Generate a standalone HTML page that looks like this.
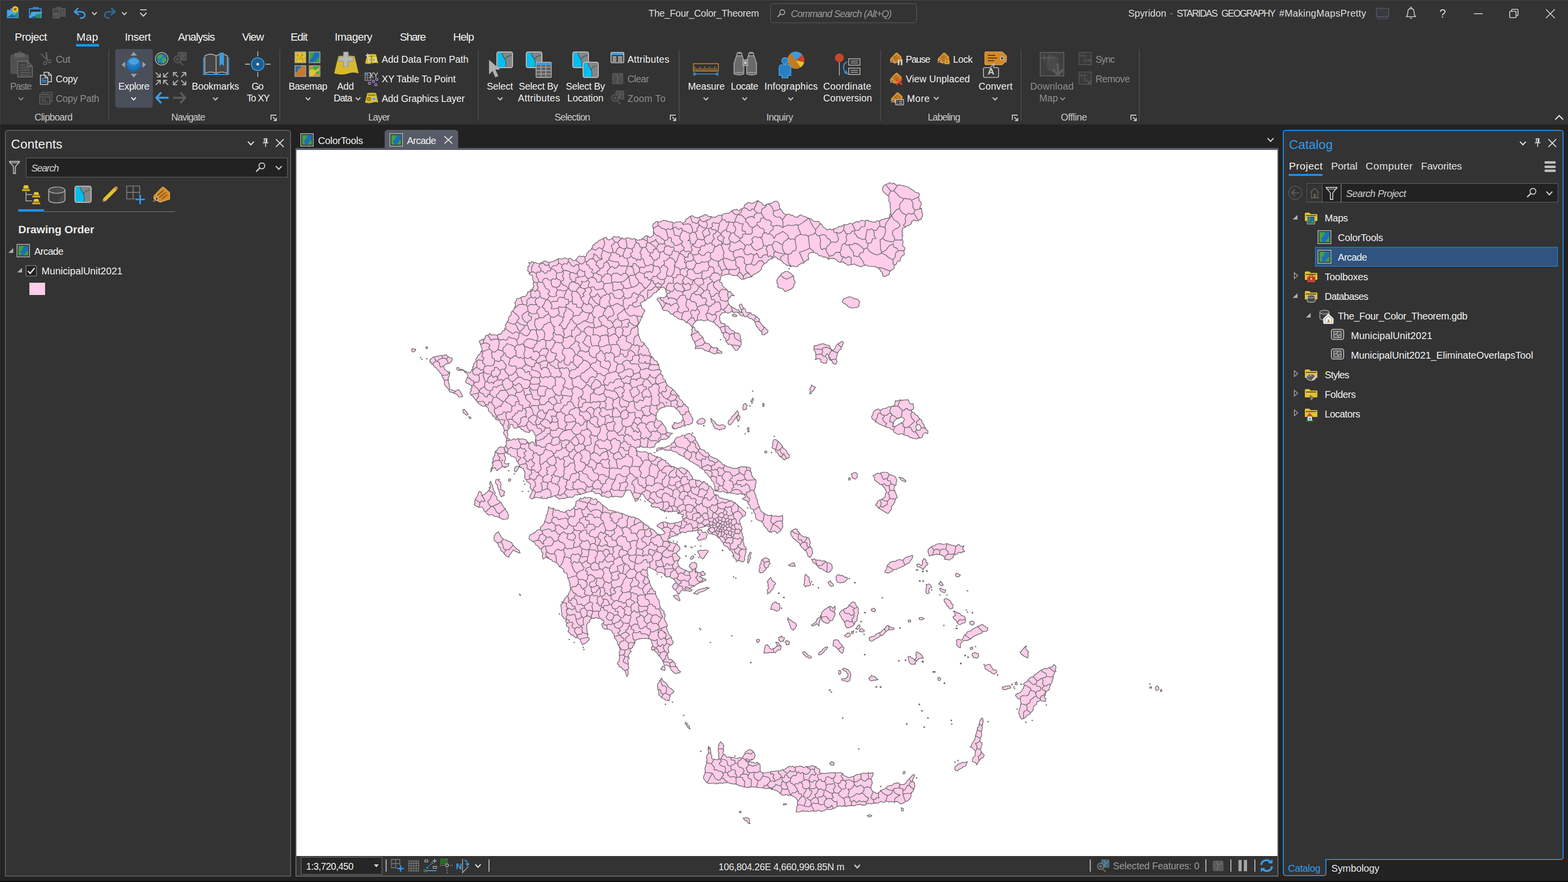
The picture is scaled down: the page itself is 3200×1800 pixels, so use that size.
<!DOCTYPE html>
<html lang="en">
<head>
<meta charset="utf-8">
<title>The_Four_Color_Theorem - ArcGIS Pro</title>
<style>
html,body{margin:0;padding:0;}
body{width:3200px;height:1800px;position:relative;overflow:hidden;background:#222;font-family:"Liberation Sans",sans-serif;}
div,span.t,svg.i{position:absolute;}
span.t{white-space:nowrap;line-height:1;}
svg.i{overflow:visible;}
</style>
</head>
<body>
<div class="ribbon" style="left:0px;top:0px;width:3200px;height:254px;background:#333333;"></div>
<div style="left:0px;top:0px;width:3200px;height:1px;background:#454545;"></div>
<div style="left:0px;top:0px;width:1px;height:254px;background:#444444;"></div>
<div style="left:0px;top:254px;width:1px;height:1546px;background:#2a2a2a;"></div>
<span class="t" style="left:1323.5px;top:18.1px;font-size:19.5px;color:#dedede;letter-spacing:-0.26px;">The_Four_Color_Theorem</span>
<div style="left:1572px;top:7px;width:299px;height:39.5px;border:1.5px solid #606060;border-radius:6px;box-sizing:border-box;"></div>
<span class="t" style="left:1614.0px;top:18.5px;font-size:19.5px;color:#9a9a9a;letter-spacing:-0.90px;font-style:italic;">Command Search (Alt+Q)</span>
<span id="user-label">
<span class="t" style="left:2302.5px;top:18.1px;font-size:19.5px;color:#dedede;letter-spacing:0.08px;">Spyridon</span>
<span class="t" style="left:2387.5px;top:18.1px;font-size:19.5px;color:#8c8c8c;">-</span>
<span class="t" style="left:2401.5px;top:18.1px;font-size:19.5px;color:#dedede;letter-spacing:-1.74px;">STARIDAS</span>
<span class="t" style="left:2492.5px;top:18.1px;font-size:19.5px;color:#dedede;letter-spacing:-1.85px;">GEOGRAPHY</span>
<span class="t" style="left:2610.6px;top:18.1px;font-size:19.5px;color:#dedede;letter-spacing:0.32px;">#MakingMapsPretty</span>
</span>
<span class="t" style="left:2937.5px;top:16.2px;font-size:24px;color:#d6d6d6;">?</span>
<span class="t" style="left:30.0px;top:65.0px;font-size:22.5px;color:#f2f2f2;letter-spacing:-0.62px;">Project</span>
<span class="t" style="left:156.0px;top:65.0px;font-size:22.5px;color:#f2f2f2;letter-spacing:0.27px;">Map</span>
<span class="t" style="left:254.7px;top:65.0px;font-size:22.5px;color:#f2f2f2;letter-spacing:-0.59px;">Insert</span>
<span class="t" style="left:363.0px;top:65.0px;font-size:22.5px;color:#f2f2f2;letter-spacing:-1.11px;">Analysis</span>
<span class="t" style="left:494.0px;top:65.0px;font-size:22.5px;color:#f2f2f2;letter-spacing:-1.12px;">View</span>
<span class="t" style="left:593.0px;top:65.0px;font-size:22.5px;color:#f2f2f2;letter-spacing:-1.26px;">Edit</span>
<span class="t" style="left:683.0px;top:65.0px;font-size:22.5px;color:#f2f2f2;letter-spacing:-0.71px;">Imagery</span>
<span class="t" style="left:816.0px;top:65.0px;font-size:22.5px;color:#f2f2f2;letter-spacing:-1.61px;">Share</span>
<span class="t" style="left:924.8px;top:65.0px;font-size:22.5px;color:#f2f2f2;letter-spacing:-1.12px;">Help</span>
<div style="left:155px;top:90px;width:47px;height:5px;background:#0f9bf5;"></div>
<div style="left:221px;top:101px;width:2px;height:146px;background:#484848;"></div>
<div style="left:570px;top:101px;width:2px;height:146px;background:#484848;"></div>
<div style="left:975px;top:101px;width:2px;height:146px;background:#484848;"></div>
<div style="left:1385px;top:101px;width:2px;height:146px;background:#484848;"></div>
<div style="left:1796px;top:101px;width:2px;height:146px;background:#484848;"></div>
<div style="left:2083px;top:101px;width:2px;height:146px;background:#484848;"></div>
<div style="left:2324px;top:101px;width:2px;height:146px;background:#484848;"></div>
<span class="t" style="left:70.6px;top:229.5px;font-size:19.5px;color:#c8c8c8;letter-spacing:-0.72px;">Clipboard</span>
<span class="t" style="left:349.4px;top:229.5px;font-size:19.5px;color:#c8c8c8;letter-spacing:-1.05px;">Navigate</span>
<span class="t" style="left:751.5px;top:229.5px;font-size:19.5px;color:#c8c8c8;letter-spacing:-1.07px;">Layer</span>
<span class="t" style="left:1131.7px;top:229.5px;font-size:19.5px;color:#c8c8c8;letter-spacing:-0.90px;">Selection</span>
<span class="t" style="left:1564.0px;top:229.5px;font-size:19.5px;color:#c8c8c8;letter-spacing:-0.65px;">Inquiry</span>
<span class="t" style="left:1893.5px;top:229.5px;font-size:19.5px;color:#c8c8c8;letter-spacing:-1.03px;">Labeling</span>
<span class="t" style="left:2165.0px;top:229.5px;font-size:19.5px;color:#c8c8c8;letter-spacing:-0.40px;">Offline</span>
<svg class="i" style="left:552px;top:234px;" width="14" height="13" viewBox="0 0 14 13"><path d="M1 11 V1 H12" fill="none" stroke="#d0d0d0" stroke-width="1.8"/><path d="M5 5 L12 12 M12 6.5 V12 H6.5" fill="none" stroke="#d0d0d0" stroke-width="1.8"/></svg>
<svg class="i" style="left:1367px;top:234px;" width="14" height="13" viewBox="0 0 14 13"><path d="M1 11 V1 H12" fill="none" stroke="#d0d0d0" stroke-width="1.8"/><path d="M5 5 L12 12 M12 6.5 V12 H6.5" fill="none" stroke="#d0d0d0" stroke-width="1.8"/></svg>
<svg class="i" style="left:2065px;top:234px;" width="14" height="13" viewBox="0 0 14 13"><path d="M1 11 V1 H12" fill="none" stroke="#d0d0d0" stroke-width="1.8"/><path d="M5 5 L12 12 M12 6.5 V12 H6.5" fill="none" stroke="#d0d0d0" stroke-width="1.8"/></svg>
<svg class="i" style="left:2306.5px;top:234px;" width="14" height="13" viewBox="0 0 14 13"><path d="M1 11 V1 H12" fill="none" stroke="#d0d0d0" stroke-width="1.8"/><path d="M5 5 L12 12 M12 6.5 V12 H6.5" fill="none" stroke="#d0d0d0" stroke-width="1.8"/></svg>
<div style="left:235px;top:100px;width:77px;height:120px;background:#4a4e59;border-radius:5px;"></div>
<span class="t" style="left:20.7px;top:166.5px;font-size:19.5px;color:#8e8e8e;letter-spacing:-1.34px;">Paste</span>
<span class="t" style="left:241.5px;top:166.5px;font-size:19.5px;color:#f2f2f2;letter-spacing:-0.44px;">Explore</span>
<span class="t" style="left:391.6px;top:166.5px;font-size:19.5px;color:#f2f2f2;letter-spacing:-0.14px;">Bookmarks</span>
<span class="t" style="left:513.5px;top:166.5px;font-size:19.5px;color:#f2f2f2;letter-spacing:-1.51px;">Go</span>
<span class="t" style="left:503.4px;top:190.5px;font-size:19.5px;color:#f2f2f2;letter-spacing:-1.16px;">To XY</span>
<span class="t" style="left:589.0px;top:166.5px;font-size:19.5px;color:#f2f2f2;letter-spacing:-0.56px;">Basemap</span>
<span class="t" style="left:688.0px;top:166.5px;font-size:19.5px;color:#f2f2f2;letter-spacing:-0.15px;">Add</span>
<span class="t" style="left:681.0px;top:190.5px;font-size:19.5px;color:#f2f2f2;letter-spacing:-1.06px;">Data</span>
<span class="t" style="left:993.5px;top:166.5px;font-size:19.5px;color:#f2f2f2;letter-spacing:-0.14px;">Select</span>
<span class="t" style="left:1058.7px;top:166.5px;font-size:19.5px;color:#f2f2f2;letter-spacing:-0.26px;">Select By</span>
<span class="t" style="left:1057.0px;top:190.5px;font-size:19.5px;color:#f2f2f2;letter-spacing:0.40px;">Attributes</span>
<span class="t" style="left:1154.7px;top:166.5px;font-size:19.5px;color:#f2f2f2;letter-spacing:-0.28px;">Select By</span>
<span class="t" style="left:1157.8px;top:190.5px;font-size:19.5px;color:#f2f2f2;letter-spacing:0.02px;">Location</span>
<span class="t" style="left:1404.0px;top:166.5px;font-size:19.5px;color:#f2f2f2;letter-spacing:-0.14px;">Measure</span>
<span class="t" style="left:1491.6px;top:166.5px;font-size:19.5px;color:#f2f2f2;letter-spacing:-0.53px;">Locate</span>
<span class="t" style="left:1560.0px;top:166.5px;font-size:19.5px;color:#f2f2f2;letter-spacing:0.25px;">Infographics</span>
<span class="t" style="left:1680.0px;top:166.5px;font-size:19.5px;color:#f2f2f2;letter-spacing:0.29px;">Coordinate</span>
<span class="t" style="left:1680.0px;top:190.5px;font-size:19.5px;color:#f2f2f2;letter-spacing:0.10px;">Conversion</span>
<span class="t" style="left:1997.0px;top:166.5px;font-size:19.5px;color:#f2f2f2;letter-spacing:0.20px;">Convert</span>
<span class="t" style="left:2102.5px;top:166.5px;font-size:19.5px;color:#8e8e8e;letter-spacing:0.25px;">Download</span>
<span class="t" style="left:2121.0px;top:190.5px;font-size:19.5px;color:#8e8e8e;letter-spacing:0.03px;">Map</span>
<span class="t" style="left:113.8px;top:111.9px;font-size:19.5px;color:#8e8e8e;letter-spacing:-0.27px;">Cut</span>
<span class="t" style="left:113.8px;top:151.5px;font-size:19.5px;color:#f2f2f2;letter-spacing:-0.21px;">Copy</span>
<span class="t" style="left:113.8px;top:191.5px;font-size:19.5px;color:#8e8e8e;letter-spacing:-0.28px;">Copy Path</span>
<span class="t" style="left:779.0px;top:111.9px;font-size:19.5px;color:#f2f2f2;letter-spacing:-0.04px;">Add Data From Path</span>
<span class="t" style="left:779.0px;top:151.5px;font-size:19.5px;color:#f2f2f2;letter-spacing:-0.12px;">XY Table To Point</span>
<span class="t" style="left:779.0px;top:191.5px;font-size:19.5px;color:#f2f2f2;letter-spacing:-0.17px;">Add Graphics Layer</span>
<span class="t" style="left:1280.4px;top:111.9px;font-size:19.5px;color:#f2f2f2;letter-spacing:0.36px;">Attributes</span>
<span class="t" style="left:1280.4px;top:151.5px;font-size:19.5px;color:#8e8e8e;letter-spacing:-0.55px;">Clear</span>
<span class="t" style="left:1280.4px;top:191.5px;font-size:19.5px;color:#8e8e8e;letter-spacing:0.35px;">Zoom To</span>
<span class="t" style="left:1848.4px;top:111.9px;font-size:19.5px;color:#f2f2f2;letter-spacing:-1.22px;">Pause</span>
<span class="t" style="left:1945.0px;top:111.9px;font-size:19.5px;color:#f2f2f2;letter-spacing:-0.40px;">Lock</span>
<span class="t" style="left:1848.4px;top:151.5px;font-size:19.5px;color:#f2f2f2;letter-spacing:0.11px;">View Unplaced</span>
<span class="t" style="left:1851.0px;top:191.5px;font-size:19.5px;color:#f2f2f2;letter-spacing:0.52px;">More</span>
<span class="t" style="left:2235.7px;top:111.9px;font-size:19.5px;color:#8e8e8e;letter-spacing:-1.18px;">Sync</span>
<span class="t" style="left:2235.7px;top:151.5px;font-size:19.5px;color:#8e8e8e;letter-spacing:-0.46px;">Remove</span>
<svg class="i" style="left:36.25px;top:196.5px;" width="13.5" height="9" viewBox="0 0 13.5 9"><path d="M2 2 L6.75 7 L11.5 2" fill="none" stroke="#8e8e8e" stroke-width="2.2"/></svg>
<svg class="i" style="left:266.25px;top:196.5px;" width="13.5" height="9" viewBox="0 0 13.5 9"><path d="M2 2 L6.75 7 L11.5 2" fill="none" stroke="#f2f2f2" stroke-width="2.2"/></svg>
<svg class="i" style="left:433.25px;top:196.5px;" width="13.5" height="9" viewBox="0 0 13.5 9"><path d="M2 2 L6.75 7 L11.5 2" fill="none" stroke="#d0d0d0" stroke-width="2.2"/></svg>
<svg class="i" style="left:622.25px;top:196.5px;" width="13.5" height="9" viewBox="0 0 13.5 9"><path d="M2 2 L6.75 7 L11.5 2" fill="none" stroke="#d0d0d0" stroke-width="2.2"/></svg>
<svg class="i" style="left:723.75px;top:196.5px;" width="13.5" height="9" viewBox="0 0 13.5 9"><path d="M2 2 L6.75 7 L11.5 2" fill="none" stroke="#d0d0d0" stroke-width="2.2"/></svg>
<svg class="i" style="left:1013.75px;top:196.5px;" width="13.5" height="9" viewBox="0 0 13.5 9"><path d="M2 2 L6.75 7 L11.5 2" fill="none" stroke="#d0d0d0" stroke-width="2.2"/></svg>
<svg class="i" style="left:1434.25px;top:196.5px;" width="13.5" height="9" viewBox="0 0 13.5 9"><path d="M2 2 L6.75 7 L11.5 2" fill="none" stroke="#d0d0d0" stroke-width="2.2"/></svg>
<svg class="i" style="left:1513.25px;top:196.5px;" width="13.5" height="9" viewBox="0 0 13.5 9"><path d="M2 2 L6.75 7 L11.5 2" fill="none" stroke="#d0d0d0" stroke-width="2.2"/></svg>
<svg class="i" style="left:1607.25px;top:196.5px;" width="13.5" height="9" viewBox="0 0 13.5 9"><path d="M2 2 L6.75 7 L11.5 2" fill="none" stroke="#d0d0d0" stroke-width="2.2"/></svg>
<svg class="i" style="left:1903.75px;top:195.5px;" width="13.5" height="9" viewBox="0 0 13.5 9"><path d="M2 2 L6.75 7 L11.5 2" fill="none" stroke="#d0d0d0" stroke-width="2.2"/></svg>
<svg class="i" style="left:2023.95px;top:196.5px;" width="13.5" height="9" viewBox="0 0 13.5 9"><path d="M2 2 L6.75 7 L11.5 2" fill="none" stroke="#d0d0d0" stroke-width="2.2"/></svg>
<svg class="i" style="left:2162.25px;top:196.5px;" width="13.5" height="9" viewBox="0 0 13.5 9"><path d="M2 2 L6.75 7 L11.5 2" fill="none" stroke="#8e8e8e" stroke-width="2.2"/></svg>
<svg class="i" style="left:185.75px;top:23.0px;" width="13.5" height="9" viewBox="0 0 13.5 9"><path d="M2 2 L6.75 7 L11.5 2" fill="none" stroke="#d0d0d0" stroke-width="2.2"/></svg>
<svg class="i" style="left:247.45px;top:23.0px;" width="13.5" height="9" viewBox="0 0 13.5 9"><path d="M2 2 L6.75 7 L11.5 2" fill="none" stroke="#d0d0d0" stroke-width="2.2"/></svg>
<svg class="i" style="left:3170px;top:232px;" width="24" height="16" viewBox="0 0 24 16"><path d="M4 12 L12 4 L20 12" fill="none" stroke="#e6e6e6" stroke-width="2.4"/></svg>
<svg class="i" style="left:3006px;top:20px;" width="22" height="16" viewBox="0 0 22 16"><path d="M2 8 H20" stroke="#e0e0e0" stroke-width="1.6"/></svg>
<svg class="i" style="left:3078px;top:16px;" width="24" height="24" viewBox="0 0 24 24"><rect x="3" y="7" width="13" height="13" fill="none" stroke="#e0e0e0" stroke-width="1.6" rx="1.5"/><path d="M7 7 V4.5 Q7 3 8.5 3 H18.5 Q20 3 20 4.5 V14.5 Q20 16 18.5 16 H16" fill="none" stroke="#e0e0e0" stroke-width="1.6"/></svg>
<svg class="i" style="left:3152px;top:16px;" width="24" height="24" viewBox="0 0 24 24"><path d="M3 3 L21 21 M21 3 L3 21" stroke="#e0e0e0" stroke-width="1.7"/></svg>
<div class="pane" style="left:10px;top:265px;width:583.5px;height:1523.5px;background:#333333;border:2px solid #5b5d61;border-radius:6px 6px 0 0;box-sizing:border-box;"></div>
<span class="t" style="left:22.5px;top:280.6px;font-size:26px;color:#f2f2f2;letter-spacing:0.11px;">Contents</span>
<svg class="i" style="left:503.5px;top:286.75px;" width="16" height="10.5" viewBox="0 0 16 10.5"><path d="M2 2 L8.0 8.5 L14 2" fill="none" stroke="#e0e0e0" stroke-width="2.4"/></svg>
<svg class="i" style="left:560px;top:281px;" width="22" height="22" viewBox="0 0 22 22"><path d="M3 3 L19 19 M19 3 L3 19" stroke="#e0e0e0" stroke-width="1.8"/></svg>
<div style="left:53px;top:322px;width:534px;height:40px;background:#222222;border:1.5px solid #6a6a6a;box-sizing:border-box;"></div>
<span class="t" style="left:63.7px;top:332.7px;font-size:20px;color:#cfcfcf;letter-spacing:-1.31px;font-style:italic;">Search</span>
<svg class="i" style="left:561.0px;top:336.75px;" width="16" height="10.5" viewBox="0 0 16 10.5"><path d="M2 2 L8.0 8.5 L14 2" fill="none" stroke="#d0d0d0" stroke-width="2.4"/></svg>
<div style="left:37px;top:427px;width:53px;height:5px;background:#1e90f0;"></div>
<div style="left:90px;top:431px;width:267px;height:1.5px;background:#5c5c5c;"></div>
<span class="t" style="left:37.3px;top:457.6px;font-size:22.5px;color:#e8e8e8;letter-spacing:-0.09px;font-weight:bold;">Drawing Order</span>
<span class="t" style="left:70.0px;top:502.6px;font-size:20px;color:#f2f2f2;letter-spacing:-0.77px;">Arcade</span>
<span class="t" style="left:84.8px;top:543.1px;font-size:20px;color:#f2f2f2;letter-spacing:0.04px;">MunicipalUnit2021</span>
<div style="left:59.5px;top:576.5px;width:32.5px;height:25.5px;background:#ffcce9;border:1px solid #e0e0e0;box-sizing:border-box;"></div>
<div class="mapview" style="left:603px;top:302px;width:2005.5px;height:1486.5px;background:#333;border:2px solid #66686e;box-sizing:border-box;border-top:none;"></div>
<div style="left:785px;top:265px;width:150px;height:40px;background:#585c68;border-radius:6px 6px 0 0;"></div>
<div style="left:604px;top:302px;width:2004px;height:5px;background:#585c68;"></div>
<span class="t" style="left:649.0px;top:276.5px;font-size:20px;color:#f2f2f2;letter-spacing:-0.28px;">ColorTools</span>
<span class="t" style="left:830.4px;top:276.5px;font-size:20px;color:#f2f2f2;letter-spacing:-0.75px;">Arcade</span>
<svg class="i" style="left:904px;top:275px;" width="22" height="22" viewBox="0 0 22 22"><path d="M3 3 L19 18 M19 3 L3 18" stroke="#e8e8e8" stroke-width="1.8"/></svg>
<svg class="i" style="left:2585.0px;top:279.75px;" width="16" height="10.5" viewBox="0 0 16 10.5"><path d="M2 2 L8.0 8.5 L14 2" fill="none" stroke="#d0d0d0" stroke-width="2.4"/></svg>
<div style="left:613.5px;top:1749px;width:166px;height:35.5px;background:#262626;border:1.5px solid #7a7a7a;box-sizing:border-box;"></div>
<span class="t" style="left:624.7px;top:1758.5px;font-size:19.5px;color:#f2f2f2;letter-spacing:-0.61px;">1:3,720,450</span>
<svg class="i" style="left:762px;top:1763px;" width="12" height="8" viewBox="0 0 12 8"><path d="M1 1 H11 L6 7 Z" fill="#d8d8d8"/></svg>
<div style="left:787.25px;top:1754px;width:1.5px;height:25px;background:#b8b8b8;"></div>
<div style="left:997.25px;top:1754px;width:1.5px;height:25px;background:#b8b8b8;"></div>
<div style="left:2224.25px;top:1754px;width:1.5px;height:25px;background:#b8b8b8;"></div>
<div style="left:2460.25px;top:1754px;width:1.5px;height:25px;background:#b8b8b8;"></div>
<div style="left:2511.25px;top:1754px;width:1.5px;height:25px;background:#b8b8b8;"></div>
<div style="left:2560.25px;top:1754px;width:1.5px;height:25px;background:#b8b8b8;"></div>
<svg class="i" style="left:968.2px;top:1762.0px;" width="15" height="10" viewBox="0 0 15 10"><path d="M2 2 L7.5 8 L13 2" fill="none" stroke="#e0e0e0" stroke-width="2.4"/></svg>
<span class="t" style="left:1466.4px;top:1760.1px;font-size:19.5px;color:#e8e8e8;letter-spacing:-0.33px;">106,804.26E 4,660,996.85N m</span>
<svg class="i" style="left:1741.5px;top:1763.0px;" width="15" height="10" viewBox="0 0 15 10"><path d="M2 2 L7.5 8 L13 2" fill="none" stroke="#c0c0c0" stroke-width="3"/></svg>
<div style="left:2232px;top:1750px;width:222px;height:34px;background:#2f2f2f;"></div>
<span class="t" style="left:2271.6px;top:1758.3px;font-size:19.5px;color:#9a9a9a;letter-spacing:-0.19px;">Selected Features: 0</span>
<div class="pane" style="left:2618px;top:265px;width:573px;height:1490px;background:#333333;border:2px solid #2391ee;border-radius:6px;box-sizing:border-box;"></div>
<div style="left:2618px;top:1753px;width:89px;height:35px;background:#333333;border:2px solid #2391ee;border-radius:0 0 6px 6px;box-sizing:border-box;border-top:none;"></div>
<div style="left:2620px;top:1745px;width:85px;height:12px;background:#333333;"></div>
<div style="left:2618px;top:1740px;width:2px;height:16px;background:#2391ee;"></div>
<span class="t" style="left:2628.6px;top:1761.9px;font-size:20px;color:#2d9cf4;letter-spacing:-0.46px;">Catalog</span>
<span class="t" style="left:2717.0px;top:1761.9px;font-size:20px;color:#e8e8e8;letter-spacing:-0.12px;">Symbology</span>
<span class="t" style="left:2630.4px;top:282.0px;font-size:26px;color:#2d9cf4;">Catalog</span>
<svg class="i" style="left:3100.0px;top:286.75px;" width="16" height="10.5" viewBox="0 0 16 10.5"><path d="M2 2 L8.0 8.5 L14 2" fill="none" stroke="#e0e0e0" stroke-width="2.4"/></svg>
<svg class="i" style="left:3157px;top:281px;" width="22" height="22" viewBox="0 0 22 22"><path d="M3 3 L19 19 M19 3 L3 19" stroke="#e0e0e0" stroke-width="1.8"/></svg>
<span class="t" style="left:2630.4px;top:327.7px;font-size:21px;color:#f2f2f2;letter-spacing:0.54px;">Project</span>
<div style="left:2630px;top:355px;width:69px;height:4px;background:#1e90f0;"></div>
<span class="t" style="left:2716.5px;top:327.7px;font-size:21px;color:#e0e0e0;letter-spacing:-0.19px;">Portal</span>
<span class="t" style="left:2787.0px;top:327.7px;font-size:21px;color:#e0e0e0;letter-spacing:0.54px;">Computer</span>
<span class="t" style="left:2900.0px;top:327.7px;font-size:21px;color:#e0e0e0;letter-spacing:-0.32px;">Favorites</span>
<div style="left:3152px;top:329.0px;width:23px;height:5px;background:#bdbdbd;border-radius:2px;"></div>
<div style="left:3152px;top:337.5px;width:23px;height:5px;background:#bdbdbd;border-radius:2px;"></div>
<div style="left:3152px;top:346.0px;width:23px;height:5px;background:#bdbdbd;border-radius:2px;"></div>
<div style="left:2667px;top:374px;width:513px;height:39px;background:#222222;border:1.5px solid #6a6a6a;box-sizing:border-box;"></div>
<div style="left:2668.5px;top:375.5px;width:29px;height:36px;background:#333;"></div>
<div style="left:2697.5px;top:375.5px;width:1.5px;height:36px;background:#6a6a6a;"></div>
<div style="left:2736px;top:375.5px;width:1.5px;height:36px;background:#6a6a6a;"></div>
<span class="t" style="left:2747.0px;top:384.6px;font-size:20px;color:#cfcfcf;letter-spacing:-0.64px;font-style:italic;">Search Project</span>
<svg class="i" style="left:3154.0px;top:388.75px;" width="16" height="10.5" viewBox="0 0 16 10.5"><path d="M2 2 L8.0 8.5 L14 2" fill="none" stroke="#d0d0d0" stroke-width="2.4"/></svg>
<div style="left:2683.5px;top:504px;width:495px;height:39.5px;background:#2f5480;border:1.5px solid #2391ee;box-sizing:border-box;"></div>
<span class="t" style="left:2703.6px;top:435.1px;font-size:20px;color:#f2f2f2;letter-spacing:-0.50px;">Maps</span>
<span class="t" style="left:2730.3px;top:474.9px;font-size:20px;color:#f2f2f2;letter-spacing:-0.22px;">ColorTools</span>
<span class="t" style="left:2730.3px;top:514.9px;font-size:20px;color:#f2f2f2;letter-spacing:-0.73px;">Arcade</span>
<span class="t" style="left:2703.6px;top:554.6px;font-size:20px;color:#f2f2f2;letter-spacing:-0.21px;">Toolboxes</span>
<span class="t" style="left:2703.6px;top:594.6px;font-size:20px;color:#f2f2f2;letter-spacing:-0.81px;">Databases</span>
<span class="t" style="left:2730.3px;top:634.7px;font-size:20px;color:#f2f2f2;letter-spacing:-0.45px;">The_Four_Color_Theorem.gdb</span>
<span class="t" style="left:2756.9px;top:674.8px;font-size:20px;color:#f2f2f2;letter-spacing:0.10px;">MunicipalUnit2021</span>
<span class="t" style="left:2756.9px;top:714.8px;font-size:20px;color:#f2f2f2;letter-spacing:-0.07px;">MunicipalUnit2021_EliminateOverlapsTool</span>
<span class="t" style="left:2703.6px;top:754.8px;font-size:20px;color:#f2f2f2;letter-spacing:-0.85px;">Styles</span>
<span class="t" style="left:2703.6px;top:794.8px;font-size:20px;color:#f2f2f2;letter-spacing:-0.55px;">Folders</span>
<span class="t" style="left:2703.6px;top:834.8px;font-size:20px;color:#f2f2f2;letter-spacing:-0.62px;">Locators</span>
<div style="left:0px;top:1798px;width:3200px;height:2px;background:#050505;"></div>
<svg class="i" style="left:13px;top:13px;" width="27" height="26" viewBox="0 0 27 26"><path d="M1 7 H8 V4 H13 V7 H25 V24 H1 Z" fill="#3a96dd"/><path d="M3 9 H23 V22 H3 Z" fill="#49a7e6"/><path d="M3 22 L12 15 L16 18 L23 12 V22 Z" fill="#2e8b57"/><path d="M3 22 Q10 14 18 22 Z" fill="#1d5f9c"/><circle cx="18" cy="6" r="6.2" fill="#e6c220"/><circle cx="18" cy="6" r="2.8" fill="#8a6a14"/><path d="M18 -1 V13 M11 6 H25 M13 1 L23 11 M23 1 L13 11" stroke="#e6c220" stroke-width="1.6"/><circle cx="18" cy="6" r="2.8" fill="#8a6a14"/></svg>
<svg class="i" style="left:59px;top:14px;" width="28" height="24" viewBox="0 0 28 24"><path d="M9 4 V1.5 H19 V4" fill="none" stroke="#3a96dd" stroke-width="2"/><path d="M1 4 H25 V22 H1 Z" fill="none" stroke="#3a96dd" stroke-width="2"/><path d="M5 10 H27 L23 23 H1 Z" fill="#49a7e6"/><path d="M8 23 Q15 12 25 15 L23 23 Z" fill="#2e8b57"/><path d="M4 23 Q10 15 17 23 Z" fill="#1d5f9c"/></svg>
<svg class="i" style="left:107px;top:14px;" width="28" height="25" viewBox="0 0 28 25"><path d="M8 4 V1.5 H18 V4" fill="none" stroke="#5a5a5a" stroke-width="1.8"/><rect x="1" y="4" width="13" height="19" fill="#444" stroke="#5e5e5e" stroke-width="1.6"/><rect x="14" y="4" width="12" height="15" fill="#4a4a4a" stroke="#5e5e5e" stroke-width="1.6"/><rect x="3" y="12" width="9" height="6" fill="#5a5a5a"/><rect x="5" y="19" width="8" height="4" fill="#555"/><path d="M18 8 L22 12 L20 17" fill="none" stroke="#5e5e5e" stroke-width="1.4"/></svg>
<svg class="i" style="left:149px;top:15px;" width="28" height="25" viewBox="0 0 28 25"><path d="M10 2 L3 9 L11 15" fill="none" stroke="#3d9fe3" stroke-width="3" stroke-linejoin="round" stroke-linecap="round"/><path d="M4 9 H16 Q25 10 24 17 Q23 22 15 22" fill="none" stroke="#3d9fe3" stroke-width="3" stroke-linecap="round"/></svg>
<svg class="i" style="left:210px;top:15px;" width="28" height="25" viewBox="0 0 28 25"><path d="M18 2 L25 9 L17 15" fill="none" stroke="#2f6b98" stroke-width="3" stroke-linejoin="round" stroke-linecap="round"/><path d="M24 9 H12 Q3 10 4 17 Q5 22 13 22" fill="none" stroke="#2f6b98" stroke-width="3" stroke-linecap="round"/></svg>
<svg class="i" style="left:284px;top:18px;" width="18" height="18" viewBox="0 0 18 18"><path d="M2 2 H15" stroke="#d8d8d8" stroke-width="1.8"/><path d="M2 8 L8.5 15 L15 8" fill="none" stroke="#d8d8d8" stroke-width="2.2"/></svg>
<svg class="i" style="left:1586px;top:18px;" width="18" height="18" viewBox="0 0 18 18"><circle cx="10.5" cy="7" r="5" fill="none" stroke="#b0b0b0" stroke-width="1.8"/><path d="M7 10.5 L1.5 16" stroke="#b0b0b0" stroke-width="2.2" stroke-linecap="round"/></svg>
<svg class="i" style="left:2808px;top:16px;" width="28" height="24" viewBox="0 0 28 24"><rect x="1" y="1" width="25" height="17" rx="2" fill="#383a41" stroke="#555a64" stroke-width="1.6"/><rect x="3" y="19" width="21" height="4" rx="1.5" fill="#36383f" stroke="#50545e" stroke-width="1.2"/></svg>
<svg class="i" style="left:2867px;top:13px;" width="26" height="28" viewBox="0 0 26 28"><path d="M3 21 Q6 18 6 12 Q6 4.5 12.5 4.5 Q19 4.5 19 12 Q19 18 22 21 Z" fill="none" stroke="#dcdcdc" stroke-width="1.6" stroke-linejoin="round"/><circle cx="12.5" cy="3" r="1.6" fill="none" stroke="#dcdcdc" stroke-width="1.3"/><path d="M10.5 23.5 Q12.5 25.5 14.5 23.5" fill="none" stroke="#dcdcdc" stroke-width="1.6"/></svg>
<svg class="i" style="left:20px;top:105px;" width="48" height="56" viewBox="0 0 48 56"><rect x="1" y="6" width="38" height="40" rx="4" fill="#515151"/><rect x="9" y="3" width="22" height="9" rx="3" fill="#626262"/><circle cx="20" cy="4" r="3.2" fill="none" stroke="#626262" stroke-width="1.8"/><path d="M16 20 H36 L46 30 V52 H16 Z" fill="#424242" stroke="#6c6c6c" stroke-width="1.8"/><path d="M36 20 V30 H46" fill="none" stroke="#6c6c6c" stroke-width="1.8"/><path d="M21 28 H32 M21 33 H41 M21 38 H41 M21 43 H41 M21 48 H41" stroke="#666" stroke-width="1.5"/></svg>
<svg class="i" style="left:83px;top:106px;" width="24" height="28" viewBox="0 0 24 28"><path d="M11 1 L13 17 M1 4 L14 17" stroke="#606060" stroke-width="2.4" stroke-linecap="round"/><path d="M11 1 Q13 8 13 17" stroke="#606060" stroke-width="3"/><circle cx="9" cy="23" r="3.2" fill="none" stroke="#606060" stroke-width="1.8"/><circle cx="18" cy="19" r="3.2" fill="none" stroke="#606060" stroke-width="1.8"/></svg>
<svg class="i" style="left:81px;top:146px;" width="26" height="28" viewBox="0 0 26 28"><path d="M9 1.5 H18 L24 7.5 V21 H9 Z" fill="#3a3a3a" stroke="#e0e0e0" stroke-width="1.6"/><path d="M18 1.5 V7.5 H24" fill="none" stroke="#e0e0e0" stroke-width="1.4"/><path d="M1.5 7.5 H11 L16.5 13 V26.5 H1.5 Z" fill="#3a3a3a" stroke="#e0e0e0" stroke-width="1.6"/><path d="M11 7.5 V13 H16.5" fill="none" stroke="#e0e0e0" stroke-width="1.4"/><path d="M4 14.5 H9 M4 18 H14 M4 21.5 H14" stroke="#2f9be6" stroke-width="2"/></svg>
<svg class="i" style="left:80px;top:187px;" width="28" height="27" viewBox="0 0 28 27"><path d="M5 6 V1.5 H26 V20 H22" fill="none" stroke="#626262" stroke-width="1.7"/><rect x="1" y="6" width="21" height="19.5" fill="#3a3a3a" stroke="#626262" stroke-width="1.7"/><path d="M1 11 H22" stroke="#626262" stroke-width="1.4"/><path d="M5 14 L8 22 M10 14 L13 22 M16.5 21 V22.5" stroke="#626262" stroke-width="1.8"/><path d="M9 4 H11 M14 4 H16" stroke="#626262" stroke-width="1.4"/></svg>
<svg class="i" style="left:245px;top:104px;" width="56" height="56" viewBox="0 0 56 56"><defs><radialGradient id="gb" cx="0.45" cy="0.3" r="0.75"><stop offset="0" stop-color="#3f97dc"/><stop offset="0.6" stop-color="#1e75bb"/><stop offset="1" stop-color="#155d98"/></radialGradient></defs><circle cx="28" cy="28" r="15" fill="url(#gb)"/><ellipse cx="28" cy="21.5" rx="10.5" ry="6.5" fill="#4da3e4" opacity="0.85"/><path d="M28 1.5 L34.5 9.5 H21.5 Z M28 54.5 L34.5 46.5 H21.5 Z M3 28 L10.5 21.5 V34.5 Z M53 28 L45.5 21.5 V34.5 Z" fill="#9c9c9c"/></svg>
<svg class="i" style="left:316px;top:106px;" width="28" height="28" viewBox="0 0 28 28"><circle cx="14" cy="14" r="12.8" fill="#2a2a2a" stroke="#c6c6c6" stroke-width="1.6"/><circle cx="14" cy="14" r="10.5" fill="#2478c0"/><path d="M8 6 Q12 4 15 6 Q17 9 14 11 Q11 12 10 15 Q7 14 5 11 Q5 8 8 6 Z M15 13 Q20 11 23 14 Q24 18 21 21 Q17 24 15 21 Q16 18 14 16 Z M6 17 Q9 17 10 20 Q9 23 7 21 Z" fill="#45a845"/></svg>
<svg class="i" style="left:353px;top:106px;" width="29" height="30" viewBox="0 0 29 30"><rect x="11" y="1" width="16" height="16" fill="#4a4a4a" stroke="#5e5e5e" stroke-width="1.5"/><path d="M17 2 L20 9 L18 16 M20 9 L26 6" fill="none" stroke="#666" stroke-width="1.2"/><circle cx="9" cy="15" r="7" fill="#3a3a3a" stroke="#5e5e5e" stroke-width="1.7"/><path d="M5.5 15 H12.5 M9 11.5 V18.5" stroke="#5e5e5e" stroke-width="1.6"/><path d="M14 20.5 L20 27" stroke="#555" stroke-width="2.6" stroke-linecap="round"/></svg>
<svg class="i" style="left:317px;top:147px;" width="27" height="27" viewBox="0 0 27 27"><path d="M0.8 0.8 L10 10 M2.5 10 H10 V2.5" fill="none" stroke="#b2b2b2" stroke-width="2.2"/><path d="M26.2 0.8 L17 10 M24.5 10 H17 V2.5" fill="none" stroke="#b2b2b2" stroke-width="2.2"/><path d="M0.8 26.2 L10 17 M2.5 17 H10 V24.5" fill="none" stroke="#b2b2b2" stroke-width="2.2"/><path d="M26.2 26.2 L17 17 M24.5 17 H17 V24.5" fill="none" stroke="#b2b2b2" stroke-width="2.2"/></svg>
<svg class="i" style="left:353px;top:147px;" width="27" height="27" viewBox="0 0 27 27"><path d="M10.2 10.2 L1 1 M8.5 1 H1 V8.5" fill="none" stroke="#b2b2b2" stroke-width="2.2"/><path d="M16.8 10.2 L26 1 M18.5 1 H26 V8.5" fill="none" stroke="#b2b2b2" stroke-width="2.2"/><path d="M10.2 16.8 L1 26 M8.5 26 H1 V18.5" fill="none" stroke="#b2b2b2" stroke-width="2.2"/><path d="M16.8 16.8 L26 26 M18.5 26 H26 V18.5" fill="none" stroke="#b2b2b2" stroke-width="2.2"/></svg>
<svg class="i" style="left:316px;top:186px;" width="29" height="27" viewBox="0 0 29 27"><path d="M13 2.5 L3 13.5 L13 24.5 M4 13.5 H28" fill="none" stroke="#3d9fe3" stroke-width="4"/></svg>
<svg class="i" style="left:352px;top:186px;" width="29" height="27" viewBox="0 0 29 27"><path d="M16 2.5 L26 13.5 L16 24.5 M25 13.5 H1" fill="none" stroke="#5c5c5c" stroke-width="4"/></svg>
<svg class="i" style="left:414px;top:106px;" width="54" height="48" viewBox="0 0 54 48"><path d="M1.5 11 V46 H52.5 V11" fill="none" stroke="#3a9ce0" stroke-width="2"/><path d="M4 8 Q16 1 27 8 V44 Q16 38 4 44 Z" fill="#454545" stroke="#a8a8a8" stroke-width="1.8"/><path d="M50 8 Q38 1 27 8 V44 Q38 38 50 44 Z" fill="#454545" stroke="#a8a8a8" stroke-width="1.8"/><path d="M34 1.5 H43 V29 L38.5 24.5 L34 29 Z" fill="#3a9ce0"/></svg>
<svg class="i" style="left:499px;top:104px;" width="54" height="54" viewBox="0 0 54 54"><path d="M27 1 V11 M27 43 V53 M1 27 H11 M43 27 H53" stroke="#b4b4b4" stroke-width="1.8"/><circle cx="27" cy="27" r="13" fill="#1b5e8f" stroke="#3a9ce0" stroke-width="2"/><circle cx="27" cy="27" r="2.8" fill="#e0e0e0"/></svg>
<svg class="i" style="left:601px;top:105px;" width="54" height="52" viewBox="0 0 54 52"><rect x="1" y="1" width="22" height="22" fill="#e3c330" stroke="#a4a4a4" stroke-width="1.6"/><rect x="30" y="1" width="22" height="22" fill="#3fa046" stroke="#a4a4a4" stroke-width="1.6"/><rect x="1" y="29" width="22" height="22" fill="#c47a2c" stroke="#a4a4a4" stroke-width="1.6"/><rect x="30" y="29" width="22" height="22" fill="#45a845" stroke="#a4a4a4" stroke-width="1.6"/><path d="M2 8 Q8 6 12 12 T22 14 M6 2 Q8 10 4 20 M14 2 Q12 8 18 22" fill="none" stroke="#c8862a" stroke-width="1.2"/><path d="M14 6 l4 1 l-2 3 z M8 15 l4 0 l-1 3 z" fill="#45a845"/><path d="M41 2 L51 2 L51 12 L46 14 L44 19 L38 22 L31 22 L31 17 L36 13 L38 8 Z" fill="#1d6fb5"/><path d="M2 30 H14 L12 34 L7 37 L5 42 L2 43 Z" fill="#1d6fb5"/><path d="M31 38 Q36 33 40 37 T50 32 V40 Q44 40 42 46 T34 50 H31 Z" fill="#e3c330"/><path d="M38 50 Q42 44 50 45 V50 Z" fill="#e08a30"/><path d="M31 30 H40 Q38 34 31 34 Z" fill="#e08a30"/></svg>
<svg class="i" style="left:682px;top:105px;" width="52" height="50" viewBox="0 0 52 50"><path transform="translate(0 8)" d="M8.5 1.6 Q25.0 -0.8 41.5 1.6 L50 36.800000000000004 Q39.0 32.8 27.500000000000004 37.2 Q15.0 41.2 0 36.800000000000004 Z" fill="#d6ba2e"/><path d="M19 1 H29 V11 H39 V20 H29 V31 H19 V20 H9 V11 H19 Z" fill="#b8b8b8" stroke="#8a8a8a" stroke-width="1.2"/></svg>
<svg class="i" style="left:744px;top:107px;" width="29" height="25" viewBox="0 0 29 25"><path transform="translate(1 3)" d="M4.590000000000001 0.84 Q13.5 -0.42 22.41 0.84 L27 19.32 Q21.060000000000002 17.22 14.850000000000001 19.53 Q8.1 21.63 0 19.32 Z" fill="#d6ba2e"/><path d="M6 2 V10 M2 6 H10" stroke="#e0e0e0" stroke-width="1.6"/><rect x="8" y="11" width="6" height="8" fill="none" stroke="#e8e8e8" stroke-width="1.5"/><path d="M17 11 H23 V19 H17" fill="none" stroke="#e8e8e8" stroke-width="1.5"/><path d="M14 8 V22 M12 8 H16 M12 22 H16" stroke="#333" stroke-width="1.2" stroke-dasharray="2 1"/></svg>
<svg class="i" style="left:744px;top:146px;" width="29" height="29" viewBox="0 0 29 29"><rect x="1" y="3" width="12" height="15" fill="none" stroke="#9a9a9a" stroke-width="1.5"/><path d="M1 8 H13 M1 13 H13 M6 3 V18" stroke="#9a9a9a" stroke-width="1.2"/><rect x="1" y="3" width="5" height="3" fill="#3a9ce0"/><path d="M10 2 L18 13 M18 2 L10 13 M19 2 L23 8 L27 2 M23 8 V13" fill="none" stroke="#bcbcbc" stroke-width="1.6"/><circle cx="10" cy="24" r="2.3" fill="none" stroke="#a98be0" stroke-width="1.5"/><circle cx="18" cy="20" r="2.3" fill="none" stroke="#a98be0" stroke-width="1.5"/><circle cx="23" cy="27" r="2.3" fill="none" stroke="#a98be0" stroke-width="1.5"/><circle cx="25" cy="16" r="2.3" fill="none" stroke="#a98be0" stroke-width="1.5"/></svg>
<svg class="i" style="left:744px;top:187px;" width="29" height="25" viewBox="0 0 29 25"><path transform="translate(1 2)" d="M4.590000000000001 0.88 Q13.5 -0.44 22.41 0.88 L27 20.240000000000002 Q21.060000000000002 18.04 14.850000000000001 20.46 Q8.1 22.66 0 20.240000000000002 Z" fill="#d6ba2e"/><path d="M7 7 H22" stroke="#6a5a14" stroke-width="1.6"/><circle cx="9" cy="15" r="3.2" fill="#c89a18" stroke="#6a5a14" stroke-width="1.3"/><rect x="16" y="12" width="6" height="6" fill="#3a9ce0" stroke="#d8d8d8" stroke-width="1"/></svg>
<svg class="i" style="left:996px;top:104px;" width="52" height="56" viewBox="0 0 52 56"><g transform="translate(17 1) scale(1.0)"><rect x="1" y="1" width="32" height="32" rx="3.5" fill="#858585" stroke="#bdbdbd" stroke-width="2"/><path d="M2.5 4 Q2.5 2.5 4 2.5 H11 Q13 10 17 15 Q21 22 19 31.5 H4 Q2.5 31.5 2.5 30 Z" fill="#00bff0"/><path d="M11 2.5 Q13 10 17 15 Q21 22 19 31.5 M17.5 16 Q22 9 31 8" fill="none" stroke="#2c5a62" stroke-width="1.3"/></g><path d="M2 18 L2 48 L9 41 L15 54 L21 51 L15 38 L25 38 Z" fill="#b0b0b0"/></svg>
<svg class="i" style="left:1073px;top:104px;" width="54" height="56" viewBox="0 0 54 56"><g transform="translate(0 1) scale(1.0)"><rect x="1" y="1" width="32" height="32" rx="3.5" fill="#858585" stroke="#bdbdbd" stroke-width="2"/><path d="M2.5 4 Q2.5 2.5 4 2.5 H11 Q13 10 17 15 Q21 22 19 31.5 H4 Q2.5 31.5 2.5 30 Z" fill="#00bff0"/><path d="M11 2.5 Q13 10 17 15 Q21 22 19 31.5 M17.5 16 Q22 9 31 8" fill="none" stroke="#2c5a62" stroke-width="1.3"/></g><rect x="21" y="23" width="31" height="31" rx="2" fill="#606060" stroke="#a8a8a8" stroke-width="1.8"/><rect x="22" y="24" width="29" height="5" fill="#3a9ce0"/><path d="M21 33 H52 M21 40 H52 M21 47 H52 M31 29 V54 M41 29 V54" stroke="#a8a8a8" stroke-width="1.6"/></svg>
<svg class="i" style="left:1168px;top:104px;" width="56" height="56" viewBox="0 0 56 56"><g transform="translate(0 1) scale(1.0)"><rect x="1" y="1" width="32" height="32" rx="3.5" fill="#858585" stroke="#bdbdbd" stroke-width="2"/><path d="M2.5 4 Q2.5 2.5 4 2.5 H11 Q13 10 17 15 Q21 22 19 31.5 H4 Q2.5 31.5 2.5 30 Z" fill="#00bff0"/><path d="M11 2.5 Q13 10 17 15 Q21 22 19 31.5 M17.5 16 Q22 9 31 8" fill="none" stroke="#2c5a62" stroke-width="1.3"/></g><g transform="translate(21 22) scale(0.9705882352941176)"><rect x="1" y="1" width="32" height="32" rx="3.5" fill="#858585" stroke="#bdbdbd" stroke-width="2"/><path d="M2.5 4 Q2.5 2.5 4 2.5 H11 Q13 10 17 15 Q21 22 19 31.5 H4 Q2.5 31.5 2.5 30 Z" fill="#00bff0"/><path d="M11 2.5 Q13 10 17 15 Q21 22 19 31.5 M17.5 16 Q22 9 31 8" fill="none" stroke="#2c5a62" stroke-width="1.3"/></g></svg>
<svg class="i" style="left:1246px;top:106px;" width="28" height="24" viewBox="0 0 28 24"><rect x="1" y="1" width="26" height="21" rx="2" fill="#3a3a3a" stroke="#e0e0e0" stroke-width="1.6"/><rect x="2" y="2" width="24" height="4.5" fill="#3a9ce0"/><path d="M4 10.5 H12 M15 10.5 H24 M4 14.5 H12 M15 14.5 H24 M4 18.5 H12 M15 18.5 H24" stroke="#e0e0e0" stroke-width="1.8"/></svg>
<svg class="i" style="left:1249px;top:149px;" width="24" height="23" viewBox="0 0 24 23"><rect x="1" y="1" width="21" height="21" rx="2" fill="#4c4c4c" stroke="#5c5c5c" stroke-width="1.4"/><path d="M8 2 L12 9 L10 21 M12 9 L20 5" fill="none" stroke="#6a6a6a" stroke-width="1.3"/></svg>
<svg class="i" style="left:1246px;top:185px;" width="29" height="30" viewBox="0 0 29 30"><rect x="11" y="1" width="16" height="16" fill="#4a4a4a" stroke="#5e5e5e" stroke-width="1.5"/><path d="M17 2 L20 9 L18 16 M20 9 L26 6" fill="none" stroke="#666" stroke-width="1.2"/><circle cx="9" cy="15" r="7" fill="#3a3a3a" stroke="#5e5e5e" stroke-width="1.7"/><path d="M5.5 15 H12.5 M9 11.5 V18.5" stroke="#5e5e5e" stroke-width="1.6"/><path d="M14 20.5 L20 27" stroke="#555" stroke-width="2.6" stroke-linecap="round"/></svg>
<svg class="i" style="left:1414px;top:129px;" width="54" height="27" viewBox="0 0 54 27"><rect x="1" y="1" width="51" height="15" fill="none" stroke="#d18a2a" stroke-width="1.6"/><path d="M4.0 15 V7" stroke="#d18a2a" stroke-width="1.4"/><path d="M7.4 15 V10" stroke="#d18a2a" stroke-width="1.4"/><path d="M10.8 15 V10" stroke="#d18a2a" stroke-width="1.4"/><path d="M14.2 15 V7" stroke="#d18a2a" stroke-width="1.4"/><path d="M17.6 15 V10" stroke="#d18a2a" stroke-width="1.4"/><path d="M21.0 15 V10" stroke="#d18a2a" stroke-width="1.4"/><path d="M24.4 15 V7" stroke="#d18a2a" stroke-width="1.4"/><path d="M27.8 15 V10" stroke="#d18a2a" stroke-width="1.4"/><path d="M31.2 15 V10" stroke="#d18a2a" stroke-width="1.4"/><path d="M34.6 15 V7" stroke="#d18a2a" stroke-width="1.4"/><path d="M38.0 15 V10" stroke="#d18a2a" stroke-width="1.4"/><path d="M41.4 15 V10" stroke="#d18a2a" stroke-width="1.4"/><path d="M44.8 15 V7" stroke="#d18a2a" stroke-width="1.4"/><path d="M48.2 15 V10" stroke="#d18a2a" stroke-width="1.4"/><path d="M2 22 H51 M2 18 V26 M51 18 V26 M6 19.5 L2.5 22 L6 24.5 M47 19.5 L50.5 22 L47 24.5" fill="none" stroke="#3a9ce0" stroke-width="1.5"/></svg>
<svg class="i" style="left:1496px;top:105px;" width="50" height="52" viewBox="0 0 50 52"><path d="M8 4 H18 V9 H8 Z M32 4 H42 V9 H32 Z" fill="none" stroke="#b0b0b0" stroke-width="1.6"/><path d="M9 1 H17 V4 H9 Z M33 1 H41 V4 H33 Z" fill="#9a9a9a"/><path d="M7 9 H19 L22 20 V46 Q12 50 2 46 V24 Z" fill="#6a6a6a" stroke="#b0b0b0" stroke-width="1.6"/><path d="M43 9 H31 L28 20 V46 Q38 50 48 46 V24 Z" fill="#6a6a6a" stroke="#b0b0b0" stroke-width="1.6"/><rect x="20" y="17" width="10" height="12" fill="#8a8a8a" stroke="#b0b0b0" stroke-width="1.4"/><rect x="23" y="21" width="4" height="4" fill="#d8d8d8"/><path d="M2 42 Q12 45 22 42 M28 42 Q38 45 48 42" fill="none" stroke="#b0b0b0" stroke-width="1.3"/></svg>
<svg class="i" style="left:1588px;top:104px;" width="56" height="56" viewBox="0 0 56 56"><circle cx="36" cy="19" r="17.5" fill="#c27a22"/><path d="M36 19 L26 4.5 A17.5 17.5 0 0 1 49 7.5 Z" fill="#3a9ce0"/><path d="M36 19 L49 7.5 A17.5 17.5 0 0 1 53 23 Z" fill="#c8452a"/><path d="M36 19 L53 23 A17.5 17.5 0 0 1 46 33.5 Z" fill="#e3c330"/><circle cx="14" cy="20" r="6.5" fill="#2a7fc4" stroke="#4aa8ea" stroke-width="1.5"/><path d="M2 34 Q2 28 8 28 H20 Q26 28 26 34 V50 H20 V55 H8 V50 H2 Z" fill="#2a7fc4" stroke="#4aa8ea" stroke-width="1.5"/></svg>
<svg class="i" style="left:1703px;top:108px;" width="54" height="50" viewBox="0 0 54 50"><path d="M10 14 V46" stroke="#a8a8a8" stroke-width="1.8"/><circle cx="10" cy="10" r="9" fill="#c8452a"/><rect x="29" y="12" width="23" height="13" fill="none" stroke="#b4b4b4" stroke-width="1.7"/><path d="M33 16.5 H48 M33 20.5 H48" stroke="#b4b4b4" stroke-width="1.5"/><rect x="29" y="31" width="23" height="13" fill="none" stroke="#b4b4b4" stroke-width="1.7"/><path d="M33 35.5 H48 M33 39.5 H48" stroke="#b4b4b4" stroke-width="1.5"/><path d="M26 18 Q17 22 19 33 Q21 41 26 42 M20 40 L26.5 42.5 L23 36" fill="none" stroke="#3a9ce0" stroke-width="2"/></svg>
<svg class="i" style="left:1815px;top:105px;" width="30" height="30" viewBox="0 0 30 30"><g transform="translate(0 1) scale(1.1)"><path d="M2 13 L12 2.5 Q13.5 1.3 15 2.5 L22 9 L22 17 L10 21 L2 17 Z" fill="#d18a2a" stroke="#e8a84a" stroke-width="1"/><path d="M7 12 L14 6 M9 15 L17 8.5 M12 17 L19 11.5" stroke="#7a4a10" stroke-width="1.1"/><circle cx="5.5" cy="16.5" r="1.8" fill="#333" stroke="#ddd" stroke-width="0.8"/><path d="M5 18 Q2 21 1 19" fill="none" stroke="#9a9a9a" stroke-width="1"/></g><path d="M19 16 V28 M25 16 V28" stroke="#d0d0d0" stroke-width="3.2"/></svg>
<svg class="i" style="left:1912px;top:105px;" width="30" height="30" viewBox="0 0 30 30"><g transform="translate(0 1) scale(1.1)"><path d="M2 13 L12 2.5 Q13.5 1.3 15 2.5 L22 9 L22 17 L10 21 L2 17 Z" fill="#d18a2a" stroke="#e8a84a" stroke-width="1"/><path d="M7 12 L14 6 M9 15 L17 8.5 M12 17 L19 11.5" stroke="#7a4a10" stroke-width="1.1"/><circle cx="5.5" cy="16.5" r="1.8" fill="#333" stroke="#ddd" stroke-width="0.8"/><path d="M5 18 Q2 21 1 19" fill="none" stroke="#9a9a9a" stroke-width="1"/></g><rect x="15" y="17" width="11" height="9" rx="1" fill="#e0a83a" stroke="#7a5a10" stroke-width="0.8"/><path d="M17.5 17 V14 Q20.5 10 23.5 14 V17" fill="none" stroke="#e0a83a" stroke-width="1.8"/><circle cx="20.5" cy="21.5" r="1.3" fill="#5a3a08"/></svg>
<svg class="i" style="left:1815px;top:146px;" width="30" height="30" viewBox="0 0 30 30"><g transform="translate(0 1) scale(1.1)"><path d="M2 13 L12 2.5 Q13.5 1.3 15 2.5 L22 9 L22 17 L10 21 L2 17 Z" fill="#d18a2a" stroke="#e8a84a" stroke-width="1"/><path d="M7 12 L14 6 M9 15 L17 8.5 M12 17 L19 11.5" stroke="#7a4a10" stroke-width="1.1"/><circle cx="5.5" cy="16.5" r="1.8" fill="#333" stroke="#ddd" stroke-width="0.8"/><path d="M5 18 Q2 21 1 19" fill="none" stroke="#9a9a9a" stroke-width="1"/></g><path d="M14 15 L26 27 M26 15 L14 27" stroke="#e8452a" stroke-width="3"/></svg>
<svg class="i" style="left:1817px;top:186px;" width="30" height="30" viewBox="0 0 30 30"><g transform="translate(0 1) scale(1.1)"><path d="M2 13 L12 2.5 Q13.5 1.3 15 2.5 L22 9 L22 17 L10 21 L2 17 Z" fill="#d18a2a" stroke="#e8a84a" stroke-width="1"/><path d="M7 12 L14 6 M9 15 L17 8.5 M12 17 L19 11.5" stroke="#7a4a10" stroke-width="1.1"/><circle cx="5.5" cy="16.5" r="1.8" fill="#333" stroke="#ddd" stroke-width="0.8"/><path d="M5 18 Q2 21 1 19" fill="none" stroke="#9a9a9a" stroke-width="1"/></g><rect x="11" y="17" width="16" height="11" fill="#3a3a3a" stroke="#d0d0d0" stroke-width="1.4"/><path d="M14 20.5 H15.5 M18 20.5 H24 M14 24.5 H15.5 M18 24.5 H24" stroke="#d0d0d0" stroke-width="1.5"/></svg>
<svg class="i" style="left:2005px;top:104px;" width="54" height="56" viewBox="0 0 54 56"><path d="M7 2 H40 L49 10 V20 L40 28 H7 Q5 28 5 26 V4 Q5 2 7 2 Z" fill="#d18a2a" stroke="#e8a84a" stroke-width="1.4"/><path d="M11 9 H26 M11 14.5 H30 M11 20 H24" stroke="#5a3a08" stroke-width="2"/><circle cx="40" cy="15" r="3" fill="#333" stroke="#e8e8e8" stroke-width="1.2"/><path d="M43 17 Q50 19 48 24" fill="none" stroke="#a0a0a0" stroke-width="1.4"/><path d="M5 34 H16 L24 26 L23 34 H30 Q33 34 33 37 V51 Q33 54 30 54 H5 Q2 54 2 51 V37 Q2 34 5 34 Z" fill="#3a3a3a" stroke="#c0c0c0" stroke-width="1.7"/></svg>
<span class="t" style="left:2015.5px;top:136.4px;font-size:19px;color:#d0d0d0;font-weight:bold;">A</span>
<svg class="i" style="left:2121px;top:105px;" width="54" height="54" viewBox="0 0 54 54"><rect x="2" y="2" width="48" height="48" fill="#3f3f3f" stroke="#5c5c5c" stroke-width="2"/><path d="M16 10 L30 8 L40 14 L36 24 L40 32 L30 42 L18 38 L14 26 Z" fill="#4a4a4a"/><path d="M2 13 H10 M20 13 H30 M10 7 V19 M20 7 V19 M10 13 H20" stroke="#5c5c5c" stroke-width="2"/><path d="M38 24 V46 M28 37 L38 48 L48 37" fill="none" stroke="#5c5c5c" stroke-width="4.5"/></svg>
<svg class="i" style="left:2201px;top:106px;" width="30" height="30" viewBox="0 0 30 30"><rect x="1" y="1" width="25" height="25" fill="#3a3a3a" stroke="#565656" stroke-width="1.6"/><path d="M1 8 H6 M12 8 H18 M6 4 V12 M12 4 V12 M6 8 H12" stroke="#565656" stroke-width="1.5"/><path d="M10 14 l6 -1 l3 4 l-3 5 l-5 -1 z" fill="#484848"/><path d="M19 17 A5 5 0 1 1 17 24 M24 14 V18 H20" fill="none" stroke="#565656" stroke-width="1.8"/></svg>
<svg class="i" style="left:2201px;top:146px;" width="30" height="30" viewBox="0 0 30 30"><rect x="1" y="1" width="25" height="25" fill="#3a3a3a" stroke="#565656" stroke-width="1.6"/><path d="M1 8 H6 M12 8 H18 M6 4 V12 M12 4 V12 M6 8 H12" stroke="#565656" stroke-width="1.5"/><path d="M10 14 l6 -1 l3 4 l-3 5 l-5 -1 z" fill="#484848"/><path d="M18 18 L27 27 M27 18 L18 27" stroke="#565656" stroke-width="2.4"/></svg>
<svg class="i" style="left:534px;top:281px;" width="16" height="22" viewBox="0 0 16 22"><path d="M4 2 H12 M5.5 2 V10 M10.5 2 V10 M2 10.5 H14 M8 11 V19" fill="none" stroke="#e0e0e0" stroke-width="1.7"/><rect x="8" y="3" width="2.5" height="7" fill="#e0e0e0"/></svg>
<svg class="i" style="left:3130px;top:281px;" width="16" height="22" viewBox="0 0 16 22"><path d="M4 2 H12 M5.5 2 V10 M10.5 2 V10 M2 10.5 H14 M8 11 V19" fill="none" stroke="#e0e0e0" stroke-width="1.7"/><rect x="8" y="3" width="2.5" height="7" fill="#e0e0e0"/></svg>
<svg class="i" style="left:17px;top:327px;" width="26" height="30" viewBox="0 0 26 30"><path d="M2 2.5 H23 L14.5 13 V27 H10.5 V13 Z" fill="#3a3a3a" stroke="#c8c8c8" stroke-width="1.8" stroke-linejoin="round"/><path d="M2 5.5 H23" stroke="#c8c8c8" stroke-width="1.2"/></svg>
<svg class="i" style="left:521px;top:330px;" width="22" height="22" viewBox="0 0 22 22"><circle cx="13.5" cy="8.5" r="6" fill="none" stroke="#d0d0d0" stroke-width="1.8"/><path d="M9 13 L2.5 19.5" stroke="#d0d0d0" stroke-width="2.6" stroke-linecap="round"/></svg>
<svg class="i" style="left:44px;top:377px;" width="40" height="40" viewBox="0 0 40 40"><path d="M5 1 H13 L15 8 H3 Z" fill="#e3c330"/><path d="M1 9 H17 V13 H1 Z" fill="#c8a820"/><path d="M9 14 V33 H22 M9 20 H22" fill="none" stroke="#c0c0c0" stroke-width="1.6"/><path d="M26 15 H34 L36 21 H24 Z" fill="#e3c330"/><path d="M22 22 H38 V26 H22 Z" fill="#c8a820"/><path d="M26 29 H34 L36 35 H24 Z" fill="#e3c330"/><path d="M22 36 H38 V40 H22 Z" fill="#c8a820"/></svg>
<svg class="i" style="left:98px;top:380px;" width="37" height="36" viewBox="0 0 37 36"><path d="M1.5 8 V27 Q1.5 34 18 34 Q34.5 34 34.5 27 V8" fill="#3c3c3c" stroke="#a8a8a8" stroke-width="1.7"/><path d="M18 15 V34 M18 34 Q34.5 34 34.5 27 V9" fill="#484848" stroke="none"/><ellipse cx="18" cy="8" rx="16.5" ry="6.5" fill="#4a4a4a" stroke="#a8a8a8" stroke-width="1.7"/><path d="M1.5 8 V27 Q1.5 34 18 34 Q34.5 34 34.5 27 V8" fill="none" stroke="#a8a8a8" stroke-width="1.7"/></svg>
<svg class="i" style="left:152px;top:379px;" width="36" height="36" viewBox="0 0 36 36"><g transform="translate(0 0) scale(1.0294117647058822)"><rect x="1" y="1" width="32" height="32" rx="3.5" fill="#858585" stroke="#bdbdbd" stroke-width="2"/><path d="M2.5 4 Q2.5 2.5 4 2.5 H11 Q13 10 17 15 Q21 22 19 31.5 H4 Q2.5 31.5 2.5 30 Z" fill="#00bff0"/><path d="M11 2.5 Q13 10 17 15 Q21 22 19 31.5 M17.5 16 Q22 9 31 8" fill="none" stroke="#2c5a62" stroke-width="1.3"/></g></svg>
<svg class="i" style="left:206px;top:379px;" width="36" height="36" viewBox="0 0 36 36"><path d="M3 33 L5 26 L27 4 L32 9 L10 31 Z" fill="#e3c330" stroke="#a88a18" stroke-width="1"/><path d="M27 4 L29.5 1.5 Q31 0.5 32.5 2 L34 3.5 Q35 5 34 6.5 L32 9 Z" fill="#e0785a"/><path d="M3 33 L5 26 L10 31 Z" fill="#c8a070"/><path d="M3 33 L4 29.8 L6.2 32 Z" fill="#444"/></svg>
<svg class="i" style="left:257px;top:378px;" width="42" height="40" viewBox="0 0 42 40"><path d="M1.5 1.5 H28 V28 H1.5 Z M14.7 1.5 V28 M1.5 14.7 H28" fill="none" stroke="#808080" stroke-width="1.7"/><rect x="18" y="18" width="22" height="22" fill="#333"/><path d="M29 19 V39 M19 29 H39" stroke="#1b6fc0" stroke-width="4.2"/><path d="M29 20 V38 M20 29 H38" stroke="#4aa8ea" stroke-width="1.6"/></svg>
<svg class="i" style="left:311px;top:377px;" width="40" height="40" viewBox="0 0 40 40"><g transform="translate(0 2) scale(1.6)"><path d="M2 13 L12 2.5 Q13.5 1.3 15 2.5 L22 9 L22 17 L10 21 L2 17 Z" fill="#d18a2a" stroke="#e8a84a" stroke-width="1"/><path d="M7 12 L14 6 M9 15 L17 8.5 M12 17 L19 11.5" stroke="#7a4a10" stroke-width="1.1"/><circle cx="5.5" cy="16.5" r="1.8" fill="#333" stroke="#ddd" stroke-width="0.8"/><path d="M5 18 Q2 21 1 19" fill="none" stroke="#9a9a9a" stroke-width="1"/></g></svg>
<svg class="i" style="left:16px;top:506px;" width="12" height="11" viewBox="0 0 12 11"><path d="M11 0.5 V10 H1 Z" fill="#b0b0b0"/></svg>
<svg class="i" style="left:34px;top:498px;" width="27" height="27" viewBox="0 0 27 27"><rect x="0.75" y="0.75" width="25.5" height="25.5" fill="#2f2f2f" stroke="#c4c4c4" stroke-width="1.5"/><rect x="3.5" y="3.5" width="20" height="20" fill="#42a046"/><path d="M14.53846153846154 3.5 L23.365384615384617 3.5 L23.365384615384617 13.500000000000002 L19.730769230769234 15.576923076923078 L17.653846153846157 19.730769230769234 L13.500000000000002 23.365384615384617 L8.307692307692308 23.365384615384617 L9.346153846153847 18.692307692307693 L6.230769230769232 15.576923076923078 L10.384615384615385 13.500000000000002 L12.461538461538463 9.346153846153847 Z" fill="#1d6fb5"/></svg>
<svg class="i" style="left:34px;top:546px;" width="12" height="11" viewBox="0 0 12 11"><path d="M11 0.5 V10 H1 Z" fill="#b0b0b0"/></svg>
<svg class="i" style="left:52px;top:541px;" width="24" height="24" viewBox="0 0 24 24"><rect x="1" y="1" width="21.5" height="21.5" rx="2.5" fill="#222" stroke="#7a7a7a" stroke-width="1.6"/><path d="M5 12 L9.5 17 L18.5 6" fill="none" stroke="#f2f2f2" stroke-width="2.6"/></svg>
<svg class="i" style="left:613px;top:272px;" width="27" height="27" viewBox="0 0 27 27"><rect x="0.75" y="0.75" width="25.5" height="25.5" fill="#2f2f2f" stroke="#c4c4c4" stroke-width="1.5"/><rect x="3.5" y="3.5" width="20" height="20" fill="#42a046"/><path d="M14.53846153846154 3.5 L23.365384615384617 3.5 L23.365384615384617 13.500000000000002 L19.730769230769234 15.576923076923078 L17.653846153846157 19.730769230769234 L13.500000000000002 23.365384615384617 L8.307692307692308 23.365384615384617 L9.346153846153847 18.692307692307693 L6.230769230769232 15.576923076923078 L10.384615384615385 13.500000000000002 L12.461538461538463 9.346153846153847 Z" fill="#1d6fb5"/></svg>
<svg class="i" style="left:795px;top:272px;" width="27" height="27" viewBox="0 0 27 27"><rect x="0.75" y="0.75" width="25.5" height="25.5" fill="#2f2f2f" stroke="#c4c4c4" stroke-width="1.5"/><rect x="3.5" y="3.5" width="20" height="20" fill="#42a046"/><path d="M14.53846153846154 3.5 L23.365384615384617 3.5 L23.365384615384617 13.500000000000002 L19.730769230769234 15.576923076923078 L17.653846153846157 19.730769230769234 L13.500000000000002 23.365384615384617 L8.307692307692308 23.365384615384617 L9.346153846153847 18.692307692307693 L6.230769230769232 15.576923076923078 L10.384615384615385 13.500000000000002 L12.461538461538463 9.346153846153847 Z" fill="#1d6fb5"/></svg>
<svg class="i" style="left:798px;top:1753px;" width="28" height="28" viewBox="0 0 28 28"><path d="M1 1 H18 V18 H1 Z M9.5 1 V18 M1 9.5 H18" fill="none" stroke="#808080" stroke-width="1.4"/><rect x="12" y="12" width="15" height="15" fill="#333"/><path d="M19.5 12.5 V26.5 M12.5 19.5 H26.5" stroke="#1b6fc0" stroke-width="3.4"/><path d="M19.5 13.5 V25.5 M13.5 19.5 H25.5" stroke="#4aa8ea" stroke-width="1.3"/></svg>
<svg class="i" style="left:833px;top:1756px;" width="23" height="23" viewBox="0 0 23 23"><path d="M1 1 H21.5 V21.5 H1 Z M6 1 V21.5 M11.2 1 V21.5 M16.4 1 V21.5 M1 6 H21.5 M1 11.2 H21.5 M1 16.4 H21.5" fill="none" stroke="#808080" stroke-width="1.3"/></svg>
<svg class="i" style="left:864px;top:1751px;" width="30" height="30" viewBox="0 0 30 30"><path d="M4 26 H27" stroke="#3a9ce0" stroke-width="2"/><rect x="1.5" y="24" width="4" height="4" fill="#333" stroke="#45a845" stroke-width="1.2"/><rect x="20" y="17" width="7" height="4" fill="#333" stroke="#c0c0c0" stroke-width="1.2"/><rect x="3" y="4" width="6" height="4" fill="#333" stroke="#c0c0c0" stroke-width="1.2"/><path d="M7 21 L19 9 M7 21 V16 M7 21 H12 M19 9 V14 M19 9 H14" fill="none" stroke="#3a9ce0" stroke-width="1.5" stroke-dasharray="3 2"/><path d="M23 2 V10 M19 6 H27" stroke="#c0c0c0" stroke-width="1.5"/></svg>
<svg class="i" style="left:897px;top:1751px;" width="30" height="32" viewBox="0 0 30 32"><rect x="1" y="1" width="14" height="12" fill="#2a6a2a"/><path d="M15.5 1 V31 M1 15 H29" stroke="#a0a0a0" stroke-width="1.4" stroke-dasharray="2 2"/><rect x="13" y="12.5" width="5" height="5" fill="#333" stroke="#c0c0c0" stroke-width="1.2"/></svg>
<svg class="i" style="left:930px;top:1752px;" width="30" height="32" viewBox="0 0 30 32"><path d="M14 1 V29 L26 16" fill="none" stroke="#b0b0b0" stroke-width="1.5"/><path d="M18 3 Q25 5 24 13 M20.5 10 L24 14 L27.5 10" fill="none" stroke="#3a9ce0" stroke-width="1.9"/></svg>
<span class="t" style="left:930.5px;top:1760.1px;font-size:17px;color:#3a9ce0;font-weight:bold;">N</span>
<svg class="i" style="left:2237px;top:1754px;" width="28" height="28" viewBox="0 0 28 28"><rect x="11" y="1" width="15" height="15" fill="#3a6a86" stroke="#6a7a84" stroke-width="1.2"/><path d="M16 2 L19 8 L17 15 M19 8 L25 5" fill="none" stroke="#8a9aa4" stroke-width="1.1"/><circle cx="9" cy="14" r="6.5" fill="#3a3a3a" stroke="#7a8a94" stroke-width="1.5"/><path d="M5.5 14 H12.5 M9 10.5 V17.5" stroke="#7a8a94" stroke-width="1.4"/><path d="M13.5 19 L19 25" stroke="#8a6a3a" stroke-width="2.4" stroke-linecap="round"/></svg>
<svg class="i" style="left:2475px;top:1756px;" width="24" height="24" viewBox="0 0 24 24"><rect x="1" y="1" width="20" height="20" rx="2" fill="#5a5a5a" stroke="#666" stroke-width="1.2"/><path d="M7 2 L11 9 L9 20 M11 9 L19 5" fill="none" stroke="#7a7a7a" stroke-width="1.2"/></svg>
<svg class="i" style="left:2527px;top:1755px;" width="19" height="24" viewBox="0 0 19 24"><rect x="0.5" y="0" width="6.5" height="23" fill="#a6a6a6"/><rect x="11.5" y="0" width="6.5" height="23" fill="#a6a6a6"/></svg>
<svg class="i" style="left:2571px;top:1753px;" width="29" height="28" viewBox="0 0 29 28"><path d="M3 12 A10.5 10.5 0 0 1 22 7" fill="none" stroke="#3a9ce0" stroke-width="4"/><path d="M25 15 A10.5 10.5 0 0 1 6 20" fill="none" stroke="#3a9ce0" stroke-width="4"/><path d="M17 9 H26 V0.5 Z M11 18.5 H2 V27 Z" fill="#3a9ce0"/></svg>
<svg class="i" style="left:2629px;top:379px;" width="30" height="30" viewBox="0 0 30 30"><circle cx="14.5" cy="14.5" r="13.5" fill="none" stroke="#5c5c5c" stroke-width="1.5"/><path d="M14 7.5 L7 14.5 L14 21.5 M7.5 14.5 H23" fill="none" stroke="#5c5c5c" stroke-width="2.2"/></svg>
<svg class="i" style="left:2672px;top:382px;" width="22" height="24" viewBox="0 0 22 24"><path d="M2 11 L11 2.5 L20 11 M4.5 9 V21 H17.5 V9" fill="none" stroke="#6a6a6a" stroke-width="1.5"/><rect x="9" y="13" width="4" height="8" fill="#7a5a3a"/><path d="M1 22.5 H21" stroke="#3a6a3a" stroke-width="1.2"/></svg>
<svg class="i" style="left:2704px;top:380px;" width="28" height="30" viewBox="0 0 28 30"><path d="M2 2.5 H25 L16 13.5 V27 H11 V13.5 Z" fill="none" stroke="#d0d0d0" stroke-width="1.8" stroke-linejoin="round"/><path d="M3 6 H24" stroke="#d0d0d0" stroke-width="1.2"/></svg>
<svg class="i" style="left:3115px;top:382px;" width="22" height="22" viewBox="0 0 22 22"><circle cx="13.5" cy="8.5" r="6" fill="none" stroke="#d0d0d0" stroke-width="1.8"/><path d="M9 13 L2.5 19.5" stroke="#d0d0d0" stroke-width="2.6" stroke-linecap="round"/></svg>
<svg class="i" style="left:2637px;top:438px;" width="12" height="11" viewBox="0 0 12 11"><path d="M11 0.5 V10 H1 Z" fill="#b0b0b0"/></svg>
<svg class="i" style="left:2662px;top:431px;" width="28" height="28" viewBox="0 0 28 28"><path d="M1 5 Q1 3 3 3 H10 L13 6 H25 Q26.5 6 26.5 8 V20 H1 Z" fill="#e3c330"/><path d="M3 9 H24" stroke="#333" stroke-width="1.6"/><rect x="6" y="11" width="15" height="15" fill="#2f2f2f" stroke="#c4c4c4" stroke-width="1.3"/><rect x="8" y="13" width="11" height="11" fill="#42a046"/><path d="M13 13 H19 V18 L15 21 L11 24 H9 L10 20 Z" fill="#1d6fb5"/></svg>
<svg class="i" style="left:2689px;top:470px;" width="28" height="28" viewBox="0 0 28 28"><rect x="0.75" y="0.75" width="26.5" height="26.5" fill="#2f2f2f" stroke="#c4c4c4" stroke-width="1.5"/><rect x="3.5" y="3.5" width="21" height="21" fill="#42a046"/><path d="M15.076923076923077 3.5 L24.23076923076923 3.5 L24.23076923076923 14.0 L20.46153846153846 16.153846153846153 L18.307692307692307 20.46153846153846 L14.0 24.23076923076923 L8.615384615384615 24.23076923076923 L9.692307692307692 19.384615384615383 L6.461538461538462 16.153846153846153 L10.769230769230768 14.0 L12.923076923076923 9.692307692307692 Z" fill="#1d6fb5"/></svg>
<svg class="i" style="left:2689px;top:510px;" width="28" height="28" viewBox="0 0 28 28"><rect x="0.75" y="0.75" width="26.5" height="26.5" fill="#2f2f2f" stroke="#c4c4c4" stroke-width="1.5"/><rect x="3.5" y="3.5" width="21" height="21" fill="#42a046"/><path d="M15.076923076923077 3.5 L24.23076923076923 3.5 L24.23076923076923 14.0 L20.46153846153846 16.153846153846153 L18.307692307692307 20.46153846153846 L14.0 24.23076923076923 L8.615384615384615 24.23076923076923 L9.692307692307692 19.384615384615383 L6.461538461538462 16.153846153846153 L10.769230769230768 14.0 L12.923076923076923 9.692307692307692 Z" fill="#1d6fb5"/></svg>
<svg class="i" style="left:2640px;top:555px;" width="10" height="15" viewBox="0 0 10 15"><path d="M1.5 1.5 L8.5 7.5 L1.5 13.5 Z" fill="none" stroke="#b0b0b0" stroke-width="1.4"/></svg>
<svg class="i" style="left:2662px;top:551px;" width="28" height="28" viewBox="0 0 28 28"><path d="M1 5 Q1 3 3 3 H10 L13 6 H25 Q26.5 6 26.5 8 V20 H1 Z" fill="#e3c330"/><path d="M3 9 H24" stroke="#333" stroke-width="1.6"/><rect x="6" y="13" width="16" height="12" rx="1" fill="#c8452a"/><path d="M11 13 V10.5 H17 V13" fill="none" stroke="#c8452a" stroke-width="1.6"/><path d="M6 18 H22" stroke="#7a2a18" stroke-width="1.2"/><rect x="12.5" y="16.5" width="3" height="3" fill="#e8e8e8"/></svg>
<svg class="i" style="left:2637px;top:598px;" width="12" height="11" viewBox="0 0 12 11"><path d="M11 0.5 V10 H1 Z" fill="#b0b0b0"/></svg>
<svg class="i" style="left:2662px;top:591px;" width="28" height="28" viewBox="0 0 28 28"><path d="M1 5 Q1 3 3 3 H10 L13 6 H25 Q26.5 6 26.5 8 V20 H1 Z" fill="#e3c330"/><path d="M3 9 H24" stroke="#333" stroke-width="1.6"/><path d="M6 14 V23 Q6 26 14 26 Q22 26 22 23 V14" fill="#4a4a4a" stroke="#c0c0c0" stroke-width="1.3"/><ellipse cx="14" cy="14" rx="8" ry="3.2" fill="#5a5a5a" stroke="#c0c0c0" stroke-width="1.3"/></svg>
<svg class="i" style="left:2664px;top:638px;" width="12" height="11" viewBox="0 0 12 11"><path d="M11 0.5 V10 H1 Z" fill="#b0b0b0"/></svg>
<svg class="i" style="left:2692px;top:631px;" width="32" height="32" viewBox="0 0 32 32"><path d="M1.5 6 V18 Q1.5 22 11 22 Q20.5 22 20.5 18 V6" fill="#3c3c3c" stroke="#a8a8a8" stroke-width="1.5"/><ellipse cx="11" cy="6" rx="9.5" ry="4" fill="#484848" stroke="#a8a8a8" stroke-width="1.5"/><path d="M9 19 L19 9.5 L29 19 V28 Q29 29.5 27.5 29.5 H10.5 Q9 29.5 9 28 Z" fill="#ffffff" stroke="#f0f0f0" stroke-width="1"/><path d="M12 20 L19 13.5 L26 20 V27 H12 Z" fill="none" stroke="#8a8a8a" stroke-width="1.2"/><rect x="17.5" y="21" width="3.5" height="6" fill="#d18a2a"/></svg>
<svg class="i" style="left:2716px;top:671px;" width="28" height="24" viewBox="0 0 28 24"><rect x="1.2" y="1.2" width="25" height="20.5" rx="4" fill="#3a3a3a" stroke="#c8c8c8" stroke-width="1.7"/><rect x="6" y="5" width="15" height="13" fill="#5a5a5a" stroke="#c8c8c8" stroke-width="1.3"/><path d="M6 12 L12 10 L15 5 M12 10 L16 18 M14 14 L21 12" fill="none" stroke="#c8c8c8" stroke-width="1.1"/></svg>
<svg class="i" style="left:2716px;top:711px;" width="28" height="24" viewBox="0 0 28 24"><rect x="1.2" y="1.2" width="25" height="20.5" rx="4" fill="#3a3a3a" stroke="#c8c8c8" stroke-width="1.7"/><rect x="6" y="5" width="15" height="13" fill="#5a5a5a" stroke="#c8c8c8" stroke-width="1.3"/><path d="M6 12 L12 10 L15 5 M12 10 L16 18 M14 14 L21 12" fill="none" stroke="#c8c8c8" stroke-width="1.1"/></svg>
<svg class="i" style="left:2640px;top:755px;" width="10" height="15" viewBox="0 0 10 15"><path d="M1.5 1.5 L8.5 7.5 L1.5 13.5 Z" fill="none" stroke="#b0b0b0" stroke-width="1.4"/></svg>
<svg class="i" style="left:2662px;top:751px;" width="28" height="28" viewBox="0 0 28 28"><path d="M1 5 Q1 3 3 3 H10 L13 6 H25 Q26.5 6 26.5 8 V20 H1 Z" fill="#e3c330"/><path d="M3 9 H24" stroke="#333" stroke-width="1.6"/><ellipse cx="14" cy="19" rx="9.5" ry="6.5" fill="#5a5a5a" stroke="#d0d0d0" stroke-width="1.2"/><circle cx="9.5" cy="18" r="1.6" fill="#3a9ce0"/><circle cx="13" cy="15.5" r="1.6" fill="#e3c330"/><circle cx="17.5" cy="16.5" r="1.6" fill="#c8452a"/><path d="M14 25 L24 14 L26 16 L17 26 Z" fill="#d0d0d0"/><path d="M13 27 L15 23.5 L17 25.5 Z" fill="#e08a30"/></svg>
<svg class="i" style="left:2640px;top:795px;" width="10" height="15" viewBox="0 0 10 15"><path d="M1.5 1.5 L8.5 7.5 L1.5 13.5 Z" fill="none" stroke="#b0b0b0" stroke-width="1.4"/></svg>
<svg class="i" style="left:2662px;top:791px;" width="28" height="28" viewBox="0 0 28 28"><path d="M1 5 Q1 3 3 3 H10 L13 6 H25 Q26.5 6 26.5 8 V20 H1 Z" fill="#e3c330"/><path d="M3 9 H24" stroke="#333" stroke-width="1.6"/><path d="M12 16 V27 L20 21.5 Z" fill="#8a8a8a" stroke="#333" stroke-width="1"/></svg>
<svg class="i" style="left:2640px;top:835px;" width="10" height="15" viewBox="0 0 10 15"><path d="M1.5 1.5 L8.5 7.5 L1.5 13.5 Z" fill="none" stroke="#b0b0b0" stroke-width="1.4"/></svg>
<svg class="i" style="left:2662px;top:831px;" width="28" height="28" viewBox="0 0 28 28"><path d="M1 5 Q1 3 3 3 H10 L13 6 H25 Q26.5 6 26.5 8 V20 H1 Z" fill="#e3c330"/><path d="M3 9 H24" stroke="#333" stroke-width="1.6"/><path d="M4 20 L11 11 L18 20 Z" fill="#d8452a"/><rect x="6.5" y="19" width="9" height="8" fill="#e8e8e8"/><rect x="9" y="21.5" width="4" height="4" fill="#3a9ce0"/><path d="M4 28 H18" stroke="#45a845" stroke-width="1.6"/></svg>
<svg class="i" id="map" style="left:605px;top:306px;overflow:hidden" width="2002" height="1441" viewBox="605 306 2002 1441"><rect x="605" y="306" width="2002" height="1441" fill="#ffffff"/><path id="land" d="M981.0 694.7l2.7 -1.9l2.3 -0.5l2.3 1.7l-0.1 -2.5l2.1 -2.4l0 -2.7l2.2 -2.1l2 0.5l2.7 -1l2.2 -3.6l1.6 1.7l1.2 1.8l4.1 -0.7l2 0.3l2.8 0.3l2 0.3l2.8 -0.1l1.9 -2.1l2.7 0.6l2.4 -1.5l1.3 -2l1.7 -3.3l3.8 -0.8l0.6 -4.4l2.6 -2.7l-1.8 -2.6l0.8 -2.2l1.4 -2.3l2 -3.8l1.7 -2.3l1.2 -1.8l-0.6 -3.5l1.8 -3.4l3.6 -2.3l-0.3 -2.7l0.8 -3.3l1.8 -2.4l2.8 -1.7l1 -4.2l1.9 -2.4l1 -3.5l-0.3 -3.2l-1.3 -1.9l1.6 -1.5l1.3 -2.8l1.3 -4l3.6 -0.5l2.5 -1l2.2 -1.3l2.1 -0.5l2.3 -1.7l2.9 1l2.3 -1.5l2.9 -3.2l1.2 -2.1l0.1 -3l2.6 -0.7l2 -0.1l1.5 -2.6l0.8 -2.1l3.2 0.1l1 -3.6l1.9 -1.8l-0.6 -3l-0.9 -2l0.5 -3.1l0.6 -2.8l-1.6 -3.1l-0.8 -3.1l0.5 -2.3l-0.6 -2.4l-1.8 -1.9l-2.7 -0.4l-2.6 -2.4l0.4 -3.9l-2 -0.7l-1.4 -2.3l1 -3.7l-0.7 -3.4l2.4 -1.2l1.2 -3.7l-1.2 -4l3.3 1.2l2.5 -3.2l2.2 0.9l1.9 1l3.9 0.1l2.4 1.6l4 0.4l3.9 0.6l0.9 -2.7l2.6 -0.4l2.8 -2.1l4.1 -0.7l1.9 1.9l3.7 1.4l4.3 -1.4l2.3 -0.5l3 0l2.3 -1.7l3.1 -1.1l3.2 -2.3l2.5 -1.3l3.2 0.6l2.9 1l2.1 -1l2.8 -1.7l2.4 -0.1l3.2 1.6l4.1 0.5l2.4 -1.4l2.9 1.3l1.7 2.3l1.3 1.4l3.9 -0.4l2.5 -1.4l1.7 -2.6l1.5 -2l2.1 -2.5l2.3 -0.7l3.9 1.3l3.6 -1.1l2.4 1.7l2.3 -0.9l1.4 -1.9l0.1 -2.6l1.1 -2.1l2.4 -1.6l0.5 -2l3 -2.2l2.7 -1.7l0.6 -2.7l2 -1.7l0.8 -2.5l-0.3 -2.2l3.2 -0.7l1.8 -2.9l2.6 -1.7l2.6 -0.9l2.6 -3.6l3.2 -0.7l2.4 -1.3l2.1 -1.2l3.1 -1.6l2.1 -1.4l2.6 0.7l0.6 2.9l3.7 1.9l3.5 -1.1l2.5 -1.4l2.9 -2l0.8 -2.4l2.4 -0l2.6 1.1l2.7 -0.1l1.9 -1l3 1.5l2.6 2.9l2.6 -1.8l2.9 2.4l3 -0.7l3 -1.3l3.8 -0.5l4 1.7l3.4 1.3l1.8 -0.7l2.8 -0.9l2.9 1.8l2.6 1.2l1.1 0.7l4.2 -0.9l4.1 -0.4l2.1 -3.5l2.9 -0.2l1.9 -3.2l4.1 -1.4l3.3 2.1l2.2 2l3.1 -1.8l3.8 -2.3l0.8 -2.8l0.3 -3l-0.7 -3l1 -2.3l-1.4 -3.9l-0.8 -4.3l0.4 -2.6l1.8 -3l2.8 -1.1l1.3 -2.2l2.6 -0.2l2.2 -0l3.3 0.6l3 -1.2l2.6 -1.2l1.5 -1.2l3.9 0.6l2.4 1.1l2.3 -0l3.8 1.5l2.7 0.7l2.2 -0.7l3.1 2.1l3.3 0.2l2.5 -1.7l2.6 -0.3l2.4 0.2l3.7 -0.9l2.4 2.4l3.4 1.1l1.8 -2.1l3.1 -1.8l0.2 -2.7l0.6 -1.9l2.2 -0.5l2.5 -1.8l2.2 -2.6l3.3 -1.5l4.1 -0.5l2.8 3.2l2.9 -0l4 1.4l1.9 -1.2l2.8 -0.9l3.6 -2l2.4 0.3l2.2 -2.3l3.9 -1l2.5 2.1l3.3 2l2.8 -0.4l2.2 0.5l2.8 1.5l3.9 -0.4l2.6 0.3l1.8 -1.3l1.8 -2l2.5 -0.6l3.9 -0.1l4 -0.9l2.1 -2.1l3 -0.3l2 -0.9l2.5 -0.1l2.4 0.8l1.5 -1.9l1.9 -1.5l2.3 -1.6l2.4 -1.4l3.5 -1.7l2.5 0.3l2.2 -1.3l1.9 1.4l1.7 1.5l2.9 0.4l1.6 -2.9l2.4 -1.3l2.8 -0.3l2.4 -3.6l0.4 -3.3l3.8 -2.1l1.7 -2.6l4.4 -0.8l2.7 1.1l2.5 0.8l3.3 -0.6l2.3 -1.3l2.6 -2l2.4 -1l1.9 -1.2l2.1 2.5l3.4 1.7l3.1 1.6l0.6 2.5l1.8 1.4l2.1 0.7l2.6 -0.6l1.9 -2.2l3.1 -0.7l3.9 -0.9l4.3 -0.5l3.3 -2.6l2.6 -0.9l2.4 -0.6l2.4 0.7l1.4 1.7l1.7 3.1l1 3l-0.2 2.5l0.5 2.2l1.5 2l1.7 3l2.2 1.4l1.6 3.9l1.8 1.6l2.4 1.7l3.1 1.5l3.8 -2.1l2.9 0.5l2.9 2.8l2.3 -0.7l2.9 1.6l3.3 2.3l3 -0.5l2 0.9l2.6 -3.5l2.9 -1.6l2.8 1.5l3 1.2l4.3 1.4l2.4 1.3l3.8 1.1l1.1 1.4l2.2 -0.1l2.8 0.7l1.7 2.1l1.6 1.4l1.9 1l2.9 0.6l3.4 -0.2l3.2 0l1.9 3l3.2 2.5l2.3 1.9l0.6 2.6l1.7 1.5l2.3 2.3l2.8 1.3l2.7 2.8l1.7 -1.1l2.2 -1.3l2.2 0.1l2.2 1.8l3.9 -1.5l3 -0.7l3.9 -1.6l3 -1.2l1.3 -2.3l2.8 0.1l4.2 -0.5l2.7 -2.4l2.7 -0.8l4.3 0.4l3.7 -1.9l3.2 -1.4l2.7 1.3l2.1 0.4l3.4 -2.5l2.8 -1.7l2.6 -0.6l4.3 0.9l1.9 -1.7l2.2 -1.8l2.8 0l2.8 0.7l3.9 0.3l3 -1.7l2.9 1.5l2.6 1.3l3.6 1l3.3 0.4l2.4 -0.1l2.2 0.9l1.1 -2.4l2.6 -1.2l2.8 0.4l2.2 0.3l3.3 -2.9l4.4 -0.7l3.8 -1.2l3.8 -0.8l3.1 -0.6l1.5 -1.7l0.1 -2.8l0.9 -3.1l1.7 -3.4l-1.3 -3.8l1.1 -2.7l-0.9 -2.3l-0.3 -2.3l0.2 -3.4l-0.9 -2.1l1.3 -2.7l-2.9 -2.8l-0.5 -2.8l0.4 -4.3l-0.1 -2.9l-1.6 -2.4l-2.2 -1.3l-2.1 -1.7l-2.6 -2.6l-2 -1.5l-2 -2.2l-0.8 -2.7l0.6 -3.2l0.5 -2l0.6 -2.5l3.1 -2.4l4 -1.7l3.1 -0.6l2.5 -2.4l3.2 1.7l2.2 1.1l2.4 -1.2l1.9 -0.5l1.3 2.5l2.6 1.3l2.9 0.6l2.8 -0.8l4 0.6l2.6 0.8l2.8 -0.1l1.7 1.4l2.6 0.2l2.6 0.7l2.2 1l2.2 0.9l2.7 2.7l2.7 0.4l1.5 2.4l3.8 1.6l1.9 2.7l4.4 0.6l3.8 2l-0.3 4.2l-1.5 2.8l1.1 2.4l0.5 2.4l-0.3 2.1l3.2 2.7l1.2 2l0.2 2.9l-1.9 3.8l-1.1 3.3l2.7 1.2l1.1 3.3l0.1 2.2l0.3 2.3l1.1 2.6l0.5 2.6l-0.7 4.2l-2.2 2.3l0.1 3.2l-4 0.6l-2.9 2.1l-3.8 0.4l-1.9 -1.4l-2.6 -0.4l-2.2 1.8l-3.3 2.4l0.5 3.2l-3.3 2.3l-1.8 1.7l-3.1 -0.1l-3.4 2.5l-3.6 2.3l-3.3 0.5l1 3.1l-2.3 2.7l2.2 3.4l-2.2 3.2l2.8 3.1l-1.7 1.4l0.3 2.9l-0.9 3.5l1.9 1.9l0.3 2.4l-0.1 3.3l-1.3 3.6l2.4 3.1l1.9 1.8l1.3 2l-1.6 3.4l-0.6 3.2l0.5 2.7l0.3 3.1l-2.2 1.6l-2 0.9l-2.7 3.1l-1.1 3.5l-0.3 3.4l-2.4 1.2l-2.7 -0.7l-1.8 3.6l-0.9 2.4l-2.1 1.9l-2.8 1.6l0.3 3.8l-0.7 2.2l-1.6 2l-2.5 0.8l-2.1 1.9l-2.3 1.6l-0.6 2.7l-1.3 3.9l-3.9 0.6l-1.9 2.3l-2.4 0.5l-4.2 -0.6l0.2 -3.5l-1.2 -2.3l-0.4 -2.5l-3.5 -2.4l-0.6 -3.1l-3.1 -1.9l-2.4 -2.2l-4.2 -1.2l-4.1 -0.8l-3.4 -0.3l-2.8 0.5l-2.7 -0.8l-2.1 -0.2l-2.4 -1.7l-2.4 -0.5l-2.6 1.4l-3.7 0.8l-2.9 1.8l-3.3 -1.5l-2.3 -0.6l-2.5 -1.1l-2.8 -1.2l-2.5 -1.7l-3.3 1.1l-2.5 0.4l-3.4 0.1l-2.3 1.2l-3.6 -0.7l-1.7 -2.5l-3.3 -0.6l-1 -2.9l-4 -0.1l-2.9 0.5l-3.1 0.1l-2.3 -1.5l-1.4 -1.8l-1.9 -1l-2 -1.8l-3 -1.4l-3.3 -0.7l-3.6 0.2l-2.1 1.4l-3.4 0.5l-1.3 -2.8l-2.3 -1.1l-2.6 -1l-3.4 0.8l-2 -1.9l-1.8 -0.9l-4.5 0l-2 -2.8l-3.5 -2.7l-3.7 -0.8l-2.4 -0.4l-2.2 -0.2l-2.2 0l-2.7 0.6l-2.5 2.3l-0.9 2.6l-0.6 2.9l1.5 2.5l-0.6 4.3l-2.7 -0.7l-1.9 2.4l-3.4 1l-0.7 2.4l-2.2 2.2l-3.4 -1.4l-2 2.4l-3.9 1.5l-0.7 2.1l-2.3 1.3l-2.4 0.3l-3.4 -0.5l-3.9 -0.6l-2.9 1.3l-2.7 -0.9l-2.4 -2.1l-3 0.3l-3 -2.3l-3.9 -1.8l-2.6 -3.7l-1.8 -2.2l-2.5 -1l-2.1 -0.6l-2.6 -0.9l-2.2 -2.7l-2.9 -2.3l-2.8 1.2l-2.2 1.4l-1.8 1.1l-2.1 0.3l-2.8 1.1l-3.3 2.8l-1.7 2.2l-1.4 2.3l-3.8 1l-1.4 2l-2.3 1.4l-1.9 3.5l-1.1 3l-0.2 2.5l-2.9 2.7l-1.2 2l-2.8 0.8l-2 1.8l-3.2 1.8l-2.3 0.3l-2.2 1.6l-1.7 2.3l-1 2.2l-2.9 -0.2l-2.7 1.3l-2.2 -0.3l-3 1.1l-3.1 1.9l-2.9 0.6l-2.9 0.3l-2.9 -1.2l-2.3 -2.4l-2.3 -2.1l-3.1 -2.3l-2.7 0.6l-3 -0.4l-2.5 -0l-2.6 -0.5l-2.1 -1.8l-2.4 -0.4l-2.5 -0.2l-2.8 1l-4.4 0.5l-2.5 1.1l-3.1 0.3l-1.3 1.7l-1.4 2.5l-0.6 3.6l-0.4 2.2l-1.7 2.4l1.5 1.3l2.7 0.8l1.5 1.9l-0.2 2.9l1 1.7l2 1.9l1.5 2.3l2.4 1l1.6 1.6l1.9 1.6l2 3.7l4.2 -0.3l1.4 1.8l1.3 2.1l2.9 2.6l2.6 2.1l-2.7 -0.1l-2.4 -0.5l-1.9 1.2l-1.2 2.2l-2.3 2.8l-1.9 2.7l-0.3 4.3l1.7 4l2.5 3.6l3 1.9l2.6 2.5l2.7 0.1l1.6 1.6l3.5 2.6l2.4 -0.5l2.4 0.6l1.6 3.9l2.5 1.6l1 -4.4l-2.3 -3.8l-1.2 -3.6l-1.5 -2.7l1.3 -2l2.7 -1.4l2.4 3.1l1.2 2.2l0.6 3l2.6 0.7l1.5 1.3l1.1 1.9l0.3 3l2.1 2.7l3.3 0.2l4.3 -0.2l1.9 2l0.5 2l4.5 0.2l1.6 1.7l2.8 1.3l2.5 2.5l2.6 1.6l2.4 2.8l-1.5 2.9l2 2.4l2 1.9l1.8 3.4l2.2 3l2.3 1.3l2.9 2.3l1.8 2.7l2.4 1.4l1.2 1.9l-1.4 4.1l-2.8 0.6l-2.9 3.1l-2.3 -0.5l-3.1 0.2l-0 -4l-2.7 -3.5l-1.7 -1.2l-1.7 -1.8l-2.1 -3.9l-2.9 -2.4l-1.3 -3.1l-1.6 -3.2l-0.9 -3l-0.2 -2.1l-3.2 -1.7l-2.4 -2.4l-2.7 -0.6l-2.3 -0.3l-1.5 -1.7l-1.7 -1.6l-2.8 -0.7l-2.9 1.2l-2.6 -3.2l-2.7 1.5l-2.9 -1.5l-2.7 -1.3l0 -2.9l-3.2 -0.6l-2.3 -2.1l-2.4 -0.1l-3 1.6l-3.3 -1.3l-2.4 -1.6l-2.7 1.7l-2.6 1.6l-2.5 0.3l-3.2 -1.4l-2.6 -0.4l-2.7 0.9l-2.9 0.4l-1.5 2.4l-2.3 2.1l-1.8 3.4l1.1 3.6l-0.6 2l0.9 2.7l1.8 2.3l-0.4 2.2l4.1 1l4.4 0.7l0.7 3l1.8 1.8l2.7 -0.4l2 0.9l1.4 3.5l2.2 1.6l2.2 2.6l2.2 0.7l2.5 0.8l2.8 2.8l2.3 1.9l3.1 -0.6l1.8 0.9l2.2 1.8l1.1 2.9l0.5 2.2l-0.2 3.8l1.6 2.1l-0.1 4.3l0.7 3.9l-0.8 2.5l-0.4 1.9l-1.4 1.9l-2 1.6l-1.6 3.4l-2.9 2.1l-2.6 0.6l-2.4 -3.4l-1.7 -2.1l-1.5 -2.7l-2.7 -2.8l-3.7 -2.3l-3.2 0.9l-1.8 -3.3l-2.3 -2.2l-1.1 -3.9l0.2 -2.8l-1.9 -1.6l-2.7 -3l-0.7 -2.6l0.7 -2.7l-2.2 -1.3l-2 -0.9l0.2 -2.9l-1.6 -3.2l-1 -2.5l-1.6 -1.4l-2.9 -3l-1.7 -1.9l-2.4 -0.4l-1.4 -3.2l-1.8 -1.9l-2.2 -0.6l-2.9 -1.6l-4.2 -0.8l-2.8 -2.4l-2.7 0.4l-2.4 0.3l-3.3 1.5l-2.6 -0.5l-2.7 -1.8l-2.6 -0l-2 0.9l-3.7 -0.4l-3.5 2l-1.3 1.7l-2.1 1.8l-1.8 2l-1.4 2.3l0.5 4l3.2 1.2l0.6 3.3l0.4 2.4l2.7 1.4l2.8 0.9l2.1 1.6l0.8 3l1.2 2.8l3.7 2l2 2.2l1.5 2.1l-0.3 3.3l1.6 1.4l1.1 2.3l2.8 3.2l3.5 1.3l3 -0.1l1.3 2l1.8 2.4l2.4 1.8l1.8 2.1l3 0.1l2.5 0.1l2.2 -0.4l2.6 1l0.8 3l2.7 1.9l2.6 1.5l2.9 1.3l-1.4 2.8l-4 0.2l-3.2 -1.7l-2.4 1.5l-2.8 1.1l-3.7 0.1l-1.6 -1.4l-3 -1.2l-3.5 -2.2l-2.3 0.4l-2.5 -1l-1.8 -1.7l-3 0.7l-1 -1.9l-2.4 -1.2l-2.1 -2l-2.4 0.1l-3.8 0.5l-4 -1l-2 0.4l-2.3 1.1l1 -2.9l0.4 -3.1l-0.4 -2.4l-1.2 -2.2l-1.2 -3.7l-2.3 -3.8l-1.8 -3.1l-0.8 -4.3l-2 -2.6l1.4 -2.9l1.4 -4l-0.3 -2l-1.4 -2.6l2.4 -2.7l-2.1 -2.4l-1.7 -3.5l-2.5 -2l-1.5 -1.8l-2.6 -1.1l-2.9 0.2l-1.2 -2.8l-3.6 -2.3l-1.7 -1.4l-3 0.4l-4.1 -1.5l-2 -0.9l-2.2 -1.2l-2.3 -2.6l-2.5 -0.7l-2.3 -1.2l-1.2 -2.4l-2.7 -1.4l-2.5 0.6l-1.2 -2.1l-1.9 -2.6l-2.1 -1.6l-3.1 -1.4l-2.9 -0.4l-2.9 0.6l-2.8 -3l-1.3 -2.5l-0.4 -4.2l-2.4 -2.7l-1.5 -3.6l-2.6 -3.3l-1.8 -1.5l-1.6 -2.7l2 -1.5l2.7 -1.2l3.4 -1.2l2.3 0.8l2.6 0.4l3.5 -1l2 -1.8l1.2 -2.7l1.6 -2.8l-2.1 -2.6l-0.7 -4.3l-1.4 -2.4l-0.7 -2.2l-3.4 -2.3l-2.6 0.5l-2.9 0.9l-1.9 2.7l-2.2 2.8l-3.1 0.7l-1.1 3.4l-4.3 0.4l-2.6 2.4l-1.7 2.9l-2.4 2.6l-2.8 2.8l-4.1 0.8l-1.8 2.1l-2.4 2.6l-3.8 0.8l-3.1 2l-1.7 1l-2.4 1.7l1.9 3.3l0.9 3.6l1.1 2.5l0.6 2.1l3.2 1.4l2 2.3l-2.5 3.5l-1.3 2.5l-0.4 2.3l-1 2.2l-0.3 3.1l-2.8 3l-0.9 3.7l-1.4 1.6l-0.5 2.9l-2.2 2.8l-1.4 2.4l-0.3 3.2l1.1 2.7l-0.2 3.4l0.4 3l-1.2 2.7l1 1.9l0.4 -0.1l0.7 2.1l-0 3.2l1.4 1.5l0.6 2.8l1.3 1.8l0.7 2.5l0.9 2.3l2.6 1.7l4 2l1 2.9l1.9 2l2.6 3.3l1.2 1.9l1.8 1.7l0.6 4.1l2.1 2.8l0.9 3.2l0.8 3.6l2.6 1.9l2.6 2.4l0.8 2.5l1.4 2.2l3.4 0.7l2.7 2.9l1 3.1l1.9 1.5l0.5 3.3l0.7 3.1l-0.4 2.7l1.8 2.1l2.5 2.5l-1.1 3.7l0.9 3.7l3.3 1.3l0.5 3.2l-0.6 2.9l2.7 2.6l2.6 1.2l0.9 1.8l0 2.7l2.1 2.7l0.6 2.7l2.2 2.2l2.1 2l3.4 1.4l2 1.5l2.5 2.7l3.2 2.2l2 3.3l2 2.9l2.5 1.9l2.5 2.7l-0.1 3.5l1.8 3.1l3.5 1.8l1.9 2.7l1.1 2.1l2 3.2l3.2 0.5l-0 2.8l3 1.8l2.5 2l0.4 3.5l0.5 2.5l0.8 3l1.8 3.7l2 1.6l0.3 3l2.4 3.3l1.8 3.6l-1.2 2.8l-0.2 4.1l-3.1 1.3l-2.1 1.4l-1.7 1.4l-2.9 -0.5l-2.9 0.8l-2.6 0.8l-1.3 1.7l-4.1 -1l-2.3 2.1l-1.9 1.6l-4.5 -0.2l-1.9 1.7l-1.8 1.3l-3.4 0.2l-3.5 -1.6l-1.5 -2.9l0.1 -2.6l3.6 -2.2l0.5 -3.3l3.9 -0.3l3 1.7l2.1 -0.3l2.1 -1.7l4.1 -0.8l0.6 -3.6l3.5 -1.9l-1.7 -4.1l-1 -2.1l0 -3.5l-2.7 -0.2l-2.3 -2.5l-0.5 -4.2l-2.3 -0.6l-1.7 -1.9l-2.9 -3l-2.4 -1.4l-0.7 -2.3l-3 -0.4l-3.6 0l-2.7 -1l-3.3 -0.1l-2 -0.1l-3 -0.2l-3.5 2.8l-2.2 0.2l-2.6 -0.3l-1.6 2.1l-2.7 -0.3l-1.6 3.1l-2.4 0.7l-0.7 4.1l-3.5 2.8l1.1 1.9l-0.5 2.7l-0.6 3.6l0.7 2l1.5 2.2l2 2.7l3.3 0.1l3.6 1.3l1.6 2.8l1.7 2l0.8 2.1l2.8 2.9l1.2 2l1.6 2l-0.3 4.2l1.5 2.6l1.5 1.5l2.4 1.1l2.7 0.1l3.5 0.9l2.5 0.1l-2.7 -0.1l-1.3 2.5l-1.4 1.3l-1.5 2.4l-1.6 2.6l-3.2 1.9l-3.5 1.7l-2.8 -0.7l-3 1.4l-1.8 -2.1l-1.3 1.5l-2.2 2l-3.1 3.2l-2.5 0.8l-2.7 1.5l-1.8 3.7l-0.9 3.2l-3.1 1.7l-2.5 -0.4l-2.7 1.5l-3.1 -0.5l-2.4 -0.5l-2.6 -0.5l-2.9 0.1l-3.3 -0.4l-2.1 0.9l-2.9 -3.3l-2.8 3.2l-2.9 -1.1l-2.6 0.7l-2.7 3.2l1.9 2.1l1.8 2.9l2 0.3l2.4 0.6l4.3 0.3l3.1 0.3l2.3 -0.8l2.4 0.2l2.1 1.6l3.2 1.8l4.3 -0.6l2.4 1.8l1.9 2.7l2.5 0.3l2 1.3l3.6 1.3l2.5 0.2l2.9 1.4l3.2 0.7l1.5 1.9l2.3 0.8l1.7 1.5l2.4 0.8l3.2 0.7l-1.1 2.7l2.3 1.9l3.9 1.1l0.8 2.1l2.4 1.5l3.1 2.7l3.7 0.5l2.5 0.7l3.1 2l2.4 0.7l3.2 0.3l3.7 -1.8l2.7 0l3.1 1.6l3.2 0.9l0.9 2.5l3.6 0.1l1.9 2l1.3 1.5l2.1 3.2l1.1 3.1l2.3 1.4l1.5 2l0.2 2.8l0.9 2.5l2.7 0.7l2.7 0.8l3.1 0.5l1.5 1.7l2.4 -2.3l2.2 2.2l2.2 1.7l3.1 0.9l3.2 -1.7l1.7 2.5l2 2.6l3.1 -0.9l0.4 3.1l1.3 1.8l3.8 0.4l1.9 2.2l1.9 3.1l1.8 1.8l1.5 2.2l-0.4 3.7l1.4 3.1l3.6 1.8l2.8 0.1l1.6 1.6l1.8 3.3l3.7 1.6l2.1 0.2l2.9 0.7l2.9 2l3.3 -0.8l2.7 1.4l3.5 1.1l2.4 1.2l2.5 -0.5l2.6 3l2.1 0.5l2.3 0.4l1.8 2.9l3 1.5l1.4 2.4l1.8 1l1.4 1.7l1.9 1.3l2.9 2l2.5 3.2l2.5 1.8l2.4 2.1l-0.5 4.1l-1 2.9l-2.1 0.8l-3 1.1l-2 1.4l-2.5 3.7l-1.7 2.5l0.5 2.5l0.5 2.6l1.3 2.4l-0.3 2.4l2.2 2.5l1.1 3.2l0.1 3l-1.3 2.7l0.1 3.6l2 2.3l-0.1 3.9l1.7 2.4l0.1 3.8l-0.1 2.7l-1.1 3.5l2.1 2.2l0.4 4l0.4 3l2.7 2l1.2 2l0.6 2.9l-1.6 2.6l1 2.4l-0.9 2.4l-1 2.6l-0.2 2.2l-1 2.7l-0.4 2.7l1 2.3l-1.8 3.7l-2.2 1.7l-2.8 -1l-3.7 -1.9l-3.8 0.6l-3.7 -1.8l-0.7 -2.2l-1.8 -1.6l-2.7 -1.6l0.9 -3.3l-1.1 -2.7l-0.8 -2.3l-2.5 -3.7l-3.7 -2.5l-1.3 -1.8l-1.8 -1.9l-1 -2.8l-2.1 -1l-3.7 -1.2l-2.3 -1.7l-1.5 -2l0.3 -3.2l-2.8 -1.8l-2.4 -3.7l-1.5 -2.6l-2.3 -1.2l-2.2 -1.7l-1.5 -2l-3.7 -2.5l-3.8 -1.2l-2.4 -0.4l-2.5 -0.9l-3.7 0l-2.5 -2.4l-1.3 -3.8l2.5 -3.7l1.8 -1.6l1.9 -2.1l-1.2 -2.5l-2.3 1.9l-2.7 -1.9l-2.8 -0.1l-2.1 1.3l-2.3 0.9l-2.7 0.4l-2 1l-3 0.2l-3.7 2.5l-2.5 2.5l-3.7 1.2l-2.5 -0.1l-2.5 0.8l-2.9 0.7l-3.3 -0.1l-3.3 -0.5l-2.9 1.1l-2.8 2.4l-3.4 -1.2l-3.1 -0.9l-3.1 2.8l-2.9 0.2l-2.1 2.3l-2.2 2.2l-2.8 0.3l-2.6 -0l-2.3 1.8l-2.4 -1l-2.6 2.3l-2.2 2.1l-2.8 -0.3l-1.8 2.5l1.8 3.7l2.2 0.7l1.6 1.8l2.2 0.7l2.7 0.6l3.1 0.2l1.9 1l3.5 0.5l1.5 2l1.5 2.7l2.2 1l0.7 2.6l0.5 2.4l-2.5 3.7l-3.7 2.5l-1.2 3.7l1.7 1.1l0.8 2.7l3.7 2.4l1.5 3l-2.8 2l-0.1 2.7l-2.3 2.3l0 3.2l1.2 1.8l0.9 2.2l1.6 2.7l1.8 2.5l3.2 1.2l2.1 1.1l2.8 1.4l2.8 1l2.2 1.5l2.7 0.2l2.3 2.3l2.6 -1.2l2.3 0.6l1.9 -3.1l-1.4 -1.5l-1.7 -2.3l-1.1 -3l-2.5 -0.2l0.4 -2.7l0.1 -2.1l2.7 -1.3l1.6 -2.5l3.2 -0.5l3 -0.7l1.4 2.4l3 0.7l-0.8 3.2l1.4 3l-1.8 1.8l-0.7 3.2l-2.5 3.7l2.5 3.7l0 -4.3l2.4 3.2l3.1 0.3l2 1.5l3.3 -1.8l1.7 -1.1l2.4 -0.9l2.3 3.2l2.7 3l-1.5 1.4l-2.4 1.3l-3.6 -0.2l-3 1.2l-1.9 1.3l4 1.3l3.4 2.4l4.2 1l2 2.8l-4 0.7l-2.2 1.8l-3.1 1.2l-4.3 1.2l-1.8 1l-2.5 1.1l-3.2 1.7l-1.6 1.5l-1.2 2.2l-2.7 -0l-1.9 0l-2.6 2.5l-2.4 1.2l-2.5 -1.2l-3 -1.4l-4.4 0.1l2.6 2.5l2.3 1.3l3.2 0.7l2.2 -0.9l2 1.6l2.6 -0.2l-2.5 3.7l-4.4 -0.2l-3.1 -1l-2.5 -0.3l-3.1 0.6l-2.3 -0.3l-2 -1.3l-3 1.7l-2 3.3l-0.9 2.1l-2.8 1.6l-1.6 -3.8l-2.1 -2.4l-2.3 -3.6l-3.9 -1.3l-0.8 -2.6l-1.7 -2.4l1.8 -2.3l1.9 -2.7l2.6 -1.4l2.4 -2.3l-2.7 -2.3l-1.1 -2.7l-3 -1.9l-3.2 -1.8l-1.6 -1.1l-2.4 -1.6l-3.4 0.2l-2.6 0.8l-2.2 -1.3l-1.8 -2.1l-0.9 -2.4l-3.5 -2.7l-3.9 -1l-3.9 -0l-3.6 -1.2l-2.1 -2.9l-2.8 -0.8l-3.1 -2.2l-2 -0.8l-2.4 -0.8l-3.4 -1.7l-2.8 -0.8l-0.1 2.7l-1.7 2.3l1.3 4l-1.1 3.7l1.6 2.2l0.5 2.7l-0.6 2l0.2 2.3l1.1 3l0.8 2.5l2.2 1l-0.5 3.9l1.5 3.6l0.8 2.6l1.6 2l1.1 1.8l1.1 1.9l1 2.1l1.6 3.4l3 0l0.6 3.6l0.1 3.9l1.6 1.7l0.2 2.5l2 3.2l2.8 2.6l0.1 2.3l0.8 2.6l0.6 4.2l0.7 3.2l-0.1 2.5l2.1 1.7l1.7 3.3l2.9 1.3l2 3.7l-0.6 3.6l2.7 1.3l-0.6 2.5l-0.2 2.5l-1.5 2.9l1.3 3.1l0.2 2.2l2.5 1.7l0.9 3.2l1.2 2l0.7 2.5l-1.6 2.3l-0.6 2.7l1.9 2.8l-0.1 2.5l1.3 1.9l1.3 3.4l0.5 2.3l1.9 1.8l3 2.9l0.8 2.3l-0.1 2.2l1.5 3.5l2.3 2.7l-1.1 3.6l-2.7 2.6l-3 0.7l-1.9 1.8l-1 2.3l-1.5 2.7l1.4 3.8l1.1 3.7l-3 2.7l-1.1 2.4l1.6 2.3l0.5 4.4l2 3.1l4.3 -0.3l3.1 2.7l2.5 3.4l2.5 1.6l0.1 4.1l2.4 3.4l2.2 2.4l1.5 3.8l2.3 1.7l2.7 2l-2.5 2.5l-2.8 -0.5l-2.1 1.8l-3.8 -0.1l-2.4 -2.2l-2.6 -1.5l-2.4 -2.8l-1.3 -2.2l-1.6 -3.7l-2.1 -2.5l-2.7 -1.5l-2.3 -1l-3.7 1.3l-2.2 -3.1l-0.6 -2.4l-1 -2l-0.1 -2.5l-2.3 -2.4l-2.1 -3.7l-1.7 -2.5l-3.2 -2.1l-0.5 -2.9l-3.2 -2.7l-1.8 -2.3l-2.7 -2.2l-1 -2.8l-3.7 2.5l-1.2 -3.3l-0.1 -2.9l2.7 -1.5l-0.2 -3.5l-1.3 -3.8l-1.2 -3.6l-0.9 -2.3l-1.5 -2.7l-3.7 0.1l-2.4 -0.9l-2.6 0.3l-2.3 -0.5l-2.3 0.7l-3.1 -0.5l-2.3 0.3l-4.2 1.1l-3.2 -0.1l-2.4 1.9l-2.6 0.1l0.3 4l-1.5 3.5l-1.2 3.5l-2.6 1.4l-0.2 3.4l-3.5 1.6l-1.6 3.3l2.8 2.9l-2.5 1.6l-1.2 2.1l-1.3 2.3l-1.2 2.7l0.5 3.2l2 1.8l-2.8 1.9l-0.9 3l1.1 3.4l0.1 4.1l0.2 3.2l1.1 4.3l-1.6 2.4l-1.3 1.6l1.6 3.4l-0.1 3.2l-1.1 4.3l-1.2 2.4l-1.1 -1.9l-0.9 -2.3l-0.5 -3.2l-1.1 -2.8l-1.4 -2.2l-2.2 -1.3l-2.8 -2.4l-1.4 -2l-1.5 -1.5l-3.3 -0.2l-0.8 -3.8l-2.9 -2.4l0.4 -2.9l3.3 -2.1l-0.1 -3.9l1.3 -3.6l-0.7 -3.5l-0.5 -3.9l0.2 -2.4l0.2 -2.6l2.1 -3.7l-1.7 -3.6l-0.8 -3.9l-1.9 -2.5l-1.8 -2.4l0.5 -3.7l-1.5 -1.6l-1.5 -2.2l-1 -3l-2.1 -0.9l-0.6 -3.5l-0.7 -3.1l0.5 -2.2l-3.6 -2.2l-1.4 -4.1l-3.5 -2.1l-3.3 -0.8l-2.9 -0.4l-3.9 0.3l-2.4 -1.6l-2.3 -1.6l-1.4 -3.4l-1 -3.3l1.3 -1.4l2.2 -1.5l1.7 -2.5l-1.7 -3.7l-3.6 0.3l-0.8 -2.3l-1.8 -1.7l-4.1 0.9l-3.4 -2.2l-3 0.4l-1.6 1.7l-2.8 -0.8l-4 1.4l-2.2 2.3l-0.7 4.4l-1.6 1l-2.7 0.8l-1.6 4l0.4 3.5l-1 2.4l1.2 2.6l0.3 2.2l-0.5 2.7l0.8 2.6l1.5 3l-0.9 2.1l-0.2 2.3l1.5 2.3l2.2 2.6l-1.3 3.2l-2.4 1.8l-2.2 2.3l-2.8 2.7l-3.3 0.4l-1.6 2l-1.5 -3l-2.3 -3.2l-0.5 -3.1l-1.9 -3.1l-2.9 -1.2l-2.1 -1.3l-3.7 0.3l-2.5 -2.7l-2.2 -2.6l-4 0.1l-1 -2.7l-2.8 -2.3l-2.7 -3.2l1.7 -1.6l-0.2 -2.6l0.8 -3.4l-3.3 -1.6l-2.5 -2.9l0.9 -2.1l0.4 -2.5l-2.4 -3.1l1.1 -3.1l-1.9 -1.8l-1.9 -0.8l-2.4 -3.6l-3.1 -2.3l0.5 -2.5l0.1 -2.6l-1 -4.3l-0.2 -3.2l-0.2 -3.8l-0.2 -3l-0.9 -1.9l0.8 -2.3l2.8 -1.3l-1.1 -3.8l2.1 -0.4l2.3 -1.7l0.6 -4.2l2.9 -1.4l0.9 -2.2l1.4 -1.9l2.3 -0.7l1.2 -4.2l1.7 -2.5l0.8 -2l0.8 -1.8l0.7 -2.7l-0.3 -2.3l0 -3.1l-1.2 -2.8l0.9 -2.4l-1.4 -2.3l-0.8 -2.4l-0.5 -1.9l-0.5 -2.8l-2.1 -2.8l-0.6 -2.5l0.1 -2.8l-0.7 -2.7l-1.6 -2l-2.8 -1.2l-3.1 -1.8l1 -3.2l-1.4 -2l-2.7 -1.7l-2.9 -2l-2.5 -1.3l-1 -1.9l-1 -2.2l-1.7 -2l-1.5 -1.5l-2.4 -1.2l-3.1 -1.5l-3 -0.4l-1.7 -2.7l-4 -1.9l-3.3 -1.6l-1.4 -1.4l-2.8 -0.7l-2.9 1.6l-3.3 2.1l-1.2 -3.7l-0.3 -3.8l1.5 -3.7l-2.7 -3.5l-1 -3.9l-1.5 -2.6l-2.5 -1.3l-2.2 -3.6l-2.1 -1.6l-2.9 -0.7l-1 -3.3l-1.5 -1.8l-2.1 -1.5l-2.4 -0.9l-2.9 -2.6l-3.7 -2.5l0.2 -3.9l1.2 -3.1l1.3 -1.8l2.3 -0.6l2.4 -1.6l4 -1.5l1.6 -2.2l2.3 -2.1l3.5 -2l2.8 -0.3l2.2 -1.7l-0.7 -3.6l3.2 -1.8l2.4 -3.5l1.9 -1.4l0.7 -2.6l0.2 -2.4l1.7 -2.7l0.3 -2.6l1.5 -2.2l0 -2.3l-0.2 -2.7l2.7 -2.5l0.2 -4.2l1 -3.2l0.8 -3.3l0.5 -4.2l1.7 2.4l3.2 1.4l3 -0.9l2.9 1l1.7 2.1l1.1 1.5l2.9 -0.3l2.1 -0.4l2.7 0.7l2.3 2.5l4.4 0.5l3.2 1.2l2.3 -0.5l2.4 -2.5l2.8 -1.1l2.9 -0.6l1.8 1.7l1.7 -1.9l2.7 -1.4l3.1 -2.9l1.6 -2.9l2.7 -1.5l-0.6 -3l1.5 -2.4l-0.7 -2.1l2.9 -3l3.6 -0.8l1 -2.5l1.6 -1.7l2.4 2l3.2 -1.3l3.1 -3.1l2.9 2.2l2.5 -0.6l2.5 -0.5l2.1 0.1l4.3 1l2.6 2.5l3 0.2l3.3 -1.1l2 2.5l2.2 3.6l2 0l2.5 1.3l0.9 1.9l2 1.8l2.5 1.5l1.3 2l1.9 1l1.8 1.7l3 1.2l1.7 3.3l3.9 1.6l3.6 0.2l2.8 0.6l1.3 1.7l3.3 -1l2.3 2.8l3.9 -1l3.1 2.8l3.1 -0.3l3.6 1l2.6 1.5l3.4 1.2l2.9 1.9l3 1l3.2 -0.4l2.7 2.6l3.5 -1.3l2.9 1.6l3.3 0.8l2.7 1.6l3.5 2.2l3 1.3l2 2.4l2 1.6l2.9 2.1l1.5 2.2l3.5 1.5l3.4 1.6l1.6 2.2l2 2.7l2.9 1l2.7 0.7l2.3 2.4l1.6 1.8l2.1 1.3l1.6 2.1l2.2 1.6l2.7 0.9l2.2 1l2.7 -0.2l2.3 -0.4l4.3 -1.3l1.3 -2.4l-1.9 -2.5l-2.9 -1.5l-0.8 -2.3l-3.7 -2.4l-1.7 -1.6l-2.1 -0.9l-3.7 -1.9l1.3 -1.9l2.7 -2.6l2.2 -1.1l2.5 -1.9l2.5 -0.6l2.5 -0.4l3.7 -0.2l2.6 1.6l3.6 0.3l3.2 1.7l3 -0.5l3.4 -0.5l2.8 -0.1l3.2 -1.5l3.1 0.3l2.9 -1.2l3.3 -0.7l3.7 -2.5l1.2 -3.7l-2.4 -3.7l3.7 -2.5l-1.3 -2.5l-2.9 0.3l-3.3 -2.2l-3.5 0.9l-1.4 -2.7l-0.8 -1.7l-1.7 -2.1l-3.8 1.3l-3.5 -0.1l-2.7 1.3l-3 -0.9l-3.2 -0.3l-3.2 -0.7l-3 0.7l-3.2 -1.5l-3 0.2l-3.7 -2.4l-2.1 -1.6l-0.4 -2.2l-3.9 -1l-3.6 1l-2.3 -2l-3.9 0.8l-3.7 -2.5l1.4 -1.9l1.1 -3.1l-3.7 -2.5l-2.2 -1.4l-2.8 -2.3l-2.4 -2.4l-2.6 -2.6l-1.8 -2.7l-0.7 -2.2l-2.1 -2.2l-1.6 -1.5l-3.7 2.4l-0.1 2.8l-2.4 2.2l-1.6 2.9l-0.9 2.1l-2.6 1.1l-2.4 2.6l-1.5 -2.3l0.2 -3l-2.4 -3.4l-1.2 -2.3l-1 -1.9l-1.5 -3.2l-1.2 -2.2l-0.2 -2.6l-2 -1.6l-2.8 -0.5l-3.7 -0.6l-2.5 1.2l-0.8 2.7l-2.3 2.3l-0.7 3.7l-1.8 2.5l-3.6 2.3l-3.3 -0.4l-4.2 -1.1l-4.5 -0.2l-3.4 -0.3l-1.9 2l-3.3 -2.3l-2 1l-1.5 2.2l-4 -0.1l-4.1 -1.6l-3.1 -2.2l-1.9 1.3l-2.8 -0.5l-2.8 -3.3l-2.5 -1.8l-2.4 -0.7l-4.2 0.9l-2.2 -1.5l-1.1 -1.9l-3.9 -1.9l-3.5 0.7l-3.4 0.4l-4.1 0.8l-3.3 1.8l-4.1 0.7l-3.6 2l-2.7 0.5l-2.7 -0.2l-3.5 1.4l-2.1 -1l-2.4 0.2l-2.9 3.3l-3.5 2.7l-4 -1.4l-4 1.1l-3.4 0.1l-3.6 2.6l-3.9 -1.4l-3.8 1.3l-3.6 1.2l-1.6 -3.1l-3.4 -0.6l-2.5 -2.5l-2.5 -1.2l-2.3 1.2l-2.6 1.3l-3.3 1l-4.2 0.2l-3.4 2.8l-4 -1.6l-3.3 1.2l-4.2 -1.7l-4 -0.1l-3.5 -0.6l-3.1 -0.6l-3.1 1.8l-3.3 1.6l-2.9 -0.3l-2.5 -3.7l1.4 -4.2l2.4 -3.3l0.9 -3.6l0.3 -3.8l-2.6 -1.3l-1.3 -1.6l-0.7 -1.9l0.9 -2.7l-0.1 -4.2l-2.3 -1.6l-1.3 -1.7l-3.5 -1.2l-1.5 -3.7l-2 -2.5l-1.7 -2.5l1.6 -2.8l-0.9 -1.9l0.5 -2.7l0.1 -3.9l-2.6 -3.6l-0.9 -3.5l-4 -1.5l-4 -2l-0.3 -3.1l-0.7 -2.3l-1.4 -2.3l-1 -2l-2.6 -3.2l-0.7 -3.9l-1.4 -2.1l-2.9 -1.4l-3.1 -0.3l-2.1 -0.6l-1.6 -1.5l-0.6 -2.6l-4 -0.2l-3.5 -2.3l-2.4 -2l-0.2 -2.3l-2.3 -3.1l0.4 -3.6l2.1 -3.9l2 -2.6l-0.4 -2.4l-0.2 -3.5l1.2 -3.4l-0.7 -4.2l-2.3 -2.5l-0.3 -3.5l-3.4 -2.7l0.4 -3.2l2 -3l-1.4 -2.3l-0.2 -2l-0.8 -3.2l-2.6 -3.4l-1.4 -2.7l-2.3 -1.3l-0.5 -3.8l-2.3 -1.7l-2.1 -0.8l-3.9 -1.3l-1.2 -1.9l-1.1 -3l-2.1 -2.7l-2.7 1l-0.2 -1.9l-1.2 -2.6l-1.5 -2.1l-1.7 -1.4l-3.1 -2.7l-0.9 -2.3l-0.1 -2.8l-2.7 -3.6l-3.6 -1.8l-3.8 0.6l-3.7 -1l-1.4 -1.7l-2.4 -1.1l-2.3 -2.3l-2.7 -2.6l-2.4 -3.4l-2.5 -2.8l-1.2 -1.9l-1.7 -1.6l-2.1 -2.7l-2.1 -1.6l-1.7 -1.3l-1.2 -3.4l1.2 -3.3l2.6 -1.6l-1.9 -1.5l-0.6 -2.3l3.7 -2.4l-1.8 -1.6l-0.7 -2.2l-2.8 -2.3l-3.4 -1.4l-3.5 -1.1l-1.5 -2.6l0.6 -2.9l0.7 -2.1l1.7 -3.4l2 -4l-1.3 -2.7l-2.4 -3.6l-2.5 -0.4l-1.8 -2.5l-2.6 -2.2l-3.1 0.2l-2.9 0l-3.2 0l-2.6 -1.3l-1.2 -2.5l1.2 -2.4l3.8 1l0.4 3.2l2.7 0.2l1.8 -0.7l3.2 1.1l1.6 2l2.6 0.9l2.6 1l1.7 0.8l2.6 1.1l3.1 0.5l2.6 -2.9l1.2 -3.3l2.5 -2.7l-1.1 -2.7l2.3 -2l-0.6 -2.5l1.4 -2.8l2.9 -3.4l1.3 -1.9l-0.5 -2.8l0.9 -2.4l2 -1.6l0.6 -2.5l0.9 -2.1l2.2 -1.1l1.3 -1.8l2.1 -1.4l0.2 -2.9l2.3 -3l0.4 -2.6l-1.8 -3.8l-0.7 -3.7l-1.9 -3.8l-0.5 -2.9l-1.3 -2l0.3 -0.2zM1586.4 575.2l-1.4 -2.7l1.7 -2.5l1.5 -3.6l2.5 -2l1.6 -1.5l1.4 -2.9l1.4 -1.9l2.2 -1.1l1.8 0.1l1.3 -1.9l2.9 -1.3l2.3 -0l2.7 0.5l3.3 2.3l2.8 1.6l1.5 1.7l2.3 2.1l1.7 1.5l-0.4 2.8l0.7 3.4l0.9 2.3l1.6 2.5l-0.5 3.9l-2.5 2.4l0.6 2.6l-0.4 2.2l-2.3 1.2l-1.3 2.4l-2.5 0.7l-2.2 1.2l-2.8 1l-3.1 1.1l-1.8 1.2l-1.9 0.8l-1.5 -2.5l-2 -2l-1.5 -1.8l-1.9 -0.6l-3.9 -0.4l-2.5 -1.1l-1.9 -1.2l1 -3.6l-0.4 -2.4l-2 -2.3zM1720.8 612.2l1.2 -2.3l2.1 -0.8l2.9 -1.3l2.6 -0.7l3.4 -1.7l2 0.8l3 0.2l1.7 0.7l2 1.8l3.4 1.3l2.6 -0.2l1.5 0.9l2.3 0.5l0.9 2.2l2.2 2.5l-1.1 3.5l-1 2l0.7 2.7l-1.5 1.4l-1.6 1.1l-2.5 1.1l-2.7 -0.3l-3.4 0.4l-2.2 0.6l-2.7 -0.1l-1.5 -1.3l-2.1 -0.4l-2.8 -1.4l-1.8 -2.4l-3 -2.5l-2.2 -0.8l-1.7 -0.9l-2.3 -2l-0.5 -2.1zM1496.2 642.4l2.2 -1.5l3.2 1.4l2.4 1.4l-1.4 2.7l-3 -0.9l-2.5 0.4l-1.6 -1.3l-1.2 -2.3zM1342.8 920.4l1.5 -2.3l1.9 -0.6l3.9 -0.3l2.2 -1.3l2.1 1.2l2.2 1.6l2.3 -0.9l3 1.6l2.3 0l2.1 -0.6l3 -0.4l2 1.5l1.8 1.2l2.9 0.2l3.3 0.8l2 2.1l3 0.4l1.1 3.4l2.3 -0.5l1.5 2.1l2.8 0.6l3 1.9l1.9 0.5l2.2 1.9l1.7 1.7l2.6 0.9l2 1.5l1.4 1.4l2.3 2l3 0l1.6 1.8l3 2l2.3 1.2l2.4 1.5l3.1 1l2.4 2.6l2 2.3l2.2 1.8l3.2 1.3l1.8 1.4l1.9 1.3l0.3 1.8l0.6 2.3l1.6 1.1l2.6 0.9l1.3 3.1l2.1 2.5l2.3 2.4l2.7 2.7l0.2 3.1l2.6 1.9l2 2.2l0.6 3.2l0.8 1.8l1.1 2.5l0.1 2.2l-0.4 1.9l0.2 3.3l0.1 2.5l3.6 0.9l3.1 -0.1l2.7 1.7l3 0l3.4 -1.3l2.6 -0.7l1.4 2l2.3 0.5l2.7 2l3.1 -0.8l3 -0.6l2.9 1.9l3.4 -0.5l3.4 1l3 0.5l2.8 1.3l3.2 -1.6l2.5 -1l2.4 1.5l3 0.4l2.1 0.4l2.1 2.7l0.4 3.5l-3 1.1l-3.2 1.4l1.7 0.9l2.3 1.3l2.1 0.5l2.6 1l1.8 1.2l0.5 2.1l1.2 1.7l0.2 2.4l2.6 1.5l1.1 3.5l0.9 3.1l1.5 1.3l2.6 0.6l2.4 2.8l-0.3 2.1l1.6 2.5l1.3 2.7l1.5 2.3l-0.9 2l0.6 3l1 2.5l2.7 2.4l2.2 0.7l2.1 0.3l3.2 1.5l2.3 2.6l2.6 2.4l0.7 1.6l-0.4 2.4l2 1.1l1.5 2.3l1.6 1.8l2.7 2l0.4 2.5l1.5 1.2l1.8 2.1l3.1 0.4l2 0.1l1.9 -1.9l3.6 -0.7l3.2 1.8l1.8 3.2l3.3 -1.7l1.6 -2.1l1.7 -1.3l2 -1.6l1.3 -3.3l1.2 -1.8l1.4 -2.1l-1.4 -2.9l1.3 -3.1l-1.4 -1.8l0.4 -3l0.6 -2.9l-0.1 -2.2l-0 -3.8l-0.8 -3.7l-1.5 1.5l-2.2 1l-2 -0.6l-2.4 1.1l-3 -0.8l-2.5 -1l-2.9 1.1l-2.8 -0.2l-1.5 -2.1l-2.8 0l-2.5 1l-2.9 -0l-2.2 -1.6l-2.3 -0.6l-1.9 -1.7l-2 -0.7l-2.3 -2.6l-2.5 -0.3l-1.2 -1.9l-1.1 -1.7l-1.4 -2.3l0.2 -2.2l-0.7 -2.3l-2 -3l-1.5 -3l-0 -2.7l-1 -1.7l0.1 -3.5l-1.2 -1.8l-1.4 -2.2l-0.4 -2.1l0.5 -2.7l-2.6 -2.6l-0.1 -3.7l-1.7 -1.9l-0.6 -1.9l1.9 -2.8l0.1 -2.4l1.7 -2.2l-0.4 -2.6l-0.7 -2l1.4 -2.7l0.9 -2.7l-0.3 -2.1l-0.5 -2.3l-0.9 -1.8l-2 -1.2l-2.9 -2l-0.5 -2.7l-2.8 -2.8l0.9 -1.8l-0.7 -2.5l-0.8 -2.1l-1.9 -1l0.9 -2.9l0.3 -3.3l-3.6 -1.4l-2.7 -1.5l-2.3 0.4l-2.9 -0.4l-3 -0.3l-2.4 0.5l-1.7 -1.1l-3.6 1.6l-3.8 0.9l-2.2 1.8l-2.5 -0.5l-2.7 0.1l-2.6 -0.1l-2.1 0.3l-1.9 -2l-3.4 -0.9l-2.5 0.1l-2.7 -0.7l-1.8 -1.9l-2.4 -1.4l-3.1 -1l-2.7 -1.6l-1.4 -2.1l-0.9 -1.6l-2.4 -0.9l-1.3 -1.9l-1.6 -1l-2.1 -2.1l-2.7 -0.8l-2.3 -1.6l-2.3 0.1l-2.6 -1.4l-1.9 -1.2l-2.8 -1.3l-1.2 -2.1l-1.6 -1.6l-0.9 -3l-2.6 -0.1l-1.8 -0.9l-2.1 -1l-0.7 -2.6l-3.1 -1.4l-3.7 -1l-2.9 -1.4l-0.7 -3.8l-0.9 -1.7l-1.7 -1.8l-0.1 -2.1l-1.6 -2.4l-2 -2.9l-1.3 -2.1l-1.2 -1.7l0.3 -3l-1.5 -1.9l-1.7 -1.3l-2.2 -0.9l-2.1 -1.7l-0.2 -2.3l-3.4 -1l-1.7 0.1l-2.4 -0.4l-1.4 0.9l-2.1 1.2l-2 0.7l-2 1l-3.9 -0.5l-1.9 1.8l-2.8 1.2l-2.6 1l-3.7 0.2l-2.4 2.3l-1.3 2.7l-2.1 2.4l-0.2 1.8l-1.4 2l-3.4 1l-0.9 2.1l-0.7 1.8l-1.9 1l-2.5 0.5l-2.6 0.9l-2.9 1.4l-2.4 1.7l-2.3 0.5l-2.3 -1.1l-3 0.1l-2.8 1.6l-2 -1.3l-2.5 1l-1.4 1.2l-0.4 2.2l-0.8 2.8zM1423.9 1100.5l2.4 2.6l3.5 -1.4l4 -0.5l2.2 -1.3l1.9 0.3l2 -0.9l2 -2.4l0.2 -2.5l1.6 -2.5l-0.8 -2.2l-1.6 -1.3l-1.3 -2.7l-2.8 0.4l-3.4 0.9l-1.7 -3.3l-0.8 -3l-3 0.9l-1.8 -0.2l-2.6 0.6l0.7 2.4l-0.7 2.6l2.2 2.3l2.7 1.4l-1.8 1.8l-1.8 2.2l-1 2l-2.2 1.4zM1426.9 1123.8l1.9 -0.5l2.5 -0.3l3.1 0.6l2.5 -0.8l1.9 -0.4l2.9 0.6l3.3 0.6l0.2 2l-1.5 2.4l-1.3 1.4l-1.2 2.3l-2 2.3l-1.7 2.6l-1.1 2.4l-2.6 1.4l-2.1 -1.4l-1.6 -1.1l-2.2 -2.4l-0.3 -2.6l-0.4 -2.3l-1.5 -1.4l-1.6 -2.2l-0.2 -2.8zM1409.4 1137.7l2 -1.7l2.1 -1.2l1.7 -0.6l1.2 2.4l-1.5 2l-1 1.8l-3.1 1.2l-1.9 -1.2zM1526.2 1142.0l0.8 -2.9l-0.5 -3.5l0.7 -2.5l2.2 -1.4l-0.1 -2.8l2.6 -2.2l1.9 2.5l-1.7 1.3l-0.8 2.1l-0.4 2.3l1 1.7l-0.2 3.3l-2.2 1.2l-0.1 3l-1.2 2.8l-1.2 2.2l-1.7 -1.4l0.4 -2.4zM1350.8 1385.8l1.9 3.1l1.2 1.9l2.9 1.1l2.2 1.8l1.4 1.5l1.3 2.6l1.3 1.6l1.1 2.2l1.6 1.4l2 1.7l2.7 0.9l2.1 2.9l2.9 2.1l-1.5 2l-0.6 1.7l-2.9 1.2l-1 1.6l-2.1 1l0.6 2.7l-1.2 2.2l-0.9 3.4l-0.3 4l-2.9 -1.4l-1.9 0.1l-2.7 0.1l-0.9 -2.2l-3 -1.1l-3.5 -1.7l-1.6 -2.4l-1.9 -1.1l-2.8 -2.7l0.3 -3.1l-0.3 -2.1l0 -3.5l-1.9 -3.1l0.2 -3l-0.9 -2.5l0.2 -2.6l0.4 -2.2l1.5 -2.5l1.8 -2l0 -2l2.2 -1.8l0.9 -1.8l1.9 -2.6zM1351.4 1362.6l0.4 -3l3 0.1l2 1.2l0.3 2.3l0.1 1.7l-0.4 3.4l-2.5 -0.6l-3.7 -0.6l-2.5 -2.5zM1377.5 1214.6l2.9 -0.3l2 1l2.1 0.9l0.8 3.1l1.9 3.1l0.6 3.1l-2.6 0.3l-2.3 -1.6l-3 -2l-2 -1.7l-2.2 -2.6l-1.5 -2.4zM1418.7 1208.8l1.5 -2.2l2.4 -1l1.2 -1.5l2.7 -0.8l2.6 -1.1l3.4 -0.3l2.5 -1.5l2.2 0.4l3.1 -0.8l2.2 -1.9l2.2 2.1l2.8 -0.8l-1.8 1.5l-2.5 0.9l-1.1 1.3l-2.1 1.2l-2.9 1.5l-2.3 0.8l-2.5 1.3l-2.2 0.2l-3.2 0.9l-2.2 2.8l-1.8 1.6l-2.8 -1.6l-3 0l-1.9 -1.2zM1558.8 1139.7l1.5 -1l3.9 -0.2l3.2 2l3 1.7l-0.3 2.5l-0.4 2l2 3l-1.5 1.8l-1.8 1.9l-0.4 3.7l-2.3 1.3l-1.4 0.9l-1.1 2.4l-1.5 1.7l-2.4 1.7l-0.9 1.5l-1.6 1.7l-2.8 0l-2.2 1.3l-1.2 -2.1l-1.5 -0.9l0.4 -2l-0.2 -2.5l1.9 -3.3l-0.8 -2.4l0.2 -3l1 -1.9l1.7 -1.3l-0.2 -1.7l-0.1 -2.5l1.8 -3.1l2 -1.9zM1573.9 1180.8l0.4 1.9l2.3 3l2.4 1.6l2.2 0.7l0.9 2.2l0.8 1.7l-3 1.8l-0.3 2.3l-0.5 2.1l-1.3 3.3l-1.7 2.2l-1.9 0.7l-1.1 2.1l-1.2 2.2l-2.7 2l-3.7 1.2l1.1 -1.6l0.5 -2.3l-1 -2.1l-0.6 -2.7l3 -1.5l-0.1 -2.7l-1.3 -2.5l0.9 -2l-1.1 -3.1l0.4 -2.6l-1.8 -1.7l2.5 -2.7l1.2 -2.3l1.7 -1.5l2 -2.2zM1579.5 1230.2l2.3 -1.6l2.3 0.1l1.1 1.9l1.7 1.2l3.4 -0.1l0.3 1.6l0.6 2.4l0.4 3.4l-0 2l-0.6 2.7l-1.4 1.5l-1.8 1.3l-3.7 0.6l-2.5 -1.9l-2.8 -0.6l-2.2 -1.8l-3.7 1.2l0.2 -2.9l1.1 -3.3l0.7 -3.1l1.7 -3.1zM1608.9 1261.7l1.2 2.5l3.8 1l1.7 1.8l1.6 1.6l2.9 1.6l3.5 1.5l1.1 2.5l1.1 2.2l-1.9 3.1l-1.3 3.1l-2.1 1.2l-1.6 2.5l-2.4 -2l-2.6 -2.9l-1.1 -3.8l-1.4 -3.7l-1 -3.1l-1.5 -3.1l-2.1 -3.2l1.6 -2.2l-0.7 -2.1zM1559.2 1331.4l-0 -2l0.9 -3.1l0.4 -2.7l0.9 -3.4l0.4 -2.4l1.2 -1.7l3.4 -0.4l1 2.3l1.8 0.6l1 2.1l0.7 2.5l3.3 1.6l1.9 -0.1l2.4 -1.4l3.1 -0.9l1.4 -1.7l1.8 -1.7l1.8 -2.9l-1.4 -2.3l-2.3 -2.6l3.5 -0.5l2.7 1.7l1.6 3l1.7 1.4l1.6 1.8l-0.2 1.9l-0.4 2.3l-0.6 3.3l-2.4 0.1l-2.4 0.2l-1.9 1.8l-2 1.6l-1.7 2.4l-3.4 -0.3l-2.2 -0.1l-2.6 0.5l-1.8 -1.1l-2.1 0.3l-3.6 1.5l-3.1 -0.6l-2.7 -0.4l-1.6 1.5zM1590.8 1299.5l2.7 0.9l1.8 -2.9l0.6 1.5l1.6 1.9l3.5 0.3l-0.6 3.3l-1.7 1.9l0.3 2.3l-3.2 -0.2l-3 1.4l-1 -2.1l-2.7 -1.6l0.7 -2.1l-0.7 -2.9zM1604.1 1307.8l2.4 -0.3l3.2 1.5l1.7 2.2l-0.9 1.8l-0.3 2.7l-2.8 -0.5l-2.9 0.5l0.1 -3.7l-2.6 -2.1zM1546.3 1305.1l1.8 -0.9l2.3 2l-0.6 2.5l-1.8 1.6l-1.2 1.4l-2.5 -1.8l-0 -2l-0.4 -2.2zM1646.2 1173.6l1.5 2.1l1 1.3l2.4 1l0.5 1.9l-0.1 2.6l0.9 2l-0.3 3.4l2.8 2.8l-1.5 3.7l-3.5 1.3l-2.1 -0.2l-2 0.4l-2.1 2.2l-1 -2.4l-2.7 -2.5l1.7 -3.5l0.2 -2.3l-0.7 -1.7l1 -1.8l0.2 -2.2l0.1 -3.4l-0.3 -2.7l1.5 -3.6zM1610.3 1152.1l2.4 -0.2l1.4 -1.1l2.3 -1.1l1.9 -0.5l2.6 -0.8l0.6 2.4l0.9 2.1l0.2 3.7l-2.5 -1.3l-3.7 -0.1l-3.7 0.2l-1.8 -1.5l-2 -0.5zM1026.6 912.6l2.5 2.2l0.6 3.8l1 2.1l0.9 1.5l-2.4 3l0.2 1.8l-0.3 2.7l1.3 1.6l1.2 2.4l0 3.4l-1.1 3l-0.9 2.5l-0.5 2l1.8 1.3l3.1 1.2l2.5 -1l2.5 -0.3l-1.5 3.6l-1 2.6l-3.2 0.4l-1.7 2.1l-2.4 -1l-2.6 -1.5l-2.5 0.7l-1.2 1.8l-2 1.4l-1.8 1.1l-3.2 1.1l-0.5 2.6l-2.6 -1.2l-1.1 -2.5l-1 -2.2l-2.7 -0.3l-1.4 1.3l-2.4 1.2l-0.6 2.8l-0.8 1.6l-1.6 1.8l0.9 -2.2l-0.5 -2.8l1.4 -3.7l2.5 -3l1.1 -2.5l-1.1 -1.9l-1.2 -2.4l1.1 -2.2l1.3 -2.9l-0.7 -2l-0.1 -2.1l2.1 -3.3l2 -3.1l-0.6 -2.5l1 -1.9l0.3 -3.6l2.1 -0.8l1.4 -1.8l2.2 -2.8l1.5 -2.2l2.4 -1.4l2.6 0.2zM981.9 1004.2l1 3.8l0.2 3.7l3 -1.8l3.2 -0.7l1.4 -3l2.3 -0.8l1.3 -1.2l1.7 -2.1l2 -1.7l1.3 -3.6l1.1 -1.9l0.3 -3.1l0.2 -2.6l-2.1 -2.4l1.2 -2.2l1.7 -2.7l0.4 3.3l1.4 2l0.7 2.1l1.3 2.5l0.1 2.7l1.1 2.1l0 2.7l1.3 2.3l1.4 1.7l1.5 3.1l-1.7 2.8l1.8 2.1l2.2 2.2l1.1 2.6l-0.1 3l2.2 1.6l2.7 2.2l2.1 2.3l2.1 0.4l0.8 3.5l1.3 1.4l1.5 2.4l1 1.9l1.2 1.7l2.2 1.4l0.8 2.6l1.9 3.5l1.8 1.6l0.3 2.3l1.7 3.5l-0.4 3.4l-0.5 2.5l-1.6 1.6l-3.6 1l-2.6 0.2l-1.9 -0.4l-2.2 0.2l-1.1 -1.5l-2.3 -0.8l-1.8 -0.9l-2 -1.6l-3.6 -1.2l-3.6 0.5l-2.4 -1.5l-1.5 -1.5l-2.1 -0.8l-2.2 -0.8l-3.1 1.6l-2.4 -0.6l-2.6 -1.9l-2.3 -1.9l-1.4 -3l-2.9 -1.1l-0.9 -3.9l-2 -3l-2.9 -2l-2.6 1.6l-2.4 -0.3l-2.5 -1.5l-2.5 -1l-2.9 -1.2l-1.5 -2.5l2.4 -3l-1.4 -1.7l0.9 -2.8l0.1 -2l1.3 -2.2l2.4 -3.2l1.2 -2.7l1.3 -3.5l0.6 -2.9l1.8 -2.1zM1016.9 980.0l2.2 1.9l2.1 1.8l0.9 1.9l0.8 3.7l-0.9 3.1l-0.4 3.1l0.4 3.3l3.3 1.7l2.5 1.8l2.5 1.9l-1 1.7l-1.2 2.1l1 3.7l-3.6 0l-1.4 2.5l-2.6 -2.1l-1.1 -2.9l-1.2 -2.2l0.3 -1.7l-1.6 -3.6l0.7 -2.2l-2.5 -1.7l-0.7 -3.5l-0.1 -3.8l-1.3 -1.7l-2.3 -2l-0.6 -2.7l0.6 -3.5l0.8 -2l2.9 -0.5zM1018.2 1087.7l0.9 1.7l1.3 1.8l1.8 3.1l1.9 3.1l2 1.7l1.6 1.8l3.9 0.2l2.7 3l2.3 -0.2l2.4 0.9l1.9 0.9l2 0.9l2.3 2l0.2 1.9l1.6 1.8l1.9 2.5l2.5 2l2.5 3l2.9 1.9l2.1 0.7l1.2 2.3l1.3 3.7l-2.7 0.1l-1.4 -1.3l-3.4 -1.2l-2.8 -1.2l-2.2 -2.6l-2.4 1.3l-1.3 2.5l-1.6 2.1l-2.1 2.8l-2.1 2.2l-0.6 1.6l0.2 2.4l-2 -1.3l-3 0.1l-1.8 -2.7l-3.1 -2.3l-1 -2.1l-1.5 -2.8l-3.3 -1.3l-1.7 -2.5l-0.6 -3.8l-3.1 -2.4l-0.7 -3.1l-0.6 -3.1l-3.1 -2.4l-1.8 -2.6l-2.9 -1.3l-0.8 -3.6l0.6 -3.2l0 -2.2l0.6 -2.1l2 -2l1.7 -2.9l2.6 -0.9l1.1 -1.6zM1051.2 953.2l2.7 -1.2l3.2 0.1l3 -1.3l-1.2 3.7l-1.9 2.3l-1.8 2.7l-1 2.2l-2.8 1.5l-1.7 -3.1l0.5 -3.1zM1041.5 976.9l1.1 2.4l-1.6 2.6l-2.5 0.5l-0.9 -2l0.2 -2.3zM880.5 732.5l1.2 -2l2.9 -2.1l2 -0.3l2.3 -0.1l2.4 -1l3.2 0.2l2.4 -1.3l2.8 -0.6l2 0.5l2.8 0.2l2.8 -2l3.4 0.2l1.4 2l2.3 1.2l2.5 2.3l3.3 0.6l2.9 0.6l-0 2.7l-1.2 3.5l-2.1 2l-1.9 1.5l-1 1.5l-3.2 -0.5l-2.3 1.1l-2 0.7l-2.6 2.2l-2.3 1.5l1.3 2.5l1.2 3.7l2.6 2.2l2.3 1.5l2.2 2.6l2 -1.1l2 1l-0.5 3.8l-0.7 3.7l-1.2 2.7l-1.3 3.5l0.7 2.3l-0.5 2.2l1 2l0.1 2.2l1.1 1.9l0.2 2.2l-0.1 3.3l1.1 2.3l-1.2 1.8l2.6 2.1l2.3 0.3l2.6 1l2.5 0.2l2.5 2.3l1.3 -1.6l1.7 -1.1l3.2 -1.8l2 1.6l1.3 2.9l1.8 2l1.1 2.9l1.6 2.1l0.9 2.9l-3.7 1.2l-3.7 -0.3l-1.8 -1.5l-0.7 -1.9l-3.2 -2.3l-3 -1.4l-3.3 -1.5l-2.9 -1l-2.7 -0.2l-2 -1.5l-1.5 -3.3l-2 -3.1l-1.3 -1.8l-1.7 -1.3l-1.3 -1.4l-1.5 -1.9l-0.4 -2l-0.5 -2.1l-0.2 -2.6l-0 -1.8l-1.1 -3.1l-1.3 -3.1l-1.8 -2.2l-0.6 -2.1l-0.9 -2.7l-1.2 -2.2l-2.9 -2.6l-1.4 -3.3l-2.5 -0.6l-1.1 -2.3l-1.2 -2l-1.3 -1.2l-1.7 -0.6l-2 -1.2l-1.2 -3.2l-1.6 -1.5l-2.1 -0.2l-1 -2.9l-1.5 -2.1l-1.4 -2.7l1.4 -2.3zM948.0 835.3l1.1 3.1l2.6 1.8l1.4 2.5l2.3 2.5l-2.5 2.5l-2.7 -1.6l-2.2 -2.1l-2.4 -1.3l-0.1 -2.5l-1.3 -3.7zM960.4 851.4l0.7 3l-3.2 -0.5l-1.3 -3.7zM841.1 712.0l2.5 -0.2l2.1 1.2l2.9 -0.2l-1.1 2.6l-1.4 1.9l-2 1.1l-2.2 -0.6l-1.8 -1.5l-0.2 -2.8zM872.2 707.8l0.5 3.3l-3 0.5l-0.5 -3.8zM1582.4 896.9l3.1 1.6l1.1 1.4l2 1.4l3.1 2.2l1 2.8l2 1l0.7 2.4l1.6 1.2l0.8 2.3l1.3 2.7l2.2 0.3l2 1.8l2 2.9l1.1 2.5l0.6 2.2l3.3 1.5l0.7 2.6l-0.2 3.6l-2.3 1.7l-3.2 0.8l-2.6 1.1l-2.3 2.1l-1.8 -2.3l-3.2 -2.2l-1.6 -2.5l-2.1 -1.2l-2.5 -1.9l-1.2 -3.1l-2.3 -3.1l-2.7 -0.6l-0.4 -3.9l-2.1 -2.3l-3.3 -0.7l-1.7 -1.8l0.5 -1.6l1.1 -2.1l-0.3 -3.7l0.7 -1.9l-0.1 -2.9l0.9 -1.9l1 -2zM1564.3 920.1l0.6 1.9l0.2 2.1l-3.7 0.5l-0.8 -3.7zM1616.4 1083.1l2.6 -2l1.9 -0.8l1.9 -1.1l3.7 0.7l0.9 1.9l0.1 2.5l2.7 1.8l1.6 1.8l1.1 2l2.3 2.4l1.6 1.4l2 1.2l3.8 1.1l2.8 -0.4l2 1.6l1.6 0.6l2.3 0.7l0.5 3.7l0.8 1.7l1.2 2.1l-0.4 3l-0.8 2.2l-0.1 2.2l2.1 3.2l1.9 2.1l1 2.2l0.1 3.8l1.2 3.6l-2 3.3l-1.1 2.1l-0.7 2.1l-2.5 2.5l-1 -2.2l-2.5 -0.6l-0.6 -2.7l-0.8 -2l-0.3 -2l-1.4 -2.3l-1 -2.8l-2.3 -0.3l-2 -1.4l-0.3 -2.3l-2.7 -1.3l-2.8 -2.8l-0.7 -1.8l-1.4 -1.6l-0.2 -2l-1.4 -2.2l-3.4 -2l-2.6 -2.9l-2.4 -2.1l-3.1 -1.5l-1.8 -2.2l-1.8 -3.2l-2 -3l-0.3 -3l0.8 -1.8l-0.5 -2.7zM1659.5 1142.0l2 -2.1l1.5 1.9l2 0.6l1.7 0.2l2.2 1l3.8 -0.8l1.8 1.4l1.9 0.6l2.1 0.5l1.9 -0.9l2.2 -0l2.5 1.7l1.8 1.1l1.8 1.2l3.2 0.4l1.9 1l2.5 1.1l1.1 1.5l0.9 3.6l0.2 3.5l-1 2.7l-2 1.7l-1.7 3.3l-3.1 0.9l-3.1 -0.4l-3.3 -2l-2.9 -1.5l-1.6 -0.9l-1.3 -2.1l-3.3 -1.4l-2.5 0.4l-1.7 -1.9l-1.4 -1.2l-0.7 -2.3l-2.8 -2.1l-1.2 -1.4l-2.2 -1.5l-3.4 -1.8l-1.5 -3.2l-0.4 -1.8l-1.4 -1.9zM1707.7 1175.4l1.3 -1.9l3.2 -0.5l3 1.7l1.9 -0.2l2.5 -0.2l1.7 2l3.3 1.7l2.4 -0l2.6 1.3l-0.7 3.3l-1.8 1.6l-2.4 2.9l-2.6 0.9l-2.1 1.2l-2 -0.7l-3.3 1.4l-2.8 -1.2l-3.5 -0.7l-0.3 -3.2l-2.1 -1.8l0.6 -3.2l-0.6 -3zM1692.6 1187.1l2.4 -2l1.2 3.8l2.6 1.9l1.5 1.2l0.9 2.5l-2 1.9l-2.9 0.6l-1.6 -1.5l-2.2 -2.2l-1.6 -2.8l-0.8 -3.4zM1785.5 969.8l1.1 -1.8l2.6 -1.2l2.5 -1.3l3.2 1.3l1.8 -1.1l2.4 -1.4l2 0l2.6 -0.4l3 -0l2.4 0l2.6 0.9l1.5 1.4l2.2 3l3.6 0.1l2.2 0.9l1.7 0.7l3.3 0.9l1.5 2.5l1.1 2.3l1.1 2.4l0.3 2.8l-1.3 2.4l-0.1 3.7l-0.6 2.7l-2.4 0.8l-0.6 2.8l-0.7 3.2l-0.2 2.2l2.2 2l0 2.5l1.5 2.1l1.1 3l1.5 3.2l0.4 2.1l-0.8 2l-2.3 0.9l-0.7 1.9l-0.8 2.6l0.1 2.1l-1 1.8l-1.4 1.5l-0.8 2l-1.8 2.1l-2.5 2.5l0.2 2l-0.2 3l-0.8 2.3l-2.6 2.2l-1 2.4l-1.8 1.8l-3.1 -0.4l-3.1 -2.1l-3.3 -2l-2.6 -1l-1.6 -2l-1.8 -0.8l-2.1 -1.3l-3.5 -1.6l-0.8 -2.1l-1 -1.6l-3.2 -1.3l1 -3.1l2.4 -0.4l0.3 -3.9l2.2 -2.1l2.4 -1.2l1.9 -0.4l2.2 -1.3l2.2 -1.2l1.9 -1.9l2.4 -0.8l1 -2.3l-0 -1.8l0.1 -2.6l1.6 -2.4l0.8 -1.9l-1 -2.5l-1.3 -2.7l-1.5 -3.5l-2.1 -1.1l-1.4 -2.7l-2.7 -2.4l-3.9 -0.7l-1.9 -2.6l-1.6 -1.7l-3.7 -1.2l-0.9 -2.2l-2.9 -1.5l0.7 -3.2l-0.6 -2.4l-1.6 -1.6l-1 -1.5zM1837.7 974.8l3.7 0.7l2.1 0.5l1.5 2.4l1.8 1.1l2 1l-1.2 3.2l-3.3 -1.8l-2.3 -1l-1.9 -0.4l-2.7 -2.6l-0.6 -2.5l-2.9 -1.1zM1740.8 966.5l2.4 -2.6l3.3 0.6l2.9 2.3l0.3 3.2l-0.2 2.3l-0.6 2l-2 2.6l-2.4 1.1l-2 -1.8l-3 -0.7l-0.8 -2.5l-0.1 -2.8l-1.6 -3.4zM1735.0 974.8l0.3 1.8l-0.3 2.7l-3 0.5l-0.2 -1.8l0.2 -2.5zM1424.2 858.8l2.8 -2.7l3.3 -2.1l3.6 -0.7l2.6 1.8l2.9 2.4l-0.7 3.1l-0.7 2.4l-3.3 1.6l-3.6 1.1l-3.6 -0.6l-3.3 0.1l-0.8 -1.8l-1.9 -1.8zM1452.1 855.7l2.5 1.8l2.6 2.6l2.6 1l0.3 3.3l1.9 0.5l1.3 2.1l2.4 0.4l2.7 1.1l3.3 -1.2l2.7 -0.4l2.3 0.2l1.9 2.3l2.2 0.5l-0.8 3.2l-1.6 1.4l-1.7 0.9l-2.2 0.5l-2.7 -0.5l-1.3 1.3l-2.1 1.5l-3 -2.6l-3 -0.5l-2.3 0.3l-1.1 -1.8l-0.9 -1.8l-2.1 -1.9l-0.4 -2.1l-0.4 -2.4l-1 -1.9l-2.4 -1.9l-0.6 -2.4l0.3 -1.7l-0.6 -2.4l-0.5 -1.8zM1486.5 860.3l0.7 -2.2l2.7 -1.8l2 -1.6l1 -1.8l0.5 -2.8l2.7 -1.5l1.3 -2.2l2.8 -1.8l1.1 -2.9l2.3 -1.4l0.7 -2.2l2 2l0.7 2.2l0.8 2.9l-2 1.9l-1.1 2.5l-1.8 1l-1.2 1.8l-0.9 2.3l-2.5 1.7l-0.9 2.4l-2.4 3.1l-1.6 2l-1.5 1.8l-1.8 1.4l-2.4 0l-0.4 -2l-1.8 -2.1zM1505.6 848.9l2.8 -1.1l2 3.4l-1.2 3.5l-1 3.3l-2.5 2.2l0.4 -2.8l-2.3 -1.8l0.2 -2.8l0.3 -2.2zM1516.6 826.5l1.9 -1.8l2.3 -1.7l2.3 2.4l1.9 1.7l-1.1 2.7l-0.5 2l0.2 3.6l-3.2 -0.1l-2.3 1.5l-1.7 -1.5l-0.7 -3.1l1 -3.7zM1533.4 817.0l1.4 -1.3l1.2 -3.8l1.3 2.4l0.7 1.8l-1.8 2l-1 2.2l-0.3 2.2l-0.3 1.8l-0 -3.1l-2.7 -2.4zM1558.9 823.0l0.6 2.3l0 3.2l-2.8 1.4l0 -2.9l-0.5 -2.7zM1528.6 872.6l-0.6 3.9l0.5 2.4l0.6 2l-3.3 0.9l0.5 -2.6l-0.6 -1.8l-0.7 -3.4zM1664.6 706.3l1.2 -1.6l2.6 0l2 -0.7l2.2 -1.2l3.3 -0.6l1.9 -0.2l2.7 -0.7l2.2 1.1l1.9 1.1l3.1 1.1l2.1 -0.1l2.2 0.2l1.4 1.4l0.3 2.8l2.1 3.3l1.9 1.6l1.8 0.9l2.2 -0.9l1.7 -1.8l1.5 -2.7l0.8 -3.3l2.8 -2.5l2.2 -2.5l3.1 -1.2l1.9 -1.3l1.2 -1.5l2.5 -0.2l1.7 2.2l-0.1 2.6l-1.7 2l0.1 2.4l-3 2.4l0.5 2.6l-1.2 2.4l-2.4 0.9l-1.6 1.5l-1.3 3l-1 2.1l-1.1 3.7l-0.5 2.1l-0.8 2.9l-0.2 2.3l-0.4 2l1.8 3.1l-0.6 2.8l-1.9 3.4l-2.4 -0.2l-2.6 -1l-1.9 -3l-1.8 -3.2l-3.7 -1.2l-1.3 -2.6l-0.9 -2.8l-0.3 -3.4l-1.6 -1.9l-0.9 -1.8l-1.8 1.5l-1.4 2.2l0.4 2.5l1 1.8l1.9 1.7l-0.1 2.7l-1.2 3.1l0 3.1l-3.4 0.5l-2.8 0.3l-1.8 -1.6l-3.2 -0.4l-1 -2.8l0.3 -3.4l-2.5 -0.8l-3 -0.5l-2.6 0.5l-3.6 1.5l2 -3.5l-0.5 -2.6l-0.3 -2.1l0.3 -2.1l-0.2 -2.7l-0.8 -1.7l-0.5 -2.2l-2.6 -3.1l0.8 -3.1l-0.5 -2.8l-0.2 -2.1zM1653.3 792.3l1 -2l1.3 -1.8l0.4 -3l2.1 1.4l2.9 1.5l1.9 1.6l1.8 0.4l-2.4 2.3l-0.9 1.6l-0.4 2.3l-1.9 1.2l-2.1 1.3l-1 3.8l-3.7 1.2l0.4 -2.4l1.2 -2.8l-0 -2.6l-1.6 -2.1zM1781.4 847.3l0.2 -3.3l0.6 -2.3l0.5 -1.6l3.2 -2.4l2.5 -1.6l1.8 -0.9l2.1 -0.5l2.5 1.7l2.3 0.5l1.8 -0.5l2.4 -2.2l2.5 -0.1l2.8 -0.7l2.2 -0.7l2.3 -0.6l1.7 -2l2.9 -0.1l3.1 0.2l3.2 -1.7l2.9 -0.6l1.3 -2.7l0.2 -3.1l0.4 -2l0.7 -2.3l3.8 1l1.7 -1.7l3.1 -0.6l2.1 -0.6l2 1.3l2.7 -0.8l1.9 0.1l3.1 -0.6l2.7 0.7l1.7 -1.3l1.6 1.8l1 1.4l1.1 3l1.2 2.2l2.7 0.8l3.6 -0.5l0.2 3.9l1 3.5l-0.2 2.3l-0.9 1.7l-2.8 0.4l-1 1.8l0.8 1.8l1.7 1.9l3.7 1.3l1.5 2.7l1.6 2l2.5 0.5l1.8 1l1.1 3.8l2.1 1.7l1.8 2l2.3 0.9l1.3 2.8l0.1 3.7l2.2 1.3l1.5 1.4l0 3.1l1.3 1.7l2.1 2.6l0.4 2.8l1.8 1l1.9 1l0.4 3.1l-0.4 3.1l-3.6 -1.6l-2 -0l-1.9 1.6l-1.9 1.5l-1 1.4l0.1 2.1l-0.9 2.5l-3.4 1.5l-2.7 0.2l-2.6 -0.5l-1.1 2l-3 0.2l-1.9 -1.1l-2.7 0.2l-2.1 -0.2l-1.9 -1.3l-2 -0.1l-2.7 -0.9l-1.8 -1.7l-1.3 -1.6l-2.1 0.3l-2.2 -0.7l-2.2 -0.5l-2 -0.9l-2.1 -0.4l-2.4 -2l-2 0.4l-2.3 1.1l-2.3 0.3l-2.1 -0.5l-2.5 -1.6l-1.8 -1.3l-1.9 -0.8l-1.9 -2.2l-0.2 -2.2l-1.8 -1.1l-2.3 -0.8l-2.5 -2.4l-2.3 -1.3l-2.4 0.5l-2.8 -1.7l-3.6 -0.6l-1.5 -1.3l-2.3 -0.6l-2.4 -1l-1.3 -1.5l-1.7 0.2l-2.1 -1.4l-1.8 -1.7l-1.6 -0.8l-2.4 -0.1l-1.6 -2.4l-2.7 -2.7l-1.9 -1.4l-1.7 -0.9l-1.3 -3.1l0.1 -3.1zM1896.3 1119.6l2.7 -2.5l3.2 -2.4l2.6 -0.8l2.2 -0.6l1.9 -1.1l2.1 -1.8l3 -0.3l2.2 -0.5l2.7 -0.4l3.2 1.2l3.4 0.5l3.5 -0.5l2.3 -0.7l2.7 -0.3l2.6 2.1l2.4 0.2l2.2 0.5l1.9 0.7l2.2 0.3l2.8 1l3.1 0.5l2.1 -1.6l2.8 -2.2l2.7 2.5l2.3 1.3l3 1l3.2 -2.3l-0.9 2.8l-1.6 3.4l1.5 2.7l1.3 1.8l1 1.7l-1.9 0.3l-2.2 -0.4l-2.1 2.6l-3.7 -0.5l-2.6 -0.7l-1.9 3.5l-3 0.2l-3.4 1.9l-2.8 1.8l0.6 2.4l-1.8 1.6l-1.2 1.4l-2.6 0.8l-3 2.3l-3.2 -1l-3 -0.8l-3.2 0.3l0.4 -3.7l-1.9 -1.5l-1 -1.8l-3.6 -1.5l-2.6 -1l-3.7 -0.5l-3.8 -0.7l-3.5 1.1l-1.8 0.7l-2.1 0.7l-2.3 -0.7l-1.9 1.1l-3.3 0.8l-0.6 -3l-1.4 -3.2l-0.5 -3l0 -3.2zM1806.3 1164.6l2.3 -1.5l1 -3.7l0.4 -2.9l1 -2.8l1.6 -2.1l1.9 -0.9l1.7 -3.4l2.9 0.1l1.6 -1.7l3.9 -0.2l2.2 0.3l2.6 -1.3l1.5 -1.4l2.6 -0.7l3.6 -0.5l2.3 1.3l2.4 0.4l2.2 -2.2l2.8 -1.9l1.6 -2l2.6 -0.6l3.3 -1.1l2.3 -0.6l2.5 -1.3l3.9 -0.1l-0.9 3.3l-0.4 2.4l-1.9 2.6l-1.2 1.8l-1.8 1.8l-1.1 2.3l-1.1 1.5l-2 0.5l-2 0.7l-3.3 2.1l-1.8 1.4l-2.4 1.5l-3.6 1.4l-2.3 1.2l-2.8 1.1l-2.6 0.5l-1.9 2.5l-2.3 -0.3l-1.9 -0.2l-2.5 1.2l-1.5 2.6l-2.4 0.2l-2.3 0.9l-1.3 1.6l-1.8 1.1l-1.8 -0.5l-2.5 0.3l-3.8 -1.2zM1872.1 1151.2l3.3 -0.5l1.9 1.6l1.8 2.1l2.5 -0.9l1.1 -2.6l0.2 -3.9l-1 -2.4l2 -1.8l1.4 -3.3l2 1.3l1.8 1.2l1 2.6l0.2 3.6l3.7 1.2l-1.6 3.5l-3.3 1.5l-1.2 3.5l-2.6 1.5l-1.2 3.7l-1.3 -2l-2.4 -1.7l-2.4 -1.2l-1.4 -1.3l-3.7 0.5l-0.9 -2.3l-1.6 -1.9zM1952.3 1169.6l2.6 1l2.6 1.9l2.4 0.5l-0.9 2l-1.6 1.8l-2.1 0.2l-2.9 0.3l-1.9 -2.4l-0.6 -3.1zM1893.2 1192.7l2.1 -1l2.4 1.2l2.5 2.5l1.3 3.7l-2.7 0.8l-2.3 0.5l0.1 2.6l-1.3 2.3l0.7 2.4l0.5 2.6l-1.7 0.9l-2.8 0.4l-2 -2.1l-0.4 -2.9l0.3 -3.7l0.4 -3.8l0.9 -3.5l-1.4 -2.7zM1916.7 1190.3l1.8 -1l0.4 -3.8l1 2.3l2.7 1.4l0.5 2.7l2 2.3l-3.7 1.2l-2.4 -1.1l-1.4 -1.4l-2.4 -1.2zM1920.9 1201.3l3 1.6l3 0.8l3.2 0.4l-0.6 2.3l-0.7 2.7l-3.4 0.4l-2.8 -1.7l-2.8 -1.8l-1.4 -1.9l-0.8 -3.7zM1928.7 1222.0l2.6 -0.5l2.4 1.5l2.6 1l2.4 2l2.5 2.9l0.2 3.4l2.9 0.6l0.7 2.3l-0.3 3.6l-1 2.6l-2.1 1.2l-2.8 0l-2.2 -1.8l-1.6 -3.2l-3.1 -1.6l-0.6 -3.3l-1.9 -2.6l-1.8 -1.2l-0.4 -2.6l-0.9 -2.3zM1948.2 1247.1l3 1.7l2.1 2.5l2.4 -0.6l1.7 0.6l3 2.5l2 2.5l3.3 0.5l2.9 2l1.4 3.1l0.6 3.1l-0.2 3.9l-1.8 2.3l-3.2 0.2l-3 1.8l-2.5 1.4l-2.5 0.3l-2 -1.7l-1.7 -2l-1.4 -2.1l-1.1 -2.9l-2.5 -1.4l-2.5 -2.3l-1.2 -3.7l2 -1.5l2.9 -1l-0.9 -2.8l-0.3 -2.2l-1.3 -2.6l-2.4 -1.1zM1981.1 1267.9l3.6 -0.4l2.7 1.7l1 3.2l-1.9 2l-1.8 1.3l-3 -0.8l-1.9 -1.2l-0.6 -2.3l-0.7 -1.5zM1954.6 1305.2l2.8 -0.5l2.2 1.3l2.8 0l2.3 -1.7l1.4 -3.3l0.4 -2.1l1.3 -1.7l1.4 -1.9l1.9 -0.5l1.6 -2.1l0.7 -2.3l1.4 -1.3l2.5 -0.5l2.2 -0.4l2.4 -1.3l1.8 -1.3l1 -2l2.1 -0.6l2.1 -1.5l2.3 -0.9l2.2 -0.7l2.9 -2.2l2.8 -0.5l1.8 -1.1l2 -1.4l2.9 0.2l2.7 2.5l2.3 1.2l1.8 2l3.7 0.5l-0.9 2.5l0.4 2.5l-2.6 2.2l-3.6 0.3l-2.7 -0l-1.6 0.7l-1.9 3l-3.6 1l-2 0.3l-1.9 1.2l-1.8 1.2l-2.1 0.5l-1.9 0.7l-1.7 1.3l-2.2 0.6l-1.3 1.5l-2.7 2.9l-2.7 1.2l-3.5 1.3l-3.5 1.7l-2.7 -0.5l-2.5 0.1l-2.5 1.1l-2.2 2.1l-1.5 2.9l-1.6 1.7l0.5 2.2l0.2 2.4l-0.3 2.4l-3.8 -1.2l-1.9 -3l-2 -2.2l0.2 -2.3l0.3 -2.4l-0.7 -2l0.4 -3zM1987.3 1332.9l2.4 -1.6l3.3 2.1l2.9 -0.1l0.8 2.5l0.4 3.7l-1.5 2.7l-2.2 1l-3 -1.1l-3.2 0.6l-0.9 -2.6l-2.3 -1.8l-0.5 -2.8l1.2 -2.2zM1982.5 1320.8l2.2 -0.4l0.8 3.5l-2.5 1.1l-2 0.8l-1.2 -3.7zM2012.4 1357.8l2.1 -0.9l2 -0.8l3 -0.4l2.4 2l1.3 2.9l1.8 3l2 3.2l3.6 -0.2l2.6 1.5l1.2 3.7l-2.5 2.2l-2.5 1.5l-2.2 -0.5l-2.7 -0.7l-1.4 -2.1l-2.4 -1.6l-3.1 -0.7l-1.8 -1.8l-2.8 -1.9l-2.2 -0.6l-0.7 -3.8l-0.5 -3.7zM2084.2 1329.4l1.1 -1.9l1.3 -1.7l2.4 -2.7l2.6 -2.2l0.9 -2.3l2.8 -0.2l-2.1 2.2l0.1 2.2l0.7 1.8l1.8 2.3l2 1.4l1.3 3.2l-1.5 1.6l0.2 2.7l0.5 2l-0.1 2.3l-1.7 3.1l-1.6 -1.9l-2.1 -0.6l-3 -1.3l-2 -2.4l-3.7 -1.2l-1.3 -3.1l-1.2 -1.9zM2048.9 1402.2l1.7 -1.3l2.4 -1l2.3 -0l1.9 0.3l3.3 -1.1l1.7 2.7l0.8 2.3l-2.3 0.4l-1.6 0.3l-3.6 1l-1.9 1.3l-2.1 0.8l-2.5 -1.1l-2.2 0.5l-1.2 -2.7l0 -3zM2075.4 1391.7l-0.3 2.7l1.5 2.2l-3.7 1.3l-1.4 -2.1l0.2 -2.9zM1855.5 1339.5l2.5 0l1.1 2.8l3.9 0.9l2.7 2.1l1 2.9l1.5 -3.5l1.8 -2l0.4 -2l-1.2 -3.2l0.6 -2.2l-0.6 -2l0.9 -1.8l1.6 -1.4l1.9 2.4l3 0.8l2.7 2l2.3 3l1.7 2.1l0.8 2.8l-2.8 -0.2l-3.4 0.2l-1.8 0.6l-1.9 1.9l-2.3 1.7l-1.5 2l-2.6 2.3l0.2 4l-2.3 -0.7l-2.7 1.1l-3.7 -0.9l-2.5 -2l-1.4 -2.8l-1.1 -3.4l-0.3 -2.6l-1 -3.7zM1775.6 1300.7l1.7 -0.9l3.9 -1l3.5 -0.3l1.9 -2.9l3.1 -2.1l2.9 -1.9l3.3 -0.5l2.2 -1.5l1.7 -1.9l1.6 -1.8l2 -1.1l1.7 -2.2l1.8 -0.8l1.4 -3.2l2.7 -1.8l2.3 -0.2l2.8 2.8l3.4 1.7l3.5 -0l2 2.5l-2.7 1.3l-2.8 0.7l-3 -0l-3.2 -0.8l-1.7 2l-3.3 1.8l-2.4 2.9l-2.5 2l-1.4 1.7l-1.5 1.9l-3.4 0.2l-2.6 1.1l-0.7 2.2l-2.9 1.6l-3.3 0.5l-1.7 1.6l-1.2 1.7l-2.6 0.1l-2.3 2.8l-3 -0.5l-2 -1.2l-0.7 -2.5l-0.6 -2.5zM1776.0 1382.5l1.5 -2.6l1 -1.9l1.6 1.8l3.4 0.7l3.4 1.5l1.5 2.2l2.2 1.8l1.6 1.5l-2.7 -0.6l-2.3 1.5l-1.7 -0.3l-2.4 0.2l-3.3 0.9l-2.8 0.3l-2.2 -2l-2 -3.3zM1781.0 1243.0l2.5 -2.1l2.1 2.1l1.1 2.1l-0.6 2l-1.4 1.7l-2 -1.1l-2.9 -0.1l-1.8 -2.2l0.5 -2.8zM1878.9 1260.1l2.7 -0.1l2 1.3l2.5 1.2l-2.6 1.6l-1.9 0.9l-3.3 -0.3l-2.2 -0.5l-0.7 -3zM1855.6 1265.4l2.4 -0.4l0.8 3.7l-2.4 0.9l-2.6 0.3l-0.8 -3.7zM2359.5 1401.2l2.5 -1.7l1.6 2.2l1.4 1.5l-0.1 3.1l-1.7 1.9l-1.9 0.9l-2.3 -0.2l-1 -2.9l0.3 -2.8zM2350.1 1401.5l0 3l-3.5 0l0 -2.5zM2370.7 1407.5l0.5 3.2l-2.5 0.5l-0.5 -3zM1915.3 1382.6l2 -0.5l1.1 1.8l1.4 1.9l-0.7 1.7l-1.8 1.6l-3 -1.5l0.1 -1.8l-0.9 -2.4zM2152.5 1357.9l2 1.9l0.8 2.8l-2 3.4l0.5 2.6l1.5 1.1l-2.6 1.6l-0.7 3.4l-2 2.4l-0.4 3.8l-0.3 3.2l-0.6 2l-1.6 2.2l0.6 2.3l-1.4 2.4l-1.7 2.8l-1.4 3.7l-1.1 3.7l-0.9 3.3l-0.5 2l-2.3 0.9l-2.2 0.8l-1.3 1.4l-0.4 2.2l-1.1 1.9l-0.5 3.6l-2 2.6l1.1 2.4l2.7 1.3l-1.1 3.5l-0.2 2.7l-2.7 -0.6l-2.3 -0.6l-3.5 -0.5l-2.7 -0.8l-2.2 2l-1.8 0.8l-2.2 -0.3l-0.1 2.7l-0.5 2.1l-1.1 1.8l-2 0.9l-1.7 1.2l-1.3 2.4l-0.7 3.8l-0.7 3.9l-2.7 1.8l-1.6 1.8l-2.3 3l-2.7 1.9l-2.9 1.4l-2 2.4l-2.3 1.9l-2.7 1.8l-3.7 1.2l-1.8 -3.1l-2 -1.8l0.1 -3.9l-2.5 -2.4l0.5 -1.7l0.1 -2.3l0.6 -3.4l1.3 -1.9l-0.2 -2.5l1.4 -3.1l0 -1.8l0.9 -2.5l0.3 -3.1l-1.1 -3.6l-0.1 -3.9l-3.6 -0.4l-2.6 -2.1l-1.9 -2.4l-1.5 -1.4l-0.4 -2.4l2.4 -0.8l1.4 -2.9l2.3 1.2l2.3 -1.6l2.8 -2.1l1.9 -2.4l0.5 -2.2l2.6 -2.8l0.3 -2.1l1.3 -2.6l-0.6 -2.3l-1 -1.7l2.2 -1.9l2.8 -1.9l3.4 -1.8l1.1 -2.5l0.4 -1.9l2.8 -1.4l2.2 -2.3l2.2 -0.5l1.8 -0.2l2.4 -2l1.1 -2.3l3.7 -1.6l1.6 -1.7l2.1 -1.6l1.8 -0.9l2.1 -2.2l1.5 -1.1l2.1 -0.8l3.3 -1.3l1.9 -1.9l2.2 0.7l3.8 -0.4l1.8 -0.3l1.9 -1.3l3.3 -0.9l2.9 -0.8l2 -2.4l1.7 -2.6zM2005.3 1465.9l0.9 1.9l-0.8 2.6l1.7 1.6l-1.6 3.3l0.2 3.7l-2.7 2.5l2 1.6l-0.7 2.7l-0.1 3.1l-1.5 3.6l0.3 3.9l0.6 2.5l-0.1 2l-1.8 3l-1.1 2.4l-0.1 2.5l-0.8 2.7l1.1 1.6l1.2 2.4l2.2 0.8l-0.2 3.5l-0.4 1.8l-0.6 2.1l-1.5 3.4l-0.2 2l0.4 2.1l1.1 3.1l1.4 1.8l2.1 2.7l2.4 2.3l-1 2.3l-1 2.7l-2.9 0.5l-2.1 2l-2.7 2.5l-1 2.4l-2.4 2.1l-0.1 2.9l-2.5 2.5l-0.6 -3.5l-3.1 -1.5l-2.7 -0.9l-2.3 -1.6l0.2 -2.6l1.1 -3.6l1.4 -2.3l2.3 -1.4l1.2 -2.9l-0.8 -2.6l0.9 -2l-0.1 -3.1l-2.4 -3.1l-1.6 -1.9l-2.2 -1.8l-2.3 -1.2l-2.1 -0.8l2.9 -2.5l0.3 -2.9l1.3 -2.2l2.4 -2.8l1 -2.1l1.5 -2.9l1 -3.3l0.4 -1.8l-0.1 -2.3l1.8 -3.5l-0.1 -2.3l0.7 -1.7l1.1 -3.5l0.9 -2.5l-0.7 -2.7l2.3 -1.1l1.4 -2.6l-0.6 -2.2l0.7 -1.9l1.2 -3.4l0.6 -2.7l0.6 -2.2l2.6 -1.5l-0.1 -2.3zM1948.5 1566.3l1.4 -2.4l3.4 -1.7l1.8 -3.2l1.9 -0l2.5 -1l2.4 -0.9l1.5 -1.1l3.6 0l3.2 -0.3l2.1 -0.8l1.6 -0.9l-0.4 3l-1.6 2.8l-0.5 1.7l-1.2 1.9l-3.2 1.3l-2.7 1.9l-1.9 1.3l-1.7 0.5l-3 1.6l-2.1 1.4l-1.1 2l-2.8 -1l-2.1 -0.2l-0.2 -2l-1.1 -1.8zM1447.5 1524.5l1.9 2.2l0.5 2.2l0.1 3l0.7 3.1l0 1.9l0 2.2l2.1 3.2l-0.3 2.2l-0.6 2.1l2.7 2.6l2.1 0.7l2.7 -0.3l1.6 0.5l2.4 0.4l3.4 -1.4l-0 -2.7l0.3 -3l-0.5 -2.3l-0.3 -2l1.2 -2l-1 -2l-1 -3.5l0.1 -2.4l0.9 -2l-0.7 -3.1l1.4 -2.4l-0.4 -2.4l2.1 -1.8l0.1 -1.8l1.6 -1.9l1.5 1.9l2.7 1.1l1.3 3.3l1.2 2.3l-0.2 1.8l-0.8 2.5l-0.1 2.8l0.9 2.7l-1.8 3l0.4 2.2l1.1 1.7l3.3 1.4l1.6 3.1l1.6 1.2l1.8 1.2l1.6 -1l2.5 0.3l2.7 -0.1l1.5 1.3l2 -1l2.5 1.1l2.5 0.3l1.5 0.7l2.8 -0.2l1.9 0.4l1.8 -1.6l2 -0.1l2.5 0.7l2.4 -0.2l1.2 -3.7l2.5 -2.5l1.1 -2.7l1.4 -3.5l2.7 -1.3l2.3 -1.7l3.4 -1.1l2.1 -0.1l1.9 1.7l2.5 1.3l2.5 2.4l1 3.2l1.5 3l-0.9 2.8l-1.6 3.4l-2.3 1.9l-2.7 1.4l-2.1 0.2l-1.9 0l-3.4 -1l-2.3 -2.2l-2.7 1l1.3 1.3l1.2 2.4l2 0.1l2.9 0.3l2.5 0.9l2.5 1.9l3.7 -0.6l1.6 2l2.2 0.4l2.2 -1.2l2.7 -1.3l1.1 2.6l2.7 1.1l0.7 1.8l0.6 2.3l-0.1 3.2l0 2.6l0.1 3l1.1 3.3l3.6 1.4l2.7 0.3l2.1 0.7l3 -0.5l2.2 -0.8l2.6 -0.4l2.3 0.2l2.3 -1.3l2.4 -0.5l2.9 -0.4l2.5 0.1l2.1 -0.6l2.2 -0.3l3.2 0.3l2.4 -0.4l1.9 -0.1l3.1 -1.5l3.1 -1l2.5 -0.3l3.1 -2.4l3.4 -2.1l2.8 -1.6l2.1 0.3l2.2 0.3l3.2 -1.1l1.1 2.3l3.1 -0.3l2.9 -1.3l2.8 0.3l2.3 -0.3l1.9 -1l3.4 1.3l2.4 0.7l1.6 0.8l2.5 -0.3l3.3 -1.7l3.4 1.3l2.3 -0.3l1.8 0.2l2.1 -2.2l2.1 -0.4l2 0.1l3.2 2l3 -0.2l1.7 3.4l3.3 1l2.4 1.5l-0.1 2.5l-1.1 3.5l3 1.1l2 0.9l3.6 -0.2l3.2 0.6l1.9 -1.2l2.1 0.1l2.8 0.1l2.4 -0.3l2.6 -0.6l2.3 0.6l2 -0.2l2.9 -0.8l2.3 0.4l2.9 0.7l3.3 -0.5l2.5 -0.7l3.6 1.4l3 0.6l0.6 2.3l0.8 1.7l3.6 1.5l2.9 1.6l2.1 0.8l2.4 0.7l1.7 -0.9l3.3 -0.3l3.3 -0.9l2.4 -0.9l1.8 -1.4l2.9 -2.1l2.4 0.6l2.1 -1l3.3 -0.1l1.8 -1.4l2.1 0l2.8 -1l2.5 0.6l1.9 0.7l3.1 -1.5l2.4 -0.5l3 1.6l2.3 -0.8l2.7 -0.7l2 0.6l-0.6 2.9l-0.7 3.4l-2.3 1.9l-1.4 3l1 2.2l0.9 1.9l0.6 3.4l0.2 2.6l-1 2l-1.7 2.8l0.4 1.8l-0.5 2.4l1.3 3.3l1.6 2.9l2.2 2l2.3 0.4l2.6 2.1l3.7 0.7l2.5 -1.9l2.9 -2.3l0.9 -2.7l2.6 0.6l2.3 -1.8l2.3 -0.8l1.4 -0.8l1.6 -1.3l2.2 -2.1l1.7 -1.8l2 -0.3l2.2 -0.7l1.5 -0.9l2.3 1l2.1 -1.4l1.6 -1.2l1.5 -2.1l3.5 0l1.6 -1l2.3 -0.3l3.3 1.3l1.4 2.4l2.8 0l4 -0.2l2 0.1l1.5 -2.3l3.3 -1.8l0.4 -3.2l3 -1.9l2 -3.1l2.6 -2.3l2.3 -2.6l2.5 -2.3l2.5 -1.5l0.8 3.3l-0.9 2.2l-1.2 2l-0.9 1.6l-0.6 2.5l-0.1 1.9l0.4 2.7l2.1 0.1l1.2 2.3l0.4 3.8l0.2 3l-1.4 3.2l-0.5 1.9l-0.8 2.6l-2.4 2.9l-2 3.1l-0.9 2.3l0.4 2.1l-0.8 3.3l-1.7 2.9l-2.4 2.6l-2.6 2.4l-3.9 0.7l-1.6 1.6l-1.9 1.4l-3.2 0.9l-2.3 1.4l-2 -0.3l-2.8 -2.7l-2.2 -1.8l-3.6 -0.3l-2 1.3l-1.8 0.3l-3 -1.3l-2.5 -0.4l-2 0.4l-2.6 1.1l-1.7 -1.5l-2.8 -0.1l-2.8 -0.7l-2.5 2.8l-2.9 -0.5l-2 -0.8l-2.5 -0.3l-3 1.8l-2.4 1.1l-2.2 0.3l-2.4 -0.7l-2.7 0.7l-2.7 -0.4l-2.1 1.7l-2.4 0l-3 -0.6l-2.5 -0.4l-2.7 1l-1.7 1l-2.3 1.7l-3.6 -0.4l-1.9 0.5l-2.2 -1.1l-2.7 -0.9l-3.1 1l-1.8 -0.7l-2.3 1.4l-2.4 0.2l-1.6 1.3l-3.4 -0.3l-2.6 -0.2l-3.3 0.2l-2.4 0.3l-1.6 0.8l-2.6 -0.6l-3.4 1.2l-2.5 -1.9l-1.5 1.7l-2.5 -0.2l-2.9 -1.1l-2.9 0.7l-1.7 0.8l-2.5 0.1l-2.1 1.8l-2.8 1.9l-2.9 0.1l-2.9 1.9l-2.5 0.2l-1.7 0.3l-2 -0.1l-2.7 -0.7l-2.5 0.3l-2.7 2.2l-2.4 0.9l-2 0.5l-3.1 0.7l-2.5 -1.3l-2.4 -1.5l-3 1.7l-2.4 1.1l-2.1 -0.6l-1.9 -0.2l-2.6 -0.3l-3.1 0.3l-2.3 0.7l-3.2 0.5l-2.4 -1.3l-2.3 0.4l-2.1 0.4l-2.1 -0.9l-2.3 -0.2l-2.7 0.2l-2.8 1.4l-2.1 0.5l-2.4 -0l-2.1 0.5l-2.1 -0.3l0.4 -2.6l0.6 -2.4l0.2 -3.7l0.4 -2.2l1.5 -2.9l-0.1 -2.3l-0.5 -2.5l1.1 -2.8l-0.8 -2.6l-1.5 -2.2l-1.3 -2.3l-3 -1.8l-3.2 -2l-2 -0.4l-1.9 -1.7l-3 0l-3.1 0.9l-1.9 -1.7l-2.9 -0.5l-2.3 1.4l-2.8 -0.4l-2.9 0.4l-1.5 -2.1l-3 -2.1l-1.8 -2.4l-1.8 -0.9l-1.9 -1.6l-2 0l-2.7 -1.8l-2.6 -0.5l-2.2 -0.2l-2.2 -0.8l-1.3 -1.7l-3.9 0l-2.4 0.9l-3.2 -1l-1.8 0.7l-2.5 -1.1l-2.8 -0.7l-2.3 -0l-2.7 0.1l-2.2 -0.1l-3.1 -0l-1.9 -2.3l-2.4 1.3l-2.5 -0.3l-2.2 -0.5l-2.5 0l-2.7 0.9l-2.6 -0.9l-2.8 1.9l-2.7 -0.9l-1.9 -0.2l-2.5 -0.3l-3.1 -1.1l-2.2 -0.4l-2.1 -1l-2.3 0.5l-1.8 -1.9l-3.4 -1.1l-3.6 -1.4l-3.9 0.2l-3.8 -0.8l-3.6 -0.9l-3.1 -0.9l-2.4 -0.2l-2 0.3l-2.7 -0l-1.8 0.1l-2.9 1.2l-3.8 -1l-3.7 0.5l-2 1.5l-2.2 -1.7l-3.2 1.9l-2.8 -2.1l-2.7 0.7l-2 0.2l-3.7 0.2l-3.7 -0.7l-2.7 -1.7l-2.3 -2.8l-1.4 -2.2l-2.3 -2.8l-0.2 -2.4l0.1 -2.1l1.8 -2.9l1.4 -3l-0.3 -2l0.9 -2.5l-0.6 -2.5l-0.4 -1.8l0.5 -3.1l1 -1.6l0.3 -2.5l1.7 -3.4l-0 -2.9l-1 -1.9l2.3 -2.1l-0.1 -3l-2 -2.3l1.1 -2.9l0.5 -2.2l1.7 -2.6l0.9 -1.8l0.9 -2.5l-0.8 -2.8l-0.5 -2.8l0.4 -2.5l0.3 -3.7zM1520.1 1669.5l2.6 -1.7l2.3 1.7l3.9 0.8l0 2.3l0.5 3.4l-0 2.7l1.5 2l-2.9 -0.1l-2.8 -2.3l-1.3 -3l-3.7 -0.8l-1.7 -2.6l-2 -2.3zM1512.0 1655.4l0.8 3l-3.2 0.5l-1 -3zM1695.3 1556.0l2.6 -1.5l2.3 1.2l2.2 1.3l-0.7 2l-0.1 3l-2.9 -0.9l-3.3 0.4l-1.1 -1.7l-1.4 -2zM1773.1 1663.2l3 -0.3l3.3 1.7l-1.7 1.9l-2.3 0.6l-2.2 -0.1l-2 -0.7l-1.3 -2.4zM1843.2 1649.7l0.8 3.7l-1.7 2l-2.3 -0.7l-0.6 -3.5l0.1 -2.8zM1400.4 1474.8l1.8 1l0.8 3.3l3 1.6l1.2 2.5l-0.2 2.1l1.4 2.9l-2 -1.8l-1.7 -0.7l-1.7 -2.5l-2 -2.5l-0.9 -2.1l-1.5 -1.2l-0.1 -3.4zM1846.5 1573.9l0.7 2.5l-0.2 2.5l-3.8 0.5l-0.4 -1.9l0.4 -2.3zM1601.3 1640.4l3.4 -0.4l0 2.2l-2.6 0.2l-3.1 0.6l-0.5 -2zM1679.8 1247.0l2.8 -2.8l1.3 -1.4l2.6 -0.2l1.5 -2.1l2.1 -1.2l3.1 -2l3.1 0.7l2.2 2l1.5 1.7l2.3 -2.9l1.9 -2l0.1 3.8l0.7 2.4l-1.3 1.2l-0.9 2.2l-0.3 2.8l2.2 3.3l-1 2.9l-1.7 3.5l-0.8 2.7l-1.7 3.1l-2 1.9l-3 0.3l-2 3.4l-2.4 1.7l-3.8 0l-2.8 -1.5l-3.4 -1.4l-1 -1.7l-1.6 -1.5l-1.1 -3l0.2 -2.1l-1.4 -1.9l0.7 -3.5l0.7 -2.8l1 -3.4zM1659.3 1273.7l2.2 -2.1l3.1 -1.3l1 -1.9l0.9 -1.8l0.6 -2.1l0.7 -2l1.9 -1.1l1.7 -1l2.8 -1.4l0.2 -2.9l1.7 2.2l-0.9 3.3l-0.8 2.3l-1.2 1.1l-0.5 2.8l-0.8 2.5l-0.5 3.7l0.5 3.8l-2.8 -2.8l-2.6 -2.2l-1.7 2.5l-3.3 0.7l-1.9 0.9l-1.8 0.9l-1.8 -2.5zM1714.0 1250.5l1.6 -1.8l1.8 -3.2l2.7 -0.2l1.6 -1.1l1.9 -2.5l3.4 0.3l1.4 -1.8l2.7 -0.9l0.1 -1.8l1.1 -2.3l2.5 -2.2l1.1 -1.3l1.9 -1.6l2.7 -2l2.4 1.1l1.9 0.6l1.2 3.2l1.8 3.4l1.9 2.9l1.9 2l0.1 2.8l-0.2 2.4l-0.1 2.7l0.5 3.7l-1.7 2.2l-0.3 2l-0.2 2l-0.6 1.9l-0.1 2.6l0.5 2.2l-2.3 2l-3.1 2.1l0.8 2.3l-1.4 1.8l-2.1 3.2l-2.9 1.8l-2.9 0.6l-2.1 1.4l-2.5 -0.3l-2.4 0.8l-2.3 -2.7l-1.5 -3.5l-0.3 -2.4l-0.1 -1.6l-2 -2.2l-0.4 -3l-3.4 -2l-1 -3.2l-1.5 -3l-2.1 -3.1l-1.6 -3.1zM1705.8 1305.8l2.9 0l3 2.1l2 3.4l1.4 2.8l1.9 1.1l1.6 1.1l0.7 3.5l3.1 1.4l0.3 2.3l-1.7 1.7l0.1 3.5l-0.5 2.2l-2 2.3l-3 -1.8l-1.9 -1.5l-1.6 -3.2l-2.2 -1.7l-1.9 -2.6l-3 -2.4l-2.1 -1.2l-2.9 -1.3l0.2 -3l0.5 -3.2l0.2 -3.2l1.6 -1.8zM1671.3 1334.5l-0.2 -2.6l2.8 -2l3.6 -1.3l1.4 -3.6l2.7 -2l2.1 -1.3l1.4 -1l2.6 0.1l1.6 -0.8l-1.5 3.2l-1.5 2.5l-3.2 1.5l-0.9 1.8l-0.8 2.2l-2.3 1.8l-2.7 1.9l-1.6 1.1l-2.9 0.6l-1.7 -0.5zM1720.6 1364.7l3 -1.2l2.3 1.7l3.9 0.8l1.4 1.6l1.8 1.8l1.8 2.8l0.4 1.8l0.8 2.3l0.5 3.3l-1.4 2.3l-0.5 1.9l0.2 3.3l-1.3 2.6l-3.7 1.6l-3.5 -1.2l-2.7 -0.5l-3.5 -1l-2.7 -0.8l1.2 -2.5l2.7 -0.4l3.5 0.9l2.1 -2.5l2.9 -1.2l0.4 -2.8l0.4 -3.4l-1.8 -1.7l-1.5 -3.3l-2.1 -0.9l-2.8 -1.6l-1.8 -1.3l-2 -1.1zM1714.9 1368.0l1.4 2.7l-0.2 2.7l-1.1 1.8l-1.3 1.9l-2.5 -2.4l0.8 -3.4l-0.3 -2.9zM1724.5 1295.6l2.2 -1.3l2.3 -1.1l0.8 -1.8l2.5 0.3l2.5 1l0.5 3.4l-1.8 2.8l-3.3 1.3l-2.9 -0.1l-1.8 -1l-1.9 -1.5zM1740.3 1288.9l1.9 -2.4l-1 3.5l0.3 2.7l-3.5 0.7l0.2 -1.9l-0.9 -2.6zM1748.2 1281.5l0.8 -2l1.9 -3.5l3.8 -0.7l0.7 3.7l-1.9 3l-2.6 2l-2.4 0.4l-2.5 -1.7zM1755.5 1284.3l2 -0.9l2.1 -0.7l2.1 3.1l2.9 1.2l-1.9 1.8l-1.8 1.4l-3.6 -1.5l-2.6 0.7l-1.3 -2.9zM1641.6 1329.9l1.9 1.3l1.2 1.6l3.1 2.1l1 2.1l1.8 1.4l3.4 0.2l1.6 1.6l0.4 2.2l-1.7 1l-2.7 0.2l-1.9 -1.3l-1.3 -1.7l-3.1 0.5l-1.6 -2.9l-3.3 -2.1l-1.6 -2.7l-0.9 -2.2z" fill="#ffcce9" stroke="#686868" stroke-width="1.45" stroke-linejoin="round"/><path id="units" d="M1831.6 378.7l-7.6 10.5M1824.0 389.2l-3.1 0.8l-3.2 -0.2M1807.8 377.1l10.0 12.7M1443.5 1597.0l10.1 -18.8M1465.2 1591.8l-5.7 -3.0l-2.6 -5.6l-3.3 -5.0M1583.4 1600.3l-2.3 4.3l-4.6 3.0l0.0 3.0M1575.5 1610.3l-0.9 -2.4l-6.6 -1.6l-1.5 -5.7M1580.8 1595.3l-4.5 -1.9l-4.7 1.1M1571.6 1594.5l-2.5 3.1l-2.6 3.0M1558.5 1607.5l0.9 -4.6M1566.5 1600.6l-3.0 2.9l-4.1 -0.6M1567.3 1586.0l3.9 3.4l0.4 5.1M1567.3 1586.0l-4.7 -0.9l-4.7 -1.4M1550.5 1592.6l2.8 -2.8l1.6 -3.7l3.0 -2.4M1550.5 1592.6l-3.3 0.2M1544.2 1604.8l3.0 -11.9M1999.6 1512.3l-3.7 3.2l-5.5 2.0M2000.8 1528.5l-2.4 0.7l-4.6 -2.4M1993.8 1526.8l-0.3 -5.2l-3.1 -4.1M1996.4 1543.3l5.1 -3.1l1.0 -5.4M1998.0 1551.9l-1.6 -8.6M1990.8 1532.4l1.0 -0.5l2.0 -5.1M2004.7 1479.1l-6.4 -0.5M2002.1 1492.6l-7.3 -2.3M2000.0 1506.3l-8.8 -4.1M1583.4 1600.3l4.0 2.7l4.9 0.4M1593.0 1619.2l2.8 -8.3M1595.7 1610.8l-0.7 -4.2l-2.7 -3.2M1028.7 1128.7l3.9 -5.8M1032.6 1122.9l3.2 -1.6l3.5 0.4M1593.9 1585.7l-3.1 4.1l-4.6 1.9l-4.5 2.0M1581.7 1593.7l-1.5 -4.0l-3.0 -3.7l2.4 -4.7M1593.9 1585.7l-0.2 -4.3l-4.2 -2.0l-1.3 -3.5M1581.7 1593.7l-0.9 1.7M1573.0 1579.8l3.6 -0.6l3.0 2.1M1457.4 1571.3l0.9 -5.3l-3.5 -3.4l-2.6 -3.7M1452.2 1558.9l-9.6 -2.4M1453.5 1577.7l-14.2 -1.3M1452.2 1558.9l2.0 -4.7l2.7 -3.7M1446.1 1537.1l4.0 -0.1M1572.7 1575.8l0.3 4.0M1557.9 1583.7l-1.6 -4.6l0.8 -1.8M1527.2 1560.3l-0.3 -4.5M1527.2 1560.3l4.4 1.4l4.1 2.1M1535.7 1563.8l8.8 -2.4l3.8 -2.5M1535.0 1549.3l-2.1 1.2M1530.2 1554.3l-0.1 0.1l-3.2 1.4M1510.0 1586.0l5.1 0.6l1.5 5.0l3.2 2.8M1519.3 1605.6l0.5 -11.2M1502.4 1599.9l-0.2 -12.3M1510.0 1586.0l-3.4 0.0l-3.3 0.7M1502.3 1587.6l1.0 -0.9M1533.5 1591.7l-2.2 -2.4l-3.3 -0.2M1542.2 1590.0l-3.4 -4.1l-0.7 -4.5l1.9 -5.0M1528.0 1589.1l-1.6 -2.8l0.5 -3.1M1526.9 1583.2l1.5 -3.2l1.8 -3.2M1530.2 1576.8l4.2 0.2l4.0 -1.3M1538.4 1575.7l1.6 0.7M1532.6 1605.6l0.9 -13.9M1547.2 1592.9l-5.0 -2.9M1551.3 1573.5l-0.3 0.3l-4.9 2.7l-6.1 -0.1M1515.6 1580.0l4.1 -0.2l4.2 -0.2l3.0 3.6M1515.6 1580.0l-4.3 1.6l-1.3 4.4M1516.9 1568.9l1.8 4.0l-1.7 3.5l-1.4 3.6M1522.4 1567.2l2.0 3.7l1.2 4.3l4.6 1.6M1522.4 1567.2l3.8 -2.5l1.0 -4.4M1950.8 1115.3l-2.8 15.2M1948.8 1131.4l-0.8 -1.0M1930.1 1120.6l2.2 3.0l2.9 2.7l-0.7 4.3M1918.2 1123.6l3.5 -2.8l4.2 -0.2l4.2 0.0M1918.2 1123.6l-0.8 7.6M1928.4 1137.4l1.1 -3.0l5.0 -3.8M1870.0 1348.9l-2.2 -1.7M1723.7 1644.7l1.2 -3.4l-2.8 -12.0M1731.3 1626.5l-5.0 0.0l-4.2 2.8M1737.2 1643.4l1.3 -7.0M1732.0 1626.8l2.7 2.9l-0.1 4.7l3.9 2.1M1738.5 1636.5l4.3 -3.4l5.0 4.8l4.3 -2.5M1708.8 1645.4l-0.6 -3.0l0.0 -7.2M1701.0 1649.1l-3.6 -5.6M1708.2 1635.2l-4.5 1.3l-4.0 -2.6M1718.0 1627.7l4.1 1.6M1671.9 1641.2l3.6 1.6l3.5 -0.9l3.5 -1.0M1682.5 1640.9l1.4 4.5l4.1 2.3M1688.0 1647.7l-0.3 3.1M1655.5 1642.8l5.1 10.2l0.2 1.5M1670.0 1639.4l-4.9 0.7l-5.3 -1.4l-4.2 3.8M1670.0 1639.4l1.9 1.8M1642.6 1645.5l4.6 0.8l4.6 0.2l3.7 -3.7M1697.4 1643.5l-2.4 3.0l-3.3 1.2l-3.7 0.0M1699.7 1633.9l-2.5 -3.8M1682.5 1640.9l-0.3 -5.3l3.8 -3.7M1697.2 1630.2l-3.9 -0.7l-3.9 -0.1l-3.4 2.5M1717.5 1610.2l4.9 0.2l4.3 -2.1M1717.5 1610.2l-3.4 -3.0l-3.3 -3.2l0.4 -5.2M1726.7 1608.3l-1.6 -4.8l2.3 -5.1l-2.1 -4.7M1711.2 1598.8l3.8 -1.3l1.4 -5.2l4.9 0.4M1725.3 1593.7l-4.0 -1.0M1730.1 1610.2l3.4 5.2l-2.5 5.7l0.3 5.4M1711.6 1618.3l2.1 -2.6l3.0 -2.0l0.8 -3.5M1711.6 1618.3l0.2 4.5l3.5 2.2l2.7 2.7M1732.0 1626.8l6.4 -0.4l5.3 -2.6l4.4 -4.4M1730.1 1610.2l4.5 0.9l3.3 -2.3l3.2 -2.8M1752.1 1635.4l1.2 -1.6M1748.1 1619.4l5.6 1.9M1741.1 1606.0l2.3 -4.7M1743.4 1601.4l5.4 4.7l7.7 -3.9l5.6 4.2M1758.7 1618.4l-4.9 2.9M1758.7 1618.4l3.0 -2.6l1.8 -3.1l-0.2 -4.1M1763.3 1608.6l-1.3 -2.2M1743.4 1601.4l-0.5 -4.7M1725.3 1593.7l2.9 -1.6M1742.9 1596.7l-4.5 -2.8l-4.6 -2.5l-5.6 0.7M1032.6 1122.9l-5.6 -4.4l-0.8 -7.1l-3.5 -5.6M1046.5 1112.6l-0.6 1.4l-6.6 7.7M1022.7 1105.8l3.9 -5.1M1022.7 1105.8l-7.7 2.1M1155.7 1245.7l2.5 -4.6l-2.9 -4.9l1.4 -4.7M1147.8 1229.3l8.9 2.2M1116.0 1125.9l-2.6 4.4M1113.5 1130.3l0.8 4.5l5.1 3.1l-0.3 1.0M1116.0 1125.9l4.6 3.4l5.1 1.4l5.6 -1.2M1131.3 1129.5l0.1 1.0M970.3 1019.4l9.3 6.7M984.6 1011.5l0.7 2.5l4.8 7.9M979.6 1026.1l2.5 -3.8l4.7 1.6l3.3 -2.0M997.5 1001.6l1.9 0.6l7.7 4.0M1007.1 1006.2l-4.3 5.4l-2.4 6.7l-5.1 4.8M1123.1 949.0l-1.8 3.9l-5.1 1.0l-1.3 4.3M1123.1 949.0l3.8 1.0l3.8 -0.4M1134.7 954.0l0.7 5.7l-4.2 3.8l-1.7 4.8M1134.7 954.0l-4.0 -4.4M1125.4 970.1l4.1 -1.8M1118.6 968.2l-3.2 -2.6l2.1 -4.5l-2.6 -2.9M1082.0 977.2l-2.2 -6.1l5.8 -5.3l-1.9 -6.0M1082.0 977.2l-7.6 2.0M1083.7 959.8l-4.3 -1.6M1060.3 950.9l3.5 -3.1l9.0 -1.6M1072.8 946.2l3.5 3.3l-1.2 5.8l4.3 2.9M1103.2 1004.0l-3.6 -0.5l-3.4 1.3l-3.4 0.3M1092.8 1005.1l-3.4 11.1M1086.7 1000.5l1.3 0.0M1088.0 1000.6l3.5 1.2l1.3 3.3M1088.0 1000.6l1.3 -5.0l4.1 -4.1l-1.1 -5.7M1082.0 977.2l3.7 0.1l2.8 2.4M1088.5 979.7l2.8 2.5l1.0 3.6M1088.1 1105.1l3.3 -1.4M1104.1 1120.4l7.3 -6.5M1116.0 1125.9l-0.9 -3.6l-1.5 -3.4l0.2 -3.9M1113.8 1115.0l-2.4 -1.1M1091.5 1103.7l4.3 -0.7M1095.7 1103.0l6.2 -0.1l3.5 4.8l4.3 3.1M1668.9 1580.9l6.9 -1.5l0.4 -0.6M1671.0 1591.6l-1.2 -3.5l-1.6 -3.4l0.7 -3.8M1671.0 1591.6l4.1 -1.2l2.3 4.9l4.0 -0.9M1681.4 1594.4l3.5 -2.5l0.4 -5.1l4.1 -1.9M1705.1 1583.2l-0.7 -5.7M1705.1 1583.2l-3.4 4.6M1689.4 1584.9l3.9 1.6l3.7 2.7l4.6 -1.4M1716.5 1583.8l1.8 2.8l1.9 2.9l1.1 3.2M1711.2 1598.8l-3.9 -0.7l-3.8 -1.0M1703.5 1597.1l-2.9 -4.3l1.0 -5.0M1593.9 1585.7l2.2 0.8M1592.3 1603.4l3.2 -2.1l-0.8 -5.1l4.1 -1.3M1596.1 1586.5l-0.4 4.8l3.1 3.6M1483.5 1594.7l-4.0 -1.7l-2.3 -4.8l-5.1 0.1M1490.5 1586.2l-2.4 -2.5l-3.0 -2.1l0.2 -4.0M1472.1 1588.3l1.4 -3.3l3.2 -2.8l-1.2 -4.2M1485.3 1577.6l-5.3 -1.6M1475.5 1578.0l4.5 -2.0M1483.7 1596.6l-0.1 -1.9M1502.3 1587.6l-3.7 -2.7l-4.0 0.0l-4.1 1.3M1465.2 1591.8l4.3 -0.1l2.6 -3.4M1457.4 1571.3l4.5 -0.5M1461.9 1570.8l4.4 2.6l5.6 0.6l3.6 4.0M1470.7 1562.1l4.3 1.8l4.6 0.8M1470.7 1562.1l-3.1 -3.8l5.0 -5.0l-3.7 -3.6M1471.2 1548.6l-2.3 1.1M1471.2 1548.6l4.1 1.5l4.5 0.3l3.6 2.6M1483.4 1553.0l1.2 3.5l-0.3 3.7M1480.1 1576.0l0.4 -3.8l0.3 -3.8l-1.2 -3.7M1467.4 1549.2l1.5 0.5M1475.6 1529.1l-1.7 -1.1l-6.1 0.9l-1.2 -0.5M1476.8 1539.7l-2.7 3.1l-2.9 5.8M1485.3 1577.6l1.5 -3.5l4.1 -0.5l2.1 -2.8M1503.3 1586.7l0.2 -4.6l-3.7 -4.0l1.9 -4.8M1493.0 1570.8l4.7 0.1l4.0 2.4M1484.3 1560.2l3.1 2.7l4.1 0.2M1493.0 1570.8l-1.7 -3.7l0.2 -4.0M1516.9 1568.9l-3.9 -2.2l-4.4 -1.3M1513.5 1547.4l-1.0 3.1l-5.8 2.3l-0.8 5.6M1505.9 1558.4l-5.9 -1.0M1500.1 1557.4l-0.4 -5.8l-7.5 -0.6l-1.0 -5.2M1532.2 1539.1l-6.2 -2.5l-5.6 2.0M1526.9 1555.8l-4.8 -2.9l-3.6 -4.2l-2.6 -1.9M1508.6 1565.4l-2.9 -2.9l0.2 -4.1M1491.5 1563.1l2.6 -2.2l3.8 -0.5l2.2 -3.0M1532.2 1539.1l5.2 -4.4M1823.1 1162.5l-12.0 -7.4M2142.0 1363.0l4.5 4.2l5.6 4.0M2088.8 1465.8l0.3 -12.6M2103.0 1454.0l-7.2 -4.9M2089.1 1453.1l3.1 -2.4l3.6 -1.6M2098.6 1388.3l10.0 9.2M2090.6 1398.7l2.3 -0.1l10.5 6.2M2136.3 1380.4l9.0 1.5l3.8 -2.0M2143.6 1396.8l-1.4 -0.5M2123.3 1429.0l-0.3 -3.7M2123.0 1425.3l1.9 -4.8l5.2 -1.7l3.0 -3.8M1655.6 1642.5l-0.2 -4.6l-1.1 -4.5M1642.8 1627.6l2.5 5.9l-2.5 5.5l-1.4 5.6M1641.4 1644.6l1.2 0.9M1654.3 1633.4l-4.6 -1.8l-3.1 -4.0M1753.4 1633.8l4.4 2.3l5.1 -0.9l4.6 1.5M1758.7 1618.4l5.1 2.7l3.6 4.9l5.3 2.5M1772.7 1628.5l-1.7 4.7l-3.5 3.5M1767.5 1636.7l0.9 3.5M1847.6 1635.1l-4.9 -13.1M1825.7 1636.5l-0.1 -5.5M1825.7 1631.0l3.2 -3.7l4.3 -2.1l3.9 -2.9M1545.1 453.9l6.1 -1.3l1.9 -7.2l6.2 -1.2M1539.5 445.0l-0.7 -5.0l2.6 -3.2l4.0 -2.4M1559.3 444.2l-2.0 -3.1l-1.8 -3.3l-1.8 -3.2M1553.7 434.6l-4.2 0.4l-4.1 -0.6M1569.8 448.6l-4.4 0.6l-3.4 -1.7l-2.7 -3.3M1579.1 431.1l-1.4 4.0l0.9 4.1M1564.8 417.1l-2.3 5.3l-7.6 4.2l-1.2 8.0M1567.6 416.5l4.8 2.1l4.0 5.7l2.7 6.8M1546.5 409.9l-0.5 1.5l-7.2 15.5M1538.8 426.9l2.7 4.3l3.9 3.2M1539.5 445.0l-4.2 -3.2l-4.6 0.7l-4.6 1.3M1538.8 426.9l-4.1 -0.4l-3.3 3.4l-4.2 -0.8M1527.2 429.1l-3.1 -3.9l-5.6 -1.0l-0.2 -0.4M1428.7 448.7l-2.9 1.9l-0.9 3.4M1428.7 448.7l3.7 2.8l3.9 1.3l4.5 -2.4M1424.9 454.0l1.3 4.0M1440.4 465.6l-5.6 -0.8l-4.3 -3.2l-4.2 -3.6M1441.2 465.4l2.4 -5.1l-0.8 -4.9l-2.0 -5.0M1532.2 478.0l3.5 -4.0l-0.9 -5.1l0.9 -4.6M1537.2 484.3l4.6 -1.9l4.6 2.5l4.6 -0.6M1544.6 458.8l-2.8 2.1l-2.5 2.6l-3.6 0.8M1544.6 458.8l3.7 2.7l3.0 3.9l4.9 0.6M1551.0 484.3l4.7 -0.8l0.1 -5.3l3.3 -2.2M1559.1 476.0l0.7 -3.8l-0.5 -3.4l-3.1 -2.8M1569.8 450.0l-0.1 -1.3M1545.1 453.9l-0.4 4.9M1354.1 1024.5l-0.6 4.8l0.4 4.9M1354.1 1024.5l-1.3 -0.8M1353.9 1034.2l-2.2 4.2l-2.1 1.6M1352.9 1023.8l-4.0 1.2l-4.1 1.1l-3.9 1.6M1538.1 520.2l-0.7 6.4l-2.0 6.0l-2.4 6.0M1538.1 520.2l-5.8 -2.7l-6.2 2.9l-5.9 -1.7M1533.0 538.6l-4.7 0.7l-4.6 1.4M1517.2 525.2l2.2 5.1l-0.6 6.3l4.9 4.1M1322.0 1020.3l0.3 -0.3l4.0 -4.1M1326.3 1015.9l3.7 1.5l3.6 1.7l2.2 3.5M1330.9 1028.4l5.5 -3.0M1335.8 1022.6l0.6 2.8M1309.1 1007.9l0.5 -3.3l6.5 -1.3l1.2 -5.1M1328.3 1007.3l-2.2 -4.7l-5.1 -1.4l-3.7 -3.0M1328.3 1007.3l-2.3 4.0l0.3 4.6M1135.3 1147.6l0.3 -2.0l-1.0 -11.2M1142.6 1156.3l5.5 -7.9l3.4 -10.8M1151.5 1137.6l-0.8 -1.3M991.5 1044.6l11.1 -11.2M1019.7 1055.9l0.0 -0.2l-1.1 -7.1M1018.6 1048.6l-5.6 -4.1l-2.8 -6.4l-5.0 -4.6M1005.2 1033.5l-2.5 -0.1M979.6 1026.1l-2.1 8.7M995.3 1023.1l1.3 4.2l2.2 3.6l3.8 2.5M1030.8 1038.3l-1.0 1.5l-11.2 8.8M1021.1 1025.8l-1.3 1.0l-14.6 6.7M1117.9 987.1l-0.4 3.7l-1.1 3.8l2.4 3.5M1117.9 987.1l-2.2 -3.2l-4.0 0.2l-2.9 -1.8M1108.8 982.3l-2.4 2.4l-2.7 2.1M1103.7 986.8l2.4 4.1l0.3 4.5l0.0 4.6M1106.4 1000.0l4.2 -0.2l3.9 -2.2l4.3 0.5M1125.4 970.1l2.2 4.1l-2.6 4.1l0.2 4.1M1118.6 968.2l-3.6 1.4l-3.7 1.0l-2.3 3.5M1109.0 974.1l-2.2 4.0l2.0 4.2M1125.2 982.4l-4.6 0.8l-2.7 3.9M1088.5 979.7l5.1 -2.3l2.2 -5.5l4.5 -3.0M1109.0 974.1l-3.0 -1.5l-2.8 -1.9l-2.9 -1.8M1103.2 1004.0l3.3 -4.0M1125.2 982.4l2.1 4.2l5.0 0.0l3.1 2.8M1118.8 998.1l3.9 2.8M1122.7 1000.9l2.2 5.6l-1.0 6.8l0.7 0.7M1129.5 968.3l3.7 3.5l5.7 -0.2l3.7 3.6M1135.4 989.4l2.8 -0.1M1142.6 975.2l-0.6 5.0l-3.4 4.1l-0.4 5.0M1138.9 1009.1l-4.1 2.1l-2.0 0.8M1138.9 1009.1l1.2 -5.8l2.4 -5.7l-2.1 -6.2M1140.4 991.4l-2.2 -2.2M1085.0 959.2l5.3 -0.5l3.5 5.0l5.2 -0.2M1085.0 959.2l-0.6 -5.9l4.8 -3.4l2.2 -4.5M1099.0 963.5l2.5 -2.6l2.3 -2.7l1.1 -3.5M1104.9 954.7l-2.3 -3.2l0.4 -4.0M1101.1 946.1l1.9 1.4M1100.3 968.9l-1.3 -5.4M1074.3 940.9l-1.5 5.2M1085.3 938.2l-4.1 -0.7l-2.7 5.0l-4.2 -1.6M1085.3 938.2l1.7 4.8l4.4 2.4M1116.0 941.1l-4.7 1.3l-3.3 4.3l-5.0 0.8M1116.0 941.1l1.7 3.2l2.2 2.8l3.2 1.9M1307.6 1008.9l-2.9 -2.4l-5.6 -0.4l-4.5 -2.8M1302.8 1017.1l-1.4 -0.4l-5.0 1.5M1294.6 1003.3l-2.1 3.5l-1.7 1.7M1142.1 1071.1l-3.7 0.4l-3.4 1.3M1135.0 1072.8l-2.1 3.0l1.7 4.4l-3.2 2.6M1150.7 1079.7l-2.3 -3.4l-4.3 -1.5l-2.0 -3.7M1150.4 1085.5l-4.1 1.9l-3.0 3.4M1131.4 1082.8l4.0 2.6l2.8 4.4l5.1 1.0M1145.8 1058.9l4.6 -0.5l4.7 -1.5l4.0 3.7M1150.7 1079.7l5.8 -0.8l2.2 -5.3l3.6 -3.5M1162.3 1070.1l-2.4 -2.7l-1.1 -3.2l0.3 -3.6M1213.4 1057.5l-2.0 -3.8l-2.1 -3.7l-4.8 -0.7M1204.5 1049.3l-4.2 -0.3l-1.1 5.8l-4.4 -0.5M1194.8 1054.3l-0.2 6.4l8.0 2.4l-0.3 6.4M1208.4 1069.7l-3.1 0.1l-3.0 -0.3M1226.4 1056.4l-0.1 4.3l4.3 2.3l0.4 4.1M1226.4 1056.4l-4.4 -0.2l-4.5 -1.2l-4.1 2.5M1231.0 1067.1l-5.4 3.1l-4.3 5.2l-6.9 0.0M1214.4 1075.4l-2.1 -3.7l-3.9 -2.0M1200.3 1135.4l-1.4 1.4M1200.3 1135.4l1.3 -4.5l-0.0 -4.6l0.3 -4.7M1198.9 1136.8l-4.8 -1.4l-5.5 1.7l-4.3 -3.4M1201.7 1121.3l-4.8 1.1l-4.5 -1.5l-4.6 -0.9M1184.3 1133.7l4.0 -3.8l-1.8 -5.4l1.3 -4.5M1197.4 1102.3l-4.5 2.8l-5.1 -1.4M1187.8 1103.7l-0.8 4.1l-3.9 2.9l0.8 4.6M1204.4 1112.3l-0.1 4.9l-2.6 4.1M1197.4 1102.3l3.8 2.3l2.1 3.5l1.1 4.2M1183.9 1115.3l1.9 2.4l2.0 2.3M1186.4 1085.4l2.8 -2.6l3.5 -1.4M1186.4 1085.4l-4.5 -3.0l-5.9 1.0l-4.4 -3.2M1181.7 1065.4l-3.7 2.9l-2.2 4.9l-5.5 0.6M1181.7 1065.4l5.4 2.6l4.0 4.0l1.8 5.9M1171.6 1080.2l-1.6 -3.0l0.3 -3.4M1004.2 953.9l0.6 0.5l1.0 1.1M1120.1 540.3l-6.2 1.8l-5.9 -5.2l-3.9 1.4M1120.1 540.3l0.7 -4.3M1014.5 684.4l2.3 6.7M1030.8 671.1l1.9 -0.1l7.4 6.3M1016.8 691.1l4.3 3.3l5.5 -2.1l4.7 1.9M1031.3 694.2l3.9 -0.8l1.5 -3.4l2.0 -2.9M1047.3 661.8l-11.6 -4.7M995.9 685.0l0.9 1.0l5.7 9.0M1016.2 691.7l-4.7 0.8l-4.9 -0.3l-4.1 2.8M1551.0 484.3l4.8 4.5l1.0 6.2l1.6 6.0M1532.2 498.3l4.4 -3.7l-2.4 -6.1l3.0 -4.2M1532.2 498.3l2.7 5.6l4.0 4.5l5.4 3.2M1558.4 501.0l-3.2 5.5l-5.7 2.2l-5.2 2.9M1520.8 502.6l3.0 -3.7l4.7 1.2l3.7 -1.8M1520.8 502.6l-0.7 3.9l-2.2 3.3M1517.9 509.8l0.8 4.5l1.5 4.4M1538.1 520.2l3.6 -0.5l2.2 -3.1M1578.1 1324.2l0.8 7.0M1585.7 1318.6l6.7 -0.9M1665.0 1143.0l0.3 4.7l2.5 5.5M1685.4 1147.0l-3.4 1.9l-5.6 5.2l-6.9 0.7M1683.5 1612.6l5.4 2.3l5.1 3.3l6.0 0.5M1683.5 1612.6l2.2 -4.5l0.0 -5.0M1685.7 1603.1l5.1 -2.9l5.8 -0.0l5.5 -1.3M1702.1 1598.9l3.0 6.0l-4.6 6.3l2.2 6.1M1702.7 1617.3l-2.7 1.4M1681.4 1594.4l4.2 3.3l0.1 5.4M1711.6 1618.3l-4.6 0.6l-4.3 -1.6M1697.2 1630.2l3.6 -3.2l-3.0 -4.8l2.2 -3.5M1588.2 1575.9l0.8 -1.9M1637.5 1575.9l-3.2 3.4l-4.8 -4.3l-3.2 3.3M1623.4 1565.9l-0.6 7.5M1626.3 1578.3l-1.2 -3.0l-2.4 -2.0M1622.7 1573.3l-3.5 1.4l-3.4 0.6l-3.2 -2.7M1598.0 1571.4l1.5 1.6l6.7 6.1M1612.6 1572.6l-3.3 3.1l-3.1 3.4M1596.1 1586.5l4.6 0.4l1.3 -5.3l4.0 -0.6M1667.6 1594.8l-2.6 3.7l-0.5 3.8l1.9 4.1M1667.6 1594.8l-5.1 -2.4l-5.4 4.4l-5.1 -2.8M1666.4 1606.4l-4.7 2.8l-4.9 1.1l-5.2 -1.8M1651.2 1594.5l1.2 4.6l1.0 4.5l-2.4 4.5M1641.4 1644.6l-10.7 -2.5l-2.4 0.8M1958.0 1264.9l9.0 0.2l2.7 -1.6M2005.0 1288.8l-9.5 -9.8M1980.2 1303.7l-4.5 -3.2l-6.3 -4.5M1953.7 1270.2l4.2 -5.2M1549.8 1035.0l-3.2 0.5l-6.9 5.2l-1.4 0.2M1529.4 1021.8l-2.8 2.6l-0.1 0.5M1530.9 1000.2l7.3 0.5M1523.4 1008.7l0.4 -4.7l5.7 0.1l1.4 -3.9M1523.4 1008.7l1.0 4.8l4.8 3.2l0.2 5.1M1511.9 1046.8l2.8 4.1l0.9 2.9M1651.8 1117.2l-4.9 -2.1l0.1 -7.1l-5.6 -1.4M1653.7 1116.3l-1.9 0.9M1641.4 1106.6l5.7 -8.9M1842.9 1143.4l3.4 9.5M1796.7 1033.1l5.1 2.2l4.0 -3.5l4.4 -1.4M1793.6 1036.6l3.1 -3.5M1934.5 1130.6l4.5 0.7l4.5 -0.5l4.5 -0.3M1903.4 1132.5l2.6 -10.1M1901.1 1116.3l4.9 6.1M1918.2 1123.6l-5.0 -2.9M1913.2 1120.8l-3.7 0.7l-3.6 0.9M1930.1 1120.6l2.7 -10.5M2095.8 1449.1l0.6 -4.7l-1.1 -4.7M2102.4 1432.4l-1.9 2.9l-3.8 1.1l-1.4 3.3M2095.3 1439.7l-5.2 -2.2l-5.8 -0.6l-0.3 -0.3M2081.6 1426.1l0.4 -3.2l4.9 -3.4M2104.0 1408.7l-3.3 3.5l-1.0 5.3l-4.5 2.6M2104.0 1408.7l3.6 1.5l4.0 0.9l1.9 4.1M2115.0 1420.3l-1.5 -5.1M2115.0 1420.3l-4.9 2.1l-3.6 3.8l-4.3 3.0M2086.9 1419.5l4.2 0.4l4.1 0.2M2103.4 1404.8l0.6 3.9M2102.4 1432.4l-0.2 -3.2M2123.0 1425.3l-5.2 -0.7l-2.8 -4.3M1662.6 1621.6l1.6 2.6l0.6 3.0M1662.6 1621.6l4.2 -2.2l1.8 -3.9l1.4 -4.2M1670.0 1611.3l4.4 -1.3l3.9 1.1l3.6 2.6M1668.5 1629.8l3.0 -3.7l5.3 0.3l3.4 -3.0M1668.5 1629.8l-3.7 -2.6M1680.2 1623.4l1.3 -4.7l0.4 -5.0M1656.2 1619.3l-2.3 3.8l-2.4 3.8l-4.9 0.7M1654.3 1633.4l3.6 -2.0l2.7 -3.4l4.2 -0.8M1656.2 1619.3l1.1 -4.8l-5.5 -1.9l-0.2 -4.1M1666.4 1606.4l2.3 2.1l1.3 2.8M1671.0 1591.6l-3.4 3.2M1686.0 1631.9l-0.1 -4.1l-2.3 -2.6l-3.4 -1.8M1670.0 1639.4l0.5 -5.0l-2.0 -4.6M1783.5 1638.4l-1.4 -7.0M1777.1 1627.2l1.7 3.0l3.3 1.2M1763.3 1608.6l6.6 -3.1l6.7 2.7l0.1 0.0M1777.1 1627.2l2.6 -6.1l2.5 -4.4M1782.1 1631.4l4.1 0.0l3.4 -3.8l4.4 1.3M1862.3 1594.7l-2.3 0.8M1859.9 1595.4l-4.4 -5.3M1842.7 1622.0l0.5 -1.0M1843.2 1621.0l7.2 -1.9l7.7 -0.0l2.2 -1.7M1859.9 1595.4l-3.5 2.9l-0.4 4.5M1864.0 1612.2l-0.6 -3.1l-4.6 -2.6l-2.8 -3.7M1743.3 1596.1l-1.3 -11.0M1743.3 1596.1l5.3 -0.9l4.3 -3.2l4.7 -2.3M1757.6 1589.7l-0.6 -9.9M1762.2 1593.4l-4.6 -3.6M1772.9 1589.3l-1.2 -11.6M1772.9 1589.3l-3.7 1.0l-2.7 3.7l-4.3 -0.6M1716.5 1583.8l3.1 -4.9M1440.4 465.6l-1.7 3.3l-3.4 1.9l-2.1 3.1M1426.3 458.0l-0.3 4.6l-3.8 3.8l0.9 4.9M1505.6 438.1l1.0 -0.3M1505.6 438.1l-2.8 4.7l-1.9 5.1l-1.6 5.2M1506.6 437.8l6.5 1.2l4.8 3.9l4.1 4.9M1499.3 453.1l6.1 0.3l5.5 3.2l6.2 -0.2M1521.4 452.4l0.6 -4.6M1526.1 443.8l-4.1 4.0M1514.6 426.4l-2.1 6.6l-5.9 4.8M1535.7 464.3l-6.1 -2.4l-2.8 -6.3l-5.4 -3.2M1505.6 438.1l-6.3 -0.8l-4.4 -5.2l-2.5 -0.4M1428.7 448.7l-0.8 -5.1M1440.8 450.4l3.8 -1.4l3.7 -1.4l2.8 -3.1M1451.1 444.5l0.5 -1.7M1441.2 465.4l5.1 1.5M1456.4 453.7l-3.5 2.8l1.5 5.3l-3.3 3.0M1446.4 466.9l4.8 -2.1M1433.2 473.9l1.3 4.2l2.1 4.0l0.8 4.4M1437.4 486.5l2.5 -3.8l3.6 -2.3l4.4 -0.9M1446.4 466.9l0.1 4.3l2.4 3.9l-1.0 4.4M1497.4 454.3l-0.5 5.4l4.3 4.1l0.2 5.2M1497.4 454.3l1.9 -1.2M1517.1 456.4l-1.9 4.6l-0.8 4.9M1532.2 478.0l-3.5 -0.1l-3.5 -0.0l-3.5 -0.7M1521.7 477.2l-0.7 -4.9l-6.3 -1.3l-0.3 -5.1M1352.9 1023.8l-1.2 -3.4l-1.2 -3.5M1340.9 1027.7l-4.5 -2.3M1350.5 1016.9l-4.6 -1.9l-4.7 -1.6M1328.3 1007.3l3.0 -2.5l3.2 -1.1l3.8 1.5M1341.2 1013.4l-1.9 -4.0l-1.0 -4.2M1362.4 1023.5l3.1 2.9l0.0 5.2l4.5 1.9M1354.1 1024.5l4.1 -0.4l4.2 -0.6M1359.2 1038.3l4.2 -0.2l2.0 -5.4l4.6 0.8M1359.2 1038.3l-2.7 3.9M1370.2 1033.5l3.1 6.8l-1.7 3.2M1594.6 932.1l5.0 -5.3M1599.6 926.8l-4.6 -1.3l-1.9 -3.9l-2.0 -3.7M1583.2 917.2l3.8 2.1l4.1 -1.4M1600.2 926.9l5.0 8.4M1596.9 912.4l-5.8 5.5M1587.7 901.4l-4.5 15.8M1517.9 509.8l-5.6 -2.9l-5.3 3.0l-5.5 0.4M1501.5 510.3l-4.5 3.9M1517.2 525.2l-5.8 -1.5l-5.4 0.8l-5.2 2.9M1500.8 527.4l-3.0 -3.9l-1.5 -4.3l0.7 -5.0M1539.3 653.7l3.5 -7.7M1524.4 645.3l6.1 -6.6M1559.3 667.9l-2.1 4.0l-3.2 4.7M1549.5 656.7l-2.8 -0.7l-6.0 0.7M1513.1 632.5l5.1 -2.9M1513.4 635.5l1.7 2.8l2.9 4.8M1506.4 638.2l2.1 -3.0M1496.1 636.7l-3.4 -7.4l0.1 -2.9M1168.6 1086.6l2.9 3.2l2.9 3.1l0.3 4.7M1168.6 1086.6l-3.1 2.5l-3.8 0.1l-3.6 0.6M1158.1 1089.8l0.7 3.6l-2.2 4.1l3.3 3.2M1159.9 1100.7l3.4 0.6l3.3 1.6l3.6 -0.8M1174.7 1097.6l-2.6 1.9l-1.9 2.6M1182.3 1097.6l-0.2 -4.6l0.3 -4.4l4.0 -3.2M1171.6 1080.2l-0.7 3.6l-2.3 2.8M1162.3 1070.1l3.3 3.5l4.7 0.2M1150.4 1085.5l3.5 2.7l4.2 1.6M1183.9 1115.3l-4.2 -0.5l-3.9 2.7l-4.3 -1.0M1182.3 1097.6l1.6 4.1l3.9 2.0M1171.5 1116.5l-1.1 -4.7l2.8 -5.1l-3.0 -4.6M1171.5 1116.5l-4.3 3.7M1184.0 1133.9l-4.1 -4.1l-5.8 2.6l-4.6 -2.0M1164.2 1139.8l1.2 -3.4l0.7 -3.8l3.4 -2.2M1164.2 1139.8l1.7 3.2l-1.3 4.4l3.6 2.4M1184.0 1133.9l0.1 4.4l-2.0 4.0l-0.2 4.4M1168.2 1149.8l3.9 -4.1l5.6 3.4l4.2 -2.4M1159.5 1179.6l1.6 -0.2l14.9 -4.5M1166.9 1153.4l2.6 6.2l2.7 6.2l6.0 3.9M1176.0 1174.9l2.2 -5.3M1131.4 1130.5l3.2 3.9M1168.2 1149.8l-1.3 3.6M1151.5 1137.6l4.6 -1.2l4.0 1.8l4.1 1.6M1074.3 940.9l-2.6 -4.2l-4.2 -2.7M1057.1 942.5l1.4 -3.5l4.8 -5.1M1172.4 998.3l-4.1 -4.2l2.1 -5.8l-1.6 -4.8M1171.6 998.8l-5.9 0.9l-5.6 -0.3l-5.3 -3.1M1154.8 996.3l-1.7 -3.0M1153.1 993.3l3.4 -3.8l-0.9 -5.8l3.5 -3.7M1162.2 979.6l-3.1 0.4M1178.5 998.5l-3.1 0.3l-3.0 -0.5M1188.1 983.9l-3.9 -1.9l-2.5 -3.4M1181.7 978.6l-4.9 0.1l-2.8 5.6l-5.2 -0.8M1184.6 1008.5l0.0 -0.6l-6.1 -3.5l-0.0 -5.9M1152.3 1007.6l4.4 3.6l1.2 3.6M1152.3 1007.6l-0.5 -4.1l4.0 -3.0l-1.0 -4.2M1138.9 1009.1l4.8 2.5l4.1 -4.1l4.5 0.1M1142.6 975.2l3.0 -1.7l3.5 -0.9M1149.1 972.6l1.6 4.8l4.7 0.6l3.7 2.0M1205.9 1045.1l3.6 -3.8l5.1 -1.0M1205.9 1045.1l-2.5 -4.2l-4.1 -3.2l-1.2 -4.9M1201.3 1025.3l-2.3 2.1M1201.3 1025.3l4.3 2.9l4.9 1.3l5.0 0.9M1198.1 1032.8l0.9 -5.4M1211.2 996.5l-4.1 4.1l0.4 1.4M1211.2 996.5l-1.5 -2.9M1209.7 993.6l-3.7 -0.9l-4.3 2.2l-3.3 -3.3M1198.4 991.6l-1.9 3.1l-0.7 3.7l-2.2 3.1M1193.6 1001.5l2.1 3.3M1228.7 1004.0l-2.4 -4.6M1228.7 1004.0l-0.4 4.6l-1.7 1.2M1226.3 999.3l-4.8 -2.0l-5.4 1.1l-4.9 -1.9M1219.3 979.4l-3.2 0.5l-2.0 2.5M1230.2 988.2l-4.4 -1.9l-1.7 -5.4l-4.8 -1.5M1230.2 988.2l-0.2 4.1l-3.5 3.0l-0.2 4.0M1214.1 982.4l-2.7 3.2l-2.7 3.3l1.0 4.7M1214.1 982.4l-5.8 -0.8l-4.2 -3.6l-4.2 -3.8M1192.2 983.9l3.0 3.9l3.2 3.8M1188.1 983.9l4.1 -0.0M1179.2 998.1l5.3 -1.2l4.9 1.0l4.2 3.6M1184.0 1022.6l5.0 1.4l5.3 0.8l4.7 2.5M1201.3 1025.3l3.7 -3.6l0.6 -4.2l-0.3 -1.0M1182.5 1020.5l1.5 2.1M1219.9 1024.5l-1.5 1.7l-2.9 4.2M1230.2 988.2l2.7 -1.6l3.2 -0.3M1228.7 1004.0l5.4 2.1l5.0 -3.7l5.3 0.3M1244.4 1002.7l2.1 -4.6M1264.1 985.6l2.4 4.8l-1.8 4.6l-0.9 4.7M1264.1 985.6l4.9 0.5l4.5 -2.5l4.8 -0.4M1278.3 983.2l3.1 3.9M1281.4 987.1l-1.0 4.6l-3.8 3.7l0.5 5.1M1277.1 1000.5l-3.9 0.7l-4.0 -0.1l-3.9 0.5M1265.3 1001.6l-1.4 -1.9M1255.6 979.0l-3.6 5.6l-3.4 5.7l-0.4 7.0M1248.2 997.3l4.8 3.4l5.4 -0.3l5.4 -0.7M1511.9 1046.8l-2.7 -2.4l-3.6 -0.9M1505.6 1043.5l1.3 -5.8l-1.1 -5.2M1523.4 1008.7l-3.4 -0.2l-1.8 -0.0M1173.4 1240.7l0.7 -2.7M1155.7 1245.7l5.0 -4.6l7.5 3.6l5.2 -4.0M1174.1 1238.0l-5.9 -1.2l-2.8 -6.3l-5.7 -1.6M1159.7 1228.9l1.6 -4.2M1158.7 1216.3l2.6 8.4M1246.3 1170.5l3.1 3.8l-2.3 5.8l4.1 3.4M1229.1 1178.4l2.5 -5.4M1229.1 1178.4l2.6 2.5l-0.1 4.1l3.1 2.2M1251.2 1183.5l-2.5 2.0l-1.9 2.7M1234.7 1187.2l4.0 0.6l3.9 2.6l4.2 -2.2M1270.4 1056.6l-1.3 -8.3M1283.4 1054.3l-3.0 6.9M1279.5 1061.8l1.0 -0.6M1297.4 1057.5l0.1 0.2l-3.5 7.4M1309.8 1065.5l-3.2 0.0l-5.0 2.1l-4.4 3.4M1296.7 1070.9l-2.6 -2.3l-0.1 -3.5M1299.3 1091.4l1.8 -4.1l2.0 -4.1M1299.3 1091.4l1.6 4.3l2.6 3.7M1308.7 1099.6l4.0 -3.0l3.8 -3.2M1316.5 1093.4l-1.1 -3.8l0.7 -4.0l-1.0 -3.8M1303.1 1083.2l3.1 -2.0l3.7 0.1l3.4 -0.9M1313.3 1080.4l1.8 1.4M1312.4 1067.5l0.3 2.9l0.4 5.0l0.2 5.0M1145.7 1058.7l-5.8 2.0l-4.6 -5.2l-5.5 0.6M1128.5 1037.8l0.6 6.1l-2.0 6.8M1127.1 1050.7l2.2 2.3l0.5 3.1M1135.0 1072.8l-3.1 -1.9l-1.8 -3.4l-3.5 -1.4M1126.6 1066.1l-0.7 -3.9l0.7 -3.4l3.2 -2.7M1159.1 1060.6l3.1 -4.4M1155.3 1043.9l1.9 5.2l5.0 7.1M1112.0 1063.9l0.5 0.4l8.0 4.2M1120.5 1068.5l2.6 -2.4l3.5 0.0M1119.5 1079.4l4.2 1.4l2.3 3.8M1119.5 1079.4l-4.7 1.1l-4.7 1.1l-4.5 2.0M1123.0 1095.5l-4.1 1.3l-4.2 -0.9M1114.7 1095.9l-3.5 -3.6l-4.3 -2.4M1105.6 1083.6l2.1 2.9l-0.8 3.4M1131.4 1082.8l-5.4 1.9M1102.6 1080.8l3.0 2.9M1095.7 1103.0l4.3 -3.8l1.0 -6.7l5.9 -2.6M1109.7 1110.8l-1.0 -5.9l5.0 -3.9l1.0 -5.1M1140.1 1101.9l-4.2 2.4l-4.7 0.4M1140.1 1101.9l2.8 4.1l4.8 1.2l3.7 2.9M1133.6 1124.0l5.1 -3.5l6.4 3.3l5.2 -3.0M1128.0 1111.0l0.8 -3.5l2.4 -2.8M1151.4 1110.1l1.5 3.2l0.5 3.5M1150.3 1120.8l3.0 -4.0M1143.3 1090.8l-1.9 3.5l-2.5 3.2l1.2 4.4M1123.0 1095.5l3.3 2.6l2.2 3.5l2.7 3.1M1150.7 1136.3l3.0 -5.2l-3.0 -5.2l-0.4 -5.1M1131.3 1129.5l2.3 -5.4M1113.8 1115.0l4.8 -1.1l5.2 0.1l4.2 -3.0M1167.2 1120.2l-4.6 -1.1l-5.2 1.2l-4.0 -3.5M1246.8 1169.7l4.6 -1.5l4.6 -1.5l4.8 -1.1M1246.8 1169.7l-2.0 -3.1l-1.5 -3.3l1.5 -3.8M1244.8 1159.5l1.4 -4.1l2.9 -2.7l3.7 -2.0M1260.8 1165.6l-0.1 -5.0l-1.2 -4.8M1244.8 1159.5l-4.8 -0.1l-4.2 -2.4M1231.6 1173.0l1.0 -4.0l-1.4 -3.2l-2.5 -3.0M1235.8 1157.0l-3.7 2.7l-3.4 3.1M1252.8 1150.7l-1.3 -4.2M1236.6 1144.5l4.6 3.3l5.4 -2.6l4.9 1.2M1214.3 1080.0l-5.9 0.9l-3.8 3.4l-2.5 5.2M1213.7 1097.7l3.5 -1.2l3.3 -1.8M1213.7 1097.7l-3.4 -2.2l-3.8 -0.8l-3.7 -1.4M1220.5 1094.7l1.0 -3.0l1.4 -2.8M1202.1 1089.5l0.7 3.8M1236.0 1081.5l-1.5 3.9M1236.0 1081.5l-0.9 -4.6l-2.1 -4.4l-0.7 -4.6M1234.5 1085.4l-3.0 4.0l-5.5 -4.2l-3.1 3.7M1232.3 1067.9l-1.2 -0.8M1214.4 1075.4l-0.1 4.6M1202.3 1069.5l-4.2 1.7l-0.7 5.4l-4.5 1.3M1192.7 1081.4l5.0 0.5l-0.4 6.8l4.8 0.8M1204.4 1112.3l4.0 -3.1l5.0 0.2M1213.4 1109.4l2.4 -3.8l-0.7 -3.9l-1.4 -4.0M1214.6 1040.3l5.7 0.0l4.6 2.2l3.3 4.7M1226.4 1056.4l-0.4 -4.6l2.7 -3.7M1228.7 1048.1l-0.5 -0.9M1228.2 1047.2l2.3 -7.5l-0.6 -7.9l0.1 -0.6M1201.9 1121.6l6.1 0.6l6.2 0.3l5.1 4.1M1214.1 1137.9l2.5 -1.8l1.8 -2.5M1219.3 1126.6l-0.3 3.5l-0.6 3.5M1214.1 1137.9l1.9 4.7l-2.0 4.6M1214.0 1147.2l3.7 2.6l4.3 1.3M1222.0 1151.1l1.2 -4.9l7.1 1.4l1.0 -5.1M1236.6 1144.5l-2.3 -2.2M1244.8 1130.4l5.1 0.4M1244.8 1130.4l-4.0 1.1l-1.6 4.2l-3.5 1.8M1249.9 1130.7l-0.2 4.2l4.1 2.6l0.1 4.1M1251.5 1146.4l2.4 -4.9M1235.7 1137.5l-1.4 4.7M1224.1 1160.1l4.7 2.7M1222.0 1151.1l-0.0 4.8l2.1 4.2M1231.3 1142.5l3.1 -0.3M1219.3 1126.6l1.8 -1.9M1213.4 1109.4l3.3 3.1l4.5 0.5M1221.2 1113.0l-2.9 3.9l1.8 3.9l1.1 3.9M1253.3 1125.9l-3.4 4.8M1253.3 1125.9l-2.7 -3.3l1.0 -4.2M1251.6 1118.4l-3.4 -3.0l-4.7 0.6l-3.8 -2.0M1244.8 1130.4l-1.5 -3.9l-1.1 -4.3l-4.8 -1.4M1235.7 1137.5l-1.4 -4.1l-3.6 -3.2l-0.1 -4.6M1237.4 1120.8l-4.2 1.3l-2.6 3.5M1230.6 1125.6l-4.6 -1.6l-4.8 0.7M1016.2 691.7l2.7 7.1l-1.0 7.2l-1.6 7.1M1016.3 713.1l3.0 2.1l3.8 0.1l3.2 1.6M1034.3 701.1l-2.8 5.2l-5.1 4.0l-0.1 6.6M1005.5 718.0l-2.9 -2.8l-2.8 -2.8M1016.3 713.1l-3.2 2.4l-2.9 3.1l-4.7 -0.6M999.8 712.4l-2.6 -3.0l2.8 -3.9l-1.8 -3.1M986.6 693.5l-0.2 7.4M998.2 702.4l-3.8 -1.5l-3.8 -1.5l-4.1 1.6M903.8 731.0l-4.5 1.1l-4.0 1.8l-2.5 4.1M903.8 731.0l-1.8 -4.5M886.0 728.8l3.7 7.8M889.7 736.7l3.1 1.4M899.0 749.2l-1.9 -3.9l-0.1 -4.7l-4.2 -2.6M904.0 747.4l-4.9 1.9M911.1 733.7l2.8 4.1l0.9 3.4M911.1 733.7l-3.1 -2.8l-4.2 0.1M914.2 728.1l-3.1 5.6M882.1 742.9l7.6 -6.2M974.3 819.8l2.8 -0.3l5.0 -0.1l4.9 -0.5M991.2 825.7l-2.7 -3.1l-1.5 -3.7M991.2 825.7l-0.6 2.2M1036.8 771.8l-4.3 -0.0l-2.8 2.8l-2.9 2.5M1037.5 765.5l0.9 3.3l-1.6 3.0M1015.6 771.7l1.3 -5.4l4.5 -4.4l-0.7 -6.1M1030.2 753.5l-5.0 -0.1l-4.5 2.4M1037.5 765.5l-2.8 -3.8l-3.6 -3.3l-0.9 -4.9M1015.7 772.0l2.5 4.4l5.3 -2.0l3.3 2.7M1005.5 718.0l-2.8 3.0l1.7 3.8l-0.6 3.4M1026.3 716.9l2.3 3.4M1022.1 734.8l-0.4 -6.0l5.0 -3.5l1.9 -5.0M1022.1 734.8l-3.9 3.7l-4.6 -2.0l-4.3 0.1M1003.8 728.2l1.7 2.9l3.6 1.6l0.2 3.9M1022.1 734.8l5.2 1.8l2.4 4.9l3.4 3.8M1008.7 749.7l5.2 -0.3l3.1 3.9l3.7 2.5M1030.2 753.5l2.7 -3.7l0.2 -4.5M1006.8 745.3l2.2 -4.1l0.3 -4.6M973.0 737.1l3.8 -2.9l4.2 1.1l4.2 0.3M988.0 730.8l-2.8 4.9M988.0 730.8l-4.9 -3.5l2.5 -7.3l-3.3 -2.4M986.6 753.9l-5.2 1.8l-3.8 -3.5l-4.2 -1.9M973.4 750.3l-0.2 -4.4l0.3 -4.4l-0.5 -4.4M989.7 748.4l-0.3 -4.7l-4.3 -3.3l0.1 -4.8M986.6 753.9l1.1 -3.0l2.0 -2.5M989.7 748.4l5.4 -2.5l6.1 1.2l5.6 -1.8M999.8 712.4l-6.2 1.7l-6.0 2.7l-4.5 -0.2M986.5 701.0l-5.5 1.5M1183.1 537.6l4.7 1.5l3.2 -2.9l3.3 -2.5M1183.1 537.6l-7.7 -6.6M1193.5 524.8l0.9 8.8M1249.8 486.9l5.0 7.3M1231.7 487.0l2.4 10.6M1254.9 494.2l-2.9 4.2l-4.4 2.6M1267.6 576.3l5.7 -2.6l4.7 -4.0l4.2 -4.7M1282.2 565.0l1.0 0.3M1272.6 587.0l-0.4 -4.2l-3.8 -2.5l-0.8 -4.0M1272.6 587.0l5.7 2.0l5.4 -1.0l5.4 -2.2M1283.2 565.4l1.6 6.9l1.3 6.9l3.0 6.6M1159.7 533.9l-0.1 -5.0M1183.1 537.6l-2.2 3.6M1159.7 533.9l3.1 2.3l1.7 3.3l2.4 2.9M1166.9 542.4l4.8 1.6l4.3 -4.4l4.9 1.6M1106.7 575.4l3.1 4.2l1.9 4.9l2.5 4.5M1114.2 589.0l4.9 1.6M1116.5 567.6l3.3 4.0l5.2 0.0M1116.5 567.6l-4.9 0.5l-3.2 2.7l-1.7 4.6M1125.0 571.6l-0.3 5.0l0.7 4.7l3.0 4.2M1144.7 575.0l-1.4 5.5l-2.8 4.5l-5.6 2.1M1128.4 585.5l3.4 0.0l3.1 1.6M1125.0 571.6l3.1 -2.7l4.9 1.5l2.8 -3.6M1144.7 574.4l-2.3 -3.4l-4.3 -0.9l-2.3 -3.3M1106.7 575.4l-3.5 1.2l-3.3 -1.7M1103.2 552.7l4.7 0.4l3.4 5.0l5.2 -1.5M1103.2 552.7l-1.8 3.4l-5.1 -1.4l-1.3 4.0M1099.9 574.9l-1.5 -5.5l-3.8 -4.7l0.4 -6.0M1089.5 536.3l-0.3 0.8l-4.3 8.5l-0.1 9.6M1101.7 539.1l-2.4 4.9l4.7 4.0l-0.8 4.7M1084.8 555.2l4.0 -0.5l3.0 2.3l3.2 1.7M1124.7 658.1l-1.2 -3.8l-0.7 -3.8l1.9 -3.8M1139.2 642.2l-4.3 3.1l-4.6 2.4l-5.6 -1.0M1132.4 666.5l-4.3 -1.2l-1.5 -3.8l-1.9 -3.4M1139.2 642.2l2.8 2.4l3.3 1.6l3.3 1.7M1140.7 664.3l4.0 -4.8l4.1 -4.7l-0.2 -6.9M1155.4 626.6l-0.4 7.1l-4.6 6.3l0.8 7.3M1139.2 642.2l2.6 -4.6l-2.3 -4.9l0.5 -4.8M1140.0 627.9l1.7 -2.1M1155.3 626.5l-4.5 0.6l-4.6 0.1l-4.4 -1.3M1148.6 647.9l2.6 -0.6M1873.7 402.4l-13.5 6.3M1879.4 425.7l-12.0 3.2M1867.4 428.9l-4.6 -5.9l0.5 -7.8l-3.1 -6.5M1860.2 408.7l-3.6 -3.2l-4.9 0.9l-4.0 -1.9M1824.0 389.2l6.4 6.3l6.0 6.7l8.5 3.4M1847.7 404.5l-2.7 1.1M1710.8 1324.9l7.8 -5.6M1654.0 1583.6l3.0 -4.0l5.5 3.0l3.2 -3.3M1649.3 1578.6l3.5 -3.4l1.2 -4.8M1654.0 1570.4l3.8 -1.0l3.5 2.0M1665.7 1579.3l-3.0 -3.5l-1.4 -4.4M1641.4 1592.1l3.7 -1.1l3.3 1.2l2.8 2.3M1640.1 1578.3l4.6 2.4l4.6 -2.1M1640.1 1578.3l-0.2 4.7l0.5 4.6l1.0 4.5M1652.0 1594.0l-1.0 -3.8l0.9 -3.4l2.1 -3.2M1646.8 1565.1l1.2 1.9l6.0 3.4M1640.1 1578.3l-2.6 -2.4M1663.5 1565.2l-2.2 6.2M1651.0 1608.1l-5.0 1.6M1642.8 1627.6l-2.4 -1.8M1646.0 1609.7l-2.0 5.3l-3.5 4.8l-0.1 6.0M1628.5 1634.7l0.5 -0.3l7.0 -9.2M1640.4 1625.8l-4.4 -0.6M2124.7 1368.3l3.9 3.1l6.0 2.7M2135.8 1380.2l-0.5 -3.1l-0.7 -3.0M2113.3 1395.7l2.4 -2.8l0.3 -3.7M2113.3 1395.7l2.7 4.4l5.4 0.7l3.4 3.5M2116.0 1389.2l4.7 -1.1l3.4 -3.4M2131.2 1399.5l-2.1 2.5l-2.1 2.5M2131.2 1399.5l-3.9 -4.1l1.8 -5.8l-2.2 -4.7M2126.9 1384.9l-2.8 -0.3M2108.6 1397.4l4.7 -1.8M2108.7 1381.3l7.3 7.9M2113.5 1415.2l2.9 -4.6l6.1 -1.1l2.3 -5.2M2142.1 1396.3l-3.7 1.1l-3.1 2.7l-4.1 -0.6M2133.1 1415.0l0.6 -5.0l-5.2 -1.6l-1.5 -3.9M2135.8 1380.2l-2.5 2.5l-3.7 0.1l-2.7 2.1M1630.1 1090.6l1.5 -1.8M1641.4 1106.6l-3.9 0.2M1630.1 1090.6l-1.3 5.0M1628.8 1095.6l0.5 5.6l6.6 0.8l1.6 4.7M1794.3 1291.9l3.5 4.7M1805.2 1283.5l2.4 5.0M1814.2 1278.3l-0.4 2.8l0.3 3.3M1811.6 1006.1l3.2 3.1l-0.2 4.5l2.0 3.6M1816.6 1017.3l-2.8 2.4l-2.4 2.8M1811.4 1022.5l-5.8 -0.4l-5.0 -2.3l-0.8 -0.5M1810.2 1030.4l0.9 -3.9l0.3 -4.0M1826.7 1018.8l-10.2 -1.5M1796.7 1033.1l2.2 -5.7l-2.6 -5.4l-0.1 -0.9M1827.0 990.4l-9.0 -3.2M1825.5 1001.6l-9.6 -1.3M1816.0 1000.3l-1.2 -4.5l-0.0 -4.6M1818.0 987.1l-3.2 4.0M1811.6 1006.1l3.3 -2.1l1.1 -3.7M1799.7 989.0l4.5 -1.9l5.1 4.4l5.5 -0.3M1808.0 1634.4l1.2 -4.4l1.9 -6.7M1794.0 1628.9l-1.5 -5.7l0.4 -4.6M1811.1 1623.3l-5.6 -2.3l-4.7 -3.4l-3.3 -3.8M1811.1 1623.3l5.3 -1.4M1772.9 1589.3l4.7 1.1M1835.7 1600.7l0.5 4.1M1852.2 1602.5l-2.5 4.4l-2.7 4.4l-4.4 2.9M1836.2 1604.8l0.2 4.4l6.3 0.3l-0.1 4.7M1856.0 1602.8l-3.8 -0.3M1843.2 1621.0l-0.9 -3.4l0.3 -3.4M1456.4 453.7l3.4 1.9l3.8 -0.2l3.6 1.0M1472.8 439.6l0.9 9.5M1467.2 456.4l2.9 -4.0l3.5 -3.3M1473.6 449.1l5.2 -1.0l3.7 5.6l5.2 -1.4M1497.4 454.3l-4.6 -0.6l-4.6 -0.7M1501.4 469.0l-1.3 3.2l-2.1 2.8M1521.7 477.2l-5.7 0.9l-1.1 6.7l-4.9 1.8M1498.0 475.0l3.1 4.8l4.8 3.1l4.1 3.7M1520.8 502.6l-2.5 -5.1l-5.0 -3.0l-3.7 -4.0M1501.5 495.5l4.0 -2.6l4.1 -2.4M1509.6 490.5l0.4 -3.8M1388.1 1075.3l1.6 2.1M1387.5 1087.7l0.9 -1.0l-2.1 -5.6l3.4 -3.7M1383.6 1090.3l-4.4 -0.0l-4.0 -4.9l-5.4 -1.2M1377.1 1072.6l-2.3 3.1l-2.1 3.6l-4.6 0.2M1377.1 1072.6l4.1 -0.7l3.3 2.3l3.6 1.1M1369.8 1084.2l-1.7 -4.7M1365.9 1097.7l-1.0 -3.5M1369.8 1084.2l-3.8 2.3l2.2 5.2l-3.4 2.4M1377.0 1068.2l0.1 4.4M1362.7 1067.6l-0.5 1.2l0.4 7.3M1368.1 1079.5l-2.3 -2.5l-3.2 -0.9M1367.6 1107.3l-2.1 0.6M1354.1 1104.8l4.2 -0.3l4.0 0.4l3.2 3.0M1354.1 1104.8l-1.9 -3.0l-2.6 -2.7l-0.1 -3.9M1530.9 1000.2l-0.8 -5.7l-2.9 -4.3l-4.5 -3.3M1516.3 1008.1l-2.7 -3.3l-2.9 -3.6M1512.9 993.4l3.5 -1.8l4.1 -0.9l2.2 -3.8M1541.4 979.1l-18.0 1.2M1523.3 980.4l-1.1 -2.1M1510.7 1001.2l-5.6 -2.5l-5.6 0.5l-5.5 2.2M1494.0 1001.4l-3.4 3.6M1422.7 1028.9l-3.7 -3.0l2.2 -5.8l-4.0 -2.9M1417.1 1035.4l3.9 -2.3l1.7 -4.2M1417.1 1035.4l-3.1 -3.4l-4.0 -1.9l-4.5 -0.8M1410.7 1018.2l3.2 -0.8l3.3 -0.2M1422.7 1028.9l3.7 2.3l3.3 -3.9l3.6 1.1M1433.3 1028.4l-0.4 -4.2l0.8 -3.8l3.0 -3.2M1436.7 1017.2l-4.2 -3.1l-5.5 -0.3l-4.3 -2.9M1853.2 871.5l5.7 1.2l2.0 5.0l3.3 3.9M1853.2 871.5l4.6 -3.5l4.3 -4.0l4.4 -3.8M1871.7 866.7l-0.2 -2.0l-1.7 -3.6M1870.2 877.1l-0.4 0.5l-1.1 3.9M1868.7 881.5l-4.5 0.0M1876.7 855.3l-6.8 5.8M1888.7 874.3l-8.6 -1.6M1876.7 893.3l-8.0 -11.8M1861.0 840.7l-1.8 3.9l-0.1 4.7M1859.1 849.3l1.7 4.1l3.3 3.1l2.4 3.7M1797.4 966.0l5.4 12.8M1853.2 871.5l-3.5 1.4l-3.5 -1.3M1839.7 863.7l3.8 1.1l-0.7 5.1l3.4 1.7M1846.2 871.6l-1.5 15.1M1338.3 1005.2l0.8 -1.1M1319.7 991.2l-2.6 3.5M1317.3 998.2l-0.2 -3.5M1319.7 991.2l4.8 -1.5l5.6 2.6l4.4 -3.7M1481.4 678.2l4.3 1.5l3.1 3.4M1481.4 678.2l-1.6 -4.1l-0.1 -4.5l-0.8 -4.2M1480.2 664.8l-1.3 0.6M1499.3 678.5l-1.2 3.5M1488.8 683.1l4.4 -2.8l5.0 1.6M1511.6 697.2l-10.9 -6.0M1498.2 681.9l0.4 4.9l2.1 4.4M1509.7 707.4l-3.2 -2.3l-13.1 -1.1M1478.9 665.4l-9.8 3.3M1455.8 657.0l0.2 -0.7l5.4 -6.4M1487.4 621.3l-1.8 0.3l-4.1 6.0l-5.3 4.5M1481.2 636.9l-5.0 -4.8M1462.6 720.3l1.6 -9.2M1488.8 683.1l-0.7 8.2l-5.8 5.5M1481.4 678.2l-6.4 1.1M1697.6 715.5l-0.7 -1.4M1697.6 715.5l-3.2 3.4l-1.9 4.1l-1.1 2.7M1696.9 714.1l-4.9 -3.9l-5.6 -1.4l-6.2 0.8M1684.6 726.8l-1.3 0.8l-3.6 -1.1M1676.9 722.5l2.1 -4.7l-1.4 -5.0M1676.9 722.5l2.8 4.1M1677.6 712.8l2.6 -3.2M1709.2 720.0l-11.6 -4.5M1716.2 707.8l-2.7 -1.8l-3.2 -3.7M1694.8 734.4l-0.6 -4.3l-2.6 -2.2M1706.0 732.6l-11.1 1.9M1665.6 723.8l11.2 -1.3M1662.0 712.4l15.7 0.4M1472.3 500.5l-5.3 -1.9l-3.7 4.1l-4.3 1.4M1459.0 504.1l-2.3 4.2l-0.7 4.8M1478.1 515.4l-2.4 -4.8l-1.8 -5.0l-1.6 -5.1M1478.1 515.4l-2.3 4.1M1497.0 514.2l-3.8 -1.0l-3.7 -1.3M1475.8 519.5l1.5 4.3l-1.9 4.2M1500.8 527.4l-0.9 1.6M1499.9 529.0l-2.8 2.8l-4.1 -0.1M1493.0 531.7l-5.6 -2.4l-5.7 -2.0l-6.3 0.7M1499.9 529.0l2.0 5.7l-0.4 6.6l5.2 4.4M1506.7 545.7l-5.2 4.3l-6.1 -0.0l-6.2 -0.5M1468.4 532.6l-6.3 0.3l-5.5 -2.3l-5.2 -3.4M1468.4 532.6l2.9 -2.7l3.7 -1.3M1456.0 513.1l-3.0 1.9l-2.9 2.2M1451.4 527.2l-2.3 -3.1l0.9 -3.5l0.1 -3.4M1509.1 547.0l0.4 4.7l-1.4 4.5M1508.1 556.2l4.4 1.0l2.1 3.8l2.5 3.2M1522.1 543.1l-1.0 5.2l1.5 4.3l3.9 3.5M1526.5 556.1l-3.4 2.4l-3.9 1.8l-2.1 3.9M1506.7 545.7l2.4 1.3M1523.7 540.7l-1.6 2.5M1540.2 541.5l-3.8 -0.8l-3.4 -2.1M1534.1 564.6l-0.1 -0.0l-7.5 -8.5M1517.9 569.0l-0.9 -4.9M1485.3 613.1l-3.2 2.1l-5.8 -1.3l-5.8 -1.1M1476.2 632.1l-4.4 -1.6M1467.7 616.3l2.5 4.4l0.8 4.9l0.8 4.9M1459.4 641.3l3.0 3.9l-1.0 4.7M1459.4 641.3l2.2 -5.2M1461.6 636.1l4.4 -0.1l3.4 -2.0l2.4 -3.5M1487.0 609.5l-1.9 -6.1l0.5 -7.6M1470.5 612.8l-0.2 -5.0l-3.2 -4.4l0.6 -5.2M1482.4 591.1l-0.9 1.0l-8.0 -2.2l-4.7 4.8M1468.8 594.7l-1.1 3.5M1186.8 1150.4l1.9 4.2l3.4 3.7l-1.9 5.1M1186.8 1150.4l4.0 -2.0l3.5 -2.9l4.1 -1.8M1198.4 1143.7l0.2 4.9l4.8 1.1l2.5 3.1M1194.5 1164.5l2.0 -4.8l4.3 -1.8l4.4 -1.7M1205.2 1156.2l0.7 -3.4M1178.2 1169.7l3.3 -3.4l4.1 -1.9l4.6 -1.0M1181.9 1146.7l3.3 0.7l1.6 3.0M1198.9 1136.8l-0.0 3.5l-0.5 3.4M1214.0 1147.2l-4.8 1.8l-3.3 3.8M1181.0 1182.8l-2.7 -3.8l-2.3 -4.1M1181.0 1182.8l4.8 -0.4l4.5 0.5l4.1 2.7M1200.5 1174.5l-1.4 4.0l-0.6 4.5l-4.1 2.6M1200.5 1174.5l-3.0 -2.8l1.5 -5.3l-4.5 -1.9M1211.8 1176.2l-3.5 -2.4l-3.6 -1.3l-4.2 2.0M1214.7 1163.5l-5.0 -0.1l-3.1 -2.5l-1.4 -4.7M1214.7 1163.5l5.1 -0.5l4.3 -2.9M1063.3 933.9l-3.7 -1.6l-3.3 -2.0l-0.6 -4.6M1074.1 920.6l-2.7 -4.6l-5.7 -0.1l-3.7 -3.0M1062.0 912.9l-2.4 2.5l-3.3 1.3M1067.5 934.0l4.8 -3.2l-3.1 -7.1l4.9 -3.1M1055.7 925.7l-0.2 -4.5l0.8 -4.5M1162.2 979.6l1.3 -5.0l1.5 -4.9l4.2 -3.5M1149.1 972.6l2.3 -5.1l-0.8 -5.7l1.6 -5.3M1152.2 956.5l-0.7 -2.6M1134.3 934.1l0.4 5.5l0.1 5.5l-4.1 4.5M1134.3 934.1l4.9 -1.3l4.1 5.4l5.1 -2.6M1148.4 935.6l4.2 5.4l-2.5 6.7l1.5 6.0M1199.9 974.2l0.0 -2.5M1219.3 979.4l2.3 -4.3l0.3 -4.9M1221.9 970.2l-2.6 -4.6l-6.1 -0.2l-2.8 -4.4M1173.0 1039.4l4.7 0.8l3.7 -3.0M1173.0 1039.4l0.4 4.4l-0.5 4.3l0.2 4.3M1181.4 1037.2l3.4 0.5l2.5 2.3M1187.3 1040.0l0.2 4.9l2.1 4.5l1.5 4.6M1191.1 1054.0l-3.5 3.6l-4.8 1.4M1170.9 1037.1l2.1 2.2M1162.2 1056.2l3.0 -3.1l4.8 2.1l3.1 -2.8M1198.1 1032.8l-3.2 3.0l-2.4 4.2l-5.2 -0.0M1194.8 1054.3l-3.8 -0.3M1181.7 1065.4l1.2 -3.1l-0.1 -3.3M1294.6 1003.3l0.4 -3.9l0.8 -3.9M1295.8 995.5l-2.3 -2.5l-0.5 -4.0l-3.9 -1.0M1317.1 994.7l-4.4 1.4l-2.2 -5.1l-4.0 0.2M1559.0 1048.3l0.3 3.4l-1.4 10.5M1554.6 1064.4l3.3 -2.2M1574.8 1051.9l-2.2 13.0M1585.6 1063.6l8.7 -0.5l2.0 0.8M1585.6 1063.6l-3.7 3.3l-4.4 2.5M1577.5 1069.4l8.7 4.9l7.2 6.9l0.2 0.3M1572.6 1064.9l2.5 2.1l2.4 2.4M1630.1 1090.6l-8.2 -2.7l-6.0 -4.1M1577.5 1069.4l-5.1 13.6l-1.6 2.2M1223.6 1200.3l2.2 5.4l-1.4 5.6l0.5 5.6M1223.2 1200.2l-4.0 3.9l-3.2 5.0l-6.4 0.5M1220.6 1218.0l4.3 -1.1M1220.6 1218.0l-3.4 -3.0l-5.3 1.4l-3.1 -3.6M1208.8 1212.8l0.8 -3.2M1187.2 1220.9l-2.5 -4.4l-5.3 0.2l-3.5 -2.7M1175.9 1214.0l-3.7 2.4l-0.6 4.5M1171.6 1220.9l4.7 3.1l1.2 4.8l0.7 5.1M1186.6 1232.4l-4.1 1.4l-4.3 0.1M1197.2 1214.9l3.4 -0.2l2.8 2.0M1204.8 1228.9l-2.5 -3.8l1.9 -4.4l-0.8 -4.0M1204.8 1228.9l-4.6 1.8l-4.0 2.8l-3.8 3.0M1192.4 1236.5l-3.8 -0.8l-2.0 -3.3M1197.2 1214.9l-3.0 2.5l-4.0 0.9l-3.0 2.6M1161.3 1224.7l4.3 1.2l2.1 -5.0l3.9 0.0M1165.0 1201.1l3.1 3.8l2.0 5.1l5.4 1.5M1165.0 1201.1l3.8 -3.9l6.3 -0.0l3.4 -4.6M1178.5 1192.6l5.8 0.8l1.9 5.5l3.6 3.3M1175.9 1214.0l-0.4 -2.6M1181.0 1182.8l-1.4 3.1l1.3 3.8l-2.4 2.9M1197.2 1214.9l-4.8 -2.9l2.1 -6.6l-4.2 -3.2M1190.3 1202.2l3.0 -2.3l3.5 -2.1l1.2 -4.0M1194.4 1185.6l3.8 3.2l-0.2 5.0M1173.0 1253.8l1.6 4.7l1.2 4.9M1173.0 1253.8l-4.6 0.7l-4.7 1.3l-4.6 -1.8M1167.5 1269.8l-5.0 0.8l-1.9 -5.3l-4.1 -1.2M1175.3 1264.5l0.5 -1.1M1159.1 1254.0l-2.8 2.9l-0.8 3.4l1.0 3.8M1173.4 1240.7l2.0 3.8l0.8 4.1M1155.7 1245.8l0.4 4.6l3.0 3.6M1168.8 1280.8l-2.4 -3.4l3.4 -4.2l-2.3 -3.4M1300.4 1103.6l-0.4 5.1l-2.0 5.1l3.3 4.9M1303.5 1099.4l-3.2 4.2M1320.3 1113.2l-2.6 -5.6l-6.4 -2.3l-2.6 -5.7M1320.3 1113.2l-3.3 3.0l-3.7 2.4l-3.9 2.1M1309.4 1120.7l-4.3 -0.1l-3.8 -1.9M1260.8 1165.6l3.5 1.0l1.4 3.4M1251.2 1183.5l4.2 0.3l4.0 -0.6M1259.4 1183.2l4.4 -3.3l-3.0 -6.8l4.9 -3.1M1235.1 1210.9l4.2 -0.3l1.8 4.5l3.7 0.7M1235.1 1210.9l-0.9 -4.4l-0.2 -4.5M1245.4 1201.7l0.2 4.7l1.7 4.7l-2.0 4.6M1226.9 1217.4l2.3 2.9l1.9 3.2M1238.8 1223.6l-3.8 -1.1l-3.9 1.0M1226.9 1217.4l3.4 -1.4l3.2 -1.5l1.6 -3.6M1230.5 1198.6l3.6 3.3M1230.5 1198.6l-3.6 0.2l-3.3 1.5M1230.5 1198.6l0.4 -4.1l2.3 -3.5l1.5 -3.8M1249.3 1198.5l-0.7 -3.5l-1.0 -3.4l-0.8 -3.4M1249.3 1198.5l-3.9 3.2M1379.8 1361.1l-1.5 -1.2l-5.7 0.7l-5.4 -0.4M1366.9 1419.2l-8.9 -4.8M1360.6 1403.3l-0.6 3.8l0.4 3.9l-2.4 3.4M1350.5 1423.0l3.3 -6.3M1353.8 1416.8l4.2 -2.4M1330.7 1232.9l2.0 3.6l4.6 1.7l1.0 4.4M1347.4 1240.4l-2.1 2.5M1338.3 1242.6l3.5 0.1l3.5 0.2M1321.4 1212.2l8.6 -0.7l7.5 0.4M1321.4 1212.2l0.1 -4.4l4.1 -2.3l1.0 -4.0M1326.6 1201.5l4.7 0.1M1398.3 1202.0l-4.7 -0.2l-1.9 -5.7l-4.7 -0.2M1398.3 1202.0l0.5 3.0M1384.3 1196.7l-5.5 6.4M1352.4 1259.2l-3.1 -5.1l-1.5 -5.9l-2.5 -5.3M1398.4 1164.0l0.1 2.2l-4.5 4.5M1394.0 1170.7l0.7 0.9M1406.8 1168.2l-0.2 1.3l0.9 4.9M1394.7 1171.6l3.9 2.3l4.4 0.4l4.5 0.1M1383.5 1171.4l-2.3 -2.6l-1.2 -3.3l-2.2 -2.6M1383.5 1171.4l0.8 4.4l-3.0 3.4M1381.3 1179.2l-3.7 0.7l-2.8 1.5M1376.7 1162.5l-7.6 5.7l-1.7 8.5M1385.5 1155.9l-2.8 0.8l-4.9 6.2M1394.0 1170.7l-3.6 -2.0l-3.4 1.8l-3.5 0.9M1389.9 1185.7l4.9 -2.1M1389.9 1185.7l-3.6 -1.2l-3.2 -1.8l-1.8 -3.5M1387.0 1195.9l-1.5 -4.1l5.0 -2.3l-0.6 -3.8M1384.3 1196.7l-2.1 -6.3l-2.7 -0.5M1380.3 1110.3l-1.1 1.9l-4.1 6.1l-1.6 7.2M1365.5 1107.9l1.9 4.9l-4.4 3.1l-1.0 4.1M1362.0 1120.0l2.6 4.3l4.9 -0.3l4.0 1.5M1380.1 1129.3l-5.2 -0.4M1319.0 1193.3l5.4 -4.7l1.0 -1.6M1348.9 1094.9l-1.8 -2.3M1339.9 1111.8l-4.8 0.7l-2.3 -4.6l-3.8 -1.4M1329.0 1106.5l-1.5 -4.6l2.5 -4.1M1330.0 1097.8l5.9 -1.3l4.7 -4.8l6.6 0.9M1320.7 1113.2l4.4 -0.2l0.6 -4.9l3.3 -1.6M1316.5 1093.4l3.3 1.8l3.4 0.4l3.6 -1.3M1315.1 1081.8l4.9 -0.6l4.2 -3.7l1.0 0.2M1326.8 1094.3l3.9 -4.6l-4.6 -6.2l2.7 -3.6M1218.2 1194.6l-4.2 2.4l-4.2 1.7l-5.0 -1.9M1218.2 1194.6l-2.5 -4.5l2.6 -4.9l-0.9 -4.6M1217.4 1180.6l-2.1 -0.8M1215.2 1179.8l-3.1 6.1l-7.6 2.0l-2.5 6.6M1204.8 1196.8l-2.9 -2.3M1209.6 1209.6l-3.3 -3.6l0.5 -5.0l-2.0 -4.2M1223.2 1200.2l-1.1 -4.0l-3.9 -1.6M1229.1 1178.4l-3.5 2.7l-4.5 -2.2l-3.7 1.7M1211.8 1176.2l3.5 3.5M1203.4 1216.7l2.9 -1.8l2.5 -2.1M1246.6 1094.8l2.6 -2.8l3.2 -2.2l2.6 -2.8M1237.3 1091.0l3.6 0.0l1.9 4.2l3.8 -0.4M1237.3 1091.0l-1.4 -2.8l-1.4 -2.8M1236.0 1081.5l6.1 1.6l5.9 0.2l5.6 -3.5M1255.0 1087.0l-1.9 -3.4l0.5 -3.8M1247.1 1062.9l3.9 0.3l2.1 4.4l4.1 -0.1M1257.2 1067.5l1.4 4.3M1253.6 1079.8l4.4 -2.8l0.6 -5.2M1301.3 1118.7l-2.5 1.8M1300.4 1103.6l-5.7 -0.8l-5.3 1.7l-5.2 2.1M1284.2 1106.6l2.7 3.6l-0.5 4.7l2.1 3.8M1246.6 1094.8l2.2 3.6l0.6 4.2M1249.4 1102.6l4.4 -0.7l3.6 2.6M1257.4 1104.5l0.8 -4.1l2.5 -3.1l2.8 -2.9M1246.1 1050.9l2.2 -4.3l4.3 -0.3l3.7 -0.7M1246.1 1050.9l-2.4 -3.7l-4.4 -0.6M1247.1 1062.9l2.2 -4.2l-4.8 -3.6l1.6 -4.2M1257.2 1067.5l4.3 -2.7l0.6 -5.1M1228.7 1048.1l3.2 -2.5l3.6 -0.6l3.8 1.6M1270.4 1056.6l-4.2 1.5l-4.1 1.6M1246.5 998.2l1.7 -0.9M1244.4 1002.7l4.3 6.4l-0.2 3.2M1225.7 1101.8l-0.5 3.6l-1.9 3.2l-0.9 3.5M1222.4 1112.1l5.5 3.2l5.7 -3.0l5.6 0.2M1234.5 1101.2l1.8 2.9l2.6 2.4l0.9 3.4M1239.8 1109.9l-0.5 2.6M1220.5 1094.7l1.1 4.6l4.1 2.5M1221.2 1113.0l1.2 -0.9M1237.3 1091.0l0.1 3.7l-4.4 2.4l1.5 4.1M1239.7 1114.0l-0.5 -1.5M1251.6 1118.4l2.0 -3.5l5.0 -0.5l1.2 -4.4M1259.8 1110.0l-0.9 -2.9l-1.5 -2.6M1053.5 726.5l-0.7 -4.7l0.8 -5.2l-3.7 -3.9M1053.5 726.5l-4.8 -0.3l-3.2 4.0l-4.3 1.0M1041.2 731.2l-4.4 -2.6l-4.4 -2.5l-1.5 -5.3M1037.4 743.3l2.0 -3.8l0.7 -4.2l1.1 -4.1M1037.4 743.3l4.1 3.2l4.6 0.9l5.0 -0.6M1059.0 730.7l-2.8 -2.0l-2.7 -2.2M1034.3 701.1l5.8 2.0l6.0 1.6l4.9 3.9M1028.6 720.3l2.3 0.4M1051.0 708.6l-1.1 4.1M906.9 775.9l7.6 -0.4M902.3 765.8l10.4 -0.4l4.7 -5.1M926.6 801.7l1.7 -2.4M1051.1 746.8l2.8 2.1l0.4 3.5M1069.9 730.8l0.2 4.8l2.0 4.4M1072.1 740.0l0.4 5.5l-4.7 2.7l-2.4 4.0M1059.0 730.7l3.7 -1.7l3.6 2.9l3.6 -1.1M1065.4 752.2l-3.7 -1.4l-3.7 1.0l-3.7 0.6M1037.5 765.5l6.2 0.1l4.5 -3.2l4.0 -4.4M1054.3 752.4l-0.0 3.2l-2.1 2.4M994.5 778.5l-3.1 0.8M994.5 778.5l1.1 -5.7l2.9 -4.4l5.2 -2.8M991.4 779.4l-3.5 -6.6l-1.9 -6.8l1.3 -7.5M987.3 758.5l4.5 3.8l5.5 1.1l5.7 0.3M988.8 788.3l2.2 5.4l4.1 2.7l5.6 1.0M1008.9 788.7l-3.2 2.4l-0.8 4.8l-4.2 1.5M1007.4 783.7l-3.3 -4.3l-6.0 2.7l-3.6 -3.6M989.7 780.8l1.7 -1.4M989.7 780.8l-0.5 3.7l-0.4 3.8M1015.6 771.7l-2.7 -4.6l-6.7 3.3l-2.5 -4.8M1015.7 772.0l-1.7 4.6l-5.4 2.0l-1.2 5.1M986.6 753.9l0.5 4.3M1008.7 749.7l0.4 5.6l-6.7 2.7l0.6 5.7M1011.8 854.3l2.2 -2.6M1014.0 851.7l-1.7 -5.2l-3.0 -4.8l-0.7 -5.6M1051.8 843.2l3.6 0.3M1055.4 843.5l2.2 -5.3l7.4 0.6l2.1 -5.4M1067.1 833.4l-0.4 -6.1l-7.6 -1.9l-0.0 -6.3M1044.7 837.4l-0.5 -4.2l0.7 -4.2M1044.9 829.0l6.3 -1.1l1.5 -7.9l6.4 -0.9M1032.0 796.2l-4.9 0.6l-5.3 -0.3l-3.7 4.3M1032.0 796.2l-2.7 -3.6l-2.0 -3.9l-1.4 -4.3M1025.9 784.4l-4.4 1.5l-4.6 1.1l-3.2 3.8M1026.8 777.1l-2.1 3.4l1.2 3.9M1008.9 788.7l4.8 2.1M1234.1 497.6l-1.3 3.7l-1.4 3.7l-2.4 3.2M1208.0 506.8l1.3 1.7M1209.3 508.5l6.6 2.0l6.5 -5.2l6.6 2.9M1250.6 514.3l-3.6 2.4M1247.0 516.6l-5.9 -1.1l-5.3 -2.6l-5.4 -2.3M1247.6 501.0l1.1 4.4l2.0 4.2l-0.1 4.7M1229.0 508.2l1.4 2.4M1254.9 494.2l5.1 0.7M1250.6 514.3l2.8 1.8l3.2 -1.0M1260.0 494.9l2.2 3.0l0.9 3.5l1.9 3.1M1256.6 515.1l1.9 -4.3l1.9 -4.2l4.6 -2.1M1260.0 494.9l5.4 -5.1l3.3 -2.9M1276.8 487.2l0.1 1.2l2.3 8.4l0.1 8.7M1279.3 505.5l-1.6 0.8M1265.0 504.5l4.1 1.8l4.1 1.8l4.5 -1.8M1342.4 453.0l0.8 7.1M1343.3 460.1l3.7 2.7l3.3 3.4l5.0 0.3M1424.9 454.0l-4.0 2.3l-4.1 -2.2l-4.0 0.1M1409.2 441.8l3.5 12.3M1423.1 471.3l-5.2 2.9M1436.6 488.5l-4.2 1.3l-4.0 -1.5l-4.1 -0.2M1437.4 486.5l-0.8 2.0M1424.3 488.1l-2.6 -4.4l-0.6 -5.3l-3.1 -4.1M1370.3 563.6l4.3 -6.6l2.0 -7.3l-0.3 -7.9M1361.6 562.0l4.1 2.3l4.6 -0.7M1360.0 559.9l1.7 2.1M1360.0 559.9l0.8 -5.2l2.5 -5.1l-2.5 -5.3M1256.6 515.1l2.3 3.4l5.1 1.0l0.6 4.9M1277.7 506.3l-3.1 4.9l-2.0 5.4l-1.1 5.7M1271.5 522.3l-3.8 -0.1l-3.1 2.2M1304.1 576.6l-3.4 5.1l-4.7 3.0l-5.9 1.5M1304.1 576.6l-2.2 -5.5l-4.1 -4.5l-1.4 -5.9M1289.1 585.8l1.0 0.4M1283.2 565.4l3.3 -3.7l4.9 0.4l4.2 -1.6M1347.9 514.6l-1.7 3.7l0.2 4.0l-0.8 3.9M1340.3 507.9l2.3 2.5l1.1 3.8l4.2 0.4M1326.5 516.0l5.7 -0.2l1.6 -6.8l5.1 -1.0M1325.4 522.3l2.0 -2.9l-0.9 -3.4M1325.4 522.3l4.5 1.5l1.8 4.8l4.1 2.1M1335.8 530.7l4.0 0.1l2.2 -3.7l3.6 -0.9M1360.8 544.3l-3.4 -0.9l-2.3 -2.6M1366.6 525.5l-3.7 3.0l-3.4 3.4l-5.1 0.5M1366.6 525.5l5.4 1.7l3.9 3.4l2.3 5.3M1378.2 535.9l-1.5 5.6M1355.1 540.8l1.0 -4.3l-1.7 -4.1M1304.5 554.8l-4.0 3.0l-4.1 2.9M1304.5 554.8l4.4 2.3l4.9 1.3M1313.8 558.4l1.5 4.3l0.3 4.6M1137.7 592.0l-1.7 3.7l-1.7 3.7l2.0 4.2M1137.7 592.0l6.0 -0.1l6.1 2.0l6.0 -1.4M1155.8 592.5l-1.1 4.8l-2.7 4.4l-0.4 5.0M1151.6 606.7l-3.9 0.8l-4.3 -1.4l-3.8 2.1M1121.8 603.6l-3.8 -3.7l4.0 -5.4l-3.0 -3.9M1134.9 587.1l2.9 4.9M1121.8 603.6l4.8 2.0l4.8 -0.5l4.9 -1.5M1159.6 589.3l-4.0 -5.7l-7.3 -2.4l-3.6 -6.2M1159.6 589.3l-3.7 3.3M1155.3 626.5l-0.1 -4.5l5.2 -1.8l0.3 -4.3M1137.8 614.9l0.3 -3.5l1.5 -3.2M1160.7 615.9l-1.0 -5.1l-5.9 -0.3l-2.2 -3.8M1189.9 620.5l-1.4 4.0l-2.4 3.5M1189.9 620.5l3.6 -1.4l3.9 3.6l3.5 -3.0M1200.9 619.7l5.2 1.5l2.6 4.1l2.2 4.5M1188.3 632.9l-2.1 -4.8M1188.3 632.9l5.0 4.5l6.0 1.4l6.6 -0.3M1210.9 629.8l-0.6 4.9l-3.4 3.5M1177.2 626.9l4.4 1.0l4.5 0.1M1183.6 643.1l-4.7 0.6l-4.8 0.3l-4.5 1.9M1168.3 635.7l2.2 3.2l-1.1 3.6l0.2 3.4M1183.6 643.1l0.4 -4.0l4.0 -2.2l0.3 -4.0M1200.9 619.7l0.9 -4.8l1.1 -4.7l2.8 -4.1M1186.2 608.5l0.5 4.2l3.9 3.2l-0.7 4.6M1186.2 608.5l2.3 -3.1l3.6 -1.2M1181.2 566.2l-5.9 0.2l-0.5 8.2l-6.0 0.2M1186.8 574.2l1.2 3.9l-2.3 3.0l-1.7 3.1M1184.0 584.2l-3.8 -5.2l-5.8 -1.8l-5.6 -2.4M1178.4 557.0l1.1 -3.9l3.0 -2.7M1182.5 550.4l3.8 1.0l3.3 2.8l4.2 -0.6M1181.5 565.1l-3.4 -3.4l0.3 -4.7M1181.5 565.1l4.4 -0.2l4.2 -0.8l3.9 -2.0M1194.0 562.1l-0.8 -4.3l0.6 -4.2M1159.7 533.9l-2.3 5.2l-6.5 -1.5l-3.1 3.9M1139.1 528.7l1.0 8.5M1140.1 537.2l4.1 1.8l3.6 2.5M1120.1 540.3l0.6 4.5l3.6 2.8M1140.1 537.2l-4.4 4.8l-7.1 0.6l-4.3 5.0M1135.8 566.8l-0.9 -4.7l1.4 -4.5M1116.5 556.6l1.1 -4.2l6.0 0.6l0.7 -4.6M1136.3 557.6l-2.8 -4.6l-3.7 -3.6l-5.5 -1.0M1163.9 554.9l1.1 1.6M1163.9 554.9l-4.8 -1.7l-4.9 -1.5l-5.3 0.8M1165.0 556.5l-2.9 3.7l1.1 4.3l0.0 4.2M1148.8 552.7l1.2 5.3l-2.6 5.8l3.5 5.0M1180.9 541.2l0.3 4.7l1.3 4.5M1178.4 557.0l-4.6 1.9l-4.3 -2.8l-4.5 0.4M1147.8 541.5l-2.2 3.9l3.2 3.4l0.1 3.7M1181.2 566.2l0.3 -1.1M1167.6 574.9l-1.1 -3.8l-3.3 -2.4M1136.3 557.6l4.3 -1.2l4.7 -0.4l3.5 -3.3M1144.7 574.4l4.2 -1.5l2.0 -4.1M1159.6 589.3l1.1 -0.2M1160.7 589.0l0.1 -5.8l1.9 -4.9l4.9 -3.4M1116.2 611.4l-1.5 0.3M1116.2 611.4l4.9 2.0l2.5 4.6M1114.8 611.7l-2.8 5.0l-2.4 5.3l-3.7 4.5M1123.6 618.0l2.5 3.6l0.3 3.9l-1.7 4.0M1105.9 626.5l4.8 2.8l2.5 6.0l6.0 1.3M1102.1 598.9l-0.1 4.8M1121.8 603.6l-2.6 4.1l-3.0 3.7M1102.0 603.7l3.0 4.6l5.4 0.9l4.4 2.5M1137.8 614.9l-4.9 0.1l-4.9 0.3l-4.4 2.7M1140.0 627.9l-5.0 1.7l-5.1 0.8l-5.2 -0.9M1124.7 646.7l-2.8 -2.8l-2.3 -3.2M1119.6 640.7l-0.5 -4.1M1102.1 598.9l-1.8 -4.9l-4.8 -2.2M1099.9 574.9l-3.2 2.3M1095.5 591.8l3.3 -4.6l-2.9 -5.1l0.8 -4.8M1047.3 661.8l3.7 -0.8M1046.5 634.9l0.7 1.3l5.5 4.4l5.2 4.6M1057.9 645.2l1.8 4.6l-3.3 3.3l-1.3 3.8M1051.0 661.0l4.1 -4.0M1819.6 439.5l-2.6 -2.1M1819.6 439.5l4.8 -5.3l4.6 -5.7l6.6 -3.2M1836.2 417.3l-0.0 4.0l-0.6 4.0M1844.9 405.6l-2.6 4.1l-3.7 3.3l-2.4 4.3M1817.7 389.8l-3.2 6.6l-1.8 2.4M1819.7 439.7l4.1 8.3l8.1 4.8l5.3 7.3M1835.6 425.3l3.2 6.3l4.8 4.4l6.5 2.8M1843.5 460.3l4.8 -6.4l-1.1 -8.1l2.9 -7.0M1867.4 428.9l-1.6 2.9l-0.6 3.2M1865.2 435.0l-4.8 2.3l-5.8 -2.0l-4.5 3.5M1579.1 431.1l13.1 -4.4l0.0 -0.1M1569.8 450.0l4.6 2.6l-1.5 6.7l4.9 2.3M1559.1 476.0l3.8 -1.8l3.1 3.7l3.6 -0.5M1569.6 477.4l2.5 -5.4l5.8 -3.7l-0.1 -6.7M1744.0 1241.6l5.4 -1.7M1744.0 1241.6l-7.2 -4.2l-4.0 -1.9M1688.3 1148.8l-0.7 14.4l0.1 3.9M1727.6 1252.5l5.1 -0.6l4.5 4.4l5.2 -2.1M1743.3 1255.5l-0.9 -1.3M1743.3 1255.5l-1.2 4.3l-3.4 3.6l0.6 4.8M1739.3 1268.2l-4.8 0.9l-5.0 -3.0l-4.7 2.7M1744.0 1241.6l-3.1 3.9l2.9 4.6l-1.4 4.1M1721.4 1245.1l0.2 0.5l1.9 4.2l4.1 2.7M1742.9 1273.8l-3.6 -5.5M1723.7 1269.6l1.1 -0.8M1641.4 1592.1l-3.8 2.4l-3.8 2.2M1646.0 1609.7l-4.4 -0.4l-3.8 -2.4M1633.8 1596.7l3.5 2.6l1.0 3.4l-0.5 4.2M1636.0 1625.2l-0.2 -4.6l-5.8 -1.0l-0.5 -4.5M1823.2 1612.2l-1.9 1.2M1823.2 1612.2l1.5 -3.5M1821.3 1613.4l-10.5 -2.3l-2.3 -3.0M1837.1 1622.3l-6.3 -1.1l-4.7 -3.2l-2.9 -5.8M1816.5 1621.9l3.9 -3.4l0.9 -5.1M1836.2 1604.8l-3.0 3.8l-4.3 -0.0l-4.2 0.1M1451.1 464.8l2.2 4.4l5.9 -1.0l2.6 3.7M1461.8 471.9l-1.1 4.0l-4.6 1.7l-0.9 4.1M1436.6 488.5l1.9 3.9l1.4 4.1M1439.9 496.5l4.5 2.3l4.2 -3.3l4.4 0.4M1453.0 495.9l0.9 -5.2l4.4 -3.0M1455.2 481.7l1.3 3.1l1.8 2.9M1472.3 500.5l0.9 -2.6M1473.2 497.9l-0.7 -5.2l-4.8 -1.6l-3.2 -2.9M1459.0 504.1l-0.6 -3.7l-5.3 -0.4l-0.1 -4.1M1467.2 456.4l1.3 4.0M1488.2 453.0l-1.5 4.8l-1.9 4.7l-2.4 4.5M1461.8 471.9l2.1 -0.4M1468.5 460.4l-3.0 3.1l1.1 4.8l-2.7 3.2M1414.3 530.3l-4.7 3.0l-6.3 -0.3l-4.0 4.3M1414.3 530.3l2.1 -4.2l-2.6 -3.5l-1.2 -3.6M1410.7 517.2l-5.7 0.0l-1.1 7.6l-5.8 0.0M1398.1 524.8l-1.7 3.3l2.5 3.8l-2.0 3.3M1399.3 537.3l-2.4 -2.1M1386.2 518.3l1.9 -0.6M1388.2 517.7l3.9 1.6l2.9 2.8l3.1 2.7M1380.6 534.3l2.1 -5.3l1.7 -5.4l1.8 -5.3M1400.5 544.1l2.5 3.5l3.6 2.2M1400.5 544.1l-2.8 4.8l-6.0 -0.9l-3.6 3.3M1406.6 549.8l-4.7 3.6l1.7 7.2l-4.9 3.4M1388.1 551.3l-0.2 4.9l1.3 4.7M1389.2 560.9l4.2 0.7l2.9 3.3M1399.3 537.3l0.8 3.4l0.4 3.4M1412.9 549.9l-3.2 -0.8l-3.1 0.7M1421.4 537.3l-2.8 4.2l-1.3 5.2l-4.4 3.2M1421.4 537.3l-2.0 -2.7l-1.2 -3.5l-3.9 -0.8M1376.7 541.5l3.1 4.1l5.5 1.2l2.8 4.5M1378.2 535.9l2.5 -1.6M1373.6 566.9l-3.3 -3.3M1373.6 566.9l5.9 -0.3l3.4 -6.5l6.3 0.8M1444.2 514.1l-4.0 2.9l-3.2 4.3l-5.5 0.3M1431.5 521.6l-2.3 -2.8l-3.3 -1.5M1425.9 517.3l-0.8 -4.4l4.4 -3.2l-0.7 -4.4M1438.1 501.9l-5.5 -0.6l-3.8 4.0M1450.1 517.2l-2.5 -2.5l-3.4 -0.6M1439.9 496.5l-1.8 5.4M1498.0 475.0l-3.4 0.1l-3.1 1.3M1491.5 476.4l-2.4 -3.5l-5.5 -0.2l-1.0 -4.9M1463.9 471.5l3.5 2.8l3.7 2.6M1482.6 467.8l-4.3 2.5l-3.9 2.9l-3.3 3.7M1464.5 488.2l-0.1 -4.9l3.7 -2.3l3.2 -2.5M1471.3 478.5l-0.2 -1.6M1396.8 1077.0l1.1 -3.7l3.1 -2.4M1401.0 1070.9l3.3 -0.3l3.0 -2.8l3.6 1.4M1413.2 1083.5l0.9 -1.9l-0.5 -4.8M1410.9 1069.2l1.1 3.9l1.6 3.7M1389.7 1077.4l3.6 0.1l3.5 -0.5M1401.0 1070.9l1.0 -5.1l-6.2 -2.2l0.3 -4.8M1388.1 1075.3l3.4 -5.2l-1.0 -5.6l0.0 -0.1M1394.7 1028.2l1.9 2.7l3.3 0.4M1383.0 1035.5l3.2 -3.6l4.5 -1.5l4.0 -2.2M1399.9 1031.3l-1.0 3.4l-0.0 3.3l0.8 3.4M1383.0 1035.5l-1.4 4.0l5.5 2.6l-1.9 4.1M1399.7 1041.4l-5.5 -0.5l-4.1 4.2l-4.9 1.1M1376.2 1031.9l-3.2 0.3l-2.8 1.3M1383.0 1035.5l-3.9 -0.8l-2.9 -2.8M1384.3 1047.4l0.9 -1.1M1425.0 1067.2l-3.0 -1.9l-1.3 -3.3M1425.0 1067.2l-1.7 4.8l0.5 5.1M1423.8 1077.1l-3.4 -0.8l-3.4 2.1l-3.4 -1.6M1420.7 1062.0l-3.5 1.2l-3.5 -1.4M1488.1 980.7l4.9 1.1l2.7 3.1l0.5 5.0M1488.1 980.7l2.9 -2.9l3.7 -2.3l-0.3 -4.9M1500.3 971.0l-5.9 -0.4M1505.9 980.0l-2.4 2.5l-0.3 3.6M1503.2 986.1l-3.0 2.8l-4.0 1.0M1512.9 993.4l-1.5 -4.8l-5.9 1.2l-2.3 -3.7M1521.7 977.9l-5.2 1.4l-5.1 1.9l-5.5 -1.2M1494.0 1001.4l-0.2 -4.0l4.1 -3.2l-1.7 -4.3M1490.4 1022.8l-5.5 1.3l-5.4 3.3M1486.2 1005.3l-1.2 -0.2M1479.5 1027.4l-4.0 -2.8M1463.5 1028.5l4.2 -0.9l3.7 -2.0l4.2 -1.1M1462.0 1010.7l-1.4 6.1l4.9 5.6l-2.0 6.1M1479.4 981.5l-3.7 2.1l1.7 4.8l-2.6 2.7M1485.0 1005.1l-2.5 -5.3l-6.3 -2.6l-1.4 -6.1M1448.9 1021.2l3.1 -3.3l3.1 -3.3l2.9 -3.4M1448.9 1021.2l-4.2 -0.3l-2.0 -5.3l-4.8 1.0M1437.9 1016.6l-0.7 -5.2l4.5 -3.0l1.6 -4.2M1452.9 1029.4l3.6 2.3l3.5 -1.0l3.3 -2.0M1462.0 1010.7l-4.0 0.5M1448.4 1035.0l3.2 -2.1l1.3 -3.5M1442.7 1036.3l5.7 -1.3M1442.7 1036.3l-2.7 -2.5l-3.6 0.1M1436.4 1033.9l-2.2 -2.4l-0.9 -3.1M1436.7 1017.2l1.2 -0.7M1422.9 922.2l-3.5 2.9l-4.5 -4.2l-3.5 2.8M1425.5 918.0l-0.8 2.6M1425.5 918.0l-5.4 -4.5l-1.1 -8.2l-6.8 -3.3M1411.4 923.7l-4.8 -1.6l-3.9 -3.4M1402.7 918.7l0.2 -6.2l5.2 -4.4l0.9 -6.0M1412.2 902.0l-3.2 0.1M1447.5 929.2l-2.6 3.6M1428.1 916.1l-2.6 1.9M1444.9 932.8l-3.9 0.1M1441.0 932.9l-6.4 -2.8l-5.0 -4.6l-4.9 -4.9M1418.8 898.0l-6.6 4.0M1443.3 1004.2l-0.5 -3.2M1422.7 1010.4l3.3 -2.9l-0.3 -4.7l2.5 -3.3M1442.8 1001.0l-4.9 -0.3l-4.5 -3.8l-5.2 2.6M1489.3 963.4l2.4 3.7l2.7 3.5M1489.3 963.4l-4.5 -0.4l-4.5 -0.1M1479.4 981.5l-2.9 -2.6l-2.2 -2.9l-0.7 -3.9M1473.6 972.1l1.4 -3.7l2.9 -2.5l2.4 -3.0M1476.4 954.7l-4.5 1.4l-3.9 -2.6M1479.0 949.8l-2.6 5.0M1466.0 939.9l-2.9 4.1M1473.6 972.1l-3.7 -1.8l-4.0 0.9M1465.9 971.2l-0.1 -3.9l0.8 -4.2l-3.1 -3.4M1480.3 962.9l-3.9 -3.2l-0.0 -5.0M1468.0 953.5l-3.0 2.6l-1.5 3.6M1406.2 938.6l-0.0 -0.6l5.2 -6.7l-0.0 -7.6M1422.9 922.2l-2.5 5.0l-1.0 5.1l2.6 5.3M1441.0 932.9l-1.4 4.7l-6.6 -1.7l-1.5 4.6M1422.0 937.6l4.8 1.3l4.7 1.6M1522.8 953.7l1.9 6.2M1507.9 954.5l0.7 8.4M1524.8 959.9l-4.1 1.9l0.2 4.6l-2.2 3.1M1508.6 963.0l2.9 2.8l3.3 2.3l3.9 1.4M1532.5 964.1l-0.6 -0.9M1530.4 961.1l-0.9 -1.4l-4.7 0.2M1500.3 971.0l2.7 -2.8l4.7 -0.7l0.9 -4.5M1521.7 977.9l-2.5 -3.9l-0.5 -4.5M1851.3 833.5l-3.5 0.8l-2.5 3.2l-3.8 -0.1M1841.5 837.4l-2.8 -3.2l-3.2 -2.8l-3.4 -2.5M1838.6 816.9l-2.3 1.6l-4.2 10.4M1838.8 850.2l1.5 -2.2l0.3 -5.4l0.9 -5.2M1859.7 838.8l-1.3 -1.5l-4.5 -0.5l-2.6 -3.3M1820.5 846.7l-2.2 -3.3M1835.0 852.9l-3.0 0.4M1830.1 853.2l-4.5 -3.5l-5.1 -3.0M1832.1 828.9l-4.5 -0.4l-4.5 0.9l-1.8 0.1M1818.3 830.8l-0.9 3.4l-1.8 4.5l2.6 4.7M1814.3 968.7l-3.4 8.2M1818.0 984.9l-1.1 -3.8l-5.2 -0.1l-0.8 -4.1M1818.0 987.1l-0.0 -2.2M1802.8 978.8l3.8 -1.8l4.3 -0.1M1826.7 870.6l-3.3 7.1M1822.4 865.7l-1.3 -4.1l-5.6 -0.6M1809.7 863.8l-2.8 6.4M1820.5 846.7l-3.3 4.2l-0.6 5.2l-1.1 4.9M1818.2 843.4l-4.9 0.5l-3.9 4.0l-5.2 -0.8M1802.3 857.3l-1.3 -3.7l3.7 -2.9l-0.5 -3.6M1802.3 857.3l2.7 4.4l4.7 2.1M1361.8 992.6l-2.8 1.7l-3.2 0.2M1361.8 992.6l3.2 4.1l5.4 1.8l3.1 4.2M1355.8 994.5l-2.1 5.3M1356.0 1005.8l5.0 1.2l4.5 2.1l3.0 4.4M1373.5 1002.7l0.1 3.5l-0.9 3.3l-1.4 3.1M1368.5 1013.5l2.8 -0.9M1350.5 1016.9l1.3 -4.0l0.7 -4.2l3.5 -2.9M1339.1 1004.1l4.5 -2.9l4.4 -2.9l5.8 1.5M1376.2 1031.9l-0.3 -5.3l1.3 -4.8l2.8 -4.5M1380.0 1017.3l-5.0 -1.0l-3.7 -3.7M1334.5 988.6l1.1 -1.2M1355.8 994.5l-3.7 -4.5M1352.1 990.0l-5.1 -3.6l-5.4 -1.3l-6.0 2.2M1352.1 990.0l-1.2 -3.6l1.0 -3.8l-0.4 -3.7M1336.7 977.1l3.7 -1.9M1335.6 987.3l0.1 -3.4l-0.1 -3.5l1.1 -3.3M1433.4 704.4l5.6 -5.0M1433.4 704.4l-7.9 1.7l-5.2 0.6M1418.0 698.6l3.1 -2.6l12.5 -7.4M1446.1 717.1l1.4 -1.9l3.9 -7.6M1411.0 683.9l4.2 -2.2l9.3 -4.3M1484.7 549.8l3.0 1.0M1484.7 549.8l-4.1 -0.9l-3.5 1.4l-3.5 1.9M1487.7 550.8l0.1 7.0l1.1 1.1M1473.6 552.2l-0.3 3.8l-0.7 3.7l-3.7 2.2M1489.2 549.5l-1.5 1.3M1475.0 528.6l2.2 7.5l2.7 7.3l4.8 6.4M1465.3 542.9l2.2 -3.1l-2.4 -4.5l3.3 -2.7M1465.3 542.9l4.5 1.5l0.7 5.0l3.1 2.8M1508.1 556.2l-3.4 5.5M1456.7 547.4l0.7 4.8l-0.1 5.0M1457.3 557.2l4.7 -0.5l3.9 1.4l3.0 3.8M1459.5 588.4l3.1 2.2l2.2 3.5l4.0 0.6M1457.7 576.4l-2.0 4.4l0.9 4.0l2.9 3.6M1457.7 576.4l4.3 -2.8l4.5 -2.2l2.9 -0.6M1467.7 616.3l-4.2 0.3l-4.2 -0.3M1459.3 616.3l-1.3 3.8l-4.7 0.8l-1.5 3.7M1467.7 598.2l-6.2 0.6l-4.3 5.0l-5.6 1.8M1459.3 616.3l-1.0 -4.7l-6.7 -0.6l-0.0 -5.4M1330.5 729.0l-2.7 2.9l-1.4 5.6l1.7 6.4M1330.0 728.5l-2.0 1.3l-4.1 -4.7l-4.4 1.4M1317.3 737.5l0.9 4.8l6.6 -1.0l1.1 4.6M1328.1 743.9l-2.2 2.0M1343.9 744.8l-15.8 -0.8M1271.6 684.1l-1.7 -4.7l2.5 -5.5l-3.4 -4.4M1271.6 684.1l5.4 2.4M1276.9 686.5l3.8 -1.0l3.3 -2.0l2.8 -2.8M1279.8 668.4l-3.8 -1.8l-3.6 0.8l-3.4 2.1M1286.8 676.5l-0.0 4.1M1300.8 664.8l-5.0 3.5l-6.2 2.1l-2.8 6.1M1284.6 657.4l4.8 3.8l4.9 3.4l6.5 0.2M1284.6 657.4l-3.6 2.8l1.9 5.2l-3.1 3.0M1295.5 687.3l7.3 -4.6M1116.0 941.1l0.4 -3.1M1134.3 934.1l-2.6 -2.3l-1.5 -3.1M1130.2 928.7l-4.5 3.2l-4.9 2.7l-4.4 3.4M1043.4 912.7l-3.8 1.6l-2.6 3.3M1037.0 917.6l-4.7 -7.8M1040.4 898.5l-5.8 1.3l-0.4 -0.1M1035.7 922.4l-0.3 2.5M1035.7 922.4l-2.4 0.9M1028.6 925.0l-6.0 1.2l-6.9 -0.8M1015.7 925.4l0.7 4.6l3.9 4.0l-1.9 5.1M1018.4 939.1l3.9 3.2M1056.3 916.7l-4.5 -0.8l-4.6 -0.4l-3.8 -2.8M1037.0 917.6l-1.3 4.7M1011.3 921.6l4.4 3.9M1005.0 944.9l5.3 -4.7l8.1 -1.1M1025.3 951.7l0.1 -0.7l-3.1 -8.7M1030.4 878.4l2.9 -0.4l2.1 0.1M1026.1 868.5l1.9 -2.6l2.7 -8.3M1038.4 874.4l-2.0 -2.6l2.4 -8.3l-3.1 -6.7M1035.7 856.8l-1.3 -0.7M1014.0 851.7l4.6 4.6l6.3 0.1l5.8 1.2M1027.8 840.0l-3.1 5.7l-7.3 0.7l-3.4 5.3M1033.2 842.6l-5.3 -2.6M1033.2 842.6l-0.8 4.6l0.2 4.5l1.8 4.4M1051.8 843.2l-1.6 4.4l-4.7 3.0l-0.1 5.2M1045.4 855.8l-5.0 -0.6l-4.7 1.6M1044.7 837.4l-3.0 3.6l-5.0 -0.8l-3.5 2.4M1151.6 953.7l7.0 -2.5l5.3 -6.1l7.8 -0.8M1169.2 966.2l4.8 0.5l3.5 -3.3M1171.7 944.3l2.0 6.3l-1.0 7.3l4.8 5.5M1181.7 978.6l-0.2 -4.8l1.5 -5.0l-3.3 -4.4M1199.9 971.7l-3.3 -4.1l-5.9 -1.0l-2.8 -4.7M1187.9 961.9l-4.7 -0.5l-3.5 3.0M1179.7 964.4l-2.2 -1.0M1500.0 1026.3l-1.6 0.9l-2.6 4.8l-4.3 3.0M1491.5 1035.0l-3.2 -1.4l-3.9 2.7l-3.0 -2.9M1423.8 1077.1l2.3 1.0M1465.5 1035.2l3.0 2.3M1463.3 1028.7l1.0 3.3l1.2 3.2M1481.4 1033.4l-2.9 4.7M1468.5 1037.5l4.9 1.0l5.0 -0.4M1491.5 1035.0l2.0 4.0l-1.5 4.1M1483.9 1044.2l-3.0 -2.7l-2.4 -3.3M1448.4 1035.0l0.7 5.0l4.4 2.6l2.5 3.8M1465.5 1035.2l-1.2 4.9l-2.3 4.1l-4.9 2.1M1457.1 1046.3l-1.1 0.1M1442.7 1036.3l1.0 3.9l0.8 3.9l-2.4 3.7M1442.1 1047.8l2.7 1.8M1456.0 1046.4l-0.6 0.8M1431.7 1052.4l3.4 3.4l1.9 4.4M1431.7 1052.4l-1.7 -0.7M1420.7 1062.0l1.4 -5.0l6.3 -0.5l1.6 -4.8M1425.0 1067.2l3.4 1.3l3.4 -1.5M1431.8 1067.0l3.1 -3.0l2.1 -3.8M1516.3 1101.6l-1.1 0.0M1513.3 1081.9l-1.8 0.6M1511.4 1082.5l-1.7 4.0l-1.8 4.0M1515.2 1101.6l-2.6 -2.2l-2.6 -2.1M1651.8 1117.2l-9.0 5.5M1637.5 1106.7l-4.0 5.4M1412.0 1161.6l2.3 1.2l4.2 -2.3l1.3 -0.6M1319.8 1162.8l-2.5 1.3l-5.0 -2.8M1317.2 1176.7l4.3 2.2M1317.2 1176.7l-4.3 -2.1l-4.2 -2.2l-1.4 -5.1M1312.3 1161.3l-2.5 3.0l-2.5 3.0M1270.9 1208.6l-3.9 -2.8l3.1 -5.3l-3.1 -3.0M1270.9 1208.6l-2.4 5.5M1268.5 1214.0l-2.4 1.7M1255.0 1211.3l1.7 -3.6l-4.2 -3.3l2.2 -3.6M1254.7 1200.8l3.6 -2.8l4.2 -1.0l4.5 0.5M1246.8 1216.1l3.6 -3.3l4.6 -1.5M1254.6 1227.0l-4.1 -2.5l-3.6 -3.0l-0.1 -5.4M1254.6 1227.0l3.4 -1.9l3.5 1.5M1261.5 1226.6l1.3 -3.7l1.3 -3.7l1.9 -3.5M1246.8 1216.1l-1.6 -0.4M1249.3 1198.5l5.4 2.2M1268.5 1193.2l-1.5 4.3M1286.2 1221.1l-3.1 2.0l-3.6 0.4M1286.2 1221.1l2.3 -3.2l-1.2 -3.8l0.6 -3.5M1270.9 1208.6l5.1 1.0l5.0 -1.9l5.1 0.3M1287.9 1210.6l-1.8 -2.7M1276.7 1172.8l-3.1 -1.6l-3.2 -1.3M1276.7 1172.8l2.3 -4.6l3.4 -3.7l3.7 -3.5M1270.4 1169.9l2.1 -6.3l-0.2 -7.1l3.8 -5.8M1286.1 1161.0l-2.0 -4.8l-3.2 -3.5l-4.8 -2.0M1268.5 1193.2l2.2 -1.0M1270.7 1192.1l1.0 -6.2l3.6 -5.0l3.3 -5.1M1265.7 1170.0l4.7 -0.1M1278.6 1175.8l-1.9 -3.0M1274.1 1149.0l1.7 0.9M1259.5 1155.8l5.1 -1.7l4.8 -2.3l4.7 -2.8M1279.5 1223.5l-1.5 3.0l-1.2 3.2M1261.5 1226.6l1.2 1.5M1262.7 1228.1l4.9 -0.9l4.3 4.0l4.9 -1.5M1295.6 1229.8l-3.0 2.5l-4.1 1.6l-0.8 4.6M1295.6 1229.8l-3.0 -3.1l-4.0 -1.9l-2.4 -3.7M1287.7 1238.5l-4.7 0.1l-4.0 -2.3M1279.0 1236.3l-0.4 -3.5l-1.8 -3.1M1192.9 1240.7l2.1 2.6l2.4 2.3M1192.9 1240.7l-5.0 0.9l-3.3 2.7l-1.0 5.1M1197.4 1245.6l0.9 4.7l-0.2 4.5l-3.2 3.8M1183.6 1249.4l2.5 3.2l-0.1 4.6l3.3 2.7M1194.9 1258.6l-3.9 2.0M1176.2 1248.6l3.7 0.7l3.7 0.1M1192.4 1236.5l0.6 4.1M1175.8 1263.4l4.9 0.3l3.9 -3.2l4.7 -0.6M1348.4 1387.7l0.6 4.1l2.9 7.7M1360.6 1403.3l-3.7 -3.2l-5.0 -0.6M1353.8 1416.8l-4.7 -2.2l-0.8 -6.5l-4.7 -1.1M1301.4 1230.6l3.0 4.7M1304.4 1235.3l5.6 2.6l6.0 -0.7l5.9 0.6M1318.0 1222.5l5.1 1.8l2.1 4.0l0.6 5.0M1325.8 1233.3l-2.9 1.5l-1.0 3.0M1299.2 1229.4l2.2 1.2M1290.0 1249.5l-2.5 -3.3l0.7 -4.0l-0.5 -3.7M1290.0 1249.5l4.3 -3.6l5.4 4.8l4.3 -3.1M1304.0 1247.6l-0.4 -4.1l-0.7 -4.2l1.5 -4.0M1304.9 1248.4l-0.9 -0.8M1320.2 1245.6l-5.2 0.4l-4.8 2.8l-5.3 -0.4M1320.2 1245.6l1.9 -3.7l-0.2 -4.1M1409.9 1179.0l-3.0 3.5l-2.0 4.3M1419.7 1178.6l2.7 2.9l1.5 3.8l3.7 2.0M1406.3 1194.1l0.0 -3.8l-1.4 -3.5M1406.3 1194.1l8.7 0.7l2.0 1.5M1428.1 1188.6l-0.5 -1.3M1394.7 1183.6l3.7 0.2l3.0 2.5l3.5 0.5M1407.5 1174.4l2.4 4.6M1423.9 1168.5l-0.3 2.2l-0.3 4.5l-3.6 3.4M1434.0 1180.7l-0.5 4.5l-5.9 2.1M1428.4 1169.8l0.1 0.1l4.0 4.0M1384.6 1143.9l-1.4 -0.5l-6.7 2.3M1374.9 1128.9l-3.2 2.6l0.2 4.1M1376.5 1145.7l-2.6 -2.9l0.0 -4.1l-2.0 -3.1M1325.9 1147.2l4.1 -1.5l3.0 -3.4M1325.9 1147.2l0.5 4.6l0.2 4.6l0.2 1.8M1337.4 1163.3l2.2 -3.9l3.9 -2.8M1343.5 1156.6l-4.6 -2.9l-0.2 -4.8l-0.5 -4.6M1354.1 1104.8l-1.4 4.8l-0.9 4.9M1339.9 1111.8l2.4 4.6M1342.3 1116.4l4.7 -1.2l4.8 -0.7M1371.9 1135.6l-5.0 -0.5l-3.6 3.6M1351.7 1134.5l3.7 2.0l4.0 1.0l3.9 1.2M1351.7 1134.5l-0.3 -1.2M1362.0 1120.0l-1.3 0.3M1351.4 1133.4l0.9 -5.9l3.8 -3.9l4.6 -3.3M1351.8 1114.5l3.4 1.3l3.7 0.8l1.8 3.7M1354.8 1076.7l-3.0 2.4l-0.2 0.8M1354.8 1076.7l-1.4 -8.1l-1.1 -2.3M1362.6 1076.1l-3.9 -0.3l-3.9 0.9M1281.0 1128.7l-3.5 3.9l-5.8 1.2l-2.8 4.8M1281.0 1128.7l-0.2 -1.9M1280.8 1126.8l-3.5 -3.2l-5.6 -0.6l-1.8 -5.4M1267.0 1137.7l-2.6 -3.4l-2.0 -3.4l1.1 -4.6M1267.0 1137.7l1.9 0.9M1263.5 1126.3l1.2 -3.6l3.9 -1.5l1.3 -3.6M1274.1 1149.0l-2.9 -2.9l-1.6 -3.5l-0.7 -4.0M1285.8 1133.2l-3.4 -1.2l-1.4 -3.3M1285.8 1133.2l-2.4 3.7l0.3 3.5l2.5 3.5M1285.8 1133.2l3.9 0.4l3.7 -0.4l3.5 -1.9M1296.9 1131.3l2.0 -3.4l-1.0 -3.9l0.8 -3.6M1288.5 1118.7l-3.6 1.8l-2.4 2.8l-1.7 3.5M1284.2 1106.6l-4.6 -2.3M1269.5 1114.8l0.4 2.8M1253.9 1141.6l4.3 -1.5l3.8 -3.5l5.0 1.1M1259.8 1110.0l2.4 3.4l3.3 1.4l4.0 0.0M1278.5 1099.2l-1.9 -4.0l-4.7 0.4l-2.9 -2.4M1269.0 1093.2l3.9 -4.9l-4.0 -6.4l3.1 -5.1M1287.8 1088.2l0.6 -5.4l-3.8 -3.9M1284.6 1078.9l-3.6 -2.3l-4.1 -1.4M1276.9 1075.2l-4.9 1.6M1263.5 1094.4l5.5 -1.2M1279.7 1104.3l-1.2 -5.0M1299.3 1091.4l-3.1 -3.7l-4.3 0.6l-4.1 -0.1M1258.6 1071.8l4.6 1.4l3.4 4.5l5.4 -0.9M1296.7 1070.9l-4.9 1.4l-4.0 2.6l-3.2 4.0M1279.5 1061.8l0.5 4.7l0.5 4.7l-3.6 4.0M961.7 805.4l6.1 -1.5l7.6 -1.5M962.4 787.3l4.2 -1.6M966.6 785.7l3.9 4.3l5.0 3.5l2.5 5.6M975.4 802.4l2.5 -2.4M972.5 817.3l0.4 -3.2l4.2 -5.3l-1.7 -6.4M988.9 808.7l-2.2 -4.7l-4.6 -1.8l-4.2 -2.2M1001.2 805.8l-1.9 -4.1l1.4 -4.3M988.8 788.3l-4.0 3.1l-4.7 2.6l-2.1 5.1M988.9 808.7l4.8 1.9l2.7 -6.5l4.8 1.7M973.4 750.3l-3.7 0.4l-2.2 2.9l-2.7 2.0M963.9 754.3l0.9 1.3M1133.6 732.2l-3.2 4.1l-4.3 2.4l-5.0 1.0M1133.6 732.2l3.0 1.7l2.7 1.9l1.9 2.9M1140.9 751.4l-1.5 -4.3l-1.1 -4.2l2.9 -4.2M1140.9 751.4l-3.3 0.5l-3.5 0.1M1134.1 752.0l-4.3 -4.2l-5.9 -2.4l-2.8 -5.7M1026.6 819.8l-4.5 -3.0l-4.1 -3.4l-4.6 -2.8M1026.6 819.8l-0.4 3.7l-3.6 2.4l0.2 3.8M1022.8 829.7l-4.9 -0.9l-3.5 3.7l-4.3 1.0M1010.1 833.5l-1.2 -4.5l-3.2 -3.4l-2.4 -3.9M1003.3 821.7l1.2 -3.7l0.9 -3.8l2.5 -3.1M1007.9 811.1l5.5 -0.5M1018.1 800.8l-1.7 3.2l-3.5 2.4l0.5 4.2M1033.0 796.7l1.7 3.9l2.8 3.6l-0.4 4.7M1037.1 808.9l-1.9 3.3l-3.2 2.4l-1.1 3.7M1030.9 818.3l-4.2 1.4M1030.9 818.3l4.5 3.8l5.4 2.5l4.1 4.4M1008.6 836.1l1.4 -2.5M991.2 825.7l4.8 1.0l2.3 -6.5l5.0 1.5M1001.2 805.8l3.3 2.7l3.4 2.6M1194.3 533.7l2.8 1.2M1197.1 534.8l-0.4 5.1l5.7 2.1l0.5 4.7M1267.6 576.3l-1.9 -1.2M1276.7 557.9l4.3 2.4l1.2 4.7M1276.7 557.9l-4.6 -0.1l-3.8 4.2l-4.9 -2.0M1248.7 577.4l2.6 5.3l-1.0 5.8l1.2 5.5M1269.2 592.5l-6.1 -2.0l-5.8 2.0l-5.8 1.5M1272.6 587.0l-1.8 2.7l-1.6 2.8M1265.7 575.1l-5.6 1.1l-5.9 -1.2l-5.5 2.3M1413.2 473.6l-4.5 3.1M1413.2 473.6l0.1 -5.5l-1.9 -5.0l-2.3 -4.9M1408.7 476.7l-5.5 -2.3l-5.4 -2.4l-5.3 -2.6M1409.1 458.2l-5.1 -1.4l-5.1 0.5l-5.1 1.3M1391.2 465.1l1.2 4.3M1418.0 474.3l-4.8 -0.6M1393.3 456.1l0.5 2.5M1424.3 488.1l-3.8 3.1l-1.5 5.5l-5.3 1.6M1408.7 476.7l-2.1 4.7l1.7 6.0l-4.5 3.9M1403.8 491.3l5.0 -0.1l0.4 6.4l4.5 0.7M1388.2 517.7l0.4 -4.2l3.1 -1.8l3.2 -1.9M1410.7 517.2l-0.9 -2.8M1394.9 509.8l4.1 4.3l5.9 -1.7l4.9 1.9M1428.8 505.3l-5.6 -0.4l-5.2 -1.0l-4.0 -4.5M1412.6 519.0l4.7 1.2l4.4 -0.4l4.2 -2.5M1409.8 514.3l3.1 -4.5l-2.9 -6.2l4.0 -4.2M1414.0 499.4l-0.4 -1.2M1344.1 498.9l-1.4 -3.6l-3.2 -2.8l-0.9 -3.9M1344.1 498.9l3.8 -1.8l4.8 1.7l3.3 -3.4M1356.0 495.4l0.9 -4.5M1356.8 490.9l-4.6 -3.0l-4.1 -3.5l-4.2 -3.6M1343.9 480.8l-3.3 0.6M1343.3 460.1l-5.5 3.4l-4.4 2.4M1355.3 466.5l1.0 1.7M1340.6 481.5l-4.0 -4.1l-2.5 -4.0M1338.9 508.0l-2.8 -5.3l-5.3 -2.9l-4.1 -4.1M1340.3 507.9l0.6 -5.1l3.2 -3.9M1338.6 488.6l-3.5 3.2l-4.4 1.5l-4.0 2.4M1326.5 516.0l-4.2 -3.0l-2.2 -4.6l-2.7 -4.1M1326.7 495.7l-4.6 -0.4M1317.4 504.3l2.5 -2.5l-1.3 -4.5l3.5 -1.9M1322.1 482.6l-1.1 2.2l-0.2 7.7M1310.5 488.5l3.5 -0.1l6.8 4.1M1322.1 495.4l-1.3 -2.8M1392.5 469.4l-0.7 4.6l-3.1 3.7l-0.8 4.5M1387.9 482.2l-0.6 4.9l2.4 3.3l4.0 2.4M1394.9 509.8l1.6 -5.3l-5.2 -3.7l0.3 -5.0M1393.7 492.8l-2.1 3.0M1354.2 512.8l2.5 5.1l4.7 1.8l5.0 1.6M1354.2 512.8l1.8 -3.4l-0.3 -4.8l4.4 -1.9M1360.1 502.7l4.9 -1.2l4.5 3.3l4.9 -0.8M1366.4 521.3l4.6 -2.3l0.9 -5.3l3.4 -3.3M1375.3 510.4l0.5 -3.4l-1.4 -3.0M1347.9 514.6l3.2 -0.8l3.1 -1.0M1366.6 525.5l-0.2 -4.2M1356.0 495.4l1.3 4.1l2.8 3.2M1386.2 518.3l-2.0 -4.9l-5.7 0.2l-3.2 -3.2M1376.3 501.0l5.6 -0.2l4.9 -2.4l4.8 -2.6M1155.4 626.6l4.4 2.9l4.7 2.4l3.8 3.8M1169.6 645.9l-3.2 5.1M1163.9 651.6l2.6 -0.6M1248.7 577.4l-5.3 0.5l-5.4 0.4l-5.2 1.2M1230.9 588.7l0.7 -4.7l1.2 -4.5M1248.6 598.0l-3.3 0.3l-2.2 2.5M1230.9 588.7l2.8 3.6l2.7 3.7l2.2 4.0M1243.1 600.8l-4.5 -0.9M1269.2 592.5l2.0 3.6l2.4 3.5l-1.8 4.4M1248.6 598.0l3.6 3.6l1.7 5.6l5.5 1.7M1259.4 608.9l5.2 1.0l4.0 -1.9l3.2 -4.0M1293.7 597.0l-3.6 3.4l-1.0 5.7l-5.3 1.9M1283.8 608.0l-3.8 1.1l-4.0 -0.7M1271.8 604.0l2.4 1.9l1.8 2.5M1276.0 608.4l-4.5 4.3l0.9 6.2l-1.8 5.3M1270.6 624.2l-4.6 -1.0l-3.8 -3.2l-4.8 -0.2M1243.1 600.8l2.4 7.5l-2.7 8.1l3.0 7.4M1257.4 619.8l-3.6 2.1l-3.6 2.1l-4.4 -0.2M1253.5 639.8l-2.0 -5.4l-2.1 -5.3l-5.0 -3.5M1233.2 628.0l4.3 2.0l2.7 -6.0l4.2 1.6M1233.2 628.0l2.1 5.2l-3.9 4.5l-0.2 4.9M1253.5 639.8l-3.2 5.3l-7.2 0.7l-3.0 5.5M1231.2 642.6l3.7 2.1l2.6 3.4l2.6 3.2M1166.4 651.0l3.0 4.3l3.2 4.2l4.3 3.1M1192.0 654.6l-4.7 3.2l-4.9 3.0l-5.5 1.8M1205.9 638.5l-4.8 5.0l-1.3 7.5l-6.0 4.0M1192.0 654.6l1.8 0.4M1457.7 576.4l-3.9 -1.7M1453.8 574.7l-0.8 -3.6l-4.6 -1.7l0.8 -4.3M1457.3 557.2l-3.9 0.8l-1.5 3.6l-2.5 2.3M1449.2 565.1l0.2 -1.2M1446.4 533.5l-1.0 4.3l1.0 3.7l3.6 2.8M1446.4 533.5l-4.7 0.9l-4.8 1.0l-4.8 -1.1M1450.0 544.3l-4.2 1.9l-0.8 5.9l-5.2 0.8M1429.0 537.2l3.0 -2.9M1434.6 552.4l5.3 0.4M1451.4 527.2l-2.0 3.6l-3.0 2.7M1456.7 547.4l-2.9 -2.5l-3.8 -0.6M1421.4 537.3l3.8 0.4l3.8 -0.5M1419.1 558.3l-1.9 -2.9l-1.6 -3.1l-2.7 -2.4M1419.1 558.3l5.2 0.2l4.7 -1.4l4.2 -3.1M1433.2 554.0l1.4 -1.6M1288.4 522.7l3.1 3.8l5.4 1.3l2.5 4.5M1288.4 522.7l-3.7 3.2l-4.8 1.0M1279.9 526.9l0.6 5.3l2.7 5.2l-2.5 5.4M1297.0 537.5l-4.5 0.1l-1.3 5.7l-4.5 -0.1M1280.7 542.8l3.0 0.8l3.0 -0.4M1295.6 560.5l-2.4 -6.0l-0.7 -6.9l-5.8 -4.4M1304.5 554.8l0.8 -3.1l-0.3 -3.2M1305.0 548.5l-1.5 -4.5l-4.4 -2.4l-2.1 -4.1M1279.2 543.6l1.5 -0.8M1276.7 557.9l0.3 -4.8l2.9 -4.4l-0.7 -5.1M1299.4 645.1l2.1 6.4l1.3 6.5l-1.6 5.6M1299.4 645.1l-2.9 -1.1l-2.9 -1.3M1284.6 657.4l-0.2 -3.5l-2.1 -2.7M1293.6 642.7l-4.1 2.2l-4.6 0.0M1259.8 642.6l4.8 -3.8l5.0 -3.6l4.3 -4.3M1245.8 623.8l-1.4 1.8M1270.6 624.2l2.8 2.6l0.6 3.8M1305.1 576.7l5.0 2.8l2.6 5.1l4.3 3.6M1293.7 597.0l4.3 2.3l4.4 2.1M1317.0 588.2l-3.8 4.5l-5.2 3.0l-2.8 5.4M1302.4 601.4l2.8 -0.3M1335.8 530.7l-1.9 3.6l-1.1 3.7l1.4 4.1M1355.1 540.8l-3.6 1.2l-2.1 3.6l-3.5 1.4M1334.2 542.1l3.9 1.6l4.8 -0.5l3.0 3.8M1346.1 569.3l-3.8 -2.2l-1.7 -4.0M1354.9 570.2l-4.5 0.5l-4.3 -1.4M1361.6 562.0l-1.6 3.3l-1.8 3.0l-3.3 1.9M1347.6 555.6l-2.2 2.5l-3.1 1.9l-1.7 3.1M1347.6 555.6l0.0 -4.5l-1.7 -4.1M1176.1 594.2l-3.9 0.3l-3.9 -0.1M1176.1 594.2l4.2 3.9l3.4 4.3l1.2 5.8M1168.3 594.4l-2.0 6.4l2.2 6.7l-1.2 6.4M1184.8 586.3l-4.5 0.9l-2.3 3.3l-1.9 3.7M1184.8 586.3l-0.7 -2.0M1160.7 589.0l3.2 3.6l4.4 1.8M1192.3 589.0l-4.0 -0.9l-3.5 -1.8M1186.2 608.5l-1.3 -0.3M1192.1 604.2l-2.5 -5.1l5.6 -5.0l-2.9 -5.1M1160.7 615.9l3.7 0.3l2.9 -2.3M1177.2 626.9l-0.7 -5.9l-7.8 -0.8l-0.6 -6.0M1186.8 574.2l4.7 0.9l4.3 -0.5l3.8 -3.1M1194.0 562.1l2.8 4.0l3.9 3.0M1199.6 571.5l1.1 -2.4M1192.3 589.0l4.8 -0.8l4.1 -2.4M1199.6 571.5l3.7 4.4l-2.7 5.1l0.6 4.8M1206.0 605.9l-3.0 -6.0l4.8 -6.6l-3.2 -6.0M1201.2 585.8l3.4 1.6M1102.0 603.7l-2.6 3.8l-4.4 1.4M1101.9 627.0l-4.2 -1.6l-2.6 -3.8M1095.0 608.9l-2.9 4.3l0.4 4.2l2.6 4.2M1050.4 628.4l1.4 -0.4l6.6 -6.0l8.5 -1.0M1065.0 644.5l3.5 -4.2l4.4 -2.9l4.7 -2.6M1066.9 621.0l3.3 1.4l3.5 -0.3M1077.6 634.8l-0.5 -4.6l-0.5 -4.5M1073.7 622.1l2.9 3.6M1082.9 593.6l1.1 1.1M1084.0 594.7l-0.9 3.8l0.1 3.8l1.1 3.7M1084.3 606.0l-2.9 2.2l-3.2 1.8M1095.5 591.8l-3.2 3.5l-5.1 -4.0l-3.2 3.4M1096.7 577.3l-7.1 -1.5M1084.8 555.2l-4.4 2.7M1066.9 621.0l-3.8 -13.4M1073.7 622.1l2.3 -3.7l-1.2 -5.1l3.4 -3.3M1095.0 608.9l-3.2 -2.5l-4.3 1.9l-3.2 -2.3M1095.1 621.6l-6.5 0.1l-6.5 -0.4l-5.5 4.4M1124.7 658.1l-5.4 -0.2l-4.3 3.4l-4.9 1.2M1119.6 640.7l-6.0 2.9l-5.1 4.8l-7.2 0.0M1051.0 661.0l3.7 5.1l2.5 5.9l3.7 5.2M1055.1 656.9l4.9 3.6l5.4 2.3l5.9 1.4M1071.3 664.2l-2.2 5.3l-4.1 3.9l-4.1 3.8M1065.0 644.5l1.9 6.5l3.8 4.9l5.9 3.3M1076.6 659.2l-1.3 3.8M1071.3 664.2l4.0 -1.1M1163.9 651.6l-1.5 6.5l-4.5 5.2l-2.0 6.2M1176.9 665.4l0.0 -2.8M1176.9 665.4l-3.5 3.0l-2.0 5.0l-5.3 0.6M1140.7 664.3l5.1 0.1l2.1 6.3l5.3 -0.3M1153.2 670.4l2.7 -0.9M1819.7 439.7l-5.6 7.7l-5.5 7.8l-3.0 9.2M1837.2 460.1l-4.0 5.0l-6.1 2.2l-4.9 3.9M1807.2 466.5l-1.6 -2.2M1833.2 511.5l-2.9 -5.0l-6.4 -2.4l-0.9 -6.5M1833.2 511.5l11.4 -0.0M1840.7 489.7l-0.0 0.0l-15.0 0.0M1825.7 489.7l-2.5 4.0M1822.4 530.3l4.5 -5.8l0.7 -7.9l5.6 -5.1M1825.7 540.6l-3.2 -2.2l-0.1 -8.1M1843.5 460.3l4.3 2.1M1865.2 435.0l8.5 14.4M1822.2 471.2l-1.3 6.7l4.1 5.5l0.7 6.3M1807.2 466.5l-0.3 7.2l-1.8 6.7l-4.1 5.9M1801.0 486.3l6.6 4.9l7.7 1.5l7.9 1.0M1578.6 439.2l5.8 3.7l7.7 0.4l4.7 5.9M1596.8 449.2l5.4 -8.2l2.1 -2.0M1593.8 561.2l0.4 0.5l4.7 5.4l7.1 2.6M1540.2 541.5l4.2 -4.1l3.6 -4.9l6.4 -0.8M1559.6 537.8l-5.1 -6.1M1543.9 516.6l2.7 3.9l2.0 4.8l5.5 1.0M1694.8 1245.9l4.7 1.4l2.9 2.8M1687.0 1258.1l6.0 7.6l1.1 0.7M1692.4 1238.5l2.3 7.4M1676.3 1259.4l10.7 -1.3M1626.3 1578.3l-1.9 5.0M1606.0 1581.0l1.5 3.7l2.5 2.5l4.0 0.8M1624.4 1583.3l-4.6 -1.0l-3.3 2.1l-2.5 3.6M1633.8 1596.7l-2.4 -0.5M1629.5 1615.1l-2.5 -0.6M1613.7 1621.8l3.7 -3.8l5.6 -0.4l4.1 -3.1M1631.4 1596.1l-2.2 3.8l-5.1 -0.8l-2.4 3.4M1627.1 1614.5l-0.3 -4.7l-2.9 -3.5l-2.2 -3.8M1507.8 1079.4l-3.0 1.3l-3.3 -0.9M1501.5 1079.8l-2.0 -4.1l-0.9 -4.3M1507.9 1070.2l-4.8 -2.7M1503.1 1067.5l-4.5 3.9M1510.3 1068.9l-2.4 1.3M1511.4 1082.5l-3.7 -3.2M1501.7 1059.7l1.0 3.8l0.4 4.0M1506.2 1112.1l5.1 -1.7l1.3 -4.9l2.6 -3.9M1510.0 1097.3l-4.1 3.4l-5.0 -2.4l-4.4 1.2M1496.5 1099.5l-1.4 3.2l1.2 3.2M1478.9 484.7l-3.2 3.7l0.6 5.2l-2.5 3.9M1488.4 482.6l-1.2 4.4l2.0 3.6l2.1 3.6M1473.8 497.5l5.3 0.5l5.3 1.7l5.0 -3.4M1489.4 496.3l1.9 -2.1M1491.5 476.4l-1.4 3.2l-1.7 3.0M1471.3 478.5l2.9 4.2l4.7 2.0M1501.5 495.5l-3.5 0.3l-3.1 -2.6l-3.6 1.0M1489.5 511.9l-2.2 -5.2l2.7 -5.2l-0.6 -5.2M1396.1 1058.8l3.2 -1.8M1399.7 1041.4l2.4 3.1M1402.1 1044.6l-2.5 3.8l3.0 5.0l-3.3 3.6M1413.7 1061.8l-1.2 -1.7M1399.3 1057.0l4.5 0.4l3.9 3.4l4.8 -0.7M1462.2 1000.5l4.8 -1.1l-1.4 -6.3l4.3 -1.5M1462.2 1000.5l-2.9 -1.3M1462.5 985.8l4.3 2.1l3.1 3.7M1462.5 1001.9l-0.3 -1.3M1474.8 991.1l-4.8 0.5M1442.8 1001.0l3.6 -3.8l0.4 -4.9M1435.5 984.0l-0.8 0.7l-4.9 4.3l-4.1 5.2M1425.7 994.2l2.5 5.3M1452.0 972.7l-2.0 2.1M1462.4 973.3l-3.5 -0.1l-3.3 -1.7l-3.6 1.2M1462.4 973.3l-0.2 4.2l-0.3 4.2l0.6 4.1M1422.7 1010.4l-6.0 -1.9l-4.7 -3.3l-2.3 -6.1M1409.7 999.1l0.5 -1.9M1425.7 994.2l-3.8 -1.7M1421.9 992.5l-3.2 3.3l-5.8 -3.0l-2.7 4.4M1421.9 992.5l-1.9 -5.6l-0.0 -6.0l-0.2 -0.7M1405.5 1029.3l-5.6 2.0M1410.7 1018.2l-2.4 -4.7l-4.9 -2.0M1394.7 1028.2l-0.1 -4.6l-2.9 -3.6M1391.7 1020.0l5.0 -1.4l1.1 -6.6l5.6 -0.5M1391.7 1020.0l-2.8 -2.1l-3.2 -1.6M1409.7 999.1l-2.4 3.9l-4.3 1.6M1403.4 1011.5l0.6 -3.5l-1.0 -3.4M1402.1 918.9l-4.9 -3.5l-5.4 -2.0l-6.0 -0.4M1402.1 918.9l-6.2 6.4l1.1 6.7M1397.4 893.4l5.1 1.3l2.5 4.7l4.0 2.7M1369.4 913.4l3.7 -1.3l4.5 1.5l3.2 -3.3M1385.5 912.3l-4.6 -2.0M1369.0 917.8l0.4 -4.4M1397.4 893.4l0.3 -3.9l-0.5 -0.6M1380.8 910.3l-2.6 -5.0l-1.8 -4.7M1431.5 940.5l0.0 4.8l0.7 4.7l0.4 4.8M1432.0 955.9l0.5 -1.1M1452.0 972.7l1.1 -4.2l0.4 -4.0l-3.6 -3.4M1438.0 959.4l5.3 -0.2l6.6 1.9M1463.5 959.7l-3.5 -2.4l-4.2 2.7l-3.5 -2.1M1449.9 961.1l2.3 -3.3M1791.0 846.7l2.1 -3.1l3.6 -0.9M1796.7 842.7l-0.4 -5.4M1787.8 860.9l-0.4 -4.8l3.1 -4.4l0.5 -5.0M1804.2 847.1l-4.7 -0.6l-2.8 -3.8M1378.0 989.1l-4.3 1.8l-4.2 -0.0l-4.0 -2.5M1378.0 989.1l1.9 -5.3M1365.5 988.4l-0.7 -4.8l2.2 -4.4l-0.1 -4.7M1366.9 974.5l4.1 -1.4l3.7 2.4M1402.7 960.4l-1.0 2.3l-4.2 5.7M1397.5 968.4l-6.5 -3.7l-5.1 -5.1l-1.7 -2.9M1459.4 641.3l-5.8 2.0l-5.3 -4.0l-5.6 0.3M1451.8 624.6l-3.0 0.6l-3.1 -0.2M1445.7 625.0l0.9 5.3l-2.0 4.7l-1.9 4.6M1443.8 652.6l0.2 -0.7l-3.7 -10.3M1442.7 639.6l-2.3 2.0M1450.4 605.2l-0.1 -3.9l-3.0 -3.3l1.2 -4.1M1435.9 592.9l4.1 0.6l3.0 -2.9M1435.9 592.9l-0.3 4.3l-5.2 2.5l0.9 4.9M1431.3 604.6l2.0 4.1l5.0 -1.2l2.9 2.6M1448.5 593.9l-2.5 -2.0l-3.0 -1.3M1451.6 605.6l-1.1 -0.4M1445.7 625.0l-4.1 -3.3M1441.6 621.7l-2.5 -3.8l3.6 -4.0l-1.5 -3.8M1453.8 574.7l-3.5 1.9l-3.1 2.5l-3.3 2.1M1443.9 581.2l-0.2 4.7l-0.7 4.7M1436.6 576.6l-2.0 4.0l-5.2 0.5l-2.0 3.9M1436.6 576.6l-1.7 -3.1l0.3 -3.5M1416.9 572.2l0.9 5.8l4.8 3.0l3.6 3.8M1416.9 572.2l0.1 -1.3M1435.2 570.0l-1.3 -0.9M1434.0 569.1l-5.8 -1.0l-5.7 -0.5l-5.4 3.2M1435.9 592.9l-2.2 -3.3l-3.0 -2.4l-3.3 -2.2M1449.2 565.1l-5.1 0.4l-4.1 3.1l-4.8 1.4M1416.1 596.2l5.2 -2.1l3.2 -4.0l1.7 -5.3M1408.6 581.7l1.4 4.0l-1.1 4.1M1408.6 581.7l4.9 -1.2l-0.6 -6.2l4.0 -2.1M1433.2 554.0l-0.2 5.0l-1.5 5.2l2.5 4.9M1398.7 564.0l5.9 2.9l5.3 4.4l7.1 -0.4M1316.7 723.7l-4.0 3.0l-4.8 -5.0l-4.0 3.2M1314.6 701.4l-0.2 0.0l-4.1 6.0l-6.3 -1.4M1303.9 724.9l-1.8 -6.3l2.4 -6.3l-0.5 -6.3M1295.5 687.3l-1.9 5.1l-0.2 5.3l-0.2 5.3M1276.9 686.5l2.2 3.2l-1.1 3.6l0.0 3.4M1278.0 696.7l4.3 2.0l4.9 1.3l2.4 4.7M1293.2 703.0l-3.6 1.7M1325.2 754.5l8.2 1.6l8.5 -2.1l4.6 1.0M1325.9 764.0l3.1 4.8l4.4 2.3l5.7 -0.4M1348.1 762.3l-5.2 3.5l-3.8 4.9M1325.9 745.9l-2.3 3.6l1.0 4.1M1324.6 753.6l0.6 0.9M1282.3 651.2l-5.3 0.5l-4.9 2.4l-5.3 0.5M1266.6 667.9l2.6 -4.4l0.3 -4.4l-2.7 -4.5M1284.9 644.9l-4.2 -4.3l-3.9 -4.5l-2.9 -5.2M1259.8 642.6l0.9 3.8l1.0 3.7M1261.7 650.1l1.6 3.4l3.5 1.1M1266.6 667.9l-3.9 -0.6l-3.5 0.8l-2.7 3.1M1256.5 671.2l-1.6 3.1l2.4 4.2l-3.3 2.7M1271.6 684.1l-3.7 0.7l-2.3 4.3l-4.3 -1.0M1261.3 688.1l-2.9 -4.2l-4.4 -2.7M1095.2 909.0l5.5 0.3l5.8 4.1l6.5 -1.8M1103.0 928.3l4.3 -1.6M1103.0 928.3l-4.9 0.7l-3.5 -5.6l-5.2 1.8M1107.3 926.7l2.6 -3.0l0.8 -4.2l3.0 -2.6M1113.0 911.6l0.7 5.3M1089.4 925.2l-0.3 -3.6l-2.8 -2.3M1101.1 946.1l0.8 -5.9l-0.4 -6.1l1.5 -5.8M1085.3 938.2l3.5 -3.7l-1.8 -5.3l2.4 -4.0M1130.2 928.7l-0.3 -2.4M1129.8 926.3l-3.9 -5.7l-6.3 -1.5l-5.9 -2.2M1083.6 918.6l2.7 0.7M1197.5 948.5l-2.0 0.4M1197.5 948.5l4.8 -2.2l-0.3 -5.7l3.3 -3.2M1195.5 948.9l-2.3 -4.4l-4.2 -1.5l-4.3 -1.3M1205.3 937.4l-0.3 -4.0l-0.6 -4.0M1187.7 930.7l0.0 3.9l-3.1 3.2l0.1 3.9M1210.4 961.0l-0.2 -1.5M1210.2 959.5l-2.2 -5.9l-6.5 -1.1l-4.0 -4.0M1187.9 961.9l3.1 -4.0l3.2 -3.9l1.3 -5.1M1210.2 959.5l5.9 -3.5l0.9 -8.1l6.5 -3.0M1223.5 944.9l-7.0 -0.2l-4.8 -5.6l-6.4 -1.7M1444.8 1049.5l0.6 4.0l0.6 4.1M1455.4 1047.2l-1.4 4.1l0.1 4.4M1454.1 1055.7l-3.8 2.1l-4.3 -0.2M1490.2 1110.4l-2.7 -3.1l-5.0 1.3l-2.6 -3.4M1476.7 1109.1l3.2 -3.9M1490.2 1110.4l0.2 4.8l0.5 4.9M1490.9 1120.1l-1.5 1.5M1296.2 1147.9l0.3 -4.9l1.9 -4.6l0.4 -4.8M1296.5 1148.2l4.7 2.9l4.5 -1.2l4.5 -2.4M1298.8 1133.6l5.0 -1.1l4.7 1.6l4.7 1.3M1310.2 1147.5l3.7 -4.4M1294.1 1161.0l0.5 -4.3l1.2 -4.3l0.7 -4.2M1294.1 1161.0l-4.0 1.6l-4.0 -1.6M1286.2 1143.9l3.1 1.9l3.5 1.1l3.4 1.0M1296.9 1131.3l1.9 2.2M1300.8 1169.0l3.0 -1.8l3.5 0.1M1294.1 1161.0l2.1 2.7l2.1 2.8l2.5 2.5M1309.4 1120.7l3.9 4.1l-2.6 5.9l2.6 4.5M1325.9 1147.2l-4.9 1.2l-2.1 -6.9l-5.0 1.5M1317.2 1176.7l-2.2 2.6l0.4 4.1l-3.4 1.9M1312.0 1185.3l0.5 4.0l3.6 1.5l2.2 2.6M1286.0 1194.5l2.3 3.7M1286.0 1194.5l1.5 -4.7l3.5 -4.2l-0.9 -5.4M1288.3 1198.1l4.5 -0.5l4.4 -2.0l4.7 1.3M1301.9 1196.9l0.1 -3.9l3.0 -3.6l-2.4 -4.0M1302.6 1185.4l-4.3 -2.7l-1.4 -4.9M1296.9 1177.8l-3.6 0.6l-3.2 1.8M1286.1 1208.0l-0.8 -3.6l3.1 -2.8l-0.1 -3.5M1278.6 1175.8l2.8 4.1l4.3 0.4l4.4 -0.1M1300.8 1169.0l-3.1 3.8l-0.8 5.0M1318.2 1213.5l-0.5 1.1M1318.2 1213.5l-4.5 -2.8l-1.3 -4.9l-1.9 -4.4M1317.6 1214.6l-5.4 -0.3l-5.4 -0.7l-4.9 3.0M1310.5 1201.4l-5.1 -0.8M1301.9 1216.6l-2.9 -4.7M1330.7 1232.9l-4.9 0.4M1321.4 1212.2l-3.3 1.3M1318.0 1222.5l-2.0 -3.8l1.6 -4.1M1318.3 1193.4l-3.4 1.8l-1.2 4.2l-3.2 2.0M1299.2 1229.4l3.2 -3.8l-2.5 -5.0l2.0 -4.0M1301.9 1196.9l3.5 3.6M1287.9 1210.6l3.9 -1.2l3.4 2.4l3.7 0.1M1168.8 1280.8l4.7 2.2M1173.5 1283.0l-1.3 6.1l4.1 4.6l1.7 5.3M1178.0 1299.0l-1.6 1.7M1173.5 1283.0l3.6 -3.1l5.6 1.6l3.3 -3.9M1178.0 1299.0l2.3 -4.7l5.9 -0.0l2.9 -3.9M1189.1 1290.4l-1.8 -4.1l1.5 -4.8l-2.8 -3.9M1175.3 1264.5l2.1 5.6l2.9 4.8l5.8 2.5M1191.0 1260.6l-0.5 4.6l-0.4 4.6l1.5 4.5M1191.6 1274.3l-2.8 1.4l-2.7 1.7M1254.6 1227.0l-3.9 3.2l-3.0 3.9M1255.6 1242.9l3.5 -1.0l2.6 -2.5l2.5 -2.4M1255.6 1242.9l-5.2 -1.4M1250.4 1241.5l-1.2 -3.8l-1.5 -3.6M1238.8 1223.6l2.3 2.9l1.7 3.0l0.4 3.7M1247.7 1234.1l-4.5 -0.9M1220.6 1218.0l-1.9 4.1l1.3 5.0l-2.9 3.9M1204.8 1228.9l3.1 0.7l2.0 2.5M1231.1 1223.5l0.5 4.9l-3.3 3.6l-1.4 4.3M1217.1 1231.0l3.8 0.7l1.8 4.6l4.2 0.0M1231.1 1239.7l2.7 -4.6l5.7 1.0l3.7 -2.9M1231.1 1239.7l-2.6 -0.4M1226.9 1236.3l1.6 3.0M1352.4 1259.2l-2.4 1.4M1350.0 1260.6l-5.4 -1.8l-4.7 -4.3l-6.2 0.8M1375.2 1160.8l-3.0 -3.9l1.1 -4.7M1375.2 1160.8l-6.1 -0.2l-6.1 -0.0l-6.1 1.1M1373.3 1152.2l-4.0 0.7l-3.9 0.3l-3.1 -3.4M1362.3 1149.8l-3.1 1.6l-1.3 4.0l-3.9 0.6M1356.9 1161.7l-2.0 -2.5l-1.1 -2.9M1376.7 1162.5l-1.6 -1.7M1376.5 1145.7l-1.2 3.4l-2.0 3.1M1357.6 1174.8l-0.3 -5.3l-0.4 -7.8M1351.7 1134.5l-1.1 2.1M1350.5 1136.7l-0.4 6.7l2.7 6.2l1.2 6.4M1343.5 1156.6l3.5 0.1l3.4 -0.4l3.4 0.0M1338.2 1144.3l5.6 -0.1l4.3 -2.4l2.4 -5.1M1341.5 1125.7l-0.8 -4.0M1341.5 1125.7l-4.9 1.0l-1.8 4.5l-3.0 3.1M1340.7 1121.7l-5.5 2.7l-5.1 -2.8l-5.1 -1.1M1331.8 1134.3l-4.1 -1.7l-3.4 -2.9M1324.3 1129.7l-0.8 -4.7l1.5 -4.5M1342.3 1116.4l-1.7 5.3M1351.4 1133.4l-1.8 -4.5l-4.1 -1.5l-4.0 -1.7M1333.0 1142.3l-1.9 -3.8l0.7 -4.2M1313.3 1135.2l2.9 -3.3l5.4 1.7l2.7 -3.9M965.6 762.5l3.1 3.1l4.7 -1.5l3.4 2.2M959.0 771.7l2.4 3.9l5.2 1.9l0.3 5.4M966.9 782.9l3.3 -3.1l5.2 0.2l3.1 -3.5M978.5 776.5l-0.7 -3.4l0.5 -3.5l-1.5 -3.3M954.1 771.0l4.8 0.7M964.8 755.6l-0.1 3.5l0.9 3.4M987.1 758.2l-3.2 3.0l-4.9 0.8l-2.2 4.3M966.6 785.7l0.3 -2.9M1217.5 535.3l-2.9 -2.7l-2.2 -3.6l-4.2 -1.0M1217.5 535.3l2.9 -3.9l4.3 -1.1l4.3 -1.3M1228.6 527.9l-7.0 -1.1l-4.2 -6.2l-6.3 -2.4M1228.6 527.9l0.4 1.1M1211.1 518.2l1.5 4.0l-1.5 3.1l-2.9 2.7M1202.9 546.7l2.0 0.9M1216.4 541.2l1.1 -5.9M1197.1 534.8l3.3 -2.9l3.1 -3.3l4.7 -0.6M1230.4 510.6l-1.7 5.7l-1.9 5.6l1.8 6.0M1224.6 547.9l-3.2 -1.7l-1.4 -3.9l-3.6 -1.1M1228.1 547.4l4.0 -3.5l0.2 -6.1l4.5 -3.2M1224.6 547.9l3.5 -0.6M1247.0 516.6l-0.4 4.8l-3.2 3.8l-0.9 4.6M1236.7 534.0l3.2 -1.6l2.6 -2.6M1242.5 529.8l5.9 3.0l6.2 1.6l6.7 -0.1M1279.2 543.6l-5.4 -1.1l-5.7 0.8l-5.1 -2.6M1271.5 522.3l3.0 4.4l5.4 0.2M1263.0 540.7l0.1 -3.4l-1.8 -3.0M1240.3 558.8l-1.1 -5.4l3.3 -3.6l2.8 -3.8M1240.3 558.8l4.7 0.8l2.3 4.3M1247.3 563.9l2.8 -4.9l4.6 -1.5l5.3 -0.1M1245.3 546.0l4.6 -2.3l4.7 4.4l4.6 -2.2M1236.8 534.6l4.8 2.3l2.0 4.5l1.7 4.6M1236.8 559.1l3.5 -0.3M1248.7 577.3l-0.9 -4.4l0.7 -4.6l-1.2 -4.4M1263.4 560.0l-3.4 -2.6M1263.0 540.7l-2.0 2.5l-1.8 2.7M1305.6 515.4l2.6 -3.2l0.6 -4.7l4.1 -2.1M1312.9 505.4l-6.4 -1.4l-2.6 -6.5l-5.3 -2.9M1298.6 494.6l-3.0 4.5l-1.8 5.3l-4.2 3.7M1289.6 508.1l0.5 0.9M1308.9 527.2l-1.9 4.0l-5.5 -2.6l-2.1 3.7M1308.9 527.2l-0.6 -4.1l0.4 -4.3l-3.1 -3.4M1288.4 522.7l-2.1 -4.9l5.2 -4.0l-1.4 -4.8M1308.9 527.2l3.4 1.0M1317.4 504.3l-4.5 1.2M1297.7 489.3l-1.2 1.3l2.1 4.0M1279.3 505.5l3.4 1.0l3.4 1.0l3.5 0.6M1363.8 485.5l3.7 -1.0l3.0 2.2M1363.8 485.5l-1.7 -5.4l-1.1 -5.5l-2.0 -5.3M1377.1 480.7l-1.6 -4.7l-0.7 -5.0l-2.0 -4.6M1359.0 469.3l4.1 -2.7l5.2 2.1l4.1 -2.5M1376.3 501.0l-1.7 -4.8l-5.0 -3.6l0.9 -5.9M1356.8 490.9l4.8 -1.0l2.2 -4.4M1356.3 468.2l2.7 1.1M1387.9 482.2l-3.6 -0.3l-3.5 -1.8l-3.7 0.6M1391.2 465.1l-6.0 3.3l-6.5 -5.2l-5.9 3.2M1373.7 455.3l-1.2 10.9M1227.7 607.2l-3.5 4.2l-0.1 5.2l-0.7 5.1M1227.7 607.2l-4.3 -1.1l-1.7 -4.2l-2.9 -2.6M1223.4 621.7l-7.2 -3.3l-5.1 -5.6l-4.0 -6.7M1218.8 599.3l-2.9 4.0l-3.7 2.5l-5.1 0.3M1223.5 622.4l2.5 3.2l3.3 1.8l3.9 0.6M1238.6 600.0l-3.7 2.3l-4.4 1.3l-2.8 3.6M1219.3 591.9l3.7 -1.6l4.1 -0.2l3.8 -1.4M1206.0 605.9l1.1 0.2M1210.9 629.8l2.8 -4.8l4.8 -1.4l5.0 -1.2M1212.4 586.1l-4.1 -1.0l-3.7 2.2M1219.3 591.9l-4.4 -1.8l-2.5 -4.0M1206.9 638.2l2.3 3.5l1.3 4.3l4.7 1.4M1231.2 642.6l-2.6 3.1l-4.0 0.8l-3.3 1.9M1240.7 670.5l4.0 -0.0l3.0 -2.3l3.4 -1.6M1240.7 670.5l-2.1 -3.2l-4.0 -0.9l-2.3 -2.9M1240.5 653.7l4.0 0.3l2.9 1.9l2.2 3.4M1249.6 659.3l2.2 3.3l-0.7 4.0M1221.3 648.4l1.6 5.5l4.7 4.5l-0.6 6.3M1227.0 664.7l5.2 -1.2M1240.1 651.3l0.3 2.4M1261.7 650.1l-5.2 1.5l-3.2 4.1l-3.7 3.6M1256.5 671.2l-1.9 -3.2l-3.5 -1.4M1208.3 706.0l-2.4 -6.3l-0.8 -6.6l0.3 -6.7M1204.2 708.8l-6.0 -2.2l-4.9 -4.0l-4.7 -4.3M1188.6 698.3l4.5 -3.5l1.5 -5.7l3.7 -4.1M1198.3 685.0l3.6 0.4l3.5 1.0M1291.1 618.5l-0.1 4.3M1291.1 618.5l3.7 -1.3l3.8 -1.0l1.8 -4.0M1291.0 622.7l1.9 3.2l3.5 1.5M1296.4 627.4l5.4 -2.5l5.5 -1.5l1.0 0.3M1274.0 630.6l6.8 -0.2l3.3 -7.7l6.9 0.0M1302.4 601.4l1.5 4.0l-4.7 2.9l1.2 3.9M1305.2 601.1l7.8 3.9l3.0 8.0M1338.1 584.6l-0.4 -4.6M1338.1 584.6l-4.3 2.5l-3.1 3.9M1337.6 580.0l-3.8 -1.6l-0.6 -5.2l-4.3 -1.0M1328.9 572.2l-1.8 6.3l-4.4 4.7l-3.8 5.1M1330.7 591.0l-3.9 1.4l-4.1 -1.0M1344.6 590.7l0.0 -0.6l-4.1 -3.9M1340.5 586.2l-2.5 -1.6M1340.6 563.1l-3.8 1.6l-3.9 -1.2M1328.7 570.3l2.7 -3.0l1.5 -3.8M1343.8 576.7l-3.0 1.7l-3.2 1.6M1328.7 570.3l0.3 1.9M1315.6 567.3l5.0 -1.7l3.1 6.3l5.0 -1.6M1317.0 588.2l1.8 0.1M1322.2 607.9l-0.4 -0.8l-0.5 -7.7l1.4 -8.0M1333.7 542.5l-0.4 4.9l-0.7 4.8l-2.6 4.4M1333.7 542.5l-5.1 -3.4l-5.6 3.6l-5.2 -1.0M1318.6 554.5l3.8 0.8l4.2 -1.5l3.4 2.8M1312.3 528.2l1.6 4.6l1.0 4.8l2.9 4.1M1305.0 548.5l3.3 -4.0l6.4 2.1l2.9 -4.7M1313.8 558.4l3.1 -1.1l1.7 -2.8M1211.1 558.5l3.3 -1.7l3.7 0.7M1211.1 558.5l-0.0 4.3l-3.0 2.9M1208.1 565.7l4.9 1.6l3.7 2.8l1.2 5.3M1218.1 557.5l3.3 3.2l5.2 0.7l2.5 4.3M1217.9 575.4l5.2 0.6l4.5 -2.5M1229.1 565.7l-2.4 3.6l0.9 4.2M1204.9 547.6l4.7 2.1l-2.5 6.2l4.0 2.6M1224.6 547.9l-0.7 4.2l-5.0 1.2l-0.8 4.2M1200.7 569.1l3.3 -2.6l4.1 -0.8M1236.8 559.1l-3.6 1.0l-0.7 4.4l-3.4 1.2M1232.8 579.5l-1.7 -3.8l-3.5 -2.2M1083.5 653.6l1.8 -6.3l-7.0 -4.3l1.5 -6.2M1091.9 654.4l1.3 -3.9l4.7 0.5l2.1 -3.0M1079.8 636.8l5.1 3.7l5.6 -0.3l5.8 -1.3M1096.3 638.9l3.3 4.0l0.4 5.1M1077.6 634.8l2.2 1.9M1076.6 659.2l2.4 -4.1l4.5 -1.5M1101.9 627.0l-2.7 3.6l-3.8 3.1l0.9 5.2M1101.3 648.4l-1.3 -0.4M1051.0 708.6l2.2 -3.4l3.7 -1.6M1038.7 687.1l4.7 3.2l6.1 0.2l4.6 3.6M1056.9 703.6l-1.0 -4.8l-1.8 -4.7M1040.4 677.0l5.8 4.1l7.2 -3.9l6.0 2.9M1054.1 694.1l3.7 -3.9l1.3 -4.9l0.3 -5.2M1060.9 677.2l-0.2 2.0M1059.4 680.1l1.4 -1.0M1119.3 713.8l-1.7 -1.2M1117.6 712.6l-4.0 -5.2l0.8 -6.3l-0.8 -6.0M1132.9 699.5l-0.4 -4.0l-3.8 -1.7l-1.9 -2.9M1132.9 699.5l-3.0 4.9l-2.3 5.4l-4.5 3.8M1113.6 695.1l4.8 -0.2l4.9 0.3l3.5 -4.3M1149.5 688.7l2.5 -5.8l-2.8 -6.9l4.0 -5.6M1132.4 666.5l-3.1 3.1l3.1 4.5l-2.7 3.2M1149.5 688.7l-5.4 -5.7l-8.9 0.4l-5.4 -5.9M1075.3 663.0l2.8 3.7l0.8 5.1l4.5 2.3M1060.7 679.1l5.0 1.7l4.3 3.7l5.3 1.1M1083.4 674.1l-2.3 4.1l-1.8 4.5l-4.0 2.9M1101.2 726.1l-1.6 4.1l-3.7 2.8l-1.5 4.2M1101.2 726.1l4.7 -0.6l4.7 -0.4l3.5 4.2M1115.7 736.0l-1.2 -3.3l-0.4 -3.4M1115.7 736.0l-6.4 0.2l-5.7 2.8l-5.9 2.1M1097.7 741.1l-2.5 -1.2M1095.1 740.0l-0.8 -2.7M1099.3 719.9l2.3 2.7l-0.4 3.5M1099.3 719.9l-3.1 -3.0l-3.5 0.1l-3.7 1.6M1083.6 727.7l1.6 5.5l5.2 1.3l4.0 2.7M1105.4 712.6l4.1 -1.8l4.0 0.7l4.1 1.1M1105.4 712.6l-2.5 4.1l-3.6 3.2M1119.3 713.8l-0.8 5.5l-3.1 4.7l-1.3 5.3M1134.9 721.3l1.3 3.8l-3.6 3.3l1.0 3.8M1134.9 721.3l-4.9 -1.0l-4.7 -1.5l-2.2 -5.2M1119.7 739.7l1.3 -0.0M1119.7 739.7l-4.0 -3.7M1071.0 729.7l4.6 1.9l4.2 -0.3l3.8 -3.6M1072.1 740.0l3.1 4.8l5.1 1.9l5.0 2.1M1085.3 748.8l5.1 -1.0l0.7 -5.8l4.0 -2.0M1151.7 709.8l3.5 1.6l3.6 -0.5l3.5 -0.9M1151.7 709.8l-1.9 -3.4l-2.7 -3.0l-0.3 -4.1M1162.3 710.0l3.6 -5.5l5.6 -3.7l3.4 -5.6M1146.8 699.3l3.4 -2.7l-1.1 -3.9l0.6 -3.5M1149.7 689.2l6.6 -0.0l6.3 -3.9l6.8 2.6M1173.2 690.4l1.7 4.8M1132.9 699.5l4.6 -1.1l4.7 1.6l4.6 -0.7M1147.6 716.8l1.8 -3.6l2.3 -3.4M1126.8 690.9l3.2 -4.0l-1.3 -4.9l1.1 -4.5M1166.1 674.0l0.8 4.7l-0.8 5.1l3.3 4.1M1176.9 665.4l2.6 4.1l3.8 3.1l2.5 4.1M1185.8 676.7l-2.7 6.0l-6.4 2.4l-3.5 5.3M1182.4 699.4l-3.9 -1.9l-3.6 -2.3M1191.5 676.9l3.0 2.1l2.1 2.8l1.7 3.2M1185.8 676.7l5.7 0.2M1739.7 457.7l5.5 11.9M1745.2 469.6l7.6 0.6l4.7 -7.3l7.3 -0.3M1764.8 462.6l1.1 -11.3M1805.6 464.4l-3.0 -1.7l-4.0 0.7l-2.6 -2.6M1796.0 460.8l-1.7 -9.2M1822.4 530.3l-8.2 -4.2l-7.1 -6.2l-8.7 -3.4M1823.0 497.6l-9.0 4.5l-6.0 8.5l-9.0 4.5M1798.4 516.5l0.6 -1.5M1801.0 486.3l-4.7 3.0M1799.0 515.1l-2.1 -8.4l-0.4 -8.7l-0.2 -8.6M1577.8 461.6l7.1 -1.6l6.8 0.8l6.2 4.0M1596.8 449.2l1.4 4.6l-0.9 4.9l1.6 4.6M1597.9 464.8l0.9 -1.5M1598.9 463.3l8.5 -4.0l9.5 1.1l8.9 -2.2M1606.0 569.7l12.6 -6.4M1554.1 526.3l2.5 -4.5l4.1 -1.8l5.0 -0.1M1575.1 527.2l0.3 -2.9M1565.7 519.9l2.1 3.9l4.8 -1.9l2.8 2.4M1558.4 501.0l3.8 0.7l3.6 1.2M1565.7 519.9l1.0 -5.7l-3.4 -5.6l2.5 -5.7M1620.2 1602.3l-2.6 -2.8l-4.2 -1.5l-0.5 -4.6M1606.0 1597.2l3.3 -2.3l3.6 -1.5M1606.0 1597.2l-2.4 4.4l4.5 4.1l-1.5 4.3M1606.6 1610.0l2.6 1.4M1613.7 1621.8l-2.6 -2.9l-0.6 -3.9l-1.3 -3.5M1621.7 1602.5l-1.5 -0.2M1614.0 1588.0l-1.1 5.4M1598.8 1594.9l3.0 2.8l4.2 -0.5M1595.7 1610.8l3.6 -0.9l3.7 1.4l3.6 -1.3M1501.2 1088.7l-1.9 -3.2M1501.2 1088.7l-4.0 1.2l0.2 4.8l-3.1 2.1M1499.4 1085.5l-5.6 0.1M1493.8 1085.6l-1.3 3.7l-0.1 4.0M1492.4 1093.3l1.2 3.0M1507.9 1090.5l-3.0 -2.0l-3.7 0.2M1501.1 1080.2l-1.8 5.3M1496.5 1099.5l-2.1 -2.7M1480.2 1102.9l3.5 -3.7M1483.7 1099.3l2.8 -2.5l3.9 1.1l3.1 -1.5M1496.3 1105.9l-2.4 3.1l-3.7 1.4M1479.9 1105.2l0.3 -2.3M1410.3 1045.5l3.2 -2.6l0.4 -4.6l3.3 -2.5M1413.4 1050.5l4.2 -3.0l4.9 -0.3l4.9 -0.5M1417.2 1035.8l3.5 3.3l1.1 5.7l5.5 1.3M1402.1 1044.6l4.1 0.3l4.1 0.6M1412.5 1060.1l1.5 -4.7l-0.6 -4.9M1430.0 1051.7l-2.6 -5.0M1431.7 1052.4l2.8 -3.1l3.0 -2.5l4.6 1.0M1405.5 986.4l1.0 -3.5l0.9 -3.5M1405.5 986.4l-4.5 0.8l-3.9 2.2l-4.3 1.4M1407.4 979.4l-4.8 -0.3l-0.3 -6.5l-4.7 -0.3M1392.8 990.8l-2.1 -2.9l-2.2 -2.8l0.4 -3.8M1397.6 972.3l-4.2 0.5l-2.6 3.3M1388.9 981.3l1.9 -5.1M1410.2 997.2l-1.5 -3.6l-1.3 -3.7l-1.9 -3.5M1412.9 976.8l-1.3 2.4l-4.2 0.2M1381.5 971.2l-2.2 -6.1l2.0 -5.9l0.4 -2.8M1381.5 971.2l3.5 0.9l2.0 3.7l3.8 0.3M1379.9 983.9l4.6 -1.0l4.4 -1.6M1374.7 975.5l3.6 -1.8l3.2 -2.5M1388.3 1006.1l4.0 -2.9l4.9 -0.7M1388.3 1006.1l-1.9 -3.2l-2.0 -3.0l-3.3 -2.0M1397.2 1002.5l-2.3 -3.6l-0.0 -4.4l-2.1 -3.6M1392.8 990.9l-4.0 0.9l-2.8 3.8l-4.3 0.1M1403.0 1004.6l-2.9 -0.9l-2.9 -1.2M1385.7 1016.3l-0.2 -3.7l2.0 -3.1l0.8 -3.4M1373.5 1002.7l2.9 -3.8l4.7 -1.0M1378.0 989.1l1.0 3.8l2.7 2.8M1365.5 988.4l-3.6 4.2M1350.4 916.3l-1.2 -1.5l-0.1 -0.6M1377.7 874.9l-2.2 -0.9l-3.2 -3.2M1361.3 882.4l-3.0 2.6M1364.9 891.8l-0.1 -0.1l-4.2 -2.5l-2.3 -4.2M1458.8 944.4l-0.4 4.5l-5.5 0.5l-1.0 4.0M1458.8 944.4l-4.3 -3.4l-6.3 -0.8l-2.6 -5.7M1451.9 953.4l-3.6 -3.4l-4.8 -1.7M1463.1 944.0l-4.3 0.3M1452.3 957.9l-0.4 -4.5M1444.9 932.8l0.8 1.7M1432.6 954.8l3.4 -2.7l3.9 -1.5l3.6 -2.3M1360.1 970.1l-1.6 -5.1l-6.6 -0.3l-1.7 -5.0M1363.8 970.7l3.8 -7.1l7.3 -4.7l1.7 -5.1M1372.2 952.8l-1.5 0.5l-7.1 -2.9l-6.8 1.8M1356.8 952.2l-3.3 3.7l-3.3 3.8M1346.6 959.5l3.5 0.2M1340.4 975.1l2.2 -5.2l0.0 -6.0l4.0 -4.4M1351.5 978.9l3.9 -1.9l1.5 -4.3l3.2 -2.6M1366.9 974.5l-3.1 -3.8M1341.6 949.7l0.7 3.3l2.3 2.7l1.1 3.2M1341.6 949.7l1.2 -6.7l7.0 -3.9l0.2 -2.2M1345.7 958.9l0.9 0.6M1428.1 638.1l-1.8 -4.7l-4.0 -3.2M1428.1 638.1l-4.3 5.2l-0.4 6.3l-0.6 3.6M1422.3 630.2l-3.3 4.4l-6.1 -2.2l-3.7 3.4M1409.2 635.8l0.4 4.3l2.7 4.1l-1.8 4.5M1419.8 655.1l-2.0 -0.6l-1.9 -5.8l-5.4 0.0M1423.4 626.5l-1.1 3.7M1423.4 626.5l5.8 -2.5l6.1 -1.7l6.3 -0.6M1351.9 864.7l-3.2 2.3l-7.1 8.0M1348.2 885.7l3.4 0.0l3.4 0.8l3.3 -1.5M1348.2 885.7l-2.2 -2.8l-3.8 -1.4l-1.0 -3.9M1376.5 580.0l-1.8 4.9l2.6 4.4M1376.5 580.0l5.6 -3.2l6.9 4.0l5.5 -3.8M1377.3 589.3l4.5 4.1l6.1 0.8l5.4 2.3M1394.5 577.0l0.7 1.0M1395.2 578.0l-2.6 5.8l4.7 6.4l-3.5 5.7M1396.3 564.9l-0.6 4.0l-3.3 3.7l2.1 4.4M1373.6 566.9l1.0 3.5l-1.2 3.7l1.3 3.5M1408.6 581.7l-3.7 -4.1l-5.7 3.4l-4.0 -3.0M1408.9 589.8l-4.8 2.5l-5.8 0.4l-4.5 3.2M1354.9 570.2l1.6 3.0l-0.8 3.3M1343.8 576.7l2.5 3.1l4.0 0.8M1355.7 576.5l-2.2 2.8l-3.2 1.3M1374.7 577.6l-4.3 1.1l-5.0 -1.4l-3.6 3.6M1340.5 586.2l4.5 -0.6l4.6 0.1M1350.3 580.6l-0.7 5.1M1430.7 604.7l-4.0 -3.9l-6.6 1.1l-3.7 -4.4M1416.4 597.5l-5.2 2.8l-1.3 5.4l-2.1 4.8M1421.5 619.9l-4.0 -3.9l-6.3 -0.8l-3.4 -4.7M1423.4 626.5l-2.5 -2.9l0.6 -3.7M1416.1 596.2l0.3 1.4M1384.4 635.4l2.5 2.5l3.5 0.5l3.1 1.1M1384.4 635.4l-7.4 1.4l-3.4 4.5M1393.5 639.5l-2.3 7.5l0.8 5.0M1410.5 648.7l-5.4 4.4l-3.6 5.1M1405.5 634.5l-4.1 1.4l-5.0 -0.8l-2.9 4.4M1413.8 667.4l-1.1 0.2M1316.7 723.7l2.9 2.8M1304.0 706.0l-3.2 -2.5l-4.4 2.1l-3.2 -2.6M1393.8 601.9l4.9 1.4l1.3 5.8l4.5 1.9M1393.8 601.9l-5.8 1.7l-3.2 5.2l-4.3 3.6M1380.5 612.4l1.4 3.1l-0.7 3.4M1404.5 611.0l-3.5 2.3l-0.2 3.9l-1.0 3.5M1384.5 622.7l-3.3 -3.8M1407.8 610.5l-3.3 0.6M1393.3 596.5l0.5 5.4M1405.5 634.5l-0.7 -5.1l-4.3 -3.6l-0.7 -5.1M1384.4 635.4l-2.3 -4.2l4.2 -4.2l-1.8 -4.3M1368.4 624.3l4.0 -2.5l4.0 -2.4l4.8 -0.5M1317.3 737.5l-3.3 3.7l-4.2 0.2l-4.4 -1.0M1305.4 740.4l-2.6 -4.7l3.0 -5.5l-2.6 -4.7M1286.7 710.8l1.2 -3.2l1.7 -2.9M1287.0 714.4l4.0 2.9l3.9 3.1l1.9 4.8M1296.8 725.2l3.2 -0.6l3.2 0.9M1324.6 753.6l-5.7 -2.3l-5.5 2.7l-5.7 0.1M1307.7 754.1l-1.2 -3.6l-2.9 -2.9l0.0 -4.1M1383.8 807.2l-2.8 2.1M1372.9 795.7l-4.7 5.2M1368.2 800.9l0.3 1.0M1368.6 801.9l3.0 4.5l6.0 -0.8l3.4 3.7M1393.1 828.5l-3.5 1.8l-3.9 -0.6M1385.7 829.7l-4.5 -3.4l2.0 -7.1l-5.4 -3.0M1395.4 825.2l-2.3 3.4M1381.0 809.3l-0.9 3.8l-2.3 3.1M1361.1 786.3l-3.0 4.7l2.5 6.0M1286.7 710.8l-6.5 3.6l-6.8 0.7l-7.0 -2.6M1262.3 704.5l2.2 4.0l1.9 4.0M1261.3 688.1l1.8 5.2l-5.1 4.4l1.7 5.2M1262.3 704.5l-2.6 -1.6M1276.8 729.4l-3.7 -2.4l-2.3 -4.6l-5.2 -0.2M1287.0 714.4l-5.4 3.7l-0.3 7.1l-4.5 4.2M1266.4 712.5l-0.5 4.8l-0.3 4.9M1148.4 935.6l2.7 -3.3M1129.8 926.3l4.3 -2.6l1.6 -4.7M1135.7 919.0l4.8 0.9l4.3 -2.2M1162.4 922.0l-1.1 3.7l-0.7 3.8M1162.4 922.0l4.2 -0.0l1.9 -4.7l4.1 -0.2M1179.5 923.3l-4.5 -1.8l-2.4 -4.4M1179.5 923.3l-4.7 3.8l-3.5 4.6l-1.6 5.9M1169.7 937.6l-4.0 -1.6l-2.8 -3.1l-2.3 -3.4M1183.3 923.6l2.0 3.7l2.4 3.4M1171.9 943.9l0.3 -3.6l-2.5 -2.7M1183.3 923.6l-3.8 -0.4M1151.1 932.3l5.0 -0.7l4.5 -2.1M1156.0 878.0l-0.6 -0.8M1156.0 878.0l-7.1 2.2l-4.6 5.0l-3.6 6.2M1155.4 877.2l-5.1 -0.3l-4.9 -1.6l-4.6 -2.0M1135.1 878.3l1.7 -3.8l4.0 -1.2M1045.4 855.8l3.6 4.3l5.4 2.6l2.4 5.3M1062.6 853.9l0.6 5.7l-2.1 4.7l-4.3 3.7M1056.8 868.0l0.3 2.9M1062.0 912.9l0.5 -3.2l0.6 -3.2M1058.0 895.8l0.9 4.6l4.2 6.1M1083.6 918.6l-4.2 -4.6l0.1 -6.5l-3.1 -5.1M1063.1 906.5l4.7 -0.5l5.0 0.5l3.6 -4.1M1483.7 1099.3l-1.2 -4.2l0.3 -4.3M1492.4 1093.3l-3.8 -1.2l-2.3 -3.1M1486.3 1089.0l-3.4 1.8M1482.8 1090.8l-4.0 -1.9M1480.2 1102.9l-0.9 -3.7l-2.0 -2.7l-3.5 -1.4M1478.9 1088.9l-2.4 3.3l-2.7 2.9M1509.0 1132.7l-1.2 -5.2l1.9 -3.9l4.4 -2.8M1509.0 1132.7l-5.1 -2.5M1504.0 1130.2l-3.7 -2.0l-1.0 -3.5l-0.0 -3.9M1514.1 1120.8l-3.3 -1.8l-3.4 -1.8l-1.3 -4.0M1506.1 1113.2l-1.2 3.5l-1.5 3.2l-4.1 0.9M1506.7 1143.9l3.9 -8.5M1510.6 1135.5l-1.6 -2.8M1490.9 1120.1l4.1 1.8l4.3 -1.1M1506.2 1112.1l-0.0 1.1M1522.4 1120.7l-8.3 0.1M1556.1 1142.5l3.5 5.4M1559.5 1155.8l-0.4 -3.9l0.5 -4.0M1569.4 1145.3l-9.8 2.6M1563.4 1159.8l-3.9 -4.1M1264.2 1237.0l4.5 1.1l1.9 4.1M1255.6 1242.9l-0.3 4.4l6.2 0.5l-0.5 4.5M1279.0 1236.3l-3.6 2.9l-3.4 3.1M1272.0 1242.3l-1.4 -0.2M1231.1 1239.7l1.7 5.2l6.0 1.1l2.3 4.5M1244.9 1249.6l-3.8 1.0M1189.1 1290.4l7.9 3.5l2.2 0.1M1184.2 1304.7l3.1 -1.6l12.4 -2.2M1208.9 1247.1l0.2 4.8l-2.8 4.6l1.1 4.9M1208.9 1247.1l1.0 -0.8M1209.9 1246.3l4.0 2.1l4.4 -1.6l4.1 1.0M1222.4 1247.8l-1.2 6.2l1.7 5.5l1.0 1.7M1194.9 1258.6l4.8 -1.9l3.9 2.0l3.8 2.7M1197.4 1245.6l3.8 0.5l4.0 -0.6l3.7 1.6M1209.9 1232.1l-2.0 4.7l1.2 4.8l0.8 4.7M1228.5 1239.3l-3.1 2.0l0.3 4.6l-3.3 1.9M1236.7 1259.1l2.9 -3.9l1.5 -4.7M1320.2 1245.6l0.1 3.9l2.6 2.9M1333.7 1255.3l-2.7 1.2M1322.9 1252.4l4.6 1.0l3.5 3.1M1350.0 1260.6l-2.1 5.3l-3.9 4.5l-0.5 5.9M1343.5 1276.3l-3.8 -4.4l-6.9 1.1l-3.7 -4.7M1331.0 1256.5l-0.8 3.9l-2.5 3.7l1.4 4.2M1304.9 1248.4l0.5 3.3l1.0 3.3M1322.9 1252.4l-2.8 2.8l-2.8 2.8l-3.3 2.2M1306.4 1255.0l4.6 1.4l3.0 3.8M1329.1 1268.3l-4.2 2.4l-4.1 2.3M1320.8 1273.0l-3.7 -3.0l-2.9 -3.8M1314.0 1260.2l1.5 3.0l-1.3 3.0M1036.8 771.8l2.5 2.8l2.7 2.6l3.4 1.7M1052.2 758.0l2.9 3.6l1.4 4.6l2.6 3.8M1059.1 770.0l-5.4 1.7l-3.3 4.9l-5.0 2.3M1033.0 796.7l4.7 -2.4l5.2 -1.7l3.3 -4.5M1046.2 788.1l0.9 -3.7M1045.4 778.9l1.6 5.5M1119.7 739.7l-2.3 3.2l-0.4 4.0l-1.5 3.5M1124.3 762.0l-3.3 -3.6l-0.8 -5.4l-4.7 -2.6M1097.7 741.1l5.2 3.0l0.0 5.9l2.3 4.7M1115.5 750.4l-4.3 -0.6l-3.6 0.9l-2.4 4.0M1164.7 770.8l-3.1 -1.9M1164.7 770.8l3.6 5.9l-0.5 7.3l3.9 5.8M1150.0 789.2l6.0 2.2l5.8 3.4l6.7 -1.9M1171.7 789.8l-3.2 3.1M1150.0 789.2l-1.3 -2.3M1148.7 787.0l3.7 -4.3l1.2 -4.8l-1.9 -5.4M1156.1 750.3l-4.5 1.6l-5.0 -1.4l-4.5 1.9M1156.1 750.3l3.7 1.6l1.6 3.3l1.0 3.6M1142.1 752.4l0.2 5.3l4.0 4.8l-2.2 5.5M1162.4 758.8l0.3 3.4l-1.9 3.3l0.8 3.4M1144.1 768.0l3.4 2.9l4.2 1.6M1193.8 655.1l5.3 1.7l5.3 2.1l5.7 -0.5M1196.6 668.4l5.1 -2.4l5.1 2.8l5.1 -0.2M1210.1 658.4l2.4 4.3l0.4 4.9M1212.9 667.6l-1.0 1.0M1191.5 676.9l1.1 -5.1l4.0 -3.4M1215.2 647.4l-4.0 2.6l0.3 4.6l-1.4 3.8M1209.6 683.9l1.8 -4.9l-0.8 -5.3l1.3 -5.1M1224.6 667.3l2.4 -2.6M1224.6 667.3l-4.0 -1.2l-3.7 3.7l-4.0 -2.2M1110.1 662.5l-0.6 3.8l-2.5 2.7l-2.4 2.8M1091.9 654.4l-1.1 6.7l2.1 6.0l3.2 5.7M1096.1 672.8l4.4 1.0l4.1 -2.0M1083.4 674.1l3.6 -1.7l3.7 0.6l3.7 1.0M1096.1 672.8l-1.8 1.3M1104.6 671.8l4.3 2.4l2.4 4.4M1113.6 695.1l-3.6 -2.5M1111.3 678.6l0.5 4.8l-1.0 4.6l-0.8 4.7M1076.6 691.7l6.5 0.1l6.1 2.1l6.3 1.5M1076.6 691.7l-4.4 3.2l-3.2 4.0l0.2 5.8M1070.6 706.7l-1.4 -1.9M1070.6 706.7l5.3 1.5l5.0 2.3l5.6 0.2M1086.5 710.7l4.0 -2.3l1.2 -5.0l4.0 -2.3M1095.7 701.1l0.3 -5.1M1094.4 674.0l0.8 7.1l3.1 7.0l-2.8 7.3M1056.9 703.6l4.1 0.6l4.4 -2.9l3.8 3.4M1071.0 729.7l-2.2 -7.6l2.9 -7.8l-1.1 -7.6M1089.0 718.6l-0.2 -4.2l-2.3 -3.7M1110.0 692.7l-4.9 -0.1l-4.0 3.9l-5.1 -0.5M1169.2 739.3l1.7 -4.6l-1.0 -4.8M1169.2 739.3l-5.1 -0.3l-2.0 5.5l-4.4 0.9M1157.7 745.4l-4.8 -2.0l-1.7 -3.9l0.1 -4.9M1151.3 734.6l2.1 -5.0M1162.4 758.8l4.6 -3.9l6.4 -0.9l4.6 -4.0M1178.0 750.0l-3.0 -3.5l-3.6 -3.1l-2.2 -4.1M1147.6 716.8l-0.0 5.2l3.8 3.3l2.0 4.3M1162.3 710.0l6.4 2.7l3.5 5.2l2.4 6.2M1174.6 724.1l-2.8 2.5l-1.9 3.3M1140.9 751.4l1.3 1.0M1141.2 738.7l4.1 0.5l2.3 -4.1l3.7 -0.5M1183.4 716.2l5.9 -0.4l5.9 3.1l5.9 -2.9M1183.4 716.2l-3.1 1.9l-1.0 3.8l-2.9 2.0M1176.4 723.9l5.4 3.0l5.9 2.5l2.7 6.1M1202.9 723.6l-0.1 -3.9l-1.7 -3.7M1194.9 735.3l-4.5 0.2M1182.4 699.4l-2.1 5.7l3.9 5.4l-0.8 5.7M1204.2 708.8l-1.6 3.6l-1.5 3.6M1178.0 750.0l2.0 0.5M1179.9 750.5l2.1 -5.9l5.5 -3.6l2.9 -5.5M1216.5 728.9l-5.7 1.1l-4.1 -2.9l-3.8 -3.5M1216.5 728.9l1.9 4.9M1218.5 733.8l-2.9 6.2l-7.6 1.4l-3.4 5.7M1204.6 747.1l-1.3 -5.5l-4.0 -3.3l-4.4 -3.0M1796.0 460.8l-4.0 3.9l-3.0 5.1l-6.3 0.7M1769.9 468.2l4.3 0.9l4.8 -2.3l3.7 3.7M1782.7 470.5l1.4 5.5l0.2 5.8l3.5 4.8M1817.3 552.4l-3.2 0.0l-15.3 -5.9l-6.6 -0.0M1798.4 516.5l-3.8 2.1l-4.0 1.8M1569.6 477.4l5.0 1.5l3.0 3.7l2.3 4.4M1597.8 472.4l-6.8 3.8l-7.2 3.4l-3.9 7.4M1625.8 458.2l3.1 1.9M1649.8 445.7l-6.1 4.6l-7.1 5.2l-7.7 4.6M1674.5 456.9l-1.8 1.7l-8.6 10.3M1651.7 446.9l2.8 6.4l4.4 8.1l5.2 7.5M1685.7 480.7l-4.8 -2.1l-4.6 1.1l-4.7 1.4M1671.6 481.1l-3.9 -0.3l-1.9 -3.2l-2.8 -2.0M1664.1 468.9l0.7 3.5l-1.8 3.2M1685.7 480.7l2.4 5.3l5.6 3.0l2.1 5.5M1671.6 481.1l3.1 8.1l-1.1 8.7l1.2 8.3M1674.8 506.2l3.0 3.4l4.9 -2.9l3.1 2.9M1695.8 494.5l-3.6 4.9l-5.1 3.9l-1.3 6.3M1183.3 923.6l2.9 -4.3l5.8 -1.6l1.6 -5.5M1204.4 929.4l0.8 -2.0M1205.2 927.4l-2.2 -6.3l-7.6 -2.3l-1.8 -6.6M1405.6 840.4l-5.6 -0.1M1400.0 840.3l-1.9 5.3l-5.0 1.4M1397.2 859.8l-3.9 -2.0M1397.5 867.7l-1.6 -1.7l1.3 -6.2M1379.9 833.2l5.9 -3.5M1360.6 797.0l-3.2 2.7l-5.2 -1.5l-2.4 4.2M1368.6 801.9l-0.4 5.3l-3.0 3.8l-3.7 3.4M1361.5 814.4l-5.4 -2.5l-3.8 -4.1l-2.5 -5.4M1368.4 624.3l-1.4 -4.1l-4.5 0.3l-2.6 -2.3M1359.9 618.2l-7.7 10.6l-0.3 0.4M1299.4 645.1l10.6 0.7l0.4 -0.3M1380.5 612.4l-4.7 -3.6M1377.3 589.3l-2.5 2.2l-1.7 2.9M1303.6 743.5l-4.7 -0.6l-4.6 -0.6l-4.7 0.5M1296.8 725.2l-5.6 2.2l-0.7 7.1l-5.3 2.5M1285.2 737.0l0.8 4.0l3.6 1.8M1285.2 737.0l-3.1 -1.0l-3.1 -1.2M1307.7 754.1l-1.9 3.0l-1.6 3.1M1304.2 760.2l-3.9 0.8l-3.8 2.3l-4.0 -2.4M1292.5 760.9l-0.9 -5.3l-4.6 -2.7M1358.0 779.3l-3.9 0.3l-6.2 2.5l-6.4 2.1M1349.8 802.4l-4.0 -0.4M1345.8 802.0l-1.8 -5.8l1.9 -6.8l-4.4 -5.2M1339.1 770.7l-1.0 4.7l-0.5 4.6l3.5 4.0M1319.2 773.2l5.0 3.3l3.3 5.0l4.3 4.0M1325.9 764.0l-0.9 4.0l-1.8 3.4l-4.0 1.8M1331.8 785.5l4.4 -2.5l4.9 1.0M1259.7 702.9l-4.4 0.7l-4.5 -0.9l-4.2 1.9M1265.6 722.2l-2.5 4.5l-4.6 1.1l-4.4 1.2M1254.1 729.0l-0.7 -5.1l-2.8 -3.2l-4.9 -1.6M1246.6 704.6l0.6 4.9l0.1 4.8l-1.6 4.8M1144.8 917.7l3.0 -3.3M1162.4 922.0l-3.7 -1.9l-2.9 -2.5l-0.5 -4.5M1155.3 913.1l-3.7 1.2l-3.8 0.1M1166.9 808.1l-1.2 1.0M1164.2 819.1l0.9 -3.3l1.6 -3.2l-1.0 -3.5M1181.6 832.3l-1.9 -6.9l2.5 -7.1l-1.9 -6.9M1164.2 819.1l4.6 3.2l1.7 5.5l3.9 3.8M1174.4 831.6l3.6 0.5l3.5 0.5M1172.6 917.1l-0.5 -3.9l1.2 -3.8M1188.9 905.5l2.9 2.5l1.8 3.4M1188.9 905.5l-4.0 1.1l-3.6 -1.9M1173.3 909.4l5.0 -0.6l3.0 -4.1M1155.3 913.1l-0.2 -5.0l5.4 -2.2l0.8 -4.4M1173.3 909.4l-4.2 -2.4l-2.4 -5.0l-5.4 -0.5M1128.9 893.7l-2.8 3.2l-0.1 4.9l-3.5 2.8M1128.9 893.7l3.7 -1.4l3.8 -0.9l3.8 1.8M1140.2 893.2l2.7 4.6M1132.3 908.9l4.1 -1.8l4.5 -1.2l1.3 -5.2M1132.3 908.9l-4.0 0.2l-2.8 -2.5l-3.0 -2.0M1142.9 897.8l-0.7 2.9M1124.3 877.5l3.5 1.2l3.7 -0.5l3.6 0.1M1140.7 891.4l-0.5 1.9M1122.7 885.1l0.8 3.8l3.1 2.1l2.3 2.7M1122.7 885.1l0.2 -3.9l1.4 -3.7M1147.8 914.4l-2.2 -4.4l1.0 -5.8l-4.4 -3.5M1113.0 911.6l2.4 -4.8M1115.5 906.8l3.2 -2.0l3.8 -0.2M1121.0 872.2l1.5 2.8l1.8 2.5M1140.8 873.3l-1.5 -4.1l-0.2 -4.4l-1.1 -4.3M1123.1 864.4l4.3 -4.0l5.7 1.7l4.9 -1.6M1122.7 885.1l-5.0 0.1l-2.3 5.0l-4.4 1.4M1110.2 895.0l0.8 -3.5M1094.5 906.9l0.0 -2.1l-0.2 -4.1l-0.9 -1.8M1110.2 895.0l-5.8 1.8l-5.8 2.6l-5.0 -2.0M1181.6 832.3l6.4 -1.6l1.6 -7.6l6.1 -2.0M1180.3 811.4l3.7 -0.6l2.6 -2.6M1186.6 808.2l0.5 6.1l7.6 1.1l1.0 5.7M1168.5 792.9l-1.8 4.9l2.6 5.4l-2.4 4.9M1186.8 794.0l2.8 4.0l0.4 4.9M1177.0 789.2l3.2 1.7l2.7 2.7l3.9 0.4M1177.0 789.2l-5.3 0.5M1186.6 808.2l2.5 -2.1l0.9 -3.2M1164.7 770.8l7.1 1.8l6.0 -4.7l6.6 -0.7M1187.5 761.0l-1.8 3.0l-1.3 3.2M1204.6 747.1l0.2 2.0M1204.8 749.1l-4.1 4.0l-5.0 2.9l-3.8 4.2M1187.5 761.0l4.4 -0.7M1184.4 767.2l1.2 5.4M1505.6 1043.5l-3.5 1.0l-3.3 1.5l-2.1 3.2M1492.0 1043.1l2.5 2.5l1.5 3.3M1501.7 1059.7l-2.6 -1.8M1496.7 1049.2l0.1 4.7l2.3 4.1M1498.6 1071.4l-3.0 0.3M1495.6 1071.7l-3.5 -3.4M1492.1 1068.3l0.1 -4.0l2.1 -3.5M1499.1 1058.0l-4.8 2.8M1437.0 1060.2l3.0 0.9M1446.0 1057.6l-1.6 2.5M1440.0 1061.1l4.4 -1.0M1473.8 1095.1l-2.8 -0.7M1471.0 1094.4l-2.7 1.8l-3.0 -0.5M1453.6 1089.7l0.0 -2.6M1464.9 1095.1l-0.6 -2.6M1464.3 1092.5l-1.7 -4.6l-4.0 -3.1M1453.6 1087.0l5.0 -2.2M1290.0 1249.5l-1.7 3.2l-1.9 3.0M1272.0 1242.3l3.6 3.2l-2.1 6.1l4.6 2.6M1278.1 1254.2l3.9 2.0l4.4 -0.5M1281.6 1355.8l-3.2 -1.7l-6.7 -3.8M1280.5 1366.5l-5.1 1.6M1274.8 1339.1l0.2 4.1l-2.8 3.3l-0.5 3.8M1272.8 1336.5l2.0 2.6M1264.5 1337.4l8.2 -0.9M1248.6 1265.5l2.1 -2.7l1.2 -3.1l1.4 -3.1M1248.6 1265.5l1.0 3.4l0.9 3.4M1252.5 1273.5l5.1 -2.8l5.5 -2.2l3.4 -5.0M1252.5 1273.5l-2.0 -1.3M1253.3 1256.6l3.5 -1.8l4.0 0.3M1260.8 1255.1l3.6 2.2l2.2 3.6M1236.7 1259.1l2.8 4.3l3.7 2.6l5.4 -0.5M1244.9 1249.6l3.4 1.7l3.3 1.6l1.7 3.7M1238.5 1275.8l-6.0 -0.7l-0.8 -3.2M1238.5 1275.8l3.8 -1.9l4.6 0.9l3.6 -2.5M1255.2 1279.6l3.4 2.3l3.9 0.7M1262.5 1282.6l5.0 -2.3M1267.5 1280.3l2.5 -2.6l1.4 -3.2l0.3 -3.6M1271.7 1270.9l-3.4 -3.1l-1.8 -4.3M1255.2 1279.6l-1.2 -3.1l-1.5 -3.0M1238.5 1275.8l0.9 7.6M1261.0 1252.3l-0.2 2.8M1278.1 1254.2l-4.4 1.3l-2.2 5.0l-4.9 0.4M1301.7 1269.8l-1.1 -3.4l-2.3 -2.6M1301.7 1269.8l-0.9 4.6M1300.8 1274.4l-4.9 -0.9l-3.9 1.7l-3.2 3.5M1287.8 1259.5l-1.7 4.1l-0.3 4.7l-2.8 3.7M1283.0 1272.0l2.5 5.0M1285.4 1277.0l3.3 1.7M1306.4 1255.0l-1.4 4.1l-5.3 0.6l-1.4 4.1M1320.8 1273.0l-1.1 4.9M1307.5 1283.5l4.3 -1.4l3.6 -2.9l4.3 -1.3M1307.5 1283.5l-3.1 -2.4l-0.5 -4.3l-3.1 -2.4M1286.4 1255.7l1.5 3.8M1271.7 1270.9l3.7 0.7l3.8 0.7l3.8 -0.3M1277.2 1285.8l4.3 -1.5l0.4 -5.1l3.5 -2.2M1286.4 1324.0l-3.0 -1.4M1274.8 1339.1l7.2 1.6M1272.8 1336.5l2.8 -4.5l-0.8 -5.3M1274.8 1326.7l5.0 -0.6l3.6 -3.5M1063.6 785.2l1.3 4.5l3.5 3.0M1046.2 788.1l2.6 4.1l4.5 3.0l0.8 5.3M1063.6 785.2l-5.3 -3.4l-5.9 5.5l-5.3 -2.9M1067.6 794.6l-3.3 4.8l-4.7 1.4l-5.5 -0.3M1037.1 808.9l4.7 -3.0l4.8 0.4l5.0 1.9M1059.2 818.6l-2.2 -3.8l-1.1 -4.5l-4.3 -2.1M1051.6 808.2l0.3 -4.2l2.2 -3.5M1065.4 752.2l4.3 2.7l1.5 4.9M1059.1 770.0l3.6 -0.4l3.1 1.9M1102.1 787.6l-2.4 -4.3M1102.1 787.6l-3.6 3.4l-1.4 4.7M1099.8 783.3l-5.9 0.6l-6.0 0.4l-5.9 -1.1M1097.1 795.7l-5.3 0.7l-5.1 -0.1l-4.0 -4.2M1082.0 783.2l-2.1 5.4M1079.9 788.5l2.8 3.6M1068.4 792.7l4.5 0.3l4.1 -0.6l2.9 -3.9M1080.8 777.2l-4.7 -2.5l-5.8 0.3l-4.4 -3.3M1080.8 777.2l2.0 2.7l-0.8 3.3M1144.1 768.0l-3.7 2.0l-4.8 -1.7l-3.3 3.3M1124.3 762.0l-0.5 5.7M1123.8 767.8l4.5 1.3l4.0 2.5M1132.3 771.6l1.5 4.9l-0.9 5.1l1.1 4.9M1101.0 770.1l-5.4 0.6l-5.5 -1.6l-5.3 1.9M1101.0 770.1l2.3 -2.9M1103.3 767.2l-1.0 -5.4M1102.3 761.9l-5.0 -4.2l-6.1 -1.6l-6.2 -1.3M1084.8 771.0l0.2 -4.4l-4.7 -3.1l1.2 -4.7M1080.8 777.2l2.7 -2.7l1.3 -3.5M1099.8 783.3l3.5 -4.1l-2.2 -4.6l-0.1 -4.5M1102.1 787.6l5.2 0.3l5.0 0.8l4.9 2.0M1118.6 770.9l-4.8 -2.6l-6.1 3.2l-4.4 -4.3M1123.8 767.8l-3.3 0.3l-1.9 2.8M1085.3 748.8l-0.3 6.0M1071.2 759.8l3.5 0.4l3.3 -2.4l3.5 1.0M1165.7 809.1l-6.1 -0.7l-6.1 -1.1l-6.2 -0.5M1150.0 789.2l-0.9 5.4l-4.0 4.7l1.0 5.9M1134.0 786.5l-5.0 1.6l-2.1 4.7M1117.2 790.7l1.1 1.3M1118.3 791.9l4.1 2.2l4.5 -1.3M1146.1 805.2l-4.1 2.5l-3.8 -1.0l-3.6 -2.4M1126.9 792.8l2.0 4.2l2.0 4.3l3.7 3.0M1145.3 822.6l-4.7 0.3l-4.6 0.2M1136.0 823.1l0.4 -5.3l-3.3 -3.9l-2.0 -4.4M1147.3 806.8l1.4 5.5l-5.2 4.7l1.8 5.6M1134.6 804.3l-1.9 2.5l-1.6 2.7M1721.5 470.2l3.2 1.5l0.7 4.6l4.1 0.6M1721.5 470.2l-4.0 3.5l-4.3 2.6l-5.6 -1.5M1729.5 476.9l-2.8 6.4l1.5 7.6l-3.9 6.1M1707.6 474.8l1.1 5.9l3.0 5.8l-2.7 6.2M1724.3 497.0l-4.9 1.6M1723.0 459.3l-1.5 11.0M1745.2 469.6l-0.7 1.4M1744.6 470.9l-5.5 0.9l-3.8 5.0l-5.8 0.1M1700.4 468.4l0.3 0.2l1.5 5.5l5.4 0.7M1695.8 494.5l4.3 -0.9l4.7 1.4l4.2 -2.3M1737.1 526.4l0.2 13.1M1764.2 541.2l-3.1 -8.3l-8.1 -10.3M1741.9 522.7l3.7 -0.4l3.7 1.8l3.7 -1.5M1575.4 524.3l4.4 -2.2l-1.0 -6.1l4.2 -2.3M1565.8 502.9l2.5 -3.1l3.6 0.3l3.4 -0.6M1583.0 513.7l-4.3 -3.8l-1.8 -5.1l-1.6 -5.3M1575.3 499.5l3.1 -2.9l1.6 -4.0M1597.8 472.4l5.1 3.6l4.8 3.8l2.0 6.3M1580.0 492.6l6.3 0.8l5.2 3.8l5.7 2.2M1609.7 486.1l-4.9 3.7l-5.0 3.7l-2.6 5.9M1583.0 513.7l6.2 2.2l6.2 1.7l6.7 -0.5M1597.2 499.4l-0.5 6.5l1.7 5.8l3.7 5.4M1591.8 529.7l2.0 -5.7l9.2 -6.0M1720.9 524.0l-5.3 10.5M1720.9 524.0l-4.4 -1.3l-0.9 -4.1l-1.7 -3.4M1713.9 515.2l-8.1 -0.2l-5.7 6.3l-7.5 1.4M1692.6 522.7l-2.1 5.7M1737.1 526.4l-5.1 -3.1l-6.0 3.6l-5.1 -2.9M1719.3 498.6l-2.2 5.4l-0.5 6.0l-2.7 5.2M1724.3 497.0l3.5 3.2l4.7 -0.4M1741.9 522.7l-0.3 -8.8l-6.4 -6.3l-2.7 -7.8M1685.8 509.6l1.5 4.8l2.5 4.2l2.8 4.1M1660.1 511.6l-0.2 3.2M1207.2 905.3l-1.5 -4.8l0.6 -5.4l-3.6 -4.1M1193.6 911.4l4.4 -2.3l5.2 -0.6l4.0 -3.2M1188.9 905.5l2.7 -3.7l1.4 -4.1l-0.1 -4.6M1357.0 829.7l-3.4 -6.9M1369.9 829.1l-1.1 -10.1M1368.8 819.0l-3.1 -2.7l-4.0 -0.8M1335.3 863.6l2.1 -5.3l1.2 -4.6M1341.6 875.0l-4.3 -2.6l-2.2 -3.8l0.2 -5.0M1342.7 836.2l-2.2 -2.0l0.4 -7.2M1346.7 822.1l3.5 -0.5l3.4 1.2M1340.9 827.0l3.9 -1.2l1.9 -3.7M1377.8 816.2l-4.5 1.3l-4.5 1.5M1346.7 822.1l-1.8 -5.4l1.3 -6.1l-3.7 -4.9M1342.5 805.7l3.3 -3.7M1361.5 814.4l0.2 1.2M1373.1 594.4l-4.6 0.6M1361.8 580.9l-1.4 3.1l-0.0 3.6l-2.1 2.6M1368.6 595.0l-3.3 -1.9l-3.7 -1.1l-3.2 -1.5M1359.8 617.7l-4.4 0.5l-1.9 -5.2l-4.2 -0.1M1363.9 610.6l-0.4 -3.6l-2.5 -2.6M1361.0 604.4l-1.2 0.2M1349.3 612.9l-1.6 -3.9l-0.3 -1.4M1375.8 608.8l-4.1 -0.0l-4.2 -1.4l-3.6 3.2M1368.6 595.0l-2.2 3.4l-4.1 0.8M1361.1 601.9l-0.1 2.5M1319.2 773.2l-2.7 0.6M1304.2 760.2l2.7 3.7l0.1 4.5M1316.5 773.8l-3.9 -0.5l-3.2 -1.7l-2.4 -3.2M1218.5 733.8l3.5 2.9l4.2 1.5M1216.5 728.9l0.3 -6.0l5.1 -3.1l3.0 -4.3M1234.5 722.9l-3.8 -1.7l-1.4 -4.8l-4.4 -0.9M1234.5 722.9l-0.2 4.1l1.7 4.2l-2.5 3.9M1244.8 703.4l-7.1 0.9l-6.7 3.1l-7.3 0.2M1244.8 703.4l-2.7 -5.6l0.1 -6.2l-1.7 -5.8M1222.3 706.5l-1.0 -6.6l3.9 -6.0l-0.7 -6.5M1222.3 706.5l1.4 1.2M1228.5 684.3l3.6 0.9l3.9 -2.5l3.5 2.4M1228.5 684.3l-4.1 3.1M1224.9 715.5l-0.8 -3.9l-0.4 -4.0M1234.5 722.9l2.9 -3.6l4.9 2.0l3.4 -2.2M1254.0 681.2l-4.5 1.6l-4.0 2.9l-5.0 0.1M1208.3 706.0l4.7 -0.4l4.7 -0.6l4.6 1.5M1209.6 683.9l5.4 -1.0l5.0 1.2l4.5 3.3M1240.7 670.5l-1.8 4.8l2.9 5.1l-2.3 4.7M1155.4 877.2l-2.6 -5.1l4.8 -5.5l-3.2 -5.1M1154.4 861.5l-2.9 -3.5M1176.3 887.0l-1.2 3.1M1176.3 887.0l-5.1 -1.6l-2.7 -4.0l-2.6 -4.3M1175.1 890.1l-5.0 2.7l-3.4 5.3l-5.9 1.3M1156.3 878.2l4.7 -1.7l4.9 0.6M1159.7 898.5l1.1 1.0M1192.9 893.1l-2.3 -3.4l-4.0 -1.9l-2.2 -3.6M1184.4 884.2l-3.8 2.1l-4.3 0.7M1181.3 904.7l-0.3 -5.6l-2.9 -4.6l-3.0 -4.4M1187.2 877.9l-1.3 3.2l-1.5 3.1M1175.3 863.2l4.2 -0.1l3.0 1.9l1.9 3.7M1175.3 863.2l-2.5 5.0l-3.5 4.4l-3.4 4.5M1174.1 859.3l-6.5 1.5l-6.5 1.2l-6.7 -0.5M1175.3 863.2l-1.2 -3.9M1142.9 897.8l5.5 2.2l5.7 -2.5l5.6 1.0M1135.4 847.9l-0.3 4.4l3.8 3.2l-0.4 4.4M1135.4 847.9l-3.4 1.9l-3.7 -0.5l-3.6 -0.4M1123.1 864.3l3.3 -4.9l0.9 -5.1l-2.6 -5.4M1106.1 880.6l-2.0 -5.7l-6.6 -0.9l-3.1 -4.6M1106.1 880.6l-0.3 2.2M1105.8 882.8l-6.3 3.3l-5.7 4.1M1114.5 873.0l-3.2 2.1l-0.8 4.7l-4.4 0.8M1121.0 872.2l-3.1 1.9l-3.4 -1.1M1057.2 870.9l5.9 -1.3l6.2 0.5l5.4 -3.1M1074.7 867.0l1.7 6.2l3.5 5.1l1.4 1.6M1205.1 804.4l-0.5 5.5l0.6 5.7l-1.1 5.5M1205.1 804.4l4.1 -1.4l2.3 -3.7M1211.5 799.3l2.7 4.5l5.2 1.3M1221.9 818.5l-5.0 2.5l-6.1 -1.3l-4.8 3.4M1206.0 823.1l-2.0 -2.1M1195.7 821.1l4.2 -0.1l4.2 0.1M1196.1 838.6l2.5 -4.1l3.4 -3.0l4.8 -1.0M1196.1 838.6l-4.0 2.4l-3.9 -0.2l-3.8 -2.7M1184.4 838.1l-2.5 -2.2l-0.4 -3.3M1185.6 772.6l3.4 2.8l3.1 3.3l3.8 2.3M1204.5 770.6l-2.6 3.7l-1.3 4.8l-4.7 1.9M1186.8 794.0l4.1 -2.1l3.0 -3.4l3.0 -3.4M1196.9 785.1l-0.9 -4.1M1492.1 1068.3l-3.1 0.2M1489.0 1068.5l-2.6 -4.6M1494.3 1060.8l-3.0 -1.4l-3.2 1.0M1486.4 1063.9l1.7 -3.5M1464.5 1066.0l-3.5 -2.8l-1.8 -4.0M1464.5 1066.0l2.8 -4.2M1467.3 1061.8l-1.3 -3.0l-1.1 -3.2M1459.2 1059.2l2.8 -1.9l2.9 -1.7M1472.8 1061.9l1.3 -5.3M1472.8 1061.9l-5.5 -0.1M1464.9 1055.6l1.3 -2.9M1474.1 1056.6l-4.4 -1.0l-3.5 -2.9M1478.5 1038.2l-0.9 4.8l-2.4 4.2M1475.2 1047.2l-3.1 -1.1l-2.9 1.4M1457.1 1046.3l4.5 1.9l4.3 2.6M1469.2 1047.5l-3.3 3.3M1456.7 1059.3l2.5 -0.1M1454.1 1055.7l2.6 3.6M1465.9 1050.8l0.4 1.9M1431.8 1067.0l2.7 2.6l2.8 2.6l-0.1 2.3M1441.2 1070.7l-2.6 2.4l-0.5 1.0M1453.6 1087.0l-4.5 -1.9l-3.0 -3.8M1448.4 1064.4l-1.1 5.4M1448.4 1064.4l3.1 -0.0l3.2 -0.1M1454.5 1070.6l0.6 -5.5M1454.5 1070.6l-2.9 1.1l-3.1 -0.5M1448.5 1071.2l-1.2 -1.4M1444.4 1060.1l4.1 4.3M1441.2 1070.7l3.1 -0.4l3.0 -0.5M1456.7 1059.3l-2.0 5.0M1446.1 1081.3l2.3 -2.8M1448.4 1072.8l0.1 -1.6M1464.5 1066.0l-1.9 1.7M1462.6 1067.7l-4.3 0.3l-3.2 -2.8M1478.2 1086.4l0.7 2.5M1479.6 1082.8l3.2 -1.3M1478.2 1086.4l1.4 -3.6M1486.3 1089.0l1.0 -4.8M1482.8 1081.4l4.4 2.7M1493.8 1085.6l-2.6 -2.7M1487.2 1084.1l3.9 -1.2M1501.1 1080.2l-4.5 0.2l-4.1 -1.7M1491.2 1082.9l1.3 -4.2M1495.6 1071.7l-2.8 2.0l-0.8 3.3M1492.5 1078.7l-0.5 -1.7M1464.3 1092.5l2.0 -3.8l1.7 -3.9M1471.0 1094.4l1.6 -4.1l-1.0 -4.3M1468.0 1084.8l3.6 1.2M1478.2 1086.4l-3.1 -1.7l-3.3 1.1M1479.6 1082.8l-3.3 -3.0M1476.3 1079.8l-3.2 1.3M1473.1 1081.1l-1.3 4.7M1467.6 1084.2l1.1 -4.4M1473.1 1081.1l-3.1 -1.7M1468.6 1079.8l1.4 -0.4M1454.5 1070.6l0.7 1.0M1462.6 1067.7l-0.9 3.7M1455.2 1071.6l3.3 -0.0l3.2 -0.2M1448.4 1078.5l2.9 -1.9l3.5 -0.1M1455.2 1071.6l-0.4 4.8M1328.8 1305.8l2.1 0.2l5.4 1.9l5.3 -2.9M1332.6 1319.1l0.4 0.6l6.4 2.5M1341.6 1305.0l0.0 4.2l-0.6 4.3l3.0 3.6M1339.4 1322.2l1.9 -3.0l2.7 -2.1M1308.7 1293.7l-0.6 -3.1l-2.1 -2.4M1306.0 1288.2l-4.1 2.9l-4.4 0.4l-4.7 -0.9M1295.3 1306.6l-3.0 -1.6l-0.4 -5.4l-1.7 -4.7M1290.2 1294.9l2.6 -4.3M1324.0 1297.9l2.7 -4.0l1.1 -4.7M1319.7 1277.9l1.5 4.6l5.9 1.5l0.7 5.2M1324.0 1297.9l-4.5 -3.5l-5.2 -1.2l-5.6 0.5M1324.3 1303.2l-0.7 -1.2l0.4 -4.1M1288.8 1278.7l-1.0 4.7l6.0 2.4l-1.0 4.8M1282.9 1312.9l-1.2 4.9l1.7 4.8M1282.9 1312.9l4.8 -2.0l5.9 1.4l2.0 -2.4M1284.6 1295.6l-3.7 3.4l-4.3 2.9l-0.1 5.8M1276.5 1307.7l3.4 2.3l3.0 2.9M1277.2 1285.8l0.2 3.9M1277.4 1289.7l3.9 2.6l3.3 3.3M1273.4 1307.6l-5.5 1.2l-3.2 3.5l-1.2 5.1M1273.4 1307.6l-0.4 -4.9l-4.9 -1.9l-2.0 -3.8M1264.5 1296.3l-9.4 2.6l-0.7 0.5M1264.5 1296.3l1.7 0.7M1274.8 1326.7l-5.6 -0.8l-3.4 -3.4l-1.4 -2.8M1277.4 1289.7l-4.3 1.6l-3.7 2.4l-3.3 3.3M1262.5 1282.6l3.7 4.1l-5.4 5.5l3.7 4.1M1067.6 794.6l2.3 4.6l-0.1 5.5l3.2 4.2M1082.7 792.1l-2.4 4.3l4.0 3.8l-0.6 4.1M1083.7 804.3l-3.9 0.8l-4.4 -0.4l-2.4 4.2M1072.1 811.5l0.9 -2.6M1118.2 838.8l3.1 -3.2l5.2 1.1l3.1 -3.2M1129.6 833.5l-0.1 -3.4l1.1 -3.2M1130.6 826.9l-4.2 -1.7l-3.0 -3.6l-3.8 -2.3M1119.6 819.3l-4.5 1.4l-1.9 4.3M1136.0 823.1l-2.7 2.0l-2.7 1.8M1131.1 809.5l-3.9 1.1l-3.9 1.2l-3.4 2.4M1119.6 819.3l0.3 -5.2M1118.3 791.9l-4.0 3.9l-1.7 4.7l0.5 5.5M1749.5 484.3l5.3 1.9l5.2 2.6l6.0 -1.4M1744.0 496.0l7.5 2.7l6.3 4.6l5.5 5.6M1766.0 487.4l1.7 3.1l0.1 4.0l3.4 2.2M1771.2 496.7l0.2 5.0l-1.9 4.6M1769.5 506.3l-3.5 0.4l-2.7 2.2M1744.6 470.9l-0.9 5.4l3.9 3.6l1.9 4.4M1732.5 499.8l4.0 -0.8l4.3 0.1l3.2 -3.1M1769.9 468.2l-1.4 6.4l-1.0 6.4l-1.5 6.4M1753.0 522.6l1.9 -5.7l6.6 -2.2l1.8 -5.8M1787.8 486.6l-7.1 0.8l-2.6 8.2l-6.9 1.1M1790.6 520.4l-8.4 -2.6l-7.2 -4.5l-5.5 -7.0M1609.7 486.1l3.9 2.3l4.7 -1.0l4.0 1.5M1628.9 460.1l0.4 6.4l3.1 5.7l1.6 6.1M1622.3 488.9l2.0 -5.6l4.2 -3.2l5.5 -1.8M1663.0 475.6l-4.0 3.2l-5.2 0.8l-4.2 2.8M1649.6 482.4l-4.8 -3.1l-5.6 0.3l-5.2 -1.3M1660.1 511.6l-3.9 -2.4l-3.9 -2.6M1649.6 482.4l0.8 8.1l1.4 8.0l0.5 8.1M1608.1 519.2l5.9 -1.4l3.8 -5.6l6.1 -1.1M1608.1 519.2l0.3 7.9l0.1 7.9l4.8 6.9M1613.3 541.9l1.7 1.3M1640.3 535.7l-3.2 -8.1l-5.8 -13.0M1603.0 518.0l5.1 1.2M1622.3 488.9l1.2 7.3l1.7 7.4l-1.3 7.5M1611.5 542.5l1.8 -0.6M1652.3 506.6l-6.8 3.2l-6.9 2.9l-7.3 1.9M1341.6 949.7l-4.3 -0.5l-3.8 -1.8l-3.8 -1.7M1342.3 933.0l-2.1 0.6l-4.8 7.0l-7.9 0.9M1329.7 945.7l-2.1 -4.2M1202.7 891.0l3.3 -4.0M1218.7 889.2l-4.6 1.3l-4.0 -2.3l-4.1 -1.2M1218.7 889.2l1.1 4.6l1.5 4.6M1221.3 898.4l-3.7 2.0l-3.0 2.5l-0.0 4.6M1205.2 927.4l2.6 -1.5M1207.7 925.9l5.0 -5.1l-0.1 -7.0l2.0 -6.3M1348.2 885.7l0.7 5.6l-4.8 4.6l0.9 4.1M1203.0 857.1l1.6 6.2l5.8 2.8l3.9 4.4M1203.0 857.1l-3.8 1.8M1198.4 860.2l0.8 -1.3M1198.4 860.2l-0.8 5.8l-0.5 5.8l3.9 5.1M1201.0 876.9l3.0 2.0M1206.2 852.8l-3.1 4.3M1196.1 838.6l5.4 3.3l3.8 4.4l0.9 6.5M1182.8 847.0l-0.3 -4.6l1.9 -4.3M1182.8 847.0l6.6 2.4l3.2 7.1l6.6 2.3M1184.4 868.7l5.3 -1.8l2.8 -5.9l5.9 -0.8M1174.1 859.3l0.6 -3.6M1187.2 877.9l4.7 0.5l4.4 -2.7l4.7 1.2M1206.0 887.0l0.9 -4.5l-2.9 -3.7M1218.7 889.2l2.7 -3.3l2.6 -3.4M1214.3 870.5l4.2 1.7l4.3 -1.5M1224.0 882.5l1.0 -4.1l0.6 -4.0l-2.8 -3.7M1204.8 749.1l4.8 2.3l2.8 5.0l5.1 1.9M1226.2 738.2l-1.5 4.6l1.4 4.7M1214.2 770.8l-4.8 -2.3l-4.9 2.1M1214.2 770.8l3.7 -3.0l0.8 -4.8M1218.7 763.0l-1.2 -4.7M1260.7 743.5l-2.4 4.7l-0.1 5.4l-2.3 4.7M1260.7 743.5l-1.6 -3.9l-4.3 -1.4l-2.1 -3.4M1244.5 738.9l1.8 5.6l-2.3 4.9l-2.3 4.9M1255.9 758.3l-4.0 0.6l-3.7 1.6l-4.1 0.3M1244.1 760.8l-1.9 -3.0l-0.5 -3.5M1270.1 743.6l-4.6 -1.0l-4.8 0.9M1279.0 734.8l-4.0 2.0l-3.8 2.1l-1.1 4.7M1254.1 729.0l-1.4 5.8M1233.5 735.1l3.2 2.7l4.7 -1.7l3.1 2.8M1226.1 747.5l5.1 2.6l5.2 2.1l5.3 2.1M1287.0 752.9l-3.8 -0.2l-3.5 0.9l-3.3 2.0M1270.1 743.6l3.3 2.9l0.5 3.9l0.3 4.1M1276.4 755.6l-2.3 -1.1M1255.9 758.3l3.5 1.4l2.9 2.5M1274.2 754.5l-2.9 4.2l-5.0 0.9l-4.0 2.6M1153.9 848.3l3.8 -1.5l3.8 -1.5M1153.9 848.3l-1.8 -4.1l-4.3 -1.5l-3.0 -2.7M1144.8 840.0l-0.3 -5.0l4.7 -2.9l0.7 -4.5M1163.9 837.5l-2.6 3.5l0.2 4.3M1151.2 827.5l-1.3 0.0M1174.6 855.6l-3.8 -4.2l-3.3 -4.7l-6.0 -1.4M1151.5 858.0l1.6 -3.1l-0.9 -3.6l1.7 -3.0M1138.3 841.8l3.2 -1.0l3.3 -0.8M1135.4 847.9l0.4 -3.6l2.5 -2.5M1138.3 841.8l-4.2 -1.4l-3.0 -2.7l-1.5 -4.2M1174.4 831.6l-2.9 3.0l-4.5 0.2l-3.1 2.7M1164.2 819.1l-5.4 1.2l-2.0 6.3l-5.6 0.9M1074.7 867.0l1.1 -4.5l3.3 -3.2M1094.4 869.4l0.4 -2.3M1079.1 859.3l5.1 2.8l4.1 5.0l6.5 0.0M1113.2 825.0l-3.9 0.8l-4.0 0.7l-3.7 -2.1M1099.3 828.1l2.3 -3.7M1099.3 828.1l-1.3 3.8l1.8 3.1l1.8 3.1M1118.2 838.8l-1.6 3.2M1101.6 838.1l5.8 -1.7l3.4 7.4l5.8 -1.8M1123.1 864.3l-2.9 -5.2l-4.8 -2.7l-5.5 -1.5M1116.7 842.4l-2.8 3.9l-1.0 4.9l-3.0 3.7M1227.3 785.5l-4.7 5.2l-7.7 1.7l-3.4 6.7M1227.3 785.5l-2.3 -5.8l-4.2 -3.8l-5.9 -2.0M1214.9 773.9l-2.9 5.0l-4.2 4.4l-1.1 5.9M1211.5 799.1l0.6 -4.4l-5.6 -1.3l0.2 -4.2M1196.9 785.1l3.7 0.3l2.3 3.7l3.8 0.1M1480.7 1058.8l4.9 -1.4M1480.7 1058.8l-4.1 -3.3M1482.3 1049.9l4.3 2.8M1482.3 1049.9l-3.9 0.8M1486.6 1052.7l-0.9 4.7M1478.4 1050.7l-1.8 4.8M1481.3 1065.3l5.1 -1.4M1481.3 1065.3l-1.5 -0.6M1479.9 1064.7l0.9 -5.9M1488.1 1060.4l-2.4 -3.0M1474.1 1056.6l2.5 -1.1M1478.6 1065.2l-4.7 -1.3M1473.8 1063.8l-1.1 -2.0M1478.6 1065.2l1.3 -0.5M1483.9 1044.2l-1.7 5.8M1496.0 1048.9l-2.5 2.8l-3.5 0.4l-3.4 0.6M1475.2 1047.2l3.1 3.5M1480.9 1073.7l2.9 3.2M1480.9 1073.7l2.6 -3.9M1483.8 1076.9l4.1 -1.5M1487.9 1075.4l-0.4 -5.3M1483.5 1069.8l3.9 0.2M1476.3 1079.8l-0.4 -2.6M1479.6 1073.6l-3.7 3.6M1479.6 1073.6l1.3 0.1M1482.8 1081.4l1.0 -4.5M1477.2 1070.8l1.4 -5.6M1477.2 1070.8l2.4 2.8M1481.3 1065.3l2.2 4.5M1492.0 1077.0l-4.1 -1.6M1489.0 1068.5l-1.6 1.6M1467.1 1074.0l5.0 1.6M1467.1 1074.0l2.6 -5.0M1473.2 1071.2l-2.4 -2.3M1473.2 1071.2l-0.4 4.2M1469.7 1069.0l1.0 -0.1M1477.2 1070.8l-4.0 0.4M1473.8 1063.8l-3.1 5.0M1475.9 1077.2l-3.2 -1.8M1470.0 1079.4l2.1 -3.7M1464.5 1066.0l5.2 3.0M1457.1 1077.9l3.2 -1.2l2.7 -2.2M1457.1 1077.9l1.5 3.1l0.2 3.6M1461.9 1083.2l1.2 -3.4l1.7 -3.3M1461.9 1083.2l-3.1 1.4M1463.0 1074.5l1.6 1.0M1464.5 1075.5l0.3 1.0M1454.8 1076.5l2.3 1.5M1461.7 1071.4l1.2 3.1M1467.6 1084.2l-5.7 -1.0M1468.6 1079.8l-3.8 -3.2M1467.1 1074.0l-2.6 1.5M1345.1 1301.5l3.8 4.1l6.0 -4.1l4.0 3.4M1345.1 1301.5l-2.5 -5.4l2.2 -5.9l-1.2 -5.5M1343.6 1284.7l1.6 -2.0M1359.0 1293.2l-3.3 -3.6l-4.4 -2.6l-2.9 -4.0M1359.0 1293.2l1.1 3.9l-2.6 3.9l1.4 3.9M1345.2 1282.6l3.2 0.3M1327.8 1289.2l5.8 0.4l4.9 -3.0l5.1 -1.9M1343.5 1276.3l2.1 2.8l-0.4 3.5M1360.3 1278.2l-11.9 4.8M1369.6 1300.8l-10.0 5.0M1359.6 1305.7l-0.8 -0.8M1348.5 1331.8l-5.0 -0.9l-0.7 -5.3l-3.4 -2.6M1348.5 1331.8l-2.6 6.7M1339.4 1323.0l-4.0 2.7M1367.2 1360.2l-0.0 -3.4l-0.4 -3.3M1366.8 1353.5l-4.4 -2.9l-5.5 0.5l-3.4 -2.2M1360.0 1312.9l-1.7 2.9l-2.8 1.9M1360.0 1312.9l8.5 3.0M1355.5 1317.7l-2.3 4.1l2.2 3.9l0.7 4.0M1356.1 1329.7l3.7 1.1l2.1 2.8M1344.0 1317.1l3.7 2.6l4.1 -4.5l3.7 2.5M1359.6 1305.7l1.1 3.5l-0.7 3.7M1348.5 1331.8l3.7 -1.6l3.9 -0.5M1353.2 1347.8l4.5 -3.0l1.0 -6.3l2.5 -3.3M1366.8 1353.5l6.4 -3.7M1089.4 814.8l-2.6 -2.7l-0.3 -3.5l-0.7 -3.4M1089.4 814.8l3.3 0.7l3.6 -0.6l3.2 1.6M1097.1 801.2l1.1 5.1l4.7 2.4M1102.9 808.7l-0.3 4.5l-3.1 3.3M1083.7 804.3l2.1 0.8M1081.3 820.6l-3.9 -2.2l-2.7 -3.4l-2.6 -3.5M1081.9 830.8l-1.9 -3.3l3.0 -3.6l-1.7 -3.3M1099.3 828.1l-6.0 -0.3l-6.0 -0.6l-5.4 3.6M1101.6 824.4l-0.2 -4.2l-1.9 -3.7M1097.1 795.7l0.0 5.5M1113.1 806.0l-2.9 3.0l-3.9 -1.2l-3.4 0.9M1329.7 945.7l-2.3 5.1l-2.4 5.0l0.4 5.8M1336.7 977.1l-3.0 -4.1l-5.2 -1.0l-3.8 -3.0M1325.8 962.4l-0.8 3.3l-0.3 3.3M1319.7 991.2l-1.6 -5.5l0.5 -5.7l-0.6 -5.6M1324.7 969.0l-3.1 3.1l-3.6 2.3M1236.1 986.3l-0.0 -5.4l3.4 -3.2l3.7 -3.0M1255.4 978.7l-4.2 -1.0l-4.5 0.1l-3.5 -3.1M1279.1 972.1l-6.1 1.3l-4.7 -3.1l-4.7 -3.1M1278.3 983.2l-1.6 -3.9l3.2 -3.4l-0.8 -3.8M1255.4 978.7l1.2 -5.0l2.0 -4.3l5.0 -2.2M1221.9 970.2l3.7 -1.6M1225.7 968.6l6.1 -0.2l4.8 4.0l5.8 0.8M1243.2 974.7l-0.8 -1.5M1338.5 848.5l-1.0 0.1l-4.0 -2.8l-4.4 -1.6M1340.9 827.0l-3.8 0.7l-3.8 -0.1l-3.6 -1.9M1329.1 844.2l-3.8 -4.9l1.4 -5.7l-0.2 -5.5M1329.7 825.7l-3.2 2.4M1329.7 825.7l-0.8 -5.8l1.4 -5.7l-0.6 -5.8M1331.8 785.5l-2.1 3.8l-5.1 0.9l-1.5 4.4M1323.1 794.6l2.9 4.0l2.2 4.3l0.7 5.0M1231.5 802.6l1.5 -3.2l1.2 -3.2l1.0 -3.3M1219.4 805.1l4.4 0.9l3.8 -2.0l3.9 -1.4M1227.3 785.5l5.6 0.2M1232.9 785.8l1.3 3.5l1.0 3.6M1237.8 810.7l4.7 -0.6M1231.5 802.6l2.3 2.6l1.1 3.5l2.9 2.0M1235.2 792.9l4.0 3.4l5.4 -0.1l4.5 2.4M1242.5 810.0l3.0 2.1l4.3 0.6l1.4 4.2M1251.2 816.9l4.1 -1.6l3.6 -2.8l4.0 -1.7M1262.9 810.8l-2.4 -5.3l-3.0 -4.9l-5.2 -3.1M1252.3 797.5l-3.2 1.1M1273.5 783.4l3.2 -2.4l3.5 1.6l3.3 0.4M1273.5 783.4l-1.8 -3.2l-3.4 -2.2l-0.3 -4.1M1268.0 773.9l4.1 -1.4l3.4 -2.4l2.8 -3.2M1283.5 783.0l3.8 -2.0l-1.2 -5.0l2.9 -2.6M1278.3 766.9l4.5 1.9l4.9 0.3M1287.7 769.1l1.2 4.4M1270.2 791.2l3.2 -3.2l0.1 -4.6M1270.2 791.2l3.8 3.9l-0.5 5.4M1290.4 791.1l-0.7 3.5l-4.4 1.7l0.7 4.2M1290.4 791.1l-2.2 -2.8l-1.4 -3.4l-3.3 -1.9M1262.3 762.2l-0.1 4.4l4.6 2.5l0.0 4.3M1266.8 773.4l1.2 0.5M1292.5 760.9l-0.3 5.3l-4.5 2.9M1299.1 776.8l1.3 -4.1l5.2 -0.3l1.4 -4.0M1299.1 776.8l-2.7 -3.1l-3.8 0.0l-3.6 -0.3M1074.5 851.8l-1.8 -5.6l1.6 -6.2l-2.8 -5.4M1078.1 854.1l3.6 -2.7l3.4 -3.1l4.3 -1.6M1089.4 846.7l-2.1 -5.5l-1.4 -5.8l-4.0 -4.6M1071.5 834.6l2.9 -3.0l3.6 -0.6l3.9 -0.2M1062.6 853.9l3.6 -2.5l3.9 -1.1l4.4 1.5M1079.1 859.3l-1.0 -5.1M1067.1 833.4l4.3 1.2M1102.6 864.1l-3.3 2.8l-4.2 -0.0M1102.6 864.1l0.7 -3.8l4.5 -1.3l0.9 -3.8M1095.1 866.9l-2.7 -6.3l4.1 -6.9l-3.1 -6.3M1108.7 855.2l-5.9 -0.6l-4.0 -3.2l-2.8 -5.0M1114.5 873.0l-4.3 -2.5l-4.1 -2.7l-3.5 -3.7M1109.9 854.9l-1.2 0.4M1089.4 846.7l4.0 0.7M1101.6 838.1l-4.1 3.3l-1.5 5.0M1306.7 951.7l-2.7 6.6l5.1 7.0l-3.2 6.6M1306.7 951.7l-5.9 1.1l-5.8 -1.2l-5.9 -0.2M1285.9 965.6l-1.1 -4.0l-0.6 -4.0l2.0 -3.9M1285.9 965.6l5.1 2.6l3.5 4.9l5.6 1.7M1286.2 953.7l2.9 -2.3M1318.0 974.4l-4.5 1.7l-3.8 -2.2l-3.8 -2.0M1279.1 972.1l3.2 -3.4l3.6 -3.1M1289.1 988.0l1.9 -5.9l4.8 -3.4l4.3 -3.9M1306.5 991.2l-4.3 -4.6l0.1 -6.2l-1.6 -5.6M1243.8 955.1l0.2 -5.2l-2.0 -5.2l2.7 -5.1M1243.8 955.1l-4.6 1.0l-4.2 -1.8l-4.3 -0.8M1230.7 953.5l-1.7 -3.4l-1.2 -3.8l-4.2 -1.4M1244.7 939.6l-4.6 -2.7M1240.1 936.9l-4.6 1.9l-5.7 -1.7l-4.0 4.0M1223.6 944.9l2.3 -3.8M1245.2 956.5l-2.3 5.3l0.8 5.9l-1.3 5.5M1245.2 956.5l-1.4 -1.4M1307.4 951.2l1.8 -3.0l2.9 -2.3l-0.3 -3.9M1289.7 932.6l2.0 6.3l-1.1 6.3l-1.5 6.2M1298.2 929.9l3.8 0.2l2.4 3.3l3.5 0.9M1311.8 942.0l-3.0 -3.2l-0.9 -4.5M1327.5 941.5l-2.7 -1.8M1311.8 942.0l4.0 -2.6l4.3 -1.0l4.8 1.2M1324.9 939.6l-2.4 -7.1l1.1 -6.7l0.0 -0.1M1343.9 901.1l-6.1 -2.2l-8.4 0.9l-7.0 -4.4M1321.8 912.5l-1.0 -2.3l1.6 -7.4l0.0 -7.4M1316.5 773.8l-1.7 3.5l-3.0 2.9l0.1 4.2M1301.5 786.9l3.5 -0.5l3.5 -1.1l3.4 -0.9M1290.4 791.1l4.7 -1.0l4.7 -0.5M1301.5 786.9l-1.7 2.8M1311.9 784.4l1.5 4.2l5.3 1.2l1.3 4.4M1255.1 791.6l-0.6 3.3l-2.2 2.6M1273.5 800.5l-4.1 1.9l2.8 5.9l-4.3 1.8M1270.2 791.2l-5.1 -2.5l-5.0 3.4l-5.0 -0.5M1262.9 810.8l2.3 0.4M1267.9 810.1l4.3 5.8l6.3 2.6l6.6 2.2M1265.3 811.2l-0.3 5.3l-1.1 5.4l1.7 5.3M1285.1 820.7l-2.5 3.5l-0.2 4.9l-4.5 2.1M1265.6 827.2l3.1 4.3l5.3 -2.1l3.9 1.8M1206.8 830.5l4.1 3.7M1206.2 852.8l3.7 -1.2l3.3 -2.1M1211.0 834.2l1.9 4.9l-2.5 5.6l2.8 4.8M1223.2 870.2l-4.6 -5.8l2.1 -7.8l-3.1 -6.2M1213.2 849.5l4.5 0.9M1233.6 784.9l6.6 1.8l5.0 -7.1l6.6 1.9M1233.6 784.9l-2.4 -6.4l4.3 -5.8l-0.3 -6.1M1235.2 766.6l3.4 -3.9l5.0 -1.0M1252.5 779.9l-0.7 1.6M1232.9 785.8l0.8 -0.9M1218.7 763.0l6.0 -1.1l4.8 4.4l5.7 0.3M1244.1 760.8l-0.5 0.9M1266.8 773.4l-5.8 -0.1l-5.0 1.6l-3.5 5.0M1275.3 950.5l-4.7 1.4l-3.2 5.2l-5.6 -0.9M1260.6 955.5l1.2 0.7M1260.6 955.5l-1.2 -5.6l-0.9 -5.7l-1.3 -5.6M1257.2 938.6l4.1 -2.8l5.2 1.3l4.2 -2.3M1282.2 927.3l2.7 4.1l4.8 1.2M1282.2 927.3l-4.9 -0.4l-1.6 5.7l-4.3 0.8M1271.4 933.4l-0.7 1.4M1286.2 953.7l-3.7 -0.9l-3.5 -1.4l-3.7 -0.9M1245.2 956.5l5.0 -2.1l5.2 1.7l5.2 -0.6M1254.0 936.7l3.2 1.9M1262.5 921.7l-4.6 1.6l-4.0 2.9M1254.0 936.7l-2.3 -3.5l0.1 -3.5l2.1 -3.5M1271.4 933.4l-2.9 -4.0l-2.6 -4.2l-3.4 -3.5M1341.2 877.6l-3.3 3.8l-5.6 -1.9l-3.5 3.1M1328.8 882.6l0.5 5.6l-3.2 3.6l-3.8 3.4M1259.1 884.4l-3.0 -3.7l-4.1 -2.2M1252.0 878.5l-4.1 1.5l-4.3 -1.2M1255.9 894.3l-4.6 1.4l-3.9 2.8M1243.6 878.8l-3.5 3.4l-2.1 4.4M1238.0 886.6l1.7 4.3l-0.2 4.5M1239.5 895.4l3.2 3.4l4.7 -0.3M1274.7 889.8l3.0 -2.1M1274.7 889.8l-4.7 -3.0l-6.3 2.6l-4.3 -4.2M1271.7 869.2l-2.0 6.9l-4.7 4.7l-5.9 3.6M1271.7 869.2l3.3 0.4l2.3 2.3M1277.3 871.9l-0.1 5.3l-2.4 5.3l2.8 5.2M1255.7 865.1l-3.3 3.9l0.4 4.9l-0.8 4.6M1271.7 869.2l-2.8 -4.4M1236.4 867.2l3.7 -4.9l6.2 0.2l4.8 -2.8M1255.7 865.1l-1.2 -3.6l-3.4 -1.8M1236.4 867.2l1.7 4.4l0.6 4.9l4.9 2.3M1223.2 870.2l3.9 -0.6l3.0 -3.3l4.0 -0.1M1236.4 867.2l-2.2 -0.9M1221.3 898.4l4.3 -1.3l3.5 2.6l3.9 0.9M1233.0 900.6l3.2 -2.7l3.3 -2.5M1328.8 882.6l-4.5 -2.6l-2.4 -4.7l-3.6 -3.4M1322.3 895.2l-3.5 -2.9l-4.5 4.2l-3.6 -2.8M1310.7 893.7l-4.3 -3.6l2.5 -5.9l-2.8 -4.1M1277.3 871.9l4.5 -1.4l4.6 -1.1M1286.4 869.4l3.0 3.6l3.3 3.4l0.4 5.1M1277.6 887.7l4.0 -1.7l3.1 4.0l3.8 -0.6M1255.9 894.3l3.2 4.2l6.1 1.3l1.3 5.9M1274.7 889.8l-2.1 3.4l1.3 3.7l-0.6 3.6M1273.3 900.5l-3.1 3.1l-3.7 2.1M1249.2 910.6l-2.1 -3.8l-1.6 -3.9l1.9 -4.4M1266.5 905.7l-1.4 5.8M1262.5 921.7l0.1 -5.0l2.8 -4.1M1282.2 927.3l1.4 -4.0l-2.0 -3.8M1281.6 919.5l-6.4 0.1l-3.8 -6.1l-6.0 -0.9M1243.1 918.4l4.8 -2.5l1.3 -5.3M1253.9 926.2l-4.6 -1.2l-3.6 -2.7l-2.6 -3.9M1265.4 912.6l-0.4 -1.1M1238.8 921.0l0.6 -1.8M1238.8 921.0l-6.1 1.5l-5.3 2.8l-3.0 5.9M1239.4 919.2l-2.2 -2.7l-3.0 -1.6M1234.2 914.9l-5.0 0.3l-4.9 0.4M1219.7 926.3l2.5 2.3l2.2 2.6M1240.1 936.9l2.0 -5.5l-2.0 -5.2l-1.3 -5.2M1243.1 918.4l-3.7 0.8M1214.6 907.5l5.0 0.6l1.5 4.7l3.2 2.8M1207.7 925.9l4.1 -2.4l4.0 0.9l3.9 1.9M1308.8 801.6l2.4 3.2l-0.5 4.8l3.7 2.5M1305.5 800.9l-3.2 4.7l-5.2 2.6l-4.0 3.7M1314.4 812.1l-0.5 3.2l-1.9 2.7M1312.0 818.0l-6.2 -2.0l-5.7 5.7l-6.2 -2.5M1293.1 811.9l-0.6 3.1l0.1 3.2M1292.6 818.2l1.3 1.0M1299.8 789.6l1.2 4.1l3.1 3.2l1.4 4.0M1320.0 794.2l-5.1 0.4l-2.5 4.4l-3.6 2.6M1328.9 807.9l-4.3 3.2l-6.0 -2.5l-4.2 3.5M1286.0 800.5l2.4 3.8l0.7 4.8l4.0 2.8M1326.5 828.1l-4.3 1.2l-4.2 -1.7M1285.1 820.7l3.7 -1.5l3.8 -1.0M1251.1 859.7l0.6 -4.4l-0.8 -4.3M1270.9 855.1l-2.0 4.6l-0.0 5.1M1270.9 855.1l-3.0 -2.5l-1.7 -3.5M1250.9 851.0l5.2 0.1l5.2 -0.1l4.9 -1.9M1278.5 835.8l-0.6 -4.6M1278.5 835.8l-4.7 1.4l-4.1 2.3l-2.6 4.3M1258.4 832.5l2.8 3.9l2.9 3.8l3.0 3.6M1221.9 818.5l1.9 1.3M1211.0 834.2l4.5 1.2l3.5 -4.3l4.5 1.2M1223.5 832.3l0.2 -4.2l1.6 -4.1l-1.5 -4.2M1237.8 810.7l-0.6 5.1l-4.1 3.1M1223.8 819.8l4.7 -0.2l4.6 -0.7M1251.2 816.9l0.3 4.6l-2.2 4.0M1233.1 818.9l2.0 2.4l1.8 2.6M1266.2 849.1l1.0 -5.2M1258.4 832.5l-4.9 0.1M1250.2 850.2l-0.7 -6.2l1.3 -5.8l2.7 -5.6M1249.3 825.5l1.3 3.1l1.5 2.9M1252.1 831.5l1.4 1.0M1270.9 855.1l4.9 -0.4l4.5 -2.1M1286.4 869.4l3.8 -2.3l1.1 -4.3M1301.4 868.0l-2.5 -3.2l-3.3 -1.7l-4.0 -0.4M1301.4 868.0l-1.5 4.8l4.3 2.9l1.1 4.0M1293.1 881.5l3.7 -2.9l4.8 4.4l3.7 -3.3M1278.5 835.8l1.9 4.2l4.1 2.0M1280.3 852.6l2.4 -3.1l-1.5 -4.8l3.3 -2.7M1301.4 868.0l2.5 -2.4l2.3 -2.6l3.8 -0.2M1318.3 871.9l0.4 -5.5M1310.0 862.8l5.0 0.3l3.6 3.4M1335.3 863.6l-3.6 -3.5l-4.3 1.1l-4.2 0.5M1323.2 861.7l-1.4 3.3l-3.2 1.5M1329.1 844.2l-3.4 3.4l-4.5 1.7M1305.8 897.6l-4.3 -1.5l-4.3 2.9l-4.2 -1.6M1305.8 897.6l2.0 5.3l-1.8 5.4l-0.1 3.4M1297.6 914.7l-1.0 -0.4l-4.1 -2.8l-4.9 -0.4M1287.6 911.1l-0.5 -4.3M1310.7 893.7l-3.1 1.1l-1.8 2.8M1288.5 889.4l1.6 4.3l2.9 3.7M1273.3 900.5l5.0 1.3l3.2 5.1l5.7 -0.0M1298.2 929.9l2.5 -4.3l-2.8 -5.4l1.1 -1.4M1281.6 919.5l3.2 -2.0l-0.9 -4.8l3.7 -1.6M1225.4 834.3l4.3 -2.6l4.9 1.5M1225.4 834.3l1.7 4.5l-4.7 4.2l2.5 4.6M1224.9 847.6l3.8 2.8l4.8 -0.3M1234.6 833.2l3.9 3.9M1233.5 850.1l4.4 -2.4M1223.5 832.3l1.9 2.0M1236.9 823.9l-0.3 4.8l-2.0 4.5M1234.1 866.2l1.1 -5.4l0.9 -5.4l-2.6 -5.3M1252.1 831.5l-3.6 4.2l-5.5 -0.3l-4.6 1.7M1250.2 850.2l-4.5 1.0l-3.2 -4.9l-4.6 1.4M1300.6 837.3l4.1 0.8l4.1 -0.7M1296.6 841.9l-1.2 3.8l0.9 3.6l1.8 3.5M1308.8 837.4l3.2 3.0l0.9 4.7l3.6 2.6M1316.5 847.7l-4.9 0.3l-1.3 4.5l-2.8 2.9M1298.1 852.8l5.3 -0.9l4.1 3.5M1293.9 819.2l1.0 6.5l0.7 6.6l5.0 5.0M1318.0 827.6l-2.7 3.6l-5.7 0.8l-0.8 5.4M1284.5 842.0l4.0 0.6l4.1 -1.5l4.0 0.8M1291.6 862.7l2.3 -3.2l0.9 -4.1l3.3 -2.6M1321.2 849.3l-4.6 -1.5M1310.0 862.8l-0.6 -3.9l-1.9 -3.5" fill="none" stroke="#686868" stroke-width="1.45" stroke-linecap="round" stroke-linejoin="round"/><path id="gulfs" d="M1036.3 877.6l1.6 -2.1l2.1 -1.6l0.4 -2.1l0.1 -3.9l2.4 -2.3l3.7 1.2l0.1 2.1l1.1 2.9l2.3 2.2l2.7 0.3l1.9 -1.1l1.8 -1.4l2.2 0l2.8 1.2l1.4 1.3l1.1 2.5l3 0.4l1.9 2.1l2.8 1.7l2.2 0.7l2.9 0.2l3.3 1.1l1.7 -2.6l0.8 -2.4l3.7 0l1.6 2.2l2.2 2.8l0.5 2.3l1.9 2.7l1.1 3.4l-0.4 2.8l-0.1 2.5l-0.6 3.7l0.2 2.9l1.1 3.3l1.2 3.7l-2.5 -1.2l-2 -2.2l-0.4 -2.8l-1.5 -1.2l-2.3 -1.3l-2.9 0.7l-0.8 3l-3.7 -1.2l-2 -2l-1.7 -1.7l-1.5 -2.6l-2.3 -1.2l-2.3 0l-2.6 -1.2l-3 0.5l-2 0.7l-2.8 -1.5l-2.2 0.3l-2.3 1l-2.6 1.5l-2.5 -2.5l-2.3 0.4l-1.5 2.1l-2.3 0.4l-2.6 -0.4l-1 -2.5l-2.8 0l-1.2 -3.7l1.2 -3.7l-0.3 -3.1l-1.5 -1.9l0.6 -3.7zM1822.1 869.4l0.2 -2.3l1.4 -2.6l0 -3.3l2 -2.5l1.1 -1.8l2.5 -1l0.6 -2.1l3 0.2l2.3 -0.5l1.7 -1.6l1.7 -1.1l3.3 1.4l2.9 1.6l0.9 3l-2.1 3.2l-1.7 2.1l-2 0.1l-1.6 2.5l-2.2 0.3l-2.2 0.7l-1.5 1.9l-2.4 0.9l-1.3 1.4l-3.6 0.1l-2.2 -0.2l-1.7 1.4zM1869.1 869.8l1.8 -2.3l2.6 -0.6l2.4 -0.7l2.2 2.9l1.5 2.1l-0.2 2.7l-1 3.5l-3 0.1l-2 1.1l-2.8 -1.9l-0.9 -3z" fill="#ffffff" stroke="#686868" stroke-width="1.45" stroke-linejoin="round"/><path id="islets" d="M1588.3 1209.8h2.2v1.8h-2.2zM1598.3 1218.5h2.2v1.8h-2.2zM1593.8 1240.3h2.2v1.8h-2.2zM1531.2 1351.4h2.2v1.8h-2.2zM1763.5 1335.2h2.2v1.8h-2.2zM1833.1 1347.7h2.2v1.8h-2.2zM1846.7 1346.4h2.2v1.8h-2.2zM1787.1 1401.1h2.2v1.8h-2.2zM1795.8 1401.1h2.2v1.8h-2.2zM1692.7 1407.3h2.2v1.8h-2.2zM1905.1 1370.0h2.2v1.8h-2.2zM1926.2 1393.6h2.2v1.8h-2.2zM1875.3 1437.1h2.2v1.8h-2.2zM1959.8 1352.6h2.2v1.8h-2.2zM1968.5 1337.2h2.2v1.8h-2.2zM1974.7 1340.2h2.2v1.8h-2.2zM1973.4 1204.8h2.2v1.8h-2.2zM1973.4 1248.3h2.2v1.8h-2.2zM1983.4 1249.5h2.2v1.8h-2.2zM1743.6 1188.2h2.2v1.8h-2.2zM1731.9 1180.0h2.2v1.8h-2.2zM1764.7 1249.5h2.2v1.8h-2.2zM1756.0 1267.7h2.2v1.8h-2.2zM1835.5 1280.6h2.2v1.8h-2.2zM1799.5 1219.0h2.2v1.8h-2.2zM1669.1 1198.6h2.2v1.8h-2.2zM1657.9 1192.4h2.2v1.8h-2.2zM1655.4 1186.2h2.2v1.8h-2.2zM1871.6 1162.6h2.2v1.8h-2.2zM1882.8 1165.1h2.2v1.8h-2.2zM1890.2 1163.8h2.2v1.8h-2.2zM1876.5 1184.9h2.2v1.8h-2.2zM1882.8 1184.9h2.2v1.8h-2.2zM1925.0 1275.6h2.2v1.8h-2.2zM1952.3 1281.8h2.2v1.8h-2.2zM1941.1 1476.9h2.2v1.8h-2.2zM2015.7 1471.9h2.2v1.8h-2.2zM1718.8 1464.4h2.2v1.8h-2.2zM1849.2 1476.9h2.2v1.8h-2.2zM2092.7 1473.1h2.2v1.8h-2.2zM1394.2 1459.2h2.2v1.8h-2.2zM1429.0 1532.5h2.2v1.8h-2.2zM1445.9 1527.1h2.2v1.8h-2.2zM1498.5 1542.0h2.2v1.8h-2.2zM1691.8 1407.8h2.2v1.8h-2.2zM1695.5 1411.5h2.2v1.8h-2.2zM1787.5 1401.1h2.2v1.8h-2.2zM1796.2 1401.1h2.2v1.8h-2.2zM1875.2 1436.4h2.2v1.8h-2.2zM1880.6 1450.0h2.2v1.8h-2.2zM1892.6 1464.2h2.2v1.8h-2.2zM1849.6 1476.6h2.2v1.8h-2.2zM1885.1 1483.1h2.2v1.8h-2.2zM1940.3 1469.2h2.2v1.8h-2.2zM1751.4 1527.8h2.2v1.8h-2.2zM1869.5 1586.7h2.2v1.8h-2.2zM1796.2 1604.1h2.2v1.8h-2.2zM1947.7 1554.4h2.2v1.8h-2.2zM1953.9 1551.1h2.2v1.8h-2.2zM1398.1 1112.9h1.8v1.6h-1.8zM1399.3 1115.3h1.8v1.6h-1.8zM1409.3 1116.0h1.8v1.6h-1.8zM1417.4 1114.1h1.8v1.6h-1.8zM1429.2 1113.5h1.8v1.6h-1.8zM1473.9 1122.2h1.8v1.6h-1.8zM1398.7 1134.0h1.8v1.6h-1.8zM1424.8 1137.1h1.8v1.6h-1.8zM1418.0 1130.9h1.8v1.6h-1.8zM1501.8 1145.2h1.8v1.6h-1.8zM1494.4 1133.4h1.8v1.6h-1.8zM1349.0 1176.8h1.8v1.6h-1.8zM1340.3 1170.6h1.8v1.6h-1.8zM1359.0 1056.3h1.8v1.6h-1.8zM1352.8 1040.2h1.8v1.6h-1.8zM1355.2 1043.3h1.8v1.6h-1.8zM1363.9 1043.9h1.8v1.6h-1.8zM1306.2 1019.1h1.8v1.6h-1.8zM1315.5 1022.2h1.8v1.6h-1.8zM1533.5 1046.4h1.8v1.6h-1.8zM1524.8 1035.8h1.8v1.6h-1.8zM1532.9 1062.6h1.8v1.6h-1.8zM1381.3 1105.4h1.8v1.6h-1.8zM1373.3 1103.5h1.8v1.6h-1.8zM1469.6 692.4h2v1.6h-2zM1609.6 547.5h2v1.6h-2zM1535.0 797.3h2v1.6h-2zM1529.5 827.7h2v1.6h-2zM1506.0 869.1h2v1.6h-2zM1435.6 867.7h2v1.6h-2zM1579.2 889.8h2v1.6h-2zM1519.8 884.3h2v1.6h-2zM1412.2 882.9h2v1.6h-2zM1334.9 922.9h2v1.6h-2zM1573.7 922.9h2v1.6h-2zM1591.6 931.2h2v1.6h-2zM857.5 728.9h2v1.6h-2zM860.0 732.6h2v1.6h-2zM869.9 731.4h2v1.6h-2zM877.4 738.8h2v1.6h-2zM1024.0 938.8h2v1.6h-2zM1028.9 952.5h2v1.6h-2zM1037.6 959.9h2v1.6h-2zM1048.8 966.2h2v1.6h-2zM1067.4 981.1h2v1.6h-2zM1069.9 987.3h2v1.6h-2zM1065.0 1002.2h2v1.6h-2zM1077.4 1002.2h2v1.6h-2zM997.9 994.7h2v1.6h-2zM1017.8 977.3h2v1.6h-2zM1104.7 1013.4h2v1.6h-2zM1117.1 1014.6h2v1.6h-2zM1359.4 820.8h2v1.6h-2zM1375.5 861.8h2v1.6h-2zM1435.1 868.0h2v1.6h-2zM1744.0 1188.4h2v1.6h-2zM1763.8 1249.3h2v1.6h-2zM1756.4 1267.9h2v1.6h-2zM1746.5 1289.0h2v1.6h-2zM1762.6 1294.0h2v1.6h-2zM1835.9 1280.8h2v1.6h-2zM1890.6 1165.5h2v1.6h-2zM1881.9 1166.0h2v1.6h-2zM1869.4 1162.3h2v1.6h-2zM1875.6 1184.7h2v1.6h-2zM1883.1 1185.4h2v1.6h-2zM1900.5 1203.3h2v1.6h-2zM1917.4 1213.2h2v1.6h-2zM1931.5 1213.2h2v1.6h-2zM1971.3 1244.3h2v1.6h-2zM1983.7 1250.0h2v1.6h-2zM1951.4 1276.6h2v1.6h-2zM1950.2 1281.6h2v1.6h-2zM1989.9 1318.8h2v1.6h-2zM1968.8 1337.0h2v1.6h-2zM1974.5 1340.4h2v1.6h-2zM1960.1 1353.6h2v1.6h-2zM2007.3 1355.3h2v1.6h-2zM2034.7 1376.7h2v1.6h-2zM1903.0 1370.3h2v1.6h-2zM1906.7 1370.3h2v1.6h-2zM1926.6 1393.4h2v1.6h-2zM1787.4 1400.8h2v1.6h-2zM1796.1 1401.6h2v1.6h-2zM1763.8 1335.0h2v1.6h-2zM1833.4 1347.9h2v1.6h-2zM1847.1 1346.9h2v1.6h-2zM1882.6 1348.6h2v1.6h-2zM2345.2 1395.1h2v1.6h-2zM2368.8 1408.3h2v1.6h-2zM2064.5 1395.8h2v1.6h-2zM2069.4 1404.5h2v1.6h-2zM2083.1 1395.8h2v1.6h-2zM1881.0 1349.0h2v1.6h-2zM1882.7 1351.0h2v1.6h-2zM1959.7 1353.5h2v1.6h-2zM1968.9 1337.1h2v1.6h-2zM1974.7 1340.3h2v1.6h-2zM1903.8 1370.6h2v1.6h-2zM1906.8 1370.6h2v1.6h-2zM1926.7 1393.2h2v1.6h-2zM2035.0 1376.8h2v1.6h-2zM2064.1 1396.7h2v1.6h-2zM2068.3 1401.2h2v1.6h-2zM2082.7 1395.0h2v1.6h-2zM1940.6 1469.5h2v1.6h-2zM1885.2 1483.2h2v1.6h-2zM1881.0 1449.6h2v1.6h-2zM1892.7 1464.5h2v1.6h-2zM2105.6 1469.5h2v1.6h-2zM2134.4 1438.0h2v1.6h-2zM2074.8 1446.4h2v1.6h-2zM1059.4 1212.2h2v1.6h-2zM1060.9 1214.0h2v1.6h-2zM1140.9 1252.0h2v1.6h-2zM1157.8 1270.6h2v1.6h-2zM1189.3 1320.3h2v1.6h-2zM1190.6 1324.8h2v1.6h-2zM1160.7 1304.2h2v1.6h-2zM1170.7 1310.4h2v1.6h-2zM1396.8 1114.1h2v1.6h-2zM1411.7 1116.6h2v1.6h-2zM1399.2 1134.0h2v1.6h-2zM1473.8 1122.8h2v1.6h-2zM1357.0 1436.6h2v1.6h-2zM1371.9 1432.1h2v1.6h-2zM1427.1 1281.8h2v1.6h-2zM1428.6 1284.3h2v1.6h-2zM1492.4 1296.7h2v1.6h-2zM1448.9 1310.4h2v1.6h-2zM1496.1 1176.7h2v1.6h-2zM1500.6 1179.2h2v1.6h-2zM1383.1 1210.5h2v1.6h-2zM1342.1 1289.3h2v1.6h-2zM1347.1 1286.0h2v1.6h-2zM1355.0 1290.5h2v1.6h-2zM1599.2 1218.5h2v1.6h-2zM1588.1 1209.8h2v1.6h-2zM1531.4 1351.4h2v1.6h-2z" fill="#b89aac" stroke="#686868" stroke-width="0.9" stroke-linejoin="round"/></svg>
</body>
</html>
